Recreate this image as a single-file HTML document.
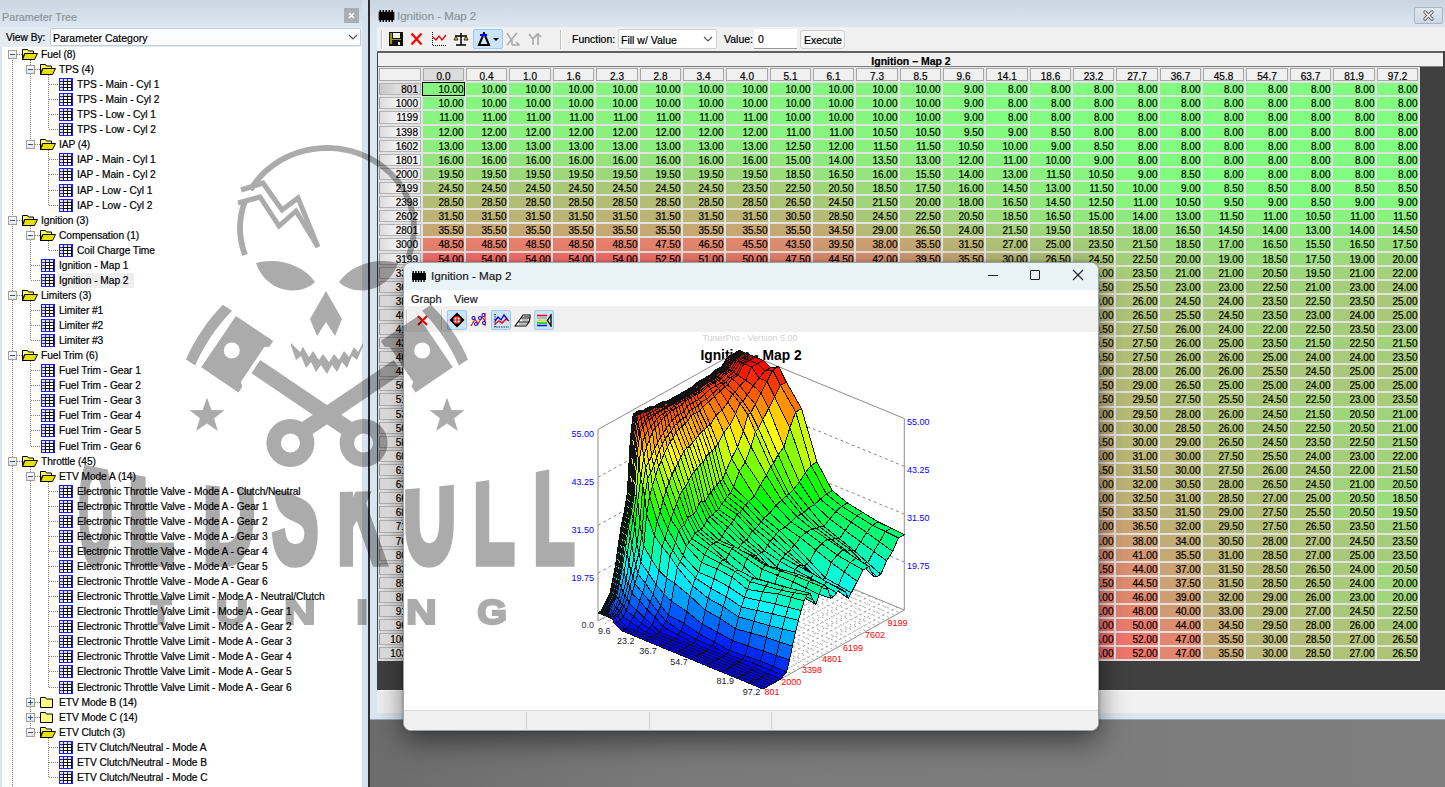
<!DOCTYPE html><html><head><meta charset="utf-8"><style>
*{margin:0;padding:0;box-sizing:border-box}
html,body{width:1445px;height:787px;overflow:hidden;background:#fff}
body{position:relative;font-family:"Liberation Sans",sans-serif;font-size:11px;color:#000}
.a{position:absolute}
.t{position:absolute;white-space:nowrap;line-height:1;-webkit-text-stroke:0.2px currentColor}
</style></head><body><div class="a" style="left:0;top:0;width:362px;height:787px;background:#fff"></div><div class="a" style="left:0;top:0;width:362px;height:27px;background:linear-gradient(#c9d5e1,#dde7f1)"></div><div class="t" style="left:2px;top:12px;font-size:10.8px;color:#8d949b">Parameter Tree</div><div class="a" style="left:344px;top:8px;width:15px;height:15px;background:#a6aeb6"></div><svg class="a" style="left:344px;top:8px" width="15" height="15"><path d="M5 5L10 10M10 5L5 10" stroke="#fff" stroke-width="1.6"/></svg><div class="a" style="left:0;top:27px;width:362px;height:20px;background:#e3ebf3"></div><div class="t" style="left:6px;top:33px;font-size:10.2px">View By:</div><div class="a" style="left:50px;top:28px;width:311px;height:18px;background:#fbfcfd;border:1px solid #c0cedc;border-radius:2px"></div><div class="t" style="left:53px;top:33px;font-size:10.5px">Parameter Category</div><svg class="a" style="left:348px;top:33px" width="10" height="8"><path d="M1 2L5 6L9 2" stroke="#555" stroke-width="1.2" fill="none"/></svg><div class="a" style="left:0;top:47px;width:2px;height:740px;background:#d9e4ef"></div><div class="a" style="left:30px;top:60px;width:1px;height:84px;background-image:linear-gradient(#000 50%,transparent 50%);background-size:1px 2px;opacity:.5"></div><div class="a" style="left:48px;top:75px;width:1px;height:54px;background-image:linear-gradient(#000 50%,transparent 50%);background-size:1px 2px;opacity:.5"></div><div class="a" style="left:48px;top:150px;width:1px;height:55px;background-image:linear-gradient(#000 50%,transparent 50%);background-size:1px 2px;opacity:.5"></div><div class="a" style="left:30px;top:226px;width:1px;height:54px;background-image:linear-gradient(#000 50%,transparent 50%);background-size:1px 2px;opacity:.5"></div><div class="a" style="left:48px;top:241px;width:1px;height:9px;background-image:linear-gradient(#000 50%,transparent 50%);background-size:1px 2px;opacity:.5"></div><div class="a" style="left:30px;top:301px;width:1px;height:39px;background-image:linear-gradient(#000 50%,transparent 50%);background-size:1px 2px;opacity:.5"></div><div class="a" style="left:30px;top:361px;width:1px;height:85px;background-image:linear-gradient(#000 50%,transparent 50%);background-size:1px 2px;opacity:.5"></div><div class="a" style="left:30px;top:467px;width:1px;height:265px;background-image:linear-gradient(#000 50%,transparent 50%);background-size:1px 2px;opacity:.5"></div><div class="a" style="left:48px;top:482px;width:1px;height:205px;background-image:linear-gradient(#000 50%,transparent 50%);background-size:1px 2px;opacity:.5"></div><div class="a" style="left:48px;top:738px;width:1px;height:39px;background-image:linear-gradient(#000 50%,transparent 50%);background-size:1px 2px;opacity:.5"></div><div class="a" style="left:12px;top:54px;width:1px;height:733px;background-image:linear-gradient(#000 50%,transparent 50%);background-size:1px 2px;opacity:.5"></div><div class="a" style="left:17px;top:54px;width:5px;height:1px;background-image:linear-gradient(90deg,#000 50%,transparent 50%);background-size:2px 1px;opacity:.5"></div><div class="a" style="left:8px;top:50px;width:9px;height:9px;border:1px solid #a0a0a0;background:linear-gradient(#fff,#e4e4e4)"></div><div class="a" style="left:10px;top:54px;width:5px;height:1px;background:#3050a0"></div><svg class="a" style="left:22px;top:49px" width="16" height="11" viewBox="0 0 16 11"><path d="M0.5 0.5h5l1 1.5h5v2.5h-9L0.5 10.5z" fill="#ffff60" stroke="#000" stroke-width="1"/><path d="M0.5 10.5L3 4.5h12.5l-3 6z" fill="#e8e000" stroke="#000" stroke-width="1"/></svg><div class="t" style="left:41px;top:50px;font-size:10.2px;letter-spacing:-0.05px">Fuel (8)</div><div class="a" style="left:35px;top:69px;width:5px;height:1px;background-image:linear-gradient(90deg,#000 50%,transparent 50%);background-size:2px 1px;opacity:.5"></div><div class="a" style="left:26px;top:65px;width:9px;height:9px;border:1px solid #a0a0a0;background:linear-gradient(#fff,#e4e4e4)"></div><div class="a" style="left:28px;top:69px;width:5px;height:1px;background:#3050a0"></div><svg class="a" style="left:40px;top:64px" width="16" height="11" viewBox="0 0 16 11"><path d="M0.5 0.5h5l1 1.5h5v2.5h-9L0.5 10.5z" fill="#ffff60" stroke="#000" stroke-width="1"/><path d="M0.5 10.5L3 4.5h12.5l-3 6z" fill="#e8e000" stroke="#000" stroke-width="1"/></svg><div class="t" style="left:59px;top:65px;font-size:10.2px;letter-spacing:-0.05px">TPS (4)</div><div class="a" style="left:49px;top:84px;width:10px;height:1px;background-image:linear-gradient(90deg,#000 50%,transparent 50%);background-size:2px 1px;opacity:.5"></div><svg class="a" style="left:59px;top:78px" width="14" height="13" viewBox="0 0 14 13" shape-rendering="crispEdges"><rect x="0" y="0" width="14" height="13" fill="#1a1aff"/><rect x="4" y="3" width="9" height="9" fill="#111"/><rect x="1" y="1" width="3" height="2" fill="#e6e6a8"/><rect x="5" y="1" width="3" height="2" fill="#e6e6a8"/><rect x="9" y="1" width="3" height="2" fill="#e6e6a8"/><rect x="1" y="4" width="3" height="2" fill="#e6e6a8"/><rect x="5" y="4" width="3" height="2" fill="#fff"/><rect x="9" y="4" width="3" height="2" fill="#fff"/><rect x="1" y="7" width="3" height="2" fill="#e6e6a8"/><rect x="5" y="7" width="3" height="2" fill="#fff"/><rect x="9" y="7" width="3" height="2" fill="#fff"/><rect x="1" y="10" width="3" height="2" fill="#e6e6a8"/><rect x="5" y="10" width="3" height="2" fill="#fff"/><rect x="9" y="10" width="3" height="2" fill="#fff"/></svg><div class="t" style="left:77px;top:80px;font-size:10.2px;letter-spacing:-0.05px">TPS - Main - Cyl 1</div><div class="a" style="left:49px;top:99px;width:10px;height:1px;background-image:linear-gradient(90deg,#000 50%,transparent 50%);background-size:2px 1px;opacity:.5"></div><svg class="a" style="left:59px;top:93px" width="14" height="13" viewBox="0 0 14 13" shape-rendering="crispEdges"><rect x="0" y="0" width="14" height="13" fill="#1a1aff"/><rect x="4" y="3" width="9" height="9" fill="#111"/><rect x="1" y="1" width="3" height="2" fill="#e6e6a8"/><rect x="5" y="1" width="3" height="2" fill="#e6e6a8"/><rect x="9" y="1" width="3" height="2" fill="#e6e6a8"/><rect x="1" y="4" width="3" height="2" fill="#e6e6a8"/><rect x="5" y="4" width="3" height="2" fill="#fff"/><rect x="9" y="4" width="3" height="2" fill="#fff"/><rect x="1" y="7" width="3" height="2" fill="#e6e6a8"/><rect x="5" y="7" width="3" height="2" fill="#fff"/><rect x="9" y="7" width="3" height="2" fill="#fff"/><rect x="1" y="10" width="3" height="2" fill="#e6e6a8"/><rect x="5" y="10" width="3" height="2" fill="#fff"/><rect x="9" y="10" width="3" height="2" fill="#fff"/></svg><div class="t" style="left:77px;top:95px;font-size:10.2px;letter-spacing:-0.05px">TPS - Main - Cyl 2</div><div class="a" style="left:49px;top:114px;width:10px;height:1px;background-image:linear-gradient(90deg,#000 50%,transparent 50%);background-size:2px 1px;opacity:.5"></div><svg class="a" style="left:59px;top:108px" width="14" height="13" viewBox="0 0 14 13" shape-rendering="crispEdges"><rect x="0" y="0" width="14" height="13" fill="#1a1aff"/><rect x="4" y="3" width="9" height="9" fill="#111"/><rect x="1" y="1" width="3" height="2" fill="#e6e6a8"/><rect x="5" y="1" width="3" height="2" fill="#e6e6a8"/><rect x="9" y="1" width="3" height="2" fill="#e6e6a8"/><rect x="1" y="4" width="3" height="2" fill="#e6e6a8"/><rect x="5" y="4" width="3" height="2" fill="#fff"/><rect x="9" y="4" width="3" height="2" fill="#fff"/><rect x="1" y="7" width="3" height="2" fill="#e6e6a8"/><rect x="5" y="7" width="3" height="2" fill="#fff"/><rect x="9" y="7" width="3" height="2" fill="#fff"/><rect x="1" y="10" width="3" height="2" fill="#e6e6a8"/><rect x="5" y="10" width="3" height="2" fill="#fff"/><rect x="9" y="10" width="3" height="2" fill="#fff"/></svg><div class="t" style="left:77px;top:110px;font-size:10.2px;letter-spacing:-0.05px">TPS - Low - Cyl 1</div><div class="a" style="left:49px;top:129px;width:10px;height:1px;background-image:linear-gradient(90deg,#000 50%,transparent 50%);background-size:2px 1px;opacity:.5"></div><svg class="a" style="left:59px;top:123px" width="14" height="13" viewBox="0 0 14 13" shape-rendering="crispEdges"><rect x="0" y="0" width="14" height="13" fill="#1a1aff"/><rect x="4" y="3" width="9" height="9" fill="#111"/><rect x="1" y="1" width="3" height="2" fill="#e6e6a8"/><rect x="5" y="1" width="3" height="2" fill="#e6e6a8"/><rect x="9" y="1" width="3" height="2" fill="#e6e6a8"/><rect x="1" y="4" width="3" height="2" fill="#e6e6a8"/><rect x="5" y="4" width="3" height="2" fill="#fff"/><rect x="9" y="4" width="3" height="2" fill="#fff"/><rect x="1" y="7" width="3" height="2" fill="#e6e6a8"/><rect x="5" y="7" width="3" height="2" fill="#fff"/><rect x="9" y="7" width="3" height="2" fill="#fff"/><rect x="1" y="10" width="3" height="2" fill="#e6e6a8"/><rect x="5" y="10" width="3" height="2" fill="#fff"/><rect x="9" y="10" width="3" height="2" fill="#fff"/></svg><div class="t" style="left:77px;top:125px;font-size:10.2px;letter-spacing:-0.05px">TPS - Low - Cyl 2</div><div class="a" style="left:35px;top:144px;width:5px;height:1px;background-image:linear-gradient(90deg,#000 50%,transparent 50%);background-size:2px 1px;opacity:.5"></div><div class="a" style="left:26px;top:140px;width:9px;height:9px;border:1px solid #a0a0a0;background:linear-gradient(#fff,#e4e4e4)"></div><div class="a" style="left:28px;top:144px;width:5px;height:1px;background:#3050a0"></div><svg class="a" style="left:40px;top:139px" width="16" height="11" viewBox="0 0 16 11"><path d="M0.5 0.5h5l1 1.5h5v2.5h-9L0.5 10.5z" fill="#ffff60" stroke="#000" stroke-width="1"/><path d="M0.5 10.5L3 4.5h12.5l-3 6z" fill="#e8e000" stroke="#000" stroke-width="1"/></svg><div class="t" style="left:59px;top:140px;font-size:10.2px;letter-spacing:-0.05px">IAP (4)</div><div class="a" style="left:49px;top:159px;width:10px;height:1px;background-image:linear-gradient(90deg,#000 50%,transparent 50%);background-size:2px 1px;opacity:.5"></div><svg class="a" style="left:59px;top:153px" width="14" height="13" viewBox="0 0 14 13" shape-rendering="crispEdges"><rect x="0" y="0" width="14" height="13" fill="#1a1aff"/><rect x="4" y="3" width="9" height="9" fill="#111"/><rect x="1" y="1" width="3" height="2" fill="#e6e6a8"/><rect x="5" y="1" width="3" height="2" fill="#e6e6a8"/><rect x="9" y="1" width="3" height="2" fill="#e6e6a8"/><rect x="1" y="4" width="3" height="2" fill="#e6e6a8"/><rect x="5" y="4" width="3" height="2" fill="#fff"/><rect x="9" y="4" width="3" height="2" fill="#fff"/><rect x="1" y="7" width="3" height="2" fill="#e6e6a8"/><rect x="5" y="7" width="3" height="2" fill="#fff"/><rect x="9" y="7" width="3" height="2" fill="#fff"/><rect x="1" y="10" width="3" height="2" fill="#e6e6a8"/><rect x="5" y="10" width="3" height="2" fill="#fff"/><rect x="9" y="10" width="3" height="2" fill="#fff"/></svg><div class="t" style="left:77px;top:155px;font-size:10.2px;letter-spacing:-0.05px">IAP - Main - Cyl 1</div><div class="a" style="left:49px;top:174px;width:10px;height:1px;background-image:linear-gradient(90deg,#000 50%,transparent 50%);background-size:2px 1px;opacity:.5"></div><svg class="a" style="left:59px;top:168px" width="14" height="13" viewBox="0 0 14 13" shape-rendering="crispEdges"><rect x="0" y="0" width="14" height="13" fill="#1a1aff"/><rect x="4" y="3" width="9" height="9" fill="#111"/><rect x="1" y="1" width="3" height="2" fill="#e6e6a8"/><rect x="5" y="1" width="3" height="2" fill="#e6e6a8"/><rect x="9" y="1" width="3" height="2" fill="#e6e6a8"/><rect x="1" y="4" width="3" height="2" fill="#e6e6a8"/><rect x="5" y="4" width="3" height="2" fill="#fff"/><rect x="9" y="4" width="3" height="2" fill="#fff"/><rect x="1" y="7" width="3" height="2" fill="#e6e6a8"/><rect x="5" y="7" width="3" height="2" fill="#fff"/><rect x="9" y="7" width="3" height="2" fill="#fff"/><rect x="1" y="10" width="3" height="2" fill="#e6e6a8"/><rect x="5" y="10" width="3" height="2" fill="#fff"/><rect x="9" y="10" width="3" height="2" fill="#fff"/></svg><div class="t" style="left:77px;top:170px;font-size:10.2px;letter-spacing:-0.05px">IAP - Main - Cyl 2</div><div class="a" style="left:49px;top:190px;width:10px;height:1px;background-image:linear-gradient(90deg,#000 50%,transparent 50%);background-size:2px 1px;opacity:.5"></div><svg class="a" style="left:59px;top:184px" width="14" height="13" viewBox="0 0 14 13" shape-rendering="crispEdges"><rect x="0" y="0" width="14" height="13" fill="#1a1aff"/><rect x="4" y="3" width="9" height="9" fill="#111"/><rect x="1" y="1" width="3" height="2" fill="#e6e6a8"/><rect x="5" y="1" width="3" height="2" fill="#e6e6a8"/><rect x="9" y="1" width="3" height="2" fill="#e6e6a8"/><rect x="1" y="4" width="3" height="2" fill="#e6e6a8"/><rect x="5" y="4" width="3" height="2" fill="#fff"/><rect x="9" y="4" width="3" height="2" fill="#fff"/><rect x="1" y="7" width="3" height="2" fill="#e6e6a8"/><rect x="5" y="7" width="3" height="2" fill="#fff"/><rect x="9" y="7" width="3" height="2" fill="#fff"/><rect x="1" y="10" width="3" height="2" fill="#e6e6a8"/><rect x="5" y="10" width="3" height="2" fill="#fff"/><rect x="9" y="10" width="3" height="2" fill="#fff"/></svg><div class="t" style="left:77px;top:186px;font-size:10.2px;letter-spacing:-0.05px">IAP - Low - Cyl 1</div><div class="a" style="left:49px;top:205px;width:10px;height:1px;background-image:linear-gradient(90deg,#000 50%,transparent 50%);background-size:2px 1px;opacity:.5"></div><svg class="a" style="left:59px;top:199px" width="14" height="13" viewBox="0 0 14 13" shape-rendering="crispEdges"><rect x="0" y="0" width="14" height="13" fill="#1a1aff"/><rect x="4" y="3" width="9" height="9" fill="#111"/><rect x="1" y="1" width="3" height="2" fill="#e6e6a8"/><rect x="5" y="1" width="3" height="2" fill="#e6e6a8"/><rect x="9" y="1" width="3" height="2" fill="#e6e6a8"/><rect x="1" y="4" width="3" height="2" fill="#e6e6a8"/><rect x="5" y="4" width="3" height="2" fill="#fff"/><rect x="9" y="4" width="3" height="2" fill="#fff"/><rect x="1" y="7" width="3" height="2" fill="#e6e6a8"/><rect x="5" y="7" width="3" height="2" fill="#fff"/><rect x="9" y="7" width="3" height="2" fill="#fff"/><rect x="1" y="10" width="3" height="2" fill="#e6e6a8"/><rect x="5" y="10" width="3" height="2" fill="#fff"/><rect x="9" y="10" width="3" height="2" fill="#fff"/></svg><div class="t" style="left:77px;top:201px;font-size:10.2px;letter-spacing:-0.05px">IAP - Low - Cyl 2</div><div class="a" style="left:17px;top:220px;width:5px;height:1px;background-image:linear-gradient(90deg,#000 50%,transparent 50%);background-size:2px 1px;opacity:.5"></div><div class="a" style="left:8px;top:216px;width:9px;height:9px;border:1px solid #a0a0a0;background:linear-gradient(#fff,#e4e4e4)"></div><div class="a" style="left:10px;top:220px;width:5px;height:1px;background:#3050a0"></div><svg class="a" style="left:22px;top:215px" width="16" height="11" viewBox="0 0 16 11"><path d="M0.5 0.5h5l1 1.5h5v2.5h-9L0.5 10.5z" fill="#ffff60" stroke="#000" stroke-width="1"/><path d="M0.5 10.5L3 4.5h12.5l-3 6z" fill="#e8e000" stroke="#000" stroke-width="1"/></svg><div class="t" style="left:41px;top:216px;font-size:10.2px;letter-spacing:-0.05px">Ignition (3)</div><div class="a" style="left:35px;top:235px;width:5px;height:1px;background-image:linear-gradient(90deg,#000 50%,transparent 50%);background-size:2px 1px;opacity:.5"></div><div class="a" style="left:26px;top:231px;width:9px;height:9px;border:1px solid #a0a0a0;background:linear-gradient(#fff,#e4e4e4)"></div><div class="a" style="left:28px;top:235px;width:5px;height:1px;background:#3050a0"></div><svg class="a" style="left:40px;top:230px" width="16" height="11" viewBox="0 0 16 11"><path d="M0.5 0.5h5l1 1.5h5v2.5h-9L0.5 10.5z" fill="#ffff60" stroke="#000" stroke-width="1"/><path d="M0.5 10.5L3 4.5h12.5l-3 6z" fill="#e8e000" stroke="#000" stroke-width="1"/></svg><div class="t" style="left:59px;top:231px;font-size:10.2px;letter-spacing:-0.05px">Compensation (1)</div><div class="a" style="left:49px;top:250px;width:10px;height:1px;background-image:linear-gradient(90deg,#000 50%,transparent 50%);background-size:2px 1px;opacity:.5"></div><svg class="a" style="left:59px;top:244px" width="14" height="13" viewBox="0 0 14 13" shape-rendering="crispEdges"><rect x="0" y="0" width="14" height="13" fill="#1a1aff"/><rect x="4" y="3" width="9" height="9" fill="#111"/><rect x="1" y="1" width="3" height="2" fill="#e6e6a8"/><rect x="5" y="1" width="3" height="2" fill="#e6e6a8"/><rect x="9" y="1" width="3" height="2" fill="#e6e6a8"/><rect x="1" y="4" width="3" height="2" fill="#e6e6a8"/><rect x="5" y="4" width="3" height="2" fill="#fff"/><rect x="9" y="4" width="3" height="2" fill="#fff"/><rect x="1" y="7" width="3" height="2" fill="#e6e6a8"/><rect x="5" y="7" width="3" height="2" fill="#fff"/><rect x="9" y="7" width="3" height="2" fill="#fff"/><rect x="1" y="10" width="3" height="2" fill="#e6e6a8"/><rect x="5" y="10" width="3" height="2" fill="#fff"/><rect x="9" y="10" width="3" height="2" fill="#fff"/></svg><div class="t" style="left:77px;top:246px;font-size:10.2px;letter-spacing:-0.05px">Coil Charge Time</div><div class="a" style="left:31px;top:265px;width:10px;height:1px;background-image:linear-gradient(90deg,#000 50%,transparent 50%);background-size:2px 1px;opacity:.5"></div><svg class="a" style="left:41px;top:259px" width="14" height="13" viewBox="0 0 14 13" shape-rendering="crispEdges"><rect x="0" y="0" width="14" height="13" fill="#1a1aff"/><rect x="4" y="3" width="9" height="9" fill="#111"/><rect x="1" y="1" width="3" height="2" fill="#e6e6a8"/><rect x="5" y="1" width="3" height="2" fill="#e6e6a8"/><rect x="9" y="1" width="3" height="2" fill="#e6e6a8"/><rect x="1" y="4" width="3" height="2" fill="#e6e6a8"/><rect x="5" y="4" width="3" height="2" fill="#fff"/><rect x="9" y="4" width="3" height="2" fill="#fff"/><rect x="1" y="7" width="3" height="2" fill="#e6e6a8"/><rect x="5" y="7" width="3" height="2" fill="#fff"/><rect x="9" y="7" width="3" height="2" fill="#fff"/><rect x="1" y="10" width="3" height="2" fill="#e6e6a8"/><rect x="5" y="10" width="3" height="2" fill="#fff"/><rect x="9" y="10" width="3" height="2" fill="#fff"/></svg><div class="t" style="left:59px;top:261px;font-size:10.2px;letter-spacing:-0.05px">Ignition - Map 1</div><div class="a" style="left:31px;top:280px;width:10px;height:1px;background-image:linear-gradient(90deg,#000 50%,transparent 50%);background-size:2px 1px;opacity:.5"></div><svg class="a" style="left:41px;top:274px" width="14" height="13" viewBox="0 0 14 13" shape-rendering="crispEdges"><rect x="0" y="0" width="14" height="13" fill="#1a1aff"/><rect x="4" y="3" width="9" height="9" fill="#111"/><rect x="1" y="1" width="3" height="2" fill="#e6e6a8"/><rect x="5" y="1" width="3" height="2" fill="#e6e6a8"/><rect x="9" y="1" width="3" height="2" fill="#e6e6a8"/><rect x="1" y="4" width="3" height="2" fill="#e6e6a8"/><rect x="5" y="4" width="3" height="2" fill="#fff"/><rect x="9" y="4" width="3" height="2" fill="#fff"/><rect x="1" y="7" width="3" height="2" fill="#e6e6a8"/><rect x="5" y="7" width="3" height="2" fill="#fff"/><rect x="9" y="7" width="3" height="2" fill="#fff"/><rect x="1" y="10" width="3" height="2" fill="#e6e6a8"/><rect x="5" y="10" width="3" height="2" fill="#fff"/><rect x="9" y="10" width="3" height="2" fill="#fff"/></svg><div class="a" style="left:58px;top:273px;width:76px;height:15px;background:#eeeeee"></div><div class="t" style="left:59px;top:276px;font-size:10.2px;letter-spacing:-0.05px">Ignition - Map 2</div><div class="a" style="left:17px;top:295px;width:5px;height:1px;background-image:linear-gradient(90deg,#000 50%,transparent 50%);background-size:2px 1px;opacity:.5"></div><div class="a" style="left:8px;top:291px;width:9px;height:9px;border:1px solid #a0a0a0;background:linear-gradient(#fff,#e4e4e4)"></div><div class="a" style="left:10px;top:295px;width:5px;height:1px;background:#3050a0"></div><svg class="a" style="left:22px;top:290px" width="16" height="11" viewBox="0 0 16 11"><path d="M0.5 0.5h5l1 1.5h5v2.5h-9L0.5 10.5z" fill="#ffff60" stroke="#000" stroke-width="1"/><path d="M0.5 10.5L3 4.5h12.5l-3 6z" fill="#e8e000" stroke="#000" stroke-width="1"/></svg><div class="t" style="left:41px;top:291px;font-size:10.2px;letter-spacing:-0.05px">Limiters (3)</div><div class="a" style="left:31px;top:310px;width:10px;height:1px;background-image:linear-gradient(90deg,#000 50%,transparent 50%);background-size:2px 1px;opacity:.5"></div><svg class="a" style="left:41px;top:304px" width="14" height="13" viewBox="0 0 14 13" shape-rendering="crispEdges"><rect x="0" y="0" width="14" height="13" fill="#1a1aff"/><rect x="4" y="3" width="9" height="9" fill="#111"/><rect x="1" y="1" width="3" height="2" fill="#e6e6a8"/><rect x="5" y="1" width="3" height="2" fill="#e6e6a8"/><rect x="9" y="1" width="3" height="2" fill="#e6e6a8"/><rect x="1" y="4" width="3" height="2" fill="#e6e6a8"/><rect x="5" y="4" width="3" height="2" fill="#fff"/><rect x="9" y="4" width="3" height="2" fill="#fff"/><rect x="1" y="7" width="3" height="2" fill="#e6e6a8"/><rect x="5" y="7" width="3" height="2" fill="#fff"/><rect x="9" y="7" width="3" height="2" fill="#fff"/><rect x="1" y="10" width="3" height="2" fill="#e6e6a8"/><rect x="5" y="10" width="3" height="2" fill="#fff"/><rect x="9" y="10" width="3" height="2" fill="#fff"/></svg><div class="t" style="left:59px;top:306px;font-size:10.2px;letter-spacing:-0.05px">Limiter #1</div><div class="a" style="left:31px;top:325px;width:10px;height:1px;background-image:linear-gradient(90deg,#000 50%,transparent 50%);background-size:2px 1px;opacity:.5"></div><svg class="a" style="left:41px;top:319px" width="14" height="13" viewBox="0 0 14 13" shape-rendering="crispEdges"><rect x="0" y="0" width="14" height="13" fill="#1a1aff"/><rect x="4" y="3" width="9" height="9" fill="#111"/><rect x="1" y="1" width="3" height="2" fill="#e6e6a8"/><rect x="5" y="1" width="3" height="2" fill="#e6e6a8"/><rect x="9" y="1" width="3" height="2" fill="#e6e6a8"/><rect x="1" y="4" width="3" height="2" fill="#e6e6a8"/><rect x="5" y="4" width="3" height="2" fill="#fff"/><rect x="9" y="4" width="3" height="2" fill="#fff"/><rect x="1" y="7" width="3" height="2" fill="#e6e6a8"/><rect x="5" y="7" width="3" height="2" fill="#fff"/><rect x="9" y="7" width="3" height="2" fill="#fff"/><rect x="1" y="10" width="3" height="2" fill="#e6e6a8"/><rect x="5" y="10" width="3" height="2" fill="#fff"/><rect x="9" y="10" width="3" height="2" fill="#fff"/></svg><div class="t" style="left:59px;top:321px;font-size:10.2px;letter-spacing:-0.05px">Limiter #2</div><div class="a" style="left:31px;top:340px;width:10px;height:1px;background-image:linear-gradient(90deg,#000 50%,transparent 50%);background-size:2px 1px;opacity:.5"></div><svg class="a" style="left:41px;top:334px" width="14" height="13" viewBox="0 0 14 13" shape-rendering="crispEdges"><rect x="0" y="0" width="14" height="13" fill="#1a1aff"/><rect x="4" y="3" width="9" height="9" fill="#111"/><rect x="1" y="1" width="3" height="2" fill="#e6e6a8"/><rect x="5" y="1" width="3" height="2" fill="#e6e6a8"/><rect x="9" y="1" width="3" height="2" fill="#e6e6a8"/><rect x="1" y="4" width="3" height="2" fill="#e6e6a8"/><rect x="5" y="4" width="3" height="2" fill="#fff"/><rect x="9" y="4" width="3" height="2" fill="#fff"/><rect x="1" y="7" width="3" height="2" fill="#e6e6a8"/><rect x="5" y="7" width="3" height="2" fill="#fff"/><rect x="9" y="7" width="3" height="2" fill="#fff"/><rect x="1" y="10" width="3" height="2" fill="#e6e6a8"/><rect x="5" y="10" width="3" height="2" fill="#fff"/><rect x="9" y="10" width="3" height="2" fill="#fff"/></svg><div class="t" style="left:59px;top:336px;font-size:10.2px;letter-spacing:-0.05px">Limiter #3</div><div class="a" style="left:17px;top:355px;width:5px;height:1px;background-image:linear-gradient(90deg,#000 50%,transparent 50%);background-size:2px 1px;opacity:.5"></div><div class="a" style="left:8px;top:351px;width:9px;height:9px;border:1px solid #a0a0a0;background:linear-gradient(#fff,#e4e4e4)"></div><div class="a" style="left:10px;top:355px;width:5px;height:1px;background:#3050a0"></div><svg class="a" style="left:22px;top:350px" width="16" height="11" viewBox="0 0 16 11"><path d="M0.5 0.5h5l1 1.5h5v2.5h-9L0.5 10.5z" fill="#ffff60" stroke="#000" stroke-width="1"/><path d="M0.5 10.5L3 4.5h12.5l-3 6z" fill="#e8e000" stroke="#000" stroke-width="1"/></svg><div class="t" style="left:41px;top:351px;font-size:10.2px;letter-spacing:-0.05px">Fuel Trim (6)</div><div class="a" style="left:31px;top:370px;width:10px;height:1px;background-image:linear-gradient(90deg,#000 50%,transparent 50%);background-size:2px 1px;opacity:.5"></div><svg class="a" style="left:41px;top:364px" width="14" height="13" viewBox="0 0 14 13" shape-rendering="crispEdges"><rect x="0" y="0" width="14" height="13" fill="#1a1aff"/><rect x="4" y="3" width="9" height="9" fill="#111"/><rect x="1" y="1" width="3" height="2" fill="#e6e6a8"/><rect x="5" y="1" width="3" height="2" fill="#e6e6a8"/><rect x="9" y="1" width="3" height="2" fill="#e6e6a8"/><rect x="1" y="4" width="3" height="2" fill="#e6e6a8"/><rect x="5" y="4" width="3" height="2" fill="#fff"/><rect x="9" y="4" width="3" height="2" fill="#fff"/><rect x="1" y="7" width="3" height="2" fill="#e6e6a8"/><rect x="5" y="7" width="3" height="2" fill="#fff"/><rect x="9" y="7" width="3" height="2" fill="#fff"/><rect x="1" y="10" width="3" height="2" fill="#e6e6a8"/><rect x="5" y="10" width="3" height="2" fill="#fff"/><rect x="9" y="10" width="3" height="2" fill="#fff"/></svg><div class="t" style="left:59px;top:366px;font-size:10.2px;letter-spacing:-0.05px">Fuel Trim - Gear 1</div><div class="a" style="left:31px;top:385px;width:10px;height:1px;background-image:linear-gradient(90deg,#000 50%,transparent 50%);background-size:2px 1px;opacity:.5"></div><svg class="a" style="left:41px;top:379px" width="14" height="13" viewBox="0 0 14 13" shape-rendering="crispEdges"><rect x="0" y="0" width="14" height="13" fill="#1a1aff"/><rect x="4" y="3" width="9" height="9" fill="#111"/><rect x="1" y="1" width="3" height="2" fill="#e6e6a8"/><rect x="5" y="1" width="3" height="2" fill="#e6e6a8"/><rect x="9" y="1" width="3" height="2" fill="#e6e6a8"/><rect x="1" y="4" width="3" height="2" fill="#e6e6a8"/><rect x="5" y="4" width="3" height="2" fill="#fff"/><rect x="9" y="4" width="3" height="2" fill="#fff"/><rect x="1" y="7" width="3" height="2" fill="#e6e6a8"/><rect x="5" y="7" width="3" height="2" fill="#fff"/><rect x="9" y="7" width="3" height="2" fill="#fff"/><rect x="1" y="10" width="3" height="2" fill="#e6e6a8"/><rect x="5" y="10" width="3" height="2" fill="#fff"/><rect x="9" y="10" width="3" height="2" fill="#fff"/></svg><div class="t" style="left:59px;top:381px;font-size:10.2px;letter-spacing:-0.05px">Fuel Trim - Gear 2</div><div class="a" style="left:31px;top:400px;width:10px;height:1px;background-image:linear-gradient(90deg,#000 50%,transparent 50%);background-size:2px 1px;opacity:.5"></div><svg class="a" style="left:41px;top:394px" width="14" height="13" viewBox="0 0 14 13" shape-rendering="crispEdges"><rect x="0" y="0" width="14" height="13" fill="#1a1aff"/><rect x="4" y="3" width="9" height="9" fill="#111"/><rect x="1" y="1" width="3" height="2" fill="#e6e6a8"/><rect x="5" y="1" width="3" height="2" fill="#e6e6a8"/><rect x="9" y="1" width="3" height="2" fill="#e6e6a8"/><rect x="1" y="4" width="3" height="2" fill="#e6e6a8"/><rect x="5" y="4" width="3" height="2" fill="#fff"/><rect x="9" y="4" width="3" height="2" fill="#fff"/><rect x="1" y="7" width="3" height="2" fill="#e6e6a8"/><rect x="5" y="7" width="3" height="2" fill="#fff"/><rect x="9" y="7" width="3" height="2" fill="#fff"/><rect x="1" y="10" width="3" height="2" fill="#e6e6a8"/><rect x="5" y="10" width="3" height="2" fill="#fff"/><rect x="9" y="10" width="3" height="2" fill="#fff"/></svg><div class="t" style="left:59px;top:396px;font-size:10.2px;letter-spacing:-0.05px">Fuel Trim - Gear 3</div><div class="a" style="left:31px;top:415px;width:10px;height:1px;background-image:linear-gradient(90deg,#000 50%,transparent 50%);background-size:2px 1px;opacity:.5"></div><svg class="a" style="left:41px;top:409px" width="14" height="13" viewBox="0 0 14 13" shape-rendering="crispEdges"><rect x="0" y="0" width="14" height="13" fill="#1a1aff"/><rect x="4" y="3" width="9" height="9" fill="#111"/><rect x="1" y="1" width="3" height="2" fill="#e6e6a8"/><rect x="5" y="1" width="3" height="2" fill="#e6e6a8"/><rect x="9" y="1" width="3" height="2" fill="#e6e6a8"/><rect x="1" y="4" width="3" height="2" fill="#e6e6a8"/><rect x="5" y="4" width="3" height="2" fill="#fff"/><rect x="9" y="4" width="3" height="2" fill="#fff"/><rect x="1" y="7" width="3" height="2" fill="#e6e6a8"/><rect x="5" y="7" width="3" height="2" fill="#fff"/><rect x="9" y="7" width="3" height="2" fill="#fff"/><rect x="1" y="10" width="3" height="2" fill="#e6e6a8"/><rect x="5" y="10" width="3" height="2" fill="#fff"/><rect x="9" y="10" width="3" height="2" fill="#fff"/></svg><div class="t" style="left:59px;top:411px;font-size:10.2px;letter-spacing:-0.05px">Fuel Trim - Gear 4</div><div class="a" style="left:31px;top:430px;width:10px;height:1px;background-image:linear-gradient(90deg,#000 50%,transparent 50%);background-size:2px 1px;opacity:.5"></div><svg class="a" style="left:41px;top:424px" width="14" height="13" viewBox="0 0 14 13" shape-rendering="crispEdges"><rect x="0" y="0" width="14" height="13" fill="#1a1aff"/><rect x="4" y="3" width="9" height="9" fill="#111"/><rect x="1" y="1" width="3" height="2" fill="#e6e6a8"/><rect x="5" y="1" width="3" height="2" fill="#e6e6a8"/><rect x="9" y="1" width="3" height="2" fill="#e6e6a8"/><rect x="1" y="4" width="3" height="2" fill="#e6e6a8"/><rect x="5" y="4" width="3" height="2" fill="#fff"/><rect x="9" y="4" width="3" height="2" fill="#fff"/><rect x="1" y="7" width="3" height="2" fill="#e6e6a8"/><rect x="5" y="7" width="3" height="2" fill="#fff"/><rect x="9" y="7" width="3" height="2" fill="#fff"/><rect x="1" y="10" width="3" height="2" fill="#e6e6a8"/><rect x="5" y="10" width="3" height="2" fill="#fff"/><rect x="9" y="10" width="3" height="2" fill="#fff"/></svg><div class="t" style="left:59px;top:426px;font-size:10.2px;letter-spacing:-0.05px">Fuel Trim - Gear 5</div><div class="a" style="left:31px;top:446px;width:10px;height:1px;background-image:linear-gradient(90deg,#000 50%,transparent 50%);background-size:2px 1px;opacity:.5"></div><svg class="a" style="left:41px;top:440px" width="14" height="13" viewBox="0 0 14 13" shape-rendering="crispEdges"><rect x="0" y="0" width="14" height="13" fill="#1a1aff"/><rect x="4" y="3" width="9" height="9" fill="#111"/><rect x="1" y="1" width="3" height="2" fill="#e6e6a8"/><rect x="5" y="1" width="3" height="2" fill="#e6e6a8"/><rect x="9" y="1" width="3" height="2" fill="#e6e6a8"/><rect x="1" y="4" width="3" height="2" fill="#e6e6a8"/><rect x="5" y="4" width="3" height="2" fill="#fff"/><rect x="9" y="4" width="3" height="2" fill="#fff"/><rect x="1" y="7" width="3" height="2" fill="#e6e6a8"/><rect x="5" y="7" width="3" height="2" fill="#fff"/><rect x="9" y="7" width="3" height="2" fill="#fff"/><rect x="1" y="10" width="3" height="2" fill="#e6e6a8"/><rect x="5" y="10" width="3" height="2" fill="#fff"/><rect x="9" y="10" width="3" height="2" fill="#fff"/></svg><div class="t" style="left:59px;top:442px;font-size:10.2px;letter-spacing:-0.05px">Fuel Trim - Gear 6</div><div class="a" style="left:17px;top:461px;width:5px;height:1px;background-image:linear-gradient(90deg,#000 50%,transparent 50%);background-size:2px 1px;opacity:.5"></div><div class="a" style="left:8px;top:457px;width:9px;height:9px;border:1px solid #a0a0a0;background:linear-gradient(#fff,#e4e4e4)"></div><div class="a" style="left:10px;top:461px;width:5px;height:1px;background:#3050a0"></div><svg class="a" style="left:22px;top:456px" width="16" height="11" viewBox="0 0 16 11"><path d="M0.5 0.5h5l1 1.5h5v2.5h-9L0.5 10.5z" fill="#ffff60" stroke="#000" stroke-width="1"/><path d="M0.5 10.5L3 4.5h12.5l-3 6z" fill="#e8e000" stroke="#000" stroke-width="1"/></svg><div class="t" style="left:41px;top:457px;font-size:10.2px;letter-spacing:-0.05px">Throttle (45)</div><div class="a" style="left:35px;top:476px;width:5px;height:1px;background-image:linear-gradient(90deg,#000 50%,transparent 50%);background-size:2px 1px;opacity:.5"></div><div class="a" style="left:26px;top:472px;width:9px;height:9px;border:1px solid #a0a0a0;background:linear-gradient(#fff,#e4e4e4)"></div><div class="a" style="left:28px;top:476px;width:5px;height:1px;background:#3050a0"></div><svg class="a" style="left:40px;top:471px" width="16" height="11" viewBox="0 0 16 11"><path d="M0.5 0.5h5l1 1.5h5v2.5h-9L0.5 10.5z" fill="#ffff60" stroke="#000" stroke-width="1"/><path d="M0.5 10.5L3 4.5h12.5l-3 6z" fill="#e8e000" stroke="#000" stroke-width="1"/></svg><div class="t" style="left:59px;top:472px;font-size:10.2px;letter-spacing:-0.05px">ETV Mode A (14)</div><div class="a" style="left:49px;top:491px;width:10px;height:1px;background-image:linear-gradient(90deg,#000 50%,transparent 50%);background-size:2px 1px;opacity:.5"></div><svg class="a" style="left:59px;top:485px" width="14" height="13" viewBox="0 0 14 13" shape-rendering="crispEdges"><rect x="0" y="0" width="14" height="13" fill="#1a1aff"/><rect x="4" y="3" width="9" height="9" fill="#111"/><rect x="1" y="1" width="3" height="2" fill="#e6e6a8"/><rect x="5" y="1" width="3" height="2" fill="#e6e6a8"/><rect x="9" y="1" width="3" height="2" fill="#e6e6a8"/><rect x="1" y="4" width="3" height="2" fill="#e6e6a8"/><rect x="5" y="4" width="3" height="2" fill="#fff"/><rect x="9" y="4" width="3" height="2" fill="#fff"/><rect x="1" y="7" width="3" height="2" fill="#e6e6a8"/><rect x="5" y="7" width="3" height="2" fill="#fff"/><rect x="9" y="7" width="3" height="2" fill="#fff"/><rect x="1" y="10" width="3" height="2" fill="#e6e6a8"/><rect x="5" y="10" width="3" height="2" fill="#fff"/><rect x="9" y="10" width="3" height="2" fill="#fff"/></svg><div class="t" style="left:77px;top:487px;font-size:10.2px;letter-spacing:-0.05px">Electronic Throttle Valve - Mode A - Clutch/Neutral</div><div class="a" style="left:49px;top:506px;width:10px;height:1px;background-image:linear-gradient(90deg,#000 50%,transparent 50%);background-size:2px 1px;opacity:.5"></div><svg class="a" style="left:59px;top:500px" width="14" height="13" viewBox="0 0 14 13" shape-rendering="crispEdges"><rect x="0" y="0" width="14" height="13" fill="#1a1aff"/><rect x="4" y="3" width="9" height="9" fill="#111"/><rect x="1" y="1" width="3" height="2" fill="#e6e6a8"/><rect x="5" y="1" width="3" height="2" fill="#e6e6a8"/><rect x="9" y="1" width="3" height="2" fill="#e6e6a8"/><rect x="1" y="4" width="3" height="2" fill="#e6e6a8"/><rect x="5" y="4" width="3" height="2" fill="#fff"/><rect x="9" y="4" width="3" height="2" fill="#fff"/><rect x="1" y="7" width="3" height="2" fill="#e6e6a8"/><rect x="5" y="7" width="3" height="2" fill="#fff"/><rect x="9" y="7" width="3" height="2" fill="#fff"/><rect x="1" y="10" width="3" height="2" fill="#e6e6a8"/><rect x="5" y="10" width="3" height="2" fill="#fff"/><rect x="9" y="10" width="3" height="2" fill="#fff"/></svg><div class="t" style="left:77px;top:502px;font-size:10.2px;letter-spacing:-0.05px">Electronic Throttle Valve - Mode A - Gear 1</div><div class="a" style="left:49px;top:521px;width:10px;height:1px;background-image:linear-gradient(90deg,#000 50%,transparent 50%);background-size:2px 1px;opacity:.5"></div><svg class="a" style="left:59px;top:515px" width="14" height="13" viewBox="0 0 14 13" shape-rendering="crispEdges"><rect x="0" y="0" width="14" height="13" fill="#1a1aff"/><rect x="4" y="3" width="9" height="9" fill="#111"/><rect x="1" y="1" width="3" height="2" fill="#e6e6a8"/><rect x="5" y="1" width="3" height="2" fill="#e6e6a8"/><rect x="9" y="1" width="3" height="2" fill="#e6e6a8"/><rect x="1" y="4" width="3" height="2" fill="#e6e6a8"/><rect x="5" y="4" width="3" height="2" fill="#fff"/><rect x="9" y="4" width="3" height="2" fill="#fff"/><rect x="1" y="7" width="3" height="2" fill="#e6e6a8"/><rect x="5" y="7" width="3" height="2" fill="#fff"/><rect x="9" y="7" width="3" height="2" fill="#fff"/><rect x="1" y="10" width="3" height="2" fill="#e6e6a8"/><rect x="5" y="10" width="3" height="2" fill="#fff"/><rect x="9" y="10" width="3" height="2" fill="#fff"/></svg><div class="t" style="left:77px;top:517px;font-size:10.2px;letter-spacing:-0.05px">Electronic Throttle Valve - Mode A - Gear 2</div><div class="a" style="left:49px;top:536px;width:10px;height:1px;background-image:linear-gradient(90deg,#000 50%,transparent 50%);background-size:2px 1px;opacity:.5"></div><svg class="a" style="left:59px;top:530px" width="14" height="13" viewBox="0 0 14 13" shape-rendering="crispEdges"><rect x="0" y="0" width="14" height="13" fill="#1a1aff"/><rect x="4" y="3" width="9" height="9" fill="#111"/><rect x="1" y="1" width="3" height="2" fill="#e6e6a8"/><rect x="5" y="1" width="3" height="2" fill="#e6e6a8"/><rect x="9" y="1" width="3" height="2" fill="#e6e6a8"/><rect x="1" y="4" width="3" height="2" fill="#e6e6a8"/><rect x="5" y="4" width="3" height="2" fill="#fff"/><rect x="9" y="4" width="3" height="2" fill="#fff"/><rect x="1" y="7" width="3" height="2" fill="#e6e6a8"/><rect x="5" y="7" width="3" height="2" fill="#fff"/><rect x="9" y="7" width="3" height="2" fill="#fff"/><rect x="1" y="10" width="3" height="2" fill="#e6e6a8"/><rect x="5" y="10" width="3" height="2" fill="#fff"/><rect x="9" y="10" width="3" height="2" fill="#fff"/></svg><div class="t" style="left:77px;top:532px;font-size:10.2px;letter-spacing:-0.05px">Electronic Throttle Valve - Mode A - Gear 3</div><div class="a" style="left:49px;top:551px;width:10px;height:1px;background-image:linear-gradient(90deg,#000 50%,transparent 50%);background-size:2px 1px;opacity:.5"></div><svg class="a" style="left:59px;top:545px" width="14" height="13" viewBox="0 0 14 13" shape-rendering="crispEdges"><rect x="0" y="0" width="14" height="13" fill="#1a1aff"/><rect x="4" y="3" width="9" height="9" fill="#111"/><rect x="1" y="1" width="3" height="2" fill="#e6e6a8"/><rect x="5" y="1" width="3" height="2" fill="#e6e6a8"/><rect x="9" y="1" width="3" height="2" fill="#e6e6a8"/><rect x="1" y="4" width="3" height="2" fill="#e6e6a8"/><rect x="5" y="4" width="3" height="2" fill="#fff"/><rect x="9" y="4" width="3" height="2" fill="#fff"/><rect x="1" y="7" width="3" height="2" fill="#e6e6a8"/><rect x="5" y="7" width="3" height="2" fill="#fff"/><rect x="9" y="7" width="3" height="2" fill="#fff"/><rect x="1" y="10" width="3" height="2" fill="#e6e6a8"/><rect x="5" y="10" width="3" height="2" fill="#fff"/><rect x="9" y="10" width="3" height="2" fill="#fff"/></svg><div class="t" style="left:77px;top:547px;font-size:10.2px;letter-spacing:-0.05px">Electronic Throttle Valve - Mode A - Gear 4</div><div class="a" style="left:49px;top:566px;width:10px;height:1px;background-image:linear-gradient(90deg,#000 50%,transparent 50%);background-size:2px 1px;opacity:.5"></div><svg class="a" style="left:59px;top:560px" width="14" height="13" viewBox="0 0 14 13" shape-rendering="crispEdges"><rect x="0" y="0" width="14" height="13" fill="#1a1aff"/><rect x="4" y="3" width="9" height="9" fill="#111"/><rect x="1" y="1" width="3" height="2" fill="#e6e6a8"/><rect x="5" y="1" width="3" height="2" fill="#e6e6a8"/><rect x="9" y="1" width="3" height="2" fill="#e6e6a8"/><rect x="1" y="4" width="3" height="2" fill="#e6e6a8"/><rect x="5" y="4" width="3" height="2" fill="#fff"/><rect x="9" y="4" width="3" height="2" fill="#fff"/><rect x="1" y="7" width="3" height="2" fill="#e6e6a8"/><rect x="5" y="7" width="3" height="2" fill="#fff"/><rect x="9" y="7" width="3" height="2" fill="#fff"/><rect x="1" y="10" width="3" height="2" fill="#e6e6a8"/><rect x="5" y="10" width="3" height="2" fill="#fff"/><rect x="9" y="10" width="3" height="2" fill="#fff"/></svg><div class="t" style="left:77px;top:562px;font-size:10.2px;letter-spacing:-0.05px">Electronic Throttle Valve - Mode A - Gear 5</div><div class="a" style="left:49px;top:581px;width:10px;height:1px;background-image:linear-gradient(90deg,#000 50%,transparent 50%);background-size:2px 1px;opacity:.5"></div><svg class="a" style="left:59px;top:575px" width="14" height="13" viewBox="0 0 14 13" shape-rendering="crispEdges"><rect x="0" y="0" width="14" height="13" fill="#1a1aff"/><rect x="4" y="3" width="9" height="9" fill="#111"/><rect x="1" y="1" width="3" height="2" fill="#e6e6a8"/><rect x="5" y="1" width="3" height="2" fill="#e6e6a8"/><rect x="9" y="1" width="3" height="2" fill="#e6e6a8"/><rect x="1" y="4" width="3" height="2" fill="#e6e6a8"/><rect x="5" y="4" width="3" height="2" fill="#fff"/><rect x="9" y="4" width="3" height="2" fill="#fff"/><rect x="1" y="7" width="3" height="2" fill="#e6e6a8"/><rect x="5" y="7" width="3" height="2" fill="#fff"/><rect x="9" y="7" width="3" height="2" fill="#fff"/><rect x="1" y="10" width="3" height="2" fill="#e6e6a8"/><rect x="5" y="10" width="3" height="2" fill="#fff"/><rect x="9" y="10" width="3" height="2" fill="#fff"/></svg><div class="t" style="left:77px;top:577px;font-size:10.2px;letter-spacing:-0.05px">Electronic Throttle Valve - Mode A - Gear 6</div><div class="a" style="left:49px;top:596px;width:10px;height:1px;background-image:linear-gradient(90deg,#000 50%,transparent 50%);background-size:2px 1px;opacity:.5"></div><svg class="a" style="left:59px;top:590px" width="14" height="13" viewBox="0 0 14 13" shape-rendering="crispEdges"><rect x="0" y="0" width="14" height="13" fill="#1a1aff"/><rect x="4" y="3" width="9" height="9" fill="#111"/><rect x="1" y="1" width="3" height="2" fill="#e6e6a8"/><rect x="5" y="1" width="3" height="2" fill="#e6e6a8"/><rect x="9" y="1" width="3" height="2" fill="#e6e6a8"/><rect x="1" y="4" width="3" height="2" fill="#e6e6a8"/><rect x="5" y="4" width="3" height="2" fill="#fff"/><rect x="9" y="4" width="3" height="2" fill="#fff"/><rect x="1" y="7" width="3" height="2" fill="#e6e6a8"/><rect x="5" y="7" width="3" height="2" fill="#fff"/><rect x="9" y="7" width="3" height="2" fill="#fff"/><rect x="1" y="10" width="3" height="2" fill="#e6e6a8"/><rect x="5" y="10" width="3" height="2" fill="#fff"/><rect x="9" y="10" width="3" height="2" fill="#fff"/></svg><div class="t" style="left:77px;top:592px;font-size:10.2px;letter-spacing:-0.05px">Electronic Throttle Valve Limit - Mode A - Neutral/Clutch</div><div class="a" style="left:49px;top:611px;width:10px;height:1px;background-image:linear-gradient(90deg,#000 50%,transparent 50%);background-size:2px 1px;opacity:.5"></div><svg class="a" style="left:59px;top:605px" width="14" height="13" viewBox="0 0 14 13" shape-rendering="crispEdges"><rect x="0" y="0" width="14" height="13" fill="#1a1aff"/><rect x="4" y="3" width="9" height="9" fill="#111"/><rect x="1" y="1" width="3" height="2" fill="#e6e6a8"/><rect x="5" y="1" width="3" height="2" fill="#e6e6a8"/><rect x="9" y="1" width="3" height="2" fill="#e6e6a8"/><rect x="1" y="4" width="3" height="2" fill="#e6e6a8"/><rect x="5" y="4" width="3" height="2" fill="#fff"/><rect x="9" y="4" width="3" height="2" fill="#fff"/><rect x="1" y="7" width="3" height="2" fill="#e6e6a8"/><rect x="5" y="7" width="3" height="2" fill="#fff"/><rect x="9" y="7" width="3" height="2" fill="#fff"/><rect x="1" y="10" width="3" height="2" fill="#e6e6a8"/><rect x="5" y="10" width="3" height="2" fill="#fff"/><rect x="9" y="10" width="3" height="2" fill="#fff"/></svg><div class="t" style="left:77px;top:607px;font-size:10.2px;letter-spacing:-0.05px">Electronic Throttle Valve Limit - Mode A - Gear 1</div><div class="a" style="left:49px;top:626px;width:10px;height:1px;background-image:linear-gradient(90deg,#000 50%,transparent 50%);background-size:2px 1px;opacity:.5"></div><svg class="a" style="left:59px;top:620px" width="14" height="13" viewBox="0 0 14 13" shape-rendering="crispEdges"><rect x="0" y="0" width="14" height="13" fill="#1a1aff"/><rect x="4" y="3" width="9" height="9" fill="#111"/><rect x="1" y="1" width="3" height="2" fill="#e6e6a8"/><rect x="5" y="1" width="3" height="2" fill="#e6e6a8"/><rect x="9" y="1" width="3" height="2" fill="#e6e6a8"/><rect x="1" y="4" width="3" height="2" fill="#e6e6a8"/><rect x="5" y="4" width="3" height="2" fill="#fff"/><rect x="9" y="4" width="3" height="2" fill="#fff"/><rect x="1" y="7" width="3" height="2" fill="#e6e6a8"/><rect x="5" y="7" width="3" height="2" fill="#fff"/><rect x="9" y="7" width="3" height="2" fill="#fff"/><rect x="1" y="10" width="3" height="2" fill="#e6e6a8"/><rect x="5" y="10" width="3" height="2" fill="#fff"/><rect x="9" y="10" width="3" height="2" fill="#fff"/></svg><div class="t" style="left:77px;top:622px;font-size:10.2px;letter-spacing:-0.05px">Electronic Throttle Valve Limit - Mode A - Gear 2</div><div class="a" style="left:49px;top:641px;width:10px;height:1px;background-image:linear-gradient(90deg,#000 50%,transparent 50%);background-size:2px 1px;opacity:.5"></div><svg class="a" style="left:59px;top:635px" width="14" height="13" viewBox="0 0 14 13" shape-rendering="crispEdges"><rect x="0" y="0" width="14" height="13" fill="#1a1aff"/><rect x="4" y="3" width="9" height="9" fill="#111"/><rect x="1" y="1" width="3" height="2" fill="#e6e6a8"/><rect x="5" y="1" width="3" height="2" fill="#e6e6a8"/><rect x="9" y="1" width="3" height="2" fill="#e6e6a8"/><rect x="1" y="4" width="3" height="2" fill="#e6e6a8"/><rect x="5" y="4" width="3" height="2" fill="#fff"/><rect x="9" y="4" width="3" height="2" fill="#fff"/><rect x="1" y="7" width="3" height="2" fill="#e6e6a8"/><rect x="5" y="7" width="3" height="2" fill="#fff"/><rect x="9" y="7" width="3" height="2" fill="#fff"/><rect x="1" y="10" width="3" height="2" fill="#e6e6a8"/><rect x="5" y="10" width="3" height="2" fill="#fff"/><rect x="9" y="10" width="3" height="2" fill="#fff"/></svg><div class="t" style="left:77px;top:637px;font-size:10.2px;letter-spacing:-0.05px">Electronic Throttle Valve Limit - Mode A - Gear 3</div><div class="a" style="left:49px;top:656px;width:10px;height:1px;background-image:linear-gradient(90deg,#000 50%,transparent 50%);background-size:2px 1px;opacity:.5"></div><svg class="a" style="left:59px;top:650px" width="14" height="13" viewBox="0 0 14 13" shape-rendering="crispEdges"><rect x="0" y="0" width="14" height="13" fill="#1a1aff"/><rect x="4" y="3" width="9" height="9" fill="#111"/><rect x="1" y="1" width="3" height="2" fill="#e6e6a8"/><rect x="5" y="1" width="3" height="2" fill="#e6e6a8"/><rect x="9" y="1" width="3" height="2" fill="#e6e6a8"/><rect x="1" y="4" width="3" height="2" fill="#e6e6a8"/><rect x="5" y="4" width="3" height="2" fill="#fff"/><rect x="9" y="4" width="3" height="2" fill="#fff"/><rect x="1" y="7" width="3" height="2" fill="#e6e6a8"/><rect x="5" y="7" width="3" height="2" fill="#fff"/><rect x="9" y="7" width="3" height="2" fill="#fff"/><rect x="1" y="10" width="3" height="2" fill="#e6e6a8"/><rect x="5" y="10" width="3" height="2" fill="#fff"/><rect x="9" y="10" width="3" height="2" fill="#fff"/></svg><div class="t" style="left:77px;top:652px;font-size:10.2px;letter-spacing:-0.05px">Electronic Throttle Valve Limit - Mode A - Gear 4</div><div class="a" style="left:49px;top:671px;width:10px;height:1px;background-image:linear-gradient(90deg,#000 50%,transparent 50%);background-size:2px 1px;opacity:.5"></div><svg class="a" style="left:59px;top:665px" width="14" height="13" viewBox="0 0 14 13" shape-rendering="crispEdges"><rect x="0" y="0" width="14" height="13" fill="#1a1aff"/><rect x="4" y="3" width="9" height="9" fill="#111"/><rect x="1" y="1" width="3" height="2" fill="#e6e6a8"/><rect x="5" y="1" width="3" height="2" fill="#e6e6a8"/><rect x="9" y="1" width="3" height="2" fill="#e6e6a8"/><rect x="1" y="4" width="3" height="2" fill="#e6e6a8"/><rect x="5" y="4" width="3" height="2" fill="#fff"/><rect x="9" y="4" width="3" height="2" fill="#fff"/><rect x="1" y="7" width="3" height="2" fill="#e6e6a8"/><rect x="5" y="7" width="3" height="2" fill="#fff"/><rect x="9" y="7" width="3" height="2" fill="#fff"/><rect x="1" y="10" width="3" height="2" fill="#e6e6a8"/><rect x="5" y="10" width="3" height="2" fill="#fff"/><rect x="9" y="10" width="3" height="2" fill="#fff"/></svg><div class="t" style="left:77px;top:667px;font-size:10.2px;letter-spacing:-0.05px">Electronic Throttle Valve Limit - Mode A - Gear 5</div><div class="a" style="left:49px;top:687px;width:10px;height:1px;background-image:linear-gradient(90deg,#000 50%,transparent 50%);background-size:2px 1px;opacity:.5"></div><svg class="a" style="left:59px;top:681px" width="14" height="13" viewBox="0 0 14 13" shape-rendering="crispEdges"><rect x="0" y="0" width="14" height="13" fill="#1a1aff"/><rect x="4" y="3" width="9" height="9" fill="#111"/><rect x="1" y="1" width="3" height="2" fill="#e6e6a8"/><rect x="5" y="1" width="3" height="2" fill="#e6e6a8"/><rect x="9" y="1" width="3" height="2" fill="#e6e6a8"/><rect x="1" y="4" width="3" height="2" fill="#e6e6a8"/><rect x="5" y="4" width="3" height="2" fill="#fff"/><rect x="9" y="4" width="3" height="2" fill="#fff"/><rect x="1" y="7" width="3" height="2" fill="#e6e6a8"/><rect x="5" y="7" width="3" height="2" fill="#fff"/><rect x="9" y="7" width="3" height="2" fill="#fff"/><rect x="1" y="10" width="3" height="2" fill="#e6e6a8"/><rect x="5" y="10" width="3" height="2" fill="#fff"/><rect x="9" y="10" width="3" height="2" fill="#fff"/></svg><div class="t" style="left:77px;top:683px;font-size:10.2px;letter-spacing:-0.05px">Electronic Throttle Valve Limit - Mode A - Gear 6</div><div class="a" style="left:35px;top:702px;width:5px;height:1px;background-image:linear-gradient(90deg,#000 50%,transparent 50%);background-size:2px 1px;opacity:.5"></div><div class="a" style="left:26px;top:698px;width:9px;height:9px;border:1px solid #a0a0a0;background:linear-gradient(#fff,#e4e4e4)"></div><div class="a" style="left:28px;top:702px;width:5px;height:1px;background:#3050a0"></div><div class="a" style="left:30px;top:700px;width:1px;height:5px;background:#3050a0"></div><svg class="a" style="left:40px;top:696px" width="14" height="12" viewBox="0 0 14 12"><path d="M0.5 1.5h5l1 1.5h6v8.5h-12z" fill="#ffff80" stroke="#000" stroke-width="1"/></svg><div class="t" style="left:59px;top:698px;font-size:10.2px;letter-spacing:-0.05px">ETV Mode B (14)</div><div class="a" style="left:35px;top:717px;width:5px;height:1px;background-image:linear-gradient(90deg,#000 50%,transparent 50%);background-size:2px 1px;opacity:.5"></div><div class="a" style="left:26px;top:713px;width:9px;height:9px;border:1px solid #a0a0a0;background:linear-gradient(#fff,#e4e4e4)"></div><div class="a" style="left:28px;top:717px;width:5px;height:1px;background:#3050a0"></div><div class="a" style="left:30px;top:715px;width:1px;height:5px;background:#3050a0"></div><svg class="a" style="left:40px;top:711px" width="14" height="12" viewBox="0 0 14 12"><path d="M0.5 1.5h5l1 1.5h6v8.5h-12z" fill="#ffff80" stroke="#000" stroke-width="1"/></svg><div class="t" style="left:59px;top:713px;font-size:10.2px;letter-spacing:-0.05px">ETV Mode C (14)</div><div class="a" style="left:35px;top:732px;width:5px;height:1px;background-image:linear-gradient(90deg,#000 50%,transparent 50%);background-size:2px 1px;opacity:.5"></div><div class="a" style="left:26px;top:728px;width:9px;height:9px;border:1px solid #a0a0a0;background:linear-gradient(#fff,#e4e4e4)"></div><div class="a" style="left:28px;top:732px;width:5px;height:1px;background:#3050a0"></div><svg class="a" style="left:40px;top:727px" width="16" height="11" viewBox="0 0 16 11"><path d="M0.5 0.5h5l1 1.5h5v2.5h-9L0.5 10.5z" fill="#ffff60" stroke="#000" stroke-width="1"/><path d="M0.5 10.5L3 4.5h12.5l-3 6z" fill="#e8e000" stroke="#000" stroke-width="1"/></svg><div class="t" style="left:59px;top:728px;font-size:10.2px;letter-spacing:-0.05px">ETV Clutch (3)</div><div class="a" style="left:49px;top:747px;width:10px;height:1px;background-image:linear-gradient(90deg,#000 50%,transparent 50%);background-size:2px 1px;opacity:.5"></div><svg class="a" style="left:59px;top:741px" width="14" height="13" viewBox="0 0 14 13" shape-rendering="crispEdges"><rect x="0" y="0" width="14" height="13" fill="#1a1aff"/><rect x="4" y="3" width="9" height="9" fill="#111"/><rect x="1" y="1" width="3" height="2" fill="#e6e6a8"/><rect x="5" y="1" width="3" height="2" fill="#e6e6a8"/><rect x="9" y="1" width="3" height="2" fill="#e6e6a8"/><rect x="1" y="4" width="3" height="2" fill="#e6e6a8"/><rect x="5" y="4" width="3" height="2" fill="#fff"/><rect x="9" y="4" width="3" height="2" fill="#fff"/><rect x="1" y="7" width="3" height="2" fill="#e6e6a8"/><rect x="5" y="7" width="3" height="2" fill="#fff"/><rect x="9" y="7" width="3" height="2" fill="#fff"/><rect x="1" y="10" width="3" height="2" fill="#e6e6a8"/><rect x="5" y="10" width="3" height="2" fill="#fff"/><rect x="9" y="10" width="3" height="2" fill="#fff"/></svg><div class="t" style="left:77px;top:743px;font-size:10.2px;letter-spacing:-0.05px">ETV Clutch/Neutral - Mode A</div><div class="a" style="left:49px;top:762px;width:10px;height:1px;background-image:linear-gradient(90deg,#000 50%,transparent 50%);background-size:2px 1px;opacity:.5"></div><svg class="a" style="left:59px;top:756px" width="14" height="13" viewBox="0 0 14 13" shape-rendering="crispEdges"><rect x="0" y="0" width="14" height="13" fill="#1a1aff"/><rect x="4" y="3" width="9" height="9" fill="#111"/><rect x="1" y="1" width="3" height="2" fill="#e6e6a8"/><rect x="5" y="1" width="3" height="2" fill="#e6e6a8"/><rect x="9" y="1" width="3" height="2" fill="#e6e6a8"/><rect x="1" y="4" width="3" height="2" fill="#e6e6a8"/><rect x="5" y="4" width="3" height="2" fill="#fff"/><rect x="9" y="4" width="3" height="2" fill="#fff"/><rect x="1" y="7" width="3" height="2" fill="#e6e6a8"/><rect x="5" y="7" width="3" height="2" fill="#fff"/><rect x="9" y="7" width="3" height="2" fill="#fff"/><rect x="1" y="10" width="3" height="2" fill="#e6e6a8"/><rect x="5" y="10" width="3" height="2" fill="#fff"/><rect x="9" y="10" width="3" height="2" fill="#fff"/></svg><div class="t" style="left:77px;top:758px;font-size:10.2px;letter-spacing:-0.05px">ETV Clutch/Neutral - Mode B</div><div class="a" style="left:49px;top:777px;width:10px;height:1px;background-image:linear-gradient(90deg,#000 50%,transparent 50%);background-size:2px 1px;opacity:.5"></div><svg class="a" style="left:59px;top:771px" width="14" height="13" viewBox="0 0 14 13" shape-rendering="crispEdges"><rect x="0" y="0" width="14" height="13" fill="#1a1aff"/><rect x="4" y="3" width="9" height="9" fill="#111"/><rect x="1" y="1" width="3" height="2" fill="#e6e6a8"/><rect x="5" y="1" width="3" height="2" fill="#e6e6a8"/><rect x="9" y="1" width="3" height="2" fill="#e6e6a8"/><rect x="1" y="4" width="3" height="2" fill="#e6e6a8"/><rect x="5" y="4" width="3" height="2" fill="#fff"/><rect x="9" y="4" width="3" height="2" fill="#fff"/><rect x="1" y="7" width="3" height="2" fill="#e6e6a8"/><rect x="5" y="7" width="3" height="2" fill="#fff"/><rect x="9" y="7" width="3" height="2" fill="#fff"/><rect x="1" y="10" width="3" height="2" fill="#e6e6a8"/><rect x="5" y="10" width="3" height="2" fill="#fff"/><rect x="9" y="10" width="3" height="2" fill="#fff"/></svg><div class="t" style="left:77px;top:773px;font-size:10.2px;letter-spacing:-0.05px">ETV Clutch/Neutral - Mode C</div><div class="a" style="left:362px;top:0;width:6px;height:787px;background:#d5e1ed"></div><div class="a" style="left:368px;top:0;width:2px;height:787px;background:#2e2e2e"></div><div class="a" style="left:370px;top:720px;width:1075px;height:67px;background:linear-gradient(90deg,#6c6c6c,#7a7a7a 30%,#7e7e7e)"></div><div class="a" style="left:370px;top:0;width:1075px;height:720px;background:#dae6f2"></div><div class="a" style="left:370px;top:0;width:1075px;height:27px;background:linear-gradient(#c8d4e0,#dce7f1)"></div><div class="a" style="left:370px;top:719px;width:1075px;height:1px;background:#9aa6b2"></div><svg class="a" style="left:378px;top:10px" width="17" height="12" viewBox="0 0 17 13"><rect x="0" y="2" width="17" height="9" fill="#000"/><rect x="1.0" y="0" width="1.6" height="13" fill="#000"/><rect x="4.2" y="0" width="1.6" height="13" fill="#000"/><rect x="7.4" y="0" width="1.6" height="13" fill="#000"/><rect x="10.6" y="0" width="1.6" height="13" fill="#000"/><rect x="13.8" y="0" width="1.6" height="13" fill="#000"/></svg><div class="t" style="left:397px;top:11px;font-size:11.5px;color:#8d949b">Ignition - Map 2</div><div class="a" style="left:1414px;top:7px;width:29px;height:17px;border:1px solid #a8b4c4;border-radius:2px;background:linear-gradient(#dfe7ef,#cdd8e4)"></div><svg class="a" style="left:1421px;top:9px" width="15" height="13"><path d="M4 3L11 10M11 3L4 10" stroke="#555" stroke-width="3.2" stroke-linecap="round"/><path d="M4 3L11 10M11 3L4 10" stroke="#fff" stroke-width="1.6" stroke-linecap="round"/></svg><div class="a" style="left:377px;top:27px;width:1068px;height:24px;background:#f0f0f0"></div><div class="a" style="left:381px;top:30px;width:2px;height:19px;border-left:1px solid #c0c0c0;border-right:1px solid #fff"></div><svg class="a" style="left:389px;top:32px" width="14" height="14" viewBox="0 0 14 14" shape-rendering="crispEdges"><rect x="0" y="0" width="14" height="14" fill="#111"/><rect x="1" y="1" width="2" height="11" fill="#9a9a00"/><rect x="3" y="7" width="9" height="1" fill="#9a9a00"/><rect x="4" y="1" width="7" height="5" fill="#f4f4f4"/><rect x="9" y="10" width="2" height="3" fill="#eee"/></svg><svg class="a" style="left:410px;top:32px" width="13" height="14"><path d="M1.5 1.5L11.5 12.5M11.5 1.5L1.5 12.5" stroke="#f00" stroke-width="2.2"/></svg><svg class="a" style="left:432px;top:32px" width="15" height="14"><path d="M0.5 0v13.5h14" stroke="#000" stroke-dasharray="1 1" fill="none"/><path d="M1 5L4 8L7 4L10 8L14 3" stroke="#e00" stroke-width="1.3" fill="none"/></svg><svg class="a" style="left:453px;top:32px" width="16" height="14"><path d="M8 1V13M3 13H13M2 4H14" stroke="#000" stroke-width="1.5"/><path d="M1 8L3 4L5 8Z M11 8L13 4L15 8Z" fill="#dd0" stroke="#000" stroke-width=".8"/></svg><div class="a" style="left:473px;top:29px;width:30px;height:20px;background:#cce4f7;border:1px solid #99c9ef;border-radius:2px"></div><svg class="a" style="left:477px;top:32px" width="24" height="14"><path d="M2 13L7 1L12 13Z" fill="none" stroke="#000" stroke-width="2"/><rect x="3" y="2" width="7" height="2" fill="#00f"/><path d="M16 6h6l-3 3z" fill="#000"/></svg><svg class="a" style="left:505px;top:32px" width="15" height="14"><path d="M2 1L7 9V13M12 1L2 13M7 13H14L11 10" stroke="#aaa" stroke-width="1.6" fill="none"/></svg><svg class="a" style="left:527px;top:32px" width="15" height="14"><path d="M2 2L6 7V13M10 2L6 7M11 13V2M8 5L11 2L14 5" stroke="#aaa" stroke-width="1.6" fill="none"/></svg><div class="a" style="left:560px;top:30px;width:2px;height:19px;border-left:1px solid #c0c0c0;border-right:1px solid #fff"></div><div class="t" style="left:572px;top:34px;font-size:10.5px">Function:</div><div class="a" style="left:618px;top:29px;width:99px;height:20px;background:#fff;border:1px solid #d0d0d0;border-radius:2px"></div><div class="t" style="left:621px;top:35px;font-size:10.5px">Fill w/ Value</div><svg class="a" style="left:703px;top:36px" width="10" height="7"><path d="M1 1L5 5L9 1" stroke="#555" stroke-width="1.1" fill="none"/></svg><div class="t" style="left:724px;top:34px;font-size:10.5px">Value:</div><div class="a" style="left:754px;top:29px;width:43px;height:20px;background:#fff;border-bottom:1px solid #999"></div><div class="t" style="left:758px;top:34px;font-size:10.5px">0</div><div class="a" style="left:800px;top:30px;width:45px;height:19px;background:#f7f7f7;border:1px solid #d0d0d0;border-radius:3px"></div><div class="t" style="left:804px;top:35px;font-size:10.5px">Execute</div><div class="a" style="left:377px;top:51px;width:1068px;height:639px;background:#404040"></div><div class="a" style="left:377px;top:51px;width:1066px;height:2px;background:#606060"></div><div class="a" style="left:378px;top:53px;width:1065px;height:14px;background:#f0f0f0;border-bottom:1px solid #808080"></div><div class="t" style="left:0;top:56px;width:1822px;text-align:center;font-size:10.5px;font-weight:bold">Ignition &ndash; Map 2</div><div class="a" style="left:378px;top:67px;width:1042px;height:15px;background:#e6e6e6"></div><div class="a" style="left:379px;top:68px;width:42px;height:13px;background:#f0f0f0;border:1px solid #a8a8a8"></div><div class="a" style="left:423px;top:68px;width:41px;height:13px;background:#dcdcdc;border:1px solid #a8a8a8"></div><div class="t" style="left:422px;top:72px;width:43px;text-align:center;font-size:10px">0.0</div><div class="a" style="left:466px;top:68px;width:41px;height:13px;background:#f0f0f0;border:1px solid #a8a8a8"></div><div class="t" style="left:465px;top:72px;width:43px;text-align:center;font-size:10px">0.4</div><div class="a" style="left:509px;top:68px;width:42px;height:13px;background:#f0f0f0;border:1px solid #a8a8a8"></div><div class="t" style="left:508px;top:72px;width:44px;text-align:center;font-size:10px">1.0</div><div class="a" style="left:553px;top:68px;width:41px;height:13px;background:#f0f0f0;border:1px solid #a8a8a8"></div><div class="t" style="left:552px;top:72px;width:43px;text-align:center;font-size:10px">1.6</div><div class="a" style="left:596px;top:68px;width:42px;height:13px;background:#f0f0f0;border:1px solid #a8a8a8"></div><div class="t" style="left:595px;top:72px;width:44px;text-align:center;font-size:10px">2.3</div><div class="a" style="left:640px;top:68px;width:41px;height:13px;background:#f0f0f0;border:1px solid #a8a8a8"></div><div class="t" style="left:639px;top:72px;width:43px;text-align:center;font-size:10px">2.8</div><div class="a" style="left:683px;top:68px;width:41px;height:13px;background:#f0f0f0;border:1px solid #a8a8a8"></div><div class="t" style="left:682px;top:72px;width:43px;text-align:center;font-size:10px">3.4</div><div class="a" style="left:726px;top:68px;width:42px;height:13px;background:#f0f0f0;border:1px solid #a8a8a8"></div><div class="t" style="left:725px;top:72px;width:44px;text-align:center;font-size:10px">4.0</div><div class="a" style="left:770px;top:68px;width:41px;height:13px;background:#f0f0f0;border:1px solid #a8a8a8"></div><div class="t" style="left:769px;top:72px;width:43px;text-align:center;font-size:10px">5.1</div><div class="a" style="left:813px;top:68px;width:41px;height:13px;background:#f0f0f0;border:1px solid #a8a8a8"></div><div class="t" style="left:812px;top:72px;width:43px;text-align:center;font-size:10px">6.1</div><div class="a" style="left:856px;top:68px;width:42px;height:13px;background:#f0f0f0;border:1px solid #a8a8a8"></div><div class="t" style="left:855px;top:72px;width:44px;text-align:center;font-size:10px">7.3</div><div class="a" style="left:900px;top:68px;width:41px;height:13px;background:#f0f0f0;border:1px solid #a8a8a8"></div><div class="t" style="left:899px;top:72px;width:43px;text-align:center;font-size:10px">8.5</div><div class="a" style="left:943px;top:68px;width:41px;height:13px;background:#f0f0f0;border:1px solid #a8a8a8"></div><div class="t" style="left:942px;top:72px;width:43px;text-align:center;font-size:10px">9.6</div><div class="a" style="left:986px;top:68px;width:42px;height:13px;background:#f0f0f0;border:1px solid #a8a8a8"></div><div class="t" style="left:985px;top:72px;width:44px;text-align:center;font-size:10px">14.1</div><div class="a" style="left:1030px;top:68px;width:41px;height:13px;background:#f0f0f0;border:1px solid #a8a8a8"></div><div class="t" style="left:1029px;top:72px;width:43px;text-align:center;font-size:10px">18.6</div><div class="a" style="left:1073px;top:68px;width:41px;height:13px;background:#f0f0f0;border:1px solid #a8a8a8"></div><div class="t" style="left:1072px;top:72px;width:43px;text-align:center;font-size:10px">23.2</div><div class="a" style="left:1116px;top:68px;width:42px;height:13px;background:#f0f0f0;border:1px solid #a8a8a8"></div><div class="t" style="left:1115px;top:72px;width:44px;text-align:center;font-size:10px">27.7</div><div class="a" style="left:1160px;top:68px;width:41px;height:13px;background:#f0f0f0;border:1px solid #a8a8a8"></div><div class="t" style="left:1159px;top:72px;width:43px;text-align:center;font-size:10px">36.7</div><div class="a" style="left:1203px;top:68px;width:41px;height:13px;background:#f0f0f0;border:1px solid #a8a8a8"></div><div class="t" style="left:1202px;top:72px;width:43px;text-align:center;font-size:10px">45.8</div><div class="a" style="left:1246px;top:68px;width:42px;height:13px;background:#f0f0f0;border:1px solid #a8a8a8"></div><div class="t" style="left:1245px;top:72px;width:44px;text-align:center;font-size:10px">54.7</div><div class="a" style="left:1290px;top:68px;width:41px;height:13px;background:#f0f0f0;border:1px solid #a8a8a8"></div><div class="t" style="left:1289px;top:72px;width:43px;text-align:center;font-size:10px">63.7</div><div class="a" style="left:1333px;top:68px;width:42px;height:13px;background:#f0f0f0;border:1px solid #a8a8a8"></div><div class="t" style="left:1332px;top:72px;width:44px;text-align:center;font-size:10px">81.9</div><div class="a" style="left:1377px;top:68px;width:41px;height:13px;background:#f0f0f0;border:1px solid #a8a8a8"></div><div class="t" style="left:1376px;top:72px;width:43px;text-align:center;font-size:10px">97.2</div><div class="a" style="left:378px;top:82px;width:1042px;height:579px;background:#e2e2e2"></div><div class="a" style="left:379px;top:83px;width:42px;height:12px;background:linear-gradient(90deg,#c8c8c8,#dcdcdc 40%,#d8d8d8);border:1px solid #b4b4b4;border-left-color:#9a9a9a"></div><div class="t" style="left:379px;top:85px;width:39px;text-align:right;font-size:10px">801</div><div class="a" style="left:422px;top:82px;width:43px;height:14px;background:#85f67f;border:1px solid #000"></div><div class="t" style="left:422px;top:85px;width:41.5px;text-align:right;font-size:10px">10.00</div><div class="a" style="left:466px;top:83px;width:41px;height:12px;background:#85f67f"></div><div class="t" style="left:465px;top:85px;width:41.5px;text-align:right;font-size:10px">10.00</div><div class="a" style="left:509px;top:83px;width:42px;height:12px;background:#85f67f"></div><div class="t" style="left:508px;top:85px;width:42.5px;text-align:right;font-size:10px">10.00</div><div class="a" style="left:553px;top:83px;width:41px;height:12px;background:#85f67f"></div><div class="t" style="left:552px;top:85px;width:41.5px;text-align:right;font-size:10px">10.00</div><div class="a" style="left:596px;top:83px;width:42px;height:12px;background:#85f67f"></div><div class="t" style="left:595px;top:85px;width:42.5px;text-align:right;font-size:10px">10.00</div><div class="a" style="left:640px;top:83px;width:41px;height:12px;background:#85f67f"></div><div class="t" style="left:639px;top:85px;width:41.5px;text-align:right;font-size:10px">10.00</div><div class="a" style="left:683px;top:83px;width:41px;height:12px;background:#85f67f"></div><div class="t" style="left:682px;top:85px;width:41.5px;text-align:right;font-size:10px">10.00</div><div class="a" style="left:726px;top:83px;width:42px;height:12px;background:#85f67f"></div><div class="t" style="left:725px;top:85px;width:42.5px;text-align:right;font-size:10px">10.00</div><div class="a" style="left:770px;top:83px;width:41px;height:12px;background:#85f67f"></div><div class="t" style="left:769px;top:85px;width:41.5px;text-align:right;font-size:10px">10.00</div><div class="a" style="left:813px;top:83px;width:41px;height:12px;background:#85f67f"></div><div class="t" style="left:812px;top:85px;width:41.5px;text-align:right;font-size:10px">10.00</div><div class="a" style="left:856px;top:83px;width:42px;height:12px;background:#85f67f"></div><div class="t" style="left:855px;top:85px;width:42.5px;text-align:right;font-size:10px">10.00</div><div class="a" style="left:900px;top:83px;width:41px;height:12px;background:#85f67f"></div><div class="t" style="left:899px;top:85px;width:41.5px;text-align:right;font-size:10px">10.00</div><div class="a" style="left:943px;top:83px;width:41px;height:12px;background:#83f980"></div><div class="t" style="left:942px;top:85px;width:41.5px;text-align:right;font-size:10px">9.00</div><div class="a" style="left:986px;top:83px;width:42px;height:12px;background:#80fc80"></div><div class="t" style="left:985px;top:85px;width:42.5px;text-align:right;font-size:10px">8.00</div><div class="a" style="left:1030px;top:83px;width:41px;height:12px;background:#80fc80"></div><div class="t" style="left:1029px;top:85px;width:41.5px;text-align:right;font-size:10px">8.00</div><div class="a" style="left:1073px;top:83px;width:41px;height:12px;background:#80fc80"></div><div class="t" style="left:1072px;top:85px;width:41.5px;text-align:right;font-size:10px">8.00</div><div class="a" style="left:1116px;top:83px;width:42px;height:12px;background:#80fc80"></div><div class="t" style="left:1115px;top:85px;width:42.5px;text-align:right;font-size:10px">8.00</div><div class="a" style="left:1160px;top:83px;width:41px;height:12px;background:#80fc80"></div><div class="t" style="left:1159px;top:85px;width:41.5px;text-align:right;font-size:10px">8.00</div><div class="a" style="left:1203px;top:83px;width:41px;height:12px;background:#80fc80"></div><div class="t" style="left:1202px;top:85px;width:41.5px;text-align:right;font-size:10px">8.00</div><div class="a" style="left:1246px;top:83px;width:42px;height:12px;background:#80fc80"></div><div class="t" style="left:1245px;top:85px;width:42.5px;text-align:right;font-size:10px">8.00</div><div class="a" style="left:1290px;top:83px;width:41px;height:12px;background:#80fc80"></div><div class="t" style="left:1289px;top:85px;width:41.5px;text-align:right;font-size:10px">8.00</div><div class="a" style="left:1333px;top:83px;width:42px;height:12px;background:#80fc80"></div><div class="t" style="left:1332px;top:85px;width:42.5px;text-align:right;font-size:10px">8.00</div><div class="a" style="left:1377px;top:83px;width:41px;height:12px;background:#80fc80"></div><div class="t" style="left:1376px;top:85px;width:41.5px;text-align:right;font-size:10px">8.00</div><div class="a" style="left:379px;top:97px;width:42px;height:12px;background:linear-gradient(90deg,#dcdcdc,#f2f2f2 40%,#f0f0f0);border:1px solid #b4b4b4;border-left-color:#9a9a9a"></div><div class="t" style="left:379px;top:99px;width:39px;text-align:right;font-size:10px">1000</div><div class="a" style="left:423px;top:97px;width:41px;height:12px;background:#85f67f"></div><div class="t" style="left:422px;top:99px;width:41.5px;text-align:right;font-size:10px">10.00</div><div class="a" style="left:466px;top:97px;width:41px;height:12px;background:#85f67f"></div><div class="t" style="left:465px;top:99px;width:41.5px;text-align:right;font-size:10px">10.00</div><div class="a" style="left:509px;top:97px;width:42px;height:12px;background:#85f67f"></div><div class="t" style="left:508px;top:99px;width:42.5px;text-align:right;font-size:10px">10.00</div><div class="a" style="left:553px;top:97px;width:41px;height:12px;background:#85f67f"></div><div class="t" style="left:552px;top:99px;width:41.5px;text-align:right;font-size:10px">10.00</div><div class="a" style="left:596px;top:97px;width:42px;height:12px;background:#85f67f"></div><div class="t" style="left:595px;top:99px;width:42.5px;text-align:right;font-size:10px">10.00</div><div class="a" style="left:640px;top:97px;width:41px;height:12px;background:#85f67f"></div><div class="t" style="left:639px;top:99px;width:41.5px;text-align:right;font-size:10px">10.00</div><div class="a" style="left:683px;top:97px;width:41px;height:12px;background:#85f67f"></div><div class="t" style="left:682px;top:99px;width:41.5px;text-align:right;font-size:10px">10.00</div><div class="a" style="left:726px;top:97px;width:42px;height:12px;background:#85f67f"></div><div class="t" style="left:725px;top:99px;width:42.5px;text-align:right;font-size:10px">10.00</div><div class="a" style="left:770px;top:97px;width:41px;height:12px;background:#85f67f"></div><div class="t" style="left:769px;top:99px;width:41.5px;text-align:right;font-size:10px">10.00</div><div class="a" style="left:813px;top:97px;width:41px;height:12px;background:#85f67f"></div><div class="t" style="left:812px;top:99px;width:41.5px;text-align:right;font-size:10px">10.00</div><div class="a" style="left:856px;top:97px;width:42px;height:12px;background:#85f67f"></div><div class="t" style="left:855px;top:99px;width:42.5px;text-align:right;font-size:10px">10.00</div><div class="a" style="left:900px;top:97px;width:41px;height:12px;background:#85f67f"></div><div class="t" style="left:899px;top:99px;width:41.5px;text-align:right;font-size:10px">10.00</div><div class="a" style="left:943px;top:97px;width:41px;height:12px;background:#83f980"></div><div class="t" style="left:942px;top:99px;width:41.5px;text-align:right;font-size:10px">9.00</div><div class="a" style="left:986px;top:97px;width:42px;height:12px;background:#80fc80"></div><div class="t" style="left:985px;top:99px;width:42.5px;text-align:right;font-size:10px">8.00</div><div class="a" style="left:1030px;top:97px;width:41px;height:12px;background:#80fc80"></div><div class="t" style="left:1029px;top:99px;width:41.5px;text-align:right;font-size:10px">8.00</div><div class="a" style="left:1073px;top:97px;width:41px;height:12px;background:#80fc80"></div><div class="t" style="left:1072px;top:99px;width:41.5px;text-align:right;font-size:10px">8.00</div><div class="a" style="left:1116px;top:97px;width:42px;height:12px;background:#80fc80"></div><div class="t" style="left:1115px;top:99px;width:42.5px;text-align:right;font-size:10px">8.00</div><div class="a" style="left:1160px;top:97px;width:41px;height:12px;background:#80fc80"></div><div class="t" style="left:1159px;top:99px;width:41.5px;text-align:right;font-size:10px">8.00</div><div class="a" style="left:1203px;top:97px;width:41px;height:12px;background:#80fc80"></div><div class="t" style="left:1202px;top:99px;width:41.5px;text-align:right;font-size:10px">8.00</div><div class="a" style="left:1246px;top:97px;width:42px;height:12px;background:#80fc80"></div><div class="t" style="left:1245px;top:99px;width:42.5px;text-align:right;font-size:10px">8.00</div><div class="a" style="left:1290px;top:97px;width:41px;height:12px;background:#80fc80"></div><div class="t" style="left:1289px;top:99px;width:41.5px;text-align:right;font-size:10px">8.00</div><div class="a" style="left:1333px;top:97px;width:42px;height:12px;background:#80fc80"></div><div class="t" style="left:1332px;top:99px;width:42.5px;text-align:right;font-size:10px">8.00</div><div class="a" style="left:1377px;top:97px;width:41px;height:12px;background:#80fc80"></div><div class="t" style="left:1376px;top:99px;width:41.5px;text-align:right;font-size:10px">8.00</div><div class="a" style="left:379px;top:111px;width:42px;height:13px;background:linear-gradient(90deg,#dcdcdc,#f2f2f2 40%,#f0f0f0);border:1px solid #b4b4b4;border-left-color:#9a9a9a"></div><div class="t" style="left:379px;top:113px;width:39px;text-align:right;font-size:10px">1199</div><div class="a" style="left:423px;top:111px;width:41px;height:13px;background:#88f37f"></div><div class="t" style="left:422px;top:113px;width:41.5px;text-align:right;font-size:10px">11.00</div><div class="a" style="left:466px;top:111px;width:41px;height:13px;background:#88f37f"></div><div class="t" style="left:465px;top:113px;width:41.5px;text-align:right;font-size:10px">11.00</div><div class="a" style="left:509px;top:111px;width:42px;height:13px;background:#88f37f"></div><div class="t" style="left:508px;top:113px;width:42.5px;text-align:right;font-size:10px">11.00</div><div class="a" style="left:553px;top:111px;width:41px;height:13px;background:#88f37f"></div><div class="t" style="left:552px;top:113px;width:41.5px;text-align:right;font-size:10px">11.00</div><div class="a" style="left:596px;top:111px;width:42px;height:13px;background:#88f37f"></div><div class="t" style="left:595px;top:113px;width:42.5px;text-align:right;font-size:10px">11.00</div><div class="a" style="left:640px;top:111px;width:41px;height:13px;background:#88f37f"></div><div class="t" style="left:639px;top:113px;width:41.5px;text-align:right;font-size:10px">11.00</div><div class="a" style="left:683px;top:111px;width:41px;height:13px;background:#88f37f"></div><div class="t" style="left:682px;top:113px;width:41.5px;text-align:right;font-size:10px">11.00</div><div class="a" style="left:726px;top:111px;width:42px;height:13px;background:#88f37f"></div><div class="t" style="left:725px;top:113px;width:42.5px;text-align:right;font-size:10px">11.00</div><div class="a" style="left:770px;top:111px;width:41px;height:13px;background:#85f67f"></div><div class="t" style="left:769px;top:113px;width:41.5px;text-align:right;font-size:10px">10.00</div><div class="a" style="left:813px;top:111px;width:41px;height:13px;background:#85f67f"></div><div class="t" style="left:812px;top:113px;width:41.5px;text-align:right;font-size:10px">10.00</div><div class="a" style="left:856px;top:111px;width:42px;height:13px;background:#85f67f"></div><div class="t" style="left:855px;top:113px;width:42.5px;text-align:right;font-size:10px">10.00</div><div class="a" style="left:900px;top:111px;width:41px;height:13px;background:#85f67f"></div><div class="t" style="left:899px;top:113px;width:41.5px;text-align:right;font-size:10px">10.00</div><div class="a" style="left:943px;top:111px;width:41px;height:13px;background:#83f980"></div><div class="t" style="left:942px;top:113px;width:41.5px;text-align:right;font-size:10px">9.00</div><div class="a" style="left:986px;top:111px;width:42px;height:13px;background:#80fc80"></div><div class="t" style="left:985px;top:113px;width:42.5px;text-align:right;font-size:10px">8.00</div><div class="a" style="left:1030px;top:111px;width:41px;height:13px;background:#80fc80"></div><div class="t" style="left:1029px;top:113px;width:41.5px;text-align:right;font-size:10px">8.00</div><div class="a" style="left:1073px;top:111px;width:41px;height:13px;background:#80fc80"></div><div class="t" style="left:1072px;top:113px;width:41.5px;text-align:right;font-size:10px">8.00</div><div class="a" style="left:1116px;top:111px;width:42px;height:13px;background:#80fc80"></div><div class="t" style="left:1115px;top:113px;width:42.5px;text-align:right;font-size:10px">8.00</div><div class="a" style="left:1160px;top:111px;width:41px;height:13px;background:#80fc80"></div><div class="t" style="left:1159px;top:113px;width:41.5px;text-align:right;font-size:10px">8.00</div><div class="a" style="left:1203px;top:111px;width:41px;height:13px;background:#80fc80"></div><div class="t" style="left:1202px;top:113px;width:41.5px;text-align:right;font-size:10px">8.00</div><div class="a" style="left:1246px;top:111px;width:42px;height:13px;background:#80fc80"></div><div class="t" style="left:1245px;top:113px;width:42.5px;text-align:right;font-size:10px">8.00</div><div class="a" style="left:1290px;top:111px;width:41px;height:13px;background:#80fc80"></div><div class="t" style="left:1289px;top:113px;width:41.5px;text-align:right;font-size:10px">8.00</div><div class="a" style="left:1333px;top:111px;width:42px;height:13px;background:#80fc80"></div><div class="t" style="left:1332px;top:113px;width:42.5px;text-align:right;font-size:10px">8.00</div><div class="a" style="left:1377px;top:111px;width:41px;height:13px;background:#80fc80"></div><div class="t" style="left:1376px;top:113px;width:41.5px;text-align:right;font-size:10px">8.00</div><div class="a" style="left:379px;top:126px;width:42px;height:12px;background:linear-gradient(90deg,#dcdcdc,#f2f2f2 40%,#f0f0f0);border:1px solid #b4b4b4;border-left-color:#9a9a9a"></div><div class="t" style="left:379px;top:128px;width:39px;text-align:right;font-size:10px">1398</div><div class="a" style="left:423px;top:126px;width:41px;height:12px;background:#8af07e"></div><div class="t" style="left:422px;top:128px;width:41.5px;text-align:right;font-size:10px">12.00</div><div class="a" style="left:466px;top:126px;width:41px;height:12px;background:#8af07e"></div><div class="t" style="left:465px;top:128px;width:41.5px;text-align:right;font-size:10px">12.00</div><div class="a" style="left:509px;top:126px;width:42px;height:12px;background:#8af07e"></div><div class="t" style="left:508px;top:128px;width:42.5px;text-align:right;font-size:10px">12.00</div><div class="a" style="left:553px;top:126px;width:41px;height:12px;background:#8af07e"></div><div class="t" style="left:552px;top:128px;width:41.5px;text-align:right;font-size:10px">12.00</div><div class="a" style="left:596px;top:126px;width:42px;height:12px;background:#8af07e"></div><div class="t" style="left:595px;top:128px;width:42.5px;text-align:right;font-size:10px">12.00</div><div class="a" style="left:640px;top:126px;width:41px;height:12px;background:#8af07e"></div><div class="t" style="left:639px;top:128px;width:41.5px;text-align:right;font-size:10px">12.00</div><div class="a" style="left:683px;top:126px;width:41px;height:12px;background:#8af07e"></div><div class="t" style="left:682px;top:128px;width:41.5px;text-align:right;font-size:10px">12.00</div><div class="a" style="left:726px;top:126px;width:42px;height:12px;background:#8af07e"></div><div class="t" style="left:725px;top:128px;width:42.5px;text-align:right;font-size:10px">12.00</div><div class="a" style="left:770px;top:126px;width:41px;height:12px;background:#88f37f"></div><div class="t" style="left:769px;top:128px;width:41.5px;text-align:right;font-size:10px">11.00</div><div class="a" style="left:813px;top:126px;width:41px;height:12px;background:#88f37f"></div><div class="t" style="left:812px;top:128px;width:41.5px;text-align:right;font-size:10px">11.00</div><div class="a" style="left:856px;top:126px;width:42px;height:12px;background:#86f47f"></div><div class="t" style="left:855px;top:128px;width:42.5px;text-align:right;font-size:10px">10.50</div><div class="a" style="left:900px;top:126px;width:41px;height:12px;background:#86f47f"></div><div class="t" style="left:899px;top:128px;width:41.5px;text-align:right;font-size:10px">10.50</div><div class="a" style="left:943px;top:126px;width:41px;height:12px;background:#84f77f"></div><div class="t" style="left:942px;top:128px;width:41.5px;text-align:right;font-size:10px">9.50</div><div class="a" style="left:986px;top:126px;width:42px;height:12px;background:#83f980"></div><div class="t" style="left:985px;top:128px;width:42.5px;text-align:right;font-size:10px">9.00</div><div class="a" style="left:1030px;top:126px;width:41px;height:12px;background:#81fa80"></div><div class="t" style="left:1029px;top:128px;width:41.5px;text-align:right;font-size:10px">8.50</div><div class="a" style="left:1073px;top:126px;width:41px;height:12px;background:#80fc80"></div><div class="t" style="left:1072px;top:128px;width:41.5px;text-align:right;font-size:10px">8.00</div><div class="a" style="left:1116px;top:126px;width:42px;height:12px;background:#80fc80"></div><div class="t" style="left:1115px;top:128px;width:42.5px;text-align:right;font-size:10px">8.00</div><div class="a" style="left:1160px;top:126px;width:41px;height:12px;background:#80fc80"></div><div class="t" style="left:1159px;top:128px;width:41.5px;text-align:right;font-size:10px">8.00</div><div class="a" style="left:1203px;top:126px;width:41px;height:12px;background:#80fc80"></div><div class="t" style="left:1202px;top:128px;width:41.5px;text-align:right;font-size:10px">8.00</div><div class="a" style="left:1246px;top:126px;width:42px;height:12px;background:#80fc80"></div><div class="t" style="left:1245px;top:128px;width:42.5px;text-align:right;font-size:10px">8.00</div><div class="a" style="left:1290px;top:126px;width:41px;height:12px;background:#80fc80"></div><div class="t" style="left:1289px;top:128px;width:41.5px;text-align:right;font-size:10px">8.00</div><div class="a" style="left:1333px;top:126px;width:42px;height:12px;background:#80fc80"></div><div class="t" style="left:1332px;top:128px;width:42.5px;text-align:right;font-size:10px">8.00</div><div class="a" style="left:1377px;top:126px;width:41px;height:12px;background:#80fc80"></div><div class="t" style="left:1376px;top:128px;width:41.5px;text-align:right;font-size:10px">8.00</div><div class="a" style="left:379px;top:140px;width:42px;height:12px;background:linear-gradient(90deg,#dcdcdc,#f2f2f2 40%,#f0f0f0);border:1px solid #b4b4b4;border-left-color:#9a9a9a"></div><div class="t" style="left:379px;top:142px;width:39px;text-align:right;font-size:10px">1602</div><div class="a" style="left:423px;top:140px;width:41px;height:12px;background:#8ded7e"></div><div class="t" style="left:422px;top:142px;width:41.5px;text-align:right;font-size:10px">13.00</div><div class="a" style="left:466px;top:140px;width:41px;height:12px;background:#8ded7e"></div><div class="t" style="left:465px;top:142px;width:41.5px;text-align:right;font-size:10px">13.00</div><div class="a" style="left:509px;top:140px;width:42px;height:12px;background:#8ded7e"></div><div class="t" style="left:508px;top:142px;width:42.5px;text-align:right;font-size:10px">13.00</div><div class="a" style="left:553px;top:140px;width:41px;height:12px;background:#8ded7e"></div><div class="t" style="left:552px;top:142px;width:41.5px;text-align:right;font-size:10px">13.00</div><div class="a" style="left:596px;top:140px;width:42px;height:12px;background:#8ded7e"></div><div class="t" style="left:595px;top:142px;width:42.5px;text-align:right;font-size:10px">13.00</div><div class="a" style="left:640px;top:140px;width:41px;height:12px;background:#8ded7e"></div><div class="t" style="left:639px;top:142px;width:41.5px;text-align:right;font-size:10px">13.00</div><div class="a" style="left:683px;top:140px;width:41px;height:12px;background:#8ded7e"></div><div class="t" style="left:682px;top:142px;width:41.5px;text-align:right;font-size:10px">13.00</div><div class="a" style="left:726px;top:140px;width:42px;height:12px;background:#8ded7e"></div><div class="t" style="left:725px;top:142px;width:42.5px;text-align:right;font-size:10px">13.00</div><div class="a" style="left:770px;top:140px;width:41px;height:12px;background:#8bee7e"></div><div class="t" style="left:769px;top:142px;width:41.5px;text-align:right;font-size:10px">12.50</div><div class="a" style="left:813px;top:140px;width:41px;height:12px;background:#8af07e"></div><div class="t" style="left:812px;top:142px;width:41.5px;text-align:right;font-size:10px">12.00</div><div class="a" style="left:856px;top:140px;width:42px;height:12px;background:#89f17e"></div><div class="t" style="left:855px;top:142px;width:42.5px;text-align:right;font-size:10px">11.50</div><div class="a" style="left:900px;top:140px;width:41px;height:12px;background:#89f17e"></div><div class="t" style="left:899px;top:142px;width:41.5px;text-align:right;font-size:10px">11.50</div><div class="a" style="left:943px;top:140px;width:41px;height:12px;background:#86f47f"></div><div class="t" style="left:942px;top:142px;width:41.5px;text-align:right;font-size:10px">10.50</div><div class="a" style="left:986px;top:140px;width:42px;height:12px;background:#85f67f"></div><div class="t" style="left:985px;top:142px;width:42.5px;text-align:right;font-size:10px">10.00</div><div class="a" style="left:1030px;top:140px;width:41px;height:12px;background:#83f980"></div><div class="t" style="left:1029px;top:142px;width:41.5px;text-align:right;font-size:10px">9.00</div><div class="a" style="left:1073px;top:140px;width:41px;height:12px;background:#81fa80"></div><div class="t" style="left:1072px;top:142px;width:41.5px;text-align:right;font-size:10px">8.50</div><div class="a" style="left:1116px;top:140px;width:42px;height:12px;background:#80fc80"></div><div class="t" style="left:1115px;top:142px;width:42.5px;text-align:right;font-size:10px">8.00</div><div class="a" style="left:1160px;top:140px;width:41px;height:12px;background:#80fc80"></div><div class="t" style="left:1159px;top:142px;width:41.5px;text-align:right;font-size:10px">8.00</div><div class="a" style="left:1203px;top:140px;width:41px;height:12px;background:#80fc80"></div><div class="t" style="left:1202px;top:142px;width:41.5px;text-align:right;font-size:10px">8.00</div><div class="a" style="left:1246px;top:140px;width:42px;height:12px;background:#80fc80"></div><div class="t" style="left:1245px;top:142px;width:42.5px;text-align:right;font-size:10px">8.00</div><div class="a" style="left:1290px;top:140px;width:41px;height:12px;background:#80fc80"></div><div class="t" style="left:1289px;top:142px;width:41.5px;text-align:right;font-size:10px">8.00</div><div class="a" style="left:1333px;top:140px;width:42px;height:12px;background:#80fc80"></div><div class="t" style="left:1332px;top:142px;width:42.5px;text-align:right;font-size:10px">8.00</div><div class="a" style="left:1377px;top:140px;width:41px;height:12px;background:#80fc80"></div><div class="t" style="left:1376px;top:142px;width:41.5px;text-align:right;font-size:10px">8.00</div><div class="a" style="left:379px;top:154px;width:42px;height:12px;background:linear-gradient(90deg,#dcdcdc,#f2f2f2 40%,#f0f0f0);border:1px solid #b4b4b4;border-left-color:#9a9a9a"></div><div class="t" style="left:379px;top:156px;width:39px;text-align:right;font-size:10px">1801</div><div class="a" style="left:423px;top:154px;width:41px;height:12px;background:#94e37c"></div><div class="t" style="left:422px;top:156px;width:41.5px;text-align:right;font-size:10px">16.00</div><div class="a" style="left:466px;top:154px;width:41px;height:12px;background:#94e37c"></div><div class="t" style="left:465px;top:156px;width:41.5px;text-align:right;font-size:10px">16.00</div><div class="a" style="left:509px;top:154px;width:42px;height:12px;background:#94e37c"></div><div class="t" style="left:508px;top:156px;width:42.5px;text-align:right;font-size:10px">16.00</div><div class="a" style="left:553px;top:154px;width:41px;height:12px;background:#94e37c"></div><div class="t" style="left:552px;top:156px;width:41.5px;text-align:right;font-size:10px">16.00</div><div class="a" style="left:596px;top:154px;width:42px;height:12px;background:#94e37c"></div><div class="t" style="left:595px;top:156px;width:42.5px;text-align:right;font-size:10px">16.00</div><div class="a" style="left:640px;top:154px;width:41px;height:12px;background:#94e37c"></div><div class="t" style="left:639px;top:156px;width:41.5px;text-align:right;font-size:10px">16.00</div><div class="a" style="left:683px;top:154px;width:41px;height:12px;background:#94e37c"></div><div class="t" style="left:682px;top:156px;width:41.5px;text-align:right;font-size:10px">16.00</div><div class="a" style="left:726px;top:154px;width:42px;height:12px;background:#94e37c"></div><div class="t" style="left:725px;top:156px;width:42.5px;text-align:right;font-size:10px">16.00</div><div class="a" style="left:770px;top:154px;width:41px;height:12px;background:#92e77d"></div><div class="t" style="left:769px;top:156px;width:41.5px;text-align:right;font-size:10px">15.00</div><div class="a" style="left:813px;top:154px;width:41px;height:12px;background:#8fea7d"></div><div class="t" style="left:812px;top:156px;width:41.5px;text-align:right;font-size:10px">14.00</div><div class="a" style="left:856px;top:154px;width:42px;height:12px;background:#8eeb7d"></div><div class="t" style="left:855px;top:156px;width:42.5px;text-align:right;font-size:10px">13.50</div><div class="a" style="left:900px;top:154px;width:41px;height:12px;background:#8ded7e"></div><div class="t" style="left:899px;top:156px;width:41.5px;text-align:right;font-size:10px">13.00</div><div class="a" style="left:943px;top:154px;width:41px;height:12px;background:#8af07e"></div><div class="t" style="left:942px;top:156px;width:41.5px;text-align:right;font-size:10px">12.00</div><div class="a" style="left:986px;top:154px;width:42px;height:12px;background:#88f37f"></div><div class="t" style="left:985px;top:156px;width:42.5px;text-align:right;font-size:10px">11.00</div><div class="a" style="left:1030px;top:154px;width:41px;height:12px;background:#85f67f"></div><div class="t" style="left:1029px;top:156px;width:41.5px;text-align:right;font-size:10px">10.00</div><div class="a" style="left:1073px;top:154px;width:41px;height:12px;background:#83f980"></div><div class="t" style="left:1072px;top:156px;width:41.5px;text-align:right;font-size:10px">9.00</div><div class="a" style="left:1116px;top:154px;width:42px;height:12px;background:#80fc80"></div><div class="t" style="left:1115px;top:156px;width:42.5px;text-align:right;font-size:10px">8.00</div><div class="a" style="left:1160px;top:154px;width:41px;height:12px;background:#80fc80"></div><div class="t" style="left:1159px;top:156px;width:41.5px;text-align:right;font-size:10px">8.00</div><div class="a" style="left:1203px;top:154px;width:41px;height:12px;background:#80fc80"></div><div class="t" style="left:1202px;top:156px;width:41.5px;text-align:right;font-size:10px">8.00</div><div class="a" style="left:1246px;top:154px;width:42px;height:12px;background:#80fc80"></div><div class="t" style="left:1245px;top:156px;width:42.5px;text-align:right;font-size:10px">8.00</div><div class="a" style="left:1290px;top:154px;width:41px;height:12px;background:#80fc80"></div><div class="t" style="left:1289px;top:156px;width:41.5px;text-align:right;font-size:10px">8.00</div><div class="a" style="left:1333px;top:154px;width:42px;height:12px;background:#80fc80"></div><div class="t" style="left:1332px;top:156px;width:42.5px;text-align:right;font-size:10px">8.00</div><div class="a" style="left:1377px;top:154px;width:41px;height:12px;background:#80fc80"></div><div class="t" style="left:1376px;top:156px;width:41.5px;text-align:right;font-size:10px">8.00</div><div class="a" style="left:379px;top:168px;width:42px;height:12px;background:linear-gradient(90deg,#dcdcdc,#f2f2f2 40%,#f0f0f0);border:1px solid #b4b4b4;border-left-color:#9a9a9a"></div><div class="t" style="left:379px;top:170px;width:39px;text-align:right;font-size:10px">2000</div><div class="a" style="left:423px;top:168px;width:41px;height:12px;background:#9dd97b"></div><div class="t" style="left:422px;top:170px;width:41.5px;text-align:right;font-size:10px">19.50</div><div class="a" style="left:466px;top:168px;width:41px;height:12px;background:#9dd97b"></div><div class="t" style="left:465px;top:170px;width:41.5px;text-align:right;font-size:10px">19.50</div><div class="a" style="left:509px;top:168px;width:42px;height:12px;background:#9dd97b"></div><div class="t" style="left:508px;top:170px;width:42.5px;text-align:right;font-size:10px">19.50</div><div class="a" style="left:553px;top:168px;width:41px;height:12px;background:#9dd97b"></div><div class="t" style="left:552px;top:170px;width:41.5px;text-align:right;font-size:10px">19.50</div><div class="a" style="left:596px;top:168px;width:42px;height:12px;background:#9dd97b"></div><div class="t" style="left:595px;top:170px;width:42.5px;text-align:right;font-size:10px">19.50</div><div class="a" style="left:640px;top:168px;width:41px;height:12px;background:#9dd97b"></div><div class="t" style="left:639px;top:170px;width:41.5px;text-align:right;font-size:10px">19.50</div><div class="a" style="left:683px;top:168px;width:41px;height:12px;background:#9dd97b"></div><div class="t" style="left:682px;top:170px;width:41.5px;text-align:right;font-size:10px">19.50</div><div class="a" style="left:726px;top:168px;width:42px;height:12px;background:#9dd97b"></div><div class="t" style="left:725px;top:170px;width:42.5px;text-align:right;font-size:10px">19.50</div><div class="a" style="left:770px;top:168px;width:41px;height:12px;background:#9bdc7b"></div><div class="t" style="left:769px;top:170px;width:41.5px;text-align:right;font-size:10px">18.50</div><div class="a" style="left:813px;top:168px;width:41px;height:12px;background:#96e27c"></div><div class="t" style="left:812px;top:170px;width:41.5px;text-align:right;font-size:10px">16.50</div><div class="a" style="left:856px;top:168px;width:42px;height:12px;background:#94e37c"></div><div class="t" style="left:855px;top:170px;width:42.5px;text-align:right;font-size:10px">16.00</div><div class="a" style="left:900px;top:168px;width:41px;height:12px;background:#93e57c"></div><div class="t" style="left:899px;top:170px;width:41.5px;text-align:right;font-size:10px">15.50</div><div class="a" style="left:943px;top:168px;width:41px;height:12px;background:#8fea7d"></div><div class="t" style="left:942px;top:170px;width:41.5px;text-align:right;font-size:10px">14.00</div><div class="a" style="left:986px;top:168px;width:42px;height:12px;background:#8ded7e"></div><div class="t" style="left:985px;top:170px;width:42.5px;text-align:right;font-size:10px">13.00</div><div class="a" style="left:1030px;top:168px;width:41px;height:12px;background:#89f17e"></div><div class="t" style="left:1029px;top:170px;width:41.5px;text-align:right;font-size:10px">11.50</div><div class="a" style="left:1073px;top:168px;width:41px;height:12px;background:#86f47f"></div><div class="t" style="left:1072px;top:170px;width:41.5px;text-align:right;font-size:10px">10.50</div><div class="a" style="left:1116px;top:168px;width:42px;height:12px;background:#83f980"></div><div class="t" style="left:1115px;top:170px;width:42.5px;text-align:right;font-size:10px">9.00</div><div class="a" style="left:1160px;top:168px;width:41px;height:12px;background:#81fa80"></div><div class="t" style="left:1159px;top:170px;width:41.5px;text-align:right;font-size:10px">8.50</div><div class="a" style="left:1203px;top:168px;width:41px;height:12px;background:#80fc80"></div><div class="t" style="left:1202px;top:170px;width:41.5px;text-align:right;font-size:10px">8.00</div><div class="a" style="left:1246px;top:168px;width:42px;height:12px;background:#80fc80"></div><div class="t" style="left:1245px;top:170px;width:42.5px;text-align:right;font-size:10px">8.00</div><div class="a" style="left:1290px;top:168px;width:41px;height:12px;background:#80fc80"></div><div class="t" style="left:1289px;top:170px;width:41.5px;text-align:right;font-size:10px">8.00</div><div class="a" style="left:1333px;top:168px;width:42px;height:12px;background:#80fc80"></div><div class="t" style="left:1332px;top:170px;width:42.5px;text-align:right;font-size:10px">8.00</div><div class="a" style="left:1377px;top:168px;width:41px;height:12px;background:#80fc80"></div><div class="t" style="left:1376px;top:170px;width:41.5px;text-align:right;font-size:10px">8.00</div><div class="a" style="left:379px;top:182px;width:42px;height:12px;background:linear-gradient(90deg,#dcdcdc,#f2f2f2 40%,#f0f0f0);border:1px solid #b4b4b4;border-left-color:#9a9a9a"></div><div class="t" style="left:379px;top:184px;width:39px;text-align:right;font-size:10px">2199</div><div class="a" style="left:423px;top:182px;width:41px;height:12px;background:#aac978"></div><div class="t" style="left:422px;top:184px;width:41.5px;text-align:right;font-size:10px">24.50</div><div class="a" style="left:466px;top:182px;width:41px;height:12px;background:#aac978"></div><div class="t" style="left:465px;top:184px;width:41.5px;text-align:right;font-size:10px">24.50</div><div class="a" style="left:509px;top:182px;width:42px;height:12px;background:#aac978"></div><div class="t" style="left:508px;top:184px;width:42.5px;text-align:right;font-size:10px">24.50</div><div class="a" style="left:553px;top:182px;width:41px;height:12px;background:#aac978"></div><div class="t" style="left:552px;top:184px;width:41.5px;text-align:right;font-size:10px">24.50</div><div class="a" style="left:596px;top:182px;width:42px;height:12px;background:#aac978"></div><div class="t" style="left:595px;top:184px;width:42.5px;text-align:right;font-size:10px">24.50</div><div class="a" style="left:640px;top:182px;width:41px;height:12px;background:#aac978"></div><div class="t" style="left:639px;top:184px;width:41.5px;text-align:right;font-size:10px">24.50</div><div class="a" style="left:683px;top:182px;width:41px;height:12px;background:#aac978"></div><div class="t" style="left:682px;top:184px;width:41.5px;text-align:right;font-size:10px">24.50</div><div class="a" style="left:726px;top:182px;width:42px;height:12px;background:#a8cd79"></div><div class="t" style="left:725px;top:184px;width:42.5px;text-align:right;font-size:10px">23.50</div><div class="a" style="left:770px;top:182px;width:41px;height:12px;background:#a5d079"></div><div class="t" style="left:769px;top:184px;width:41.5px;text-align:right;font-size:10px">22.50</div><div class="a" style="left:813px;top:182px;width:41px;height:12px;background:#a0d67a"></div><div class="t" style="left:812px;top:184px;width:41.5px;text-align:right;font-size:10px">20.50</div><div class="a" style="left:856px;top:182px;width:42px;height:12px;background:#9bdc7b"></div><div class="t" style="left:855px;top:184px;width:42.5px;text-align:right;font-size:10px">18.50</div><div class="a" style="left:900px;top:182px;width:41px;height:12px;background:#98df7c"></div><div class="t" style="left:899px;top:184px;width:41.5px;text-align:right;font-size:10px">17.50</div><div class="a" style="left:943px;top:182px;width:41px;height:12px;background:#94e37c"></div><div class="t" style="left:942px;top:184px;width:41.5px;text-align:right;font-size:10px">16.00</div><div class="a" style="left:986px;top:182px;width:42px;height:12px;background:#91e87d"></div><div class="t" style="left:985px;top:184px;width:42.5px;text-align:right;font-size:10px">14.50</div><div class="a" style="left:1030px;top:182px;width:41px;height:12px;background:#8ded7e"></div><div class="t" style="left:1029px;top:184px;width:41.5px;text-align:right;font-size:10px">13.00</div><div class="a" style="left:1073px;top:182px;width:41px;height:12px;background:#89f17e"></div><div class="t" style="left:1072px;top:184px;width:41.5px;text-align:right;font-size:10px">11.50</div><div class="a" style="left:1116px;top:182px;width:42px;height:12px;background:#85f67f"></div><div class="t" style="left:1115px;top:184px;width:42.5px;text-align:right;font-size:10px">10.00</div><div class="a" style="left:1160px;top:182px;width:41px;height:12px;background:#83f980"></div><div class="t" style="left:1159px;top:184px;width:41.5px;text-align:right;font-size:10px">9.00</div><div class="a" style="left:1203px;top:182px;width:41px;height:12px;background:#81fa80"></div><div class="t" style="left:1202px;top:184px;width:41.5px;text-align:right;font-size:10px">8.50</div><div class="a" style="left:1246px;top:182px;width:42px;height:12px;background:#81fa80"></div><div class="t" style="left:1245px;top:184px;width:42.5px;text-align:right;font-size:10px">8.50</div><div class="a" style="left:1290px;top:182px;width:41px;height:12px;background:#80fc80"></div><div class="t" style="left:1289px;top:184px;width:41.5px;text-align:right;font-size:10px">8.00</div><div class="a" style="left:1333px;top:182px;width:42px;height:12px;background:#81fa80"></div><div class="t" style="left:1332px;top:184px;width:42.5px;text-align:right;font-size:10px">8.50</div><div class="a" style="left:1377px;top:182px;width:41px;height:12px;background:#81fa80"></div><div class="t" style="left:1376px;top:184px;width:41.5px;text-align:right;font-size:10px">8.50</div><div class="a" style="left:379px;top:196px;width:42px;height:12px;background:linear-gradient(90deg,#dcdcdc,#f2f2f2 40%,#f0f0f0);border:1px solid #b4b4b4;border-left-color:#9a9a9a"></div><div class="t" style="left:379px;top:198px;width:39px;text-align:right;font-size:10px">2398</div><div class="a" style="left:423px;top:196px;width:41px;height:12px;background:#b4bd76"></div><div class="t" style="left:422px;top:198px;width:41.5px;text-align:right;font-size:10px">28.50</div><div class="a" style="left:466px;top:196px;width:41px;height:12px;background:#b4bd76"></div><div class="t" style="left:465px;top:198px;width:41.5px;text-align:right;font-size:10px">28.50</div><div class="a" style="left:509px;top:196px;width:42px;height:12px;background:#b4bd76"></div><div class="t" style="left:508px;top:198px;width:42.5px;text-align:right;font-size:10px">28.50</div><div class="a" style="left:553px;top:196px;width:41px;height:12px;background:#b4bd76"></div><div class="t" style="left:552px;top:198px;width:41.5px;text-align:right;font-size:10px">28.50</div><div class="a" style="left:596px;top:196px;width:42px;height:12px;background:#b4bd76"></div><div class="t" style="left:595px;top:198px;width:42.5px;text-align:right;font-size:10px">28.50</div><div class="a" style="left:640px;top:196px;width:41px;height:12px;background:#b4bd76"></div><div class="t" style="left:639px;top:198px;width:41.5px;text-align:right;font-size:10px">28.50</div><div class="a" style="left:683px;top:196px;width:41px;height:12px;background:#b4bd76"></div><div class="t" style="left:682px;top:198px;width:41.5px;text-align:right;font-size:10px">28.50</div><div class="a" style="left:726px;top:196px;width:42px;height:12px;background:#b4bd76"></div><div class="t" style="left:725px;top:198px;width:42.5px;text-align:right;font-size:10px">28.50</div><div class="a" style="left:770px;top:196px;width:41px;height:12px;background:#afc377"></div><div class="t" style="left:769px;top:198px;width:41.5px;text-align:right;font-size:10px">26.50</div><div class="a" style="left:813px;top:196px;width:41px;height:12px;background:#aac978"></div><div class="t" style="left:812px;top:198px;width:41.5px;text-align:right;font-size:10px">24.50</div><div class="a" style="left:856px;top:196px;width:42px;height:12px;background:#a2d37a"></div><div class="t" style="left:855px;top:198px;width:42.5px;text-align:right;font-size:10px">21.50</div><div class="a" style="left:900px;top:196px;width:41px;height:12px;background:#9fd77a"></div><div class="t" style="left:899px;top:198px;width:41.5px;text-align:right;font-size:10px">20.00</div><div class="a" style="left:943px;top:196px;width:41px;height:12px;background:#9add7b"></div><div class="t" style="left:942px;top:198px;width:41.5px;text-align:right;font-size:10px">18.00</div><div class="a" style="left:986px;top:196px;width:42px;height:12px;background:#96e27c"></div><div class="t" style="left:985px;top:198px;width:42.5px;text-align:right;font-size:10px">16.50</div><div class="a" style="left:1030px;top:196px;width:41px;height:12px;background:#91e87d"></div><div class="t" style="left:1029px;top:198px;width:41.5px;text-align:right;font-size:10px">14.50</div><div class="a" style="left:1073px;top:196px;width:41px;height:12px;background:#8bee7e"></div><div class="t" style="left:1072px;top:198px;width:41.5px;text-align:right;font-size:10px">12.50</div><div class="a" style="left:1116px;top:196px;width:42px;height:12px;background:#88f37f"></div><div class="t" style="left:1115px;top:198px;width:42.5px;text-align:right;font-size:10px">11.00</div><div class="a" style="left:1160px;top:196px;width:41px;height:12px;background:#86f47f"></div><div class="t" style="left:1159px;top:198px;width:41.5px;text-align:right;font-size:10px">10.50</div><div class="a" style="left:1203px;top:196px;width:41px;height:12px;background:#84f77f"></div><div class="t" style="left:1202px;top:198px;width:41.5px;text-align:right;font-size:10px">9.50</div><div class="a" style="left:1246px;top:196px;width:42px;height:12px;background:#83f980"></div><div class="t" style="left:1245px;top:198px;width:42.5px;text-align:right;font-size:10px">9.00</div><div class="a" style="left:1290px;top:196px;width:41px;height:12px;background:#81fa80"></div><div class="t" style="left:1289px;top:198px;width:41.5px;text-align:right;font-size:10px">8.50</div><div class="a" style="left:1333px;top:196px;width:42px;height:12px;background:#83f980"></div><div class="t" style="left:1332px;top:198px;width:42.5px;text-align:right;font-size:10px">9.00</div><div class="a" style="left:1377px;top:196px;width:41px;height:12px;background:#83f980"></div><div class="t" style="left:1376px;top:198px;width:41.5px;text-align:right;font-size:10px">9.00</div><div class="a" style="left:379px;top:210px;width:42px;height:12px;background:linear-gradient(90deg,#dcdcdc,#f2f2f2 40%,#f0f0f0);border:1px solid #b4b4b4;border-left-color:#9a9a9a"></div><div class="t" style="left:379px;top:212px;width:39px;text-align:right;font-size:10px">2602</div><div class="a" style="left:423px;top:210px;width:41px;height:12px;background:#bcb475"></div><div class="t" style="left:422px;top:212px;width:41.5px;text-align:right;font-size:10px">31.50</div><div class="a" style="left:466px;top:210px;width:41px;height:12px;background:#bcb475"></div><div class="t" style="left:465px;top:212px;width:41.5px;text-align:right;font-size:10px">31.50</div><div class="a" style="left:509px;top:210px;width:42px;height:12px;background:#bcb475"></div><div class="t" style="left:508px;top:212px;width:42.5px;text-align:right;font-size:10px">31.50</div><div class="a" style="left:553px;top:210px;width:41px;height:12px;background:#bcb475"></div><div class="t" style="left:552px;top:212px;width:41.5px;text-align:right;font-size:10px">31.50</div><div class="a" style="left:596px;top:210px;width:42px;height:12px;background:#bcb475"></div><div class="t" style="left:595px;top:212px;width:42.5px;text-align:right;font-size:10px">31.50</div><div class="a" style="left:640px;top:210px;width:41px;height:12px;background:#bcb475"></div><div class="t" style="left:639px;top:212px;width:41.5px;text-align:right;font-size:10px">31.50</div><div class="a" style="left:683px;top:210px;width:41px;height:12px;background:#bcb475"></div><div class="t" style="left:682px;top:212px;width:41.5px;text-align:right;font-size:10px">31.50</div><div class="a" style="left:726px;top:210px;width:42px;height:12px;background:#bcb475"></div><div class="t" style="left:725px;top:212px;width:42.5px;text-align:right;font-size:10px">31.50</div><div class="a" style="left:770px;top:210px;width:41px;height:12px;background:#b9b775"></div><div class="t" style="left:769px;top:212px;width:41.5px;text-align:right;font-size:10px">30.50</div><div class="a" style="left:813px;top:210px;width:41px;height:12px;background:#b4bd76"></div><div class="t" style="left:812px;top:212px;width:41.5px;text-align:right;font-size:10px">28.50</div><div class="a" style="left:856px;top:210px;width:42px;height:12px;background:#aac978"></div><div class="t" style="left:855px;top:212px;width:42.5px;text-align:right;font-size:10px">24.50</div><div class="a" style="left:900px;top:210px;width:41px;height:12px;background:#a5d079"></div><div class="t" style="left:899px;top:212px;width:41.5px;text-align:right;font-size:10px">22.50</div><div class="a" style="left:943px;top:210px;width:41px;height:12px;background:#a0d67a"></div><div class="t" style="left:942px;top:212px;width:41.5px;text-align:right;font-size:10px">20.50</div><div class="a" style="left:986px;top:210px;width:42px;height:12px;background:#9bdc7b"></div><div class="t" style="left:985px;top:212px;width:42.5px;text-align:right;font-size:10px">18.50</div><div class="a" style="left:1030px;top:210px;width:41px;height:12px;background:#96e27c"></div><div class="t" style="left:1029px;top:212px;width:41.5px;text-align:right;font-size:10px">16.50</div><div class="a" style="left:1073px;top:210px;width:41px;height:12px;background:#92e77d"></div><div class="t" style="left:1072px;top:212px;width:41.5px;text-align:right;font-size:10px">15.00</div><div class="a" style="left:1116px;top:210px;width:42px;height:12px;background:#8fea7d"></div><div class="t" style="left:1115px;top:212px;width:42.5px;text-align:right;font-size:10px">14.00</div><div class="a" style="left:1160px;top:210px;width:41px;height:12px;background:#8ded7e"></div><div class="t" style="left:1159px;top:212px;width:41.5px;text-align:right;font-size:10px">13.00</div><div class="a" style="left:1203px;top:210px;width:41px;height:12px;background:#89f17e"></div><div class="t" style="left:1202px;top:212px;width:41.5px;text-align:right;font-size:10px">11.50</div><div class="a" style="left:1246px;top:210px;width:42px;height:12px;background:#88f37f"></div><div class="t" style="left:1245px;top:212px;width:42.5px;text-align:right;font-size:10px">11.00</div><div class="a" style="left:1290px;top:210px;width:41px;height:12px;background:#86f47f"></div><div class="t" style="left:1289px;top:212px;width:41.5px;text-align:right;font-size:10px">10.50</div><div class="a" style="left:1333px;top:210px;width:42px;height:12px;background:#88f37f"></div><div class="t" style="left:1332px;top:212px;width:42.5px;text-align:right;font-size:10px">11.00</div><div class="a" style="left:1377px;top:210px;width:41px;height:12px;background:#89f17e"></div><div class="t" style="left:1376px;top:212px;width:41.5px;text-align:right;font-size:10px">11.50</div><div class="a" style="left:379px;top:224px;width:42px;height:12px;background:linear-gradient(90deg,#dcdcdc,#f2f2f2 40%,#f0f0f0);border:1px solid #b4b4b4;border-left-color:#9a9a9a"></div><div class="t" style="left:379px;top:226px;width:39px;text-align:right;font-size:10px">2801</div><div class="a" style="left:423px;top:224px;width:41px;height:12px;background:#c6a873"></div><div class="t" style="left:422px;top:226px;width:41.5px;text-align:right;font-size:10px">35.50</div><div class="a" style="left:466px;top:224px;width:41px;height:12px;background:#c6a873"></div><div class="t" style="left:465px;top:226px;width:41.5px;text-align:right;font-size:10px">35.50</div><div class="a" style="left:509px;top:224px;width:42px;height:12px;background:#c6a873"></div><div class="t" style="left:508px;top:226px;width:42.5px;text-align:right;font-size:10px">35.50</div><div class="a" style="left:553px;top:224px;width:41px;height:12px;background:#c6a873"></div><div class="t" style="left:552px;top:226px;width:41.5px;text-align:right;font-size:10px">35.50</div><div class="a" style="left:596px;top:224px;width:42px;height:12px;background:#c6a873"></div><div class="t" style="left:595px;top:226px;width:42.5px;text-align:right;font-size:10px">35.50</div><div class="a" style="left:640px;top:224px;width:41px;height:12px;background:#c6a873"></div><div class="t" style="left:639px;top:226px;width:41.5px;text-align:right;font-size:10px">35.50</div><div class="a" style="left:683px;top:224px;width:41px;height:12px;background:#c6a873"></div><div class="t" style="left:682px;top:226px;width:41.5px;text-align:right;font-size:10px">35.50</div><div class="a" style="left:726px;top:224px;width:42px;height:12px;background:#c6a873"></div><div class="t" style="left:725px;top:226px;width:42.5px;text-align:right;font-size:10px">35.50</div><div class="a" style="left:770px;top:224px;width:41px;height:12px;background:#c6a873"></div><div class="t" style="left:769px;top:226px;width:41.5px;text-align:right;font-size:10px">35.50</div><div class="a" style="left:813px;top:224px;width:41px;height:12px;background:#c4ab74"></div><div class="t" style="left:812px;top:226px;width:41.5px;text-align:right;font-size:10px">34.50</div><div class="a" style="left:856px;top:224px;width:42px;height:12px;background:#b6bc76"></div><div class="t" style="left:855px;top:226px;width:42.5px;text-align:right;font-size:10px">29.00</div><div class="a" style="left:900px;top:224px;width:41px;height:12px;background:#afc377"></div><div class="t" style="left:899px;top:226px;width:41.5px;text-align:right;font-size:10px">26.50</div><div class="a" style="left:943px;top:224px;width:41px;height:12px;background:#a9cb79"></div><div class="t" style="left:942px;top:226px;width:41.5px;text-align:right;font-size:10px">24.00</div><div class="a" style="left:986px;top:224px;width:42px;height:12px;background:#a2d37a"></div><div class="t" style="left:985px;top:226px;width:42.5px;text-align:right;font-size:10px">21.50</div><div class="a" style="left:1030px;top:224px;width:41px;height:12px;background:#9dd97b"></div><div class="t" style="left:1029px;top:226px;width:41.5px;text-align:right;font-size:10px">19.50</div><div class="a" style="left:1073px;top:224px;width:41px;height:12px;background:#9bdc7b"></div><div class="t" style="left:1072px;top:226px;width:41.5px;text-align:right;font-size:10px">18.50</div><div class="a" style="left:1116px;top:224px;width:42px;height:12px;background:#9add7b"></div><div class="t" style="left:1115px;top:226px;width:42.5px;text-align:right;font-size:10px">18.00</div><div class="a" style="left:1160px;top:224px;width:41px;height:12px;background:#96e27c"></div><div class="t" style="left:1159px;top:226px;width:41.5px;text-align:right;font-size:10px">16.50</div><div class="a" style="left:1203px;top:224px;width:41px;height:12px;background:#91e87d"></div><div class="t" style="left:1202px;top:226px;width:41.5px;text-align:right;font-size:10px">14.50</div><div class="a" style="left:1246px;top:224px;width:42px;height:12px;background:#8fea7d"></div><div class="t" style="left:1245px;top:226px;width:42.5px;text-align:right;font-size:10px">14.00</div><div class="a" style="left:1290px;top:224px;width:41px;height:12px;background:#8ded7e"></div><div class="t" style="left:1289px;top:226px;width:41.5px;text-align:right;font-size:10px">13.00</div><div class="a" style="left:1333px;top:224px;width:42px;height:12px;background:#8fea7d"></div><div class="t" style="left:1332px;top:226px;width:42.5px;text-align:right;font-size:10px">14.00</div><div class="a" style="left:1377px;top:224px;width:41px;height:12px;background:#91e87d"></div><div class="t" style="left:1376px;top:226px;width:41.5px;text-align:right;font-size:10px">14.50</div><div class="a" style="left:379px;top:238px;width:42px;height:13px;background:linear-gradient(90deg,#dcdcdc,#f2f2f2 40%,#f0f0f0);border:1px solid #b4b4b4;border-left-color:#9a9a9a"></div><div class="t" style="left:379px;top:240px;width:39px;text-align:right;font-size:10px">3000</div><div class="a" style="left:423px;top:238px;width:41px;height:13px;background:#e7806d"></div><div class="t" style="left:422px;top:240px;width:41.5px;text-align:right;font-size:10px">48.50</div><div class="a" style="left:466px;top:238px;width:41px;height:13px;background:#e7806d"></div><div class="t" style="left:465px;top:240px;width:41.5px;text-align:right;font-size:10px">48.50</div><div class="a" style="left:509px;top:238px;width:42px;height:13px;background:#e7806d"></div><div class="t" style="left:508px;top:240px;width:42.5px;text-align:right;font-size:10px">48.50</div><div class="a" style="left:553px;top:238px;width:41px;height:13px;background:#e7806d"></div><div class="t" style="left:552px;top:240px;width:41.5px;text-align:right;font-size:10px">48.50</div><div class="a" style="left:596px;top:238px;width:42px;height:13px;background:#e7806d"></div><div class="t" style="left:595px;top:240px;width:42.5px;text-align:right;font-size:10px">48.50</div><div class="a" style="left:640px;top:238px;width:41px;height:13px;background:#e5836e"></div><div class="t" style="left:639px;top:240px;width:41.5px;text-align:right;font-size:10px">47.50</div><div class="a" style="left:683px;top:238px;width:41px;height:13px;background:#e2866e"></div><div class="t" style="left:682px;top:240px;width:41.5px;text-align:right;font-size:10px">46.50</div><div class="a" style="left:726px;top:238px;width:42px;height:13px;background:#e0896e"></div><div class="t" style="left:725px;top:240px;width:42.5px;text-align:right;font-size:10px">45.50</div><div class="a" style="left:770px;top:238px;width:41px;height:13px;background:#db8f6f"></div><div class="t" style="left:769px;top:240px;width:41.5px;text-align:right;font-size:10px">43.50</div><div class="a" style="left:813px;top:238px;width:41px;height:13px;background:#d09b71"></div><div class="t" style="left:812px;top:240px;width:41.5px;text-align:right;font-size:10px">39.50</div><div class="a" style="left:856px;top:238px;width:42px;height:13px;background:#cda072"></div><div class="t" style="left:855px;top:240px;width:42.5px;text-align:right;font-size:10px">38.00</div><div class="a" style="left:900px;top:238px;width:41px;height:13px;background:#c6a873"></div><div class="t" style="left:899px;top:240px;width:41.5px;text-align:right;font-size:10px">35.50</div><div class="a" style="left:943px;top:238px;width:41px;height:13px;background:#bcb475"></div><div class="t" style="left:942px;top:240px;width:41.5px;text-align:right;font-size:10px">31.50</div><div class="a" style="left:986px;top:238px;width:42px;height:13px;background:#b1c277"></div><div class="t" style="left:985px;top:240px;width:42.5px;text-align:right;font-size:10px">27.00</div><div class="a" style="left:1030px;top:238px;width:41px;height:13px;background:#abc878"></div><div class="t" style="left:1029px;top:240px;width:41.5px;text-align:right;font-size:10px">25.00</div><div class="a" style="left:1073px;top:238px;width:41px;height:13px;background:#a8cd79"></div><div class="t" style="left:1072px;top:240px;width:41.5px;text-align:right;font-size:10px">23.50</div><div class="a" style="left:1116px;top:238px;width:42px;height:13px;background:#a2d37a"></div><div class="t" style="left:1115px;top:240px;width:42.5px;text-align:right;font-size:10px">21.50</div><div class="a" style="left:1160px;top:238px;width:41px;height:13px;background:#9bdc7b"></div><div class="t" style="left:1159px;top:240px;width:41.5px;text-align:right;font-size:10px">18.50</div><div class="a" style="left:1203px;top:238px;width:41px;height:13px;background:#97e07c"></div><div class="t" style="left:1202px;top:240px;width:41.5px;text-align:right;font-size:10px">17.00</div><div class="a" style="left:1246px;top:238px;width:42px;height:13px;background:#96e27c"></div><div class="t" style="left:1245px;top:240px;width:42.5px;text-align:right;font-size:10px">16.50</div><div class="a" style="left:1290px;top:238px;width:41px;height:13px;background:#93e57c"></div><div class="t" style="left:1289px;top:240px;width:41.5px;text-align:right;font-size:10px">15.50</div><div class="a" style="left:1333px;top:238px;width:42px;height:13px;background:#96e27c"></div><div class="t" style="left:1332px;top:240px;width:42.5px;text-align:right;font-size:10px">16.50</div><div class="a" style="left:1377px;top:238px;width:41px;height:13px;background:#98df7c"></div><div class="t" style="left:1376px;top:240px;width:41.5px;text-align:right;font-size:10px">17.50</div><div class="a" style="left:379px;top:253px;width:42px;height:12px;background:linear-gradient(90deg,#dcdcdc,#f2f2f2 40%,#f0f0f0);border:1px solid #b4b4b4;border-left-color:#9a9a9a"></div><div class="t" style="left:379px;top:255px;width:39px;text-align:right;font-size:10px">3199</div><div class="a" style="left:423px;top:253px;width:41px;height:12px;background:#f56f6a"></div><div class="t" style="left:422px;top:255px;width:41.5px;text-align:right;font-size:10px">54.00</div><div class="a" style="left:466px;top:253px;width:41px;height:12px;background:#f56f6a"></div><div class="t" style="left:465px;top:255px;width:41.5px;text-align:right;font-size:10px">54.00</div><div class="a" style="left:509px;top:253px;width:42px;height:12px;background:#f56f6a"></div><div class="t" style="left:508px;top:255px;width:42.5px;text-align:right;font-size:10px">54.00</div><div class="a" style="left:553px;top:253px;width:41px;height:12px;background:#f56f6a"></div><div class="t" style="left:552px;top:255px;width:41.5px;text-align:right;font-size:10px">54.00</div><div class="a" style="left:596px;top:253px;width:42px;height:12px;background:#f56f6a"></div><div class="t" style="left:595px;top:255px;width:42.5px;text-align:right;font-size:10px">54.00</div><div class="a" style="left:640px;top:253px;width:41px;height:12px;background:#f2746b"></div><div class="t" style="left:639px;top:255px;width:41.5px;text-align:right;font-size:10px">52.50</div><div class="a" style="left:683px;top:253px;width:41px;height:12px;background:#ee786c"></div><div class="t" style="left:682px;top:255px;width:41.5px;text-align:right;font-size:10px">51.00</div><div class="a" style="left:726px;top:253px;width:42px;height:12px;background:#eb7b6c"></div><div class="t" style="left:725px;top:255px;width:42.5px;text-align:right;font-size:10px">50.00</div><div class="a" style="left:770px;top:253px;width:41px;height:12px;background:#e5836e"></div><div class="t" style="left:769px;top:255px;width:41.5px;text-align:right;font-size:10px">47.50</div><div class="a" style="left:813px;top:253px;width:41px;height:12px;background:#dd8c6f"></div><div class="t" style="left:812px;top:255px;width:41.5px;text-align:right;font-size:10px">44.50</div><div class="a" style="left:856px;top:253px;width:42px;height:12px;background:#d79470"></div><div class="t" style="left:855px;top:255px;width:42.5px;text-align:right;font-size:10px">42.00</div><div class="a" style="left:900px;top:253px;width:41px;height:12px;background:#d09b71"></div><div class="t" style="left:899px;top:255px;width:41.5px;text-align:right;font-size:10px">39.50</div><div class="a" style="left:943px;top:253px;width:41px;height:12px;background:#c6a873"></div><div class="t" style="left:942px;top:255px;width:41.5px;text-align:right;font-size:10px">35.50</div><div class="a" style="left:986px;top:253px;width:42px;height:12px;background:#b8b976"></div><div class="t" style="left:985px;top:255px;width:42.5px;text-align:right;font-size:10px">30.00</div><div class="a" style="left:1030px;top:253px;width:41px;height:12px;background:#afc377"></div><div class="t" style="left:1029px;top:255px;width:41.5px;text-align:right;font-size:10px">26.50</div><div class="a" style="left:1073px;top:253px;width:41px;height:12px;background:#aac978"></div><div class="t" style="left:1072px;top:255px;width:41.5px;text-align:right;font-size:10px">24.50</div><div class="a" style="left:1116px;top:253px;width:42px;height:12px;background:#a5d079"></div><div class="t" style="left:1115px;top:255px;width:42.5px;text-align:right;font-size:10px">22.50</div><div class="a" style="left:1160px;top:253px;width:41px;height:12px;background:#9fd77a"></div><div class="t" style="left:1159px;top:255px;width:41.5px;text-align:right;font-size:10px">20.00</div><div class="a" style="left:1203px;top:253px;width:41px;height:12px;background:#9cda7b"></div><div class="t" style="left:1202px;top:255px;width:41.5px;text-align:right;font-size:10px">19.00</div><div class="a" style="left:1246px;top:253px;width:42px;height:12px;background:#9bdc7b"></div><div class="t" style="left:1245px;top:255px;width:42.5px;text-align:right;font-size:10px">18.50</div><div class="a" style="left:1290px;top:253px;width:41px;height:12px;background:#98df7c"></div><div class="t" style="left:1289px;top:255px;width:41.5px;text-align:right;font-size:10px">17.50</div><div class="a" style="left:1333px;top:253px;width:42px;height:12px;background:#9cda7b"></div><div class="t" style="left:1332px;top:255px;width:42.5px;text-align:right;font-size:10px">19.00</div><div class="a" style="left:1377px;top:253px;width:41px;height:12px;background:#9fd77a"></div><div class="t" style="left:1376px;top:255px;width:41.5px;text-align:right;font-size:10px">20.00</div><div class="a" style="left:379px;top:267px;width:42px;height:12px;background:linear-gradient(90deg,#dcdcdc,#f2f2f2 40%,#f0f0f0);border:1px solid #b4b4b4;border-left-color:#9a9a9a"></div><div class="t" style="left:379px;top:269px;width:39px;text-align:right;font-size:10px">3398</div><div class="a" style="left:423px;top:267px;width:41px;height:12px;background:#f56f6a"></div><div class="t" style="left:422px;top:269px;width:41.5px;text-align:right;font-size:10px">54.00</div><div class="a" style="left:466px;top:267px;width:41px;height:12px;background:#f56f6a"></div><div class="t" style="left:465px;top:269px;width:41.5px;text-align:right;font-size:10px">54.00</div><div class="a" style="left:509px;top:267px;width:42px;height:12px;background:#f56f6a"></div><div class="t" style="left:508px;top:269px;width:42.5px;text-align:right;font-size:10px">54.00</div><div class="a" style="left:553px;top:267px;width:41px;height:12px;background:#f56f6a"></div><div class="t" style="left:552px;top:269px;width:41.5px;text-align:right;font-size:10px">54.00</div><div class="a" style="left:596px;top:267px;width:42px;height:12px;background:#f56f6a"></div><div class="t" style="left:595px;top:269px;width:42.5px;text-align:right;font-size:10px">54.00</div><div class="a" style="left:640px;top:267px;width:41px;height:12px;background:#f3726b"></div><div class="t" style="left:639px;top:269px;width:41.5px;text-align:right;font-size:10px">53.00</div><div class="a" style="left:683px;top:267px;width:41px;height:12px;background:#ef776c"></div><div class="t" style="left:682px;top:269px;width:41.5px;text-align:right;font-size:10px">51.50</div><div class="a" style="left:726px;top:267px;width:42px;height:12px;background:#ee786c"></div><div class="t" style="left:725px;top:269px;width:42.5px;text-align:right;font-size:10px">51.00</div><div class="a" style="left:770px;top:267px;width:41px;height:12px;background:#e97e6d"></div><div class="t" style="left:769px;top:269px;width:41.5px;text-align:right;font-size:10px">49.00</div><div class="a" style="left:813px;top:267px;width:41px;height:12px;background:#e2866e"></div><div class="t" style="left:812px;top:269px;width:41.5px;text-align:right;font-size:10px">46.50</div><div class="a" style="left:856px;top:267px;width:42px;height:12px;background:#d99170"></div><div class="t" style="left:855px;top:269px;width:42.5px;text-align:right;font-size:10px">43.00</div><div class="a" style="left:900px;top:267px;width:41px;height:12px;background:#d39871"></div><div class="t" style="left:899px;top:269px;width:41.5px;text-align:right;font-size:10px">40.50</div><div class="a" style="left:943px;top:267px;width:41px;height:12px;background:#cba272"></div><div class="t" style="left:942px;top:269px;width:41.5px;text-align:right;font-size:10px">37.50</div><div class="a" style="left:986px;top:267px;width:42px;height:12px;background:#bdb275"></div><div class="t" style="left:985px;top:269px;width:42.5px;text-align:right;font-size:10px">32.00</div><div class="a" style="left:1030px;top:267px;width:41px;height:12px;background:#b4bd76"></div><div class="t" style="left:1029px;top:269px;width:41.5px;text-align:right;font-size:10px">28.50</div><div class="a" style="left:1073px;top:267px;width:41px;height:12px;background:#aec578"></div><div class="t" style="left:1072px;top:269px;width:41.5px;text-align:right;font-size:10px">26.00</div><div class="a" style="left:1116px;top:267px;width:42px;height:12px;background:#a8cd79"></div><div class="t" style="left:1115px;top:269px;width:42.5px;text-align:right;font-size:10px">23.50</div><div class="a" style="left:1160px;top:267px;width:41px;height:12px;background:#a1d47a"></div><div class="t" style="left:1159px;top:269px;width:41.5px;text-align:right;font-size:10px">21.00</div><div class="a" style="left:1203px;top:267px;width:41px;height:12px;background:#a1d47a"></div><div class="t" style="left:1202px;top:269px;width:41.5px;text-align:right;font-size:10px">21.00</div><div class="a" style="left:1246px;top:267px;width:42px;height:12px;background:#a0d67a"></div><div class="t" style="left:1245px;top:269px;width:42.5px;text-align:right;font-size:10px">20.50</div><div class="a" style="left:1290px;top:267px;width:41px;height:12px;background:#9dd97b"></div><div class="t" style="left:1289px;top:269px;width:41.5px;text-align:right;font-size:10px">19.50</div><div class="a" style="left:1333px;top:267px;width:42px;height:12px;background:#a1d47a"></div><div class="t" style="left:1332px;top:269px;width:42.5px;text-align:right;font-size:10px">21.00</div><div class="a" style="left:1377px;top:267px;width:41px;height:12px;background:#a4d179"></div><div class="t" style="left:1376px;top:269px;width:41.5px;text-align:right;font-size:10px">22.00</div><div class="a" style="left:379px;top:281px;width:42px;height:12px;background:linear-gradient(90deg,#dcdcdc,#f2f2f2 40%,#f0f0f0);border:1px solid #b4b4b4;border-left-color:#9a9a9a"></div><div class="t" style="left:379px;top:283px;width:39px;text-align:right;font-size:10px">3602</div><div class="a" style="left:423px;top:281px;width:41px;height:12px;background:#f56f6a"></div><div class="t" style="left:422px;top:283px;width:41.5px;text-align:right;font-size:10px">54.00</div><div class="a" style="left:466px;top:281px;width:41px;height:12px;background:#f56f6a"></div><div class="t" style="left:465px;top:283px;width:41.5px;text-align:right;font-size:10px">54.00</div><div class="a" style="left:509px;top:281px;width:42px;height:12px;background:#f56f6a"></div><div class="t" style="left:508px;top:283px;width:42.5px;text-align:right;font-size:10px">54.00</div><div class="a" style="left:553px;top:281px;width:41px;height:12px;background:#f56f6a"></div><div class="t" style="left:552px;top:283px;width:41.5px;text-align:right;font-size:10px">54.00</div><div class="a" style="left:596px;top:281px;width:42px;height:12px;background:#f56f6a"></div><div class="t" style="left:595px;top:283px;width:42.5px;text-align:right;font-size:10px">54.00</div><div class="a" style="left:640px;top:281px;width:41px;height:12px;background:#f3726b"></div><div class="t" style="left:639px;top:283px;width:41.5px;text-align:right;font-size:10px">53.00</div><div class="a" style="left:683px;top:281px;width:41px;height:12px;background:#f0756b"></div><div class="t" style="left:682px;top:283px;width:41.5px;text-align:right;font-size:10px">52.00</div><div class="a" style="left:726px;top:281px;width:42px;height:12px;background:#ef776c"></div><div class="t" style="left:725px;top:283px;width:42.5px;text-align:right;font-size:10px">51.50</div><div class="a" style="left:770px;top:281px;width:41px;height:12px;background:#eb7b6c"></div><div class="t" style="left:769px;top:283px;width:41.5px;text-align:right;font-size:10px">50.00</div><div class="a" style="left:813px;top:281px;width:41px;height:12px;background:#e6816d"></div><div class="t" style="left:812px;top:283px;width:41.5px;text-align:right;font-size:10px">48.00</div><div class="a" style="left:856px;top:281px;width:42px;height:12px;background:#dc8e6f"></div><div class="t" style="left:855px;top:283px;width:42.5px;text-align:right;font-size:10px">44.00</div><div class="a" style="left:900px;top:281px;width:41px;height:12px;background:#d79470"></div><div class="t" style="left:899px;top:283px;width:41.5px;text-align:right;font-size:10px">42.00</div><div class="a" style="left:943px;top:281px;width:41px;height:12px;background:#d09b71"></div><div class="t" style="left:942px;top:283px;width:41.5px;text-align:right;font-size:10px">39.50</div><div class="a" style="left:986px;top:281px;width:42px;height:12px;background:#c4ab74"></div><div class="t" style="left:985px;top:283px;width:42.5px;text-align:right;font-size:10px">34.50</div><div class="a" style="left:1030px;top:281px;width:41px;height:12px;background:#b9b775"></div><div class="t" style="left:1029px;top:283px;width:41.5px;text-align:right;font-size:10px">30.50</div><div class="a" style="left:1073px;top:281px;width:41px;height:12px;background:#b4bd76"></div><div class="t" style="left:1072px;top:283px;width:41.5px;text-align:right;font-size:10px">28.50</div><div class="a" style="left:1116px;top:281px;width:42px;height:12px;background:#adc678"></div><div class="t" style="left:1115px;top:283px;width:42.5px;text-align:right;font-size:10px">25.50</div><div class="a" style="left:1160px;top:281px;width:41px;height:12px;background:#a6ce79"></div><div class="t" style="left:1159px;top:283px;width:41.5px;text-align:right;font-size:10px">23.00</div><div class="a" style="left:1203px;top:281px;width:41px;height:12px;background:#a6ce79"></div><div class="t" style="left:1202px;top:283px;width:41.5px;text-align:right;font-size:10px">23.00</div><div class="a" style="left:1246px;top:281px;width:42px;height:12px;background:#a5d079"></div><div class="t" style="left:1245px;top:283px;width:42.5px;text-align:right;font-size:10px">22.50</div><div class="a" style="left:1290px;top:281px;width:41px;height:12px;background:#a1d47a"></div><div class="t" style="left:1289px;top:283px;width:41.5px;text-align:right;font-size:10px">21.00</div><div class="a" style="left:1333px;top:281px;width:42px;height:12px;background:#a6ce79"></div><div class="t" style="left:1332px;top:283px;width:42.5px;text-align:right;font-size:10px">23.00</div><div class="a" style="left:1377px;top:281px;width:41px;height:12px;background:#a9cb79"></div><div class="t" style="left:1376px;top:283px;width:41.5px;text-align:right;font-size:10px">24.00</div><div class="a" style="left:379px;top:295px;width:42px;height:12px;background:linear-gradient(90deg,#dcdcdc,#f2f2f2 40%,#f0f0f0);border:1px solid #b4b4b4;border-left-color:#9a9a9a"></div><div class="t" style="left:379px;top:297px;width:39px;text-align:right;font-size:10px">3801</div><div class="a" style="left:423px;top:295px;width:41px;height:12px;background:#f4716b"></div><div class="t" style="left:422px;top:297px;width:41.5px;text-align:right;font-size:10px">53.50</div><div class="a" style="left:466px;top:295px;width:41px;height:12px;background:#f4716b"></div><div class="t" style="left:465px;top:297px;width:41.5px;text-align:right;font-size:10px">53.50</div><div class="a" style="left:509px;top:295px;width:42px;height:12px;background:#f4716b"></div><div class="t" style="left:508px;top:297px;width:42.5px;text-align:right;font-size:10px">53.50</div><div class="a" style="left:553px;top:295px;width:41px;height:12px;background:#f4716b"></div><div class="t" style="left:552px;top:297px;width:41.5px;text-align:right;font-size:10px">53.50</div><div class="a" style="left:596px;top:295px;width:42px;height:12px;background:#f4716b"></div><div class="t" style="left:595px;top:297px;width:42.5px;text-align:right;font-size:10px">53.50</div><div class="a" style="left:640px;top:295px;width:41px;height:12px;background:#f3726b"></div><div class="t" style="left:639px;top:297px;width:41.5px;text-align:right;font-size:10px">53.00</div><div class="a" style="left:683px;top:295px;width:41px;height:12px;background:#f2746b"></div><div class="t" style="left:682px;top:297px;width:41.5px;text-align:right;font-size:10px">52.50</div><div class="a" style="left:726px;top:295px;width:42px;height:12px;background:#f0756b"></div><div class="t" style="left:725px;top:297px;width:42.5px;text-align:right;font-size:10px">52.00</div><div class="a" style="left:770px;top:295px;width:41px;height:12px;background:#ed7a6c"></div><div class="t" style="left:769px;top:297px;width:41.5px;text-align:right;font-size:10px">50.50</div><div class="a" style="left:813px;top:295px;width:41px;height:12px;background:#ea7d6d"></div><div class="t" style="left:812px;top:297px;width:41.5px;text-align:right;font-size:10px">49.50</div><div class="a" style="left:856px;top:295px;width:42px;height:12px;background:#e0896e"></div><div class="t" style="left:855px;top:297px;width:42.5px;text-align:right;font-size:10px">45.50</div><div class="a" style="left:900px;top:295px;width:41px;height:12px;background:#db8f6f"></div><div class="t" style="left:899px;top:297px;width:41.5px;text-align:right;font-size:10px">43.50</div><div class="a" style="left:943px;top:295px;width:41px;height:12px;background:#d69570"></div><div class="t" style="left:942px;top:297px;width:41.5px;text-align:right;font-size:10px">41.50</div><div class="a" style="left:986px;top:295px;width:42px;height:12px;background:#c9a573"></div><div class="t" style="left:985px;top:297px;width:42.5px;text-align:right;font-size:10px">36.50</div><div class="a" style="left:1030px;top:295px;width:41px;height:12px;background:#bdb275"></div><div class="t" style="left:1029px;top:297px;width:41.5px;text-align:right;font-size:10px">32.00</div><div class="a" style="left:1073px;top:295px;width:41px;height:12px;background:#b6bc76"></div><div class="t" style="left:1072px;top:297px;width:41.5px;text-align:right;font-size:10px">29.00</div><div class="a" style="left:1116px;top:295px;width:42px;height:12px;background:#aec578"></div><div class="t" style="left:1115px;top:297px;width:42.5px;text-align:right;font-size:10px">26.00</div><div class="a" style="left:1160px;top:295px;width:41px;height:12px;background:#aac978"></div><div class="t" style="left:1159px;top:297px;width:41.5px;text-align:right;font-size:10px">24.50</div><div class="a" style="left:1203px;top:295px;width:41px;height:12px;background:#a9cb79"></div><div class="t" style="left:1202px;top:297px;width:41.5px;text-align:right;font-size:10px">24.00</div><div class="a" style="left:1246px;top:295px;width:42px;height:12px;background:#a8cd79"></div><div class="t" style="left:1245px;top:297px;width:42.5px;text-align:right;font-size:10px">23.50</div><div class="a" style="left:1290px;top:295px;width:41px;height:12px;background:#a5d079"></div><div class="t" style="left:1289px;top:297px;width:41.5px;text-align:right;font-size:10px">22.50</div><div class="a" style="left:1333px;top:295px;width:42px;height:12px;background:#a8cd79"></div><div class="t" style="left:1332px;top:297px;width:42.5px;text-align:right;font-size:10px">23.50</div><div class="a" style="left:1377px;top:295px;width:41px;height:12px;background:#abc878"></div><div class="t" style="left:1376px;top:297px;width:41.5px;text-align:right;font-size:10px">25.00</div><div class="a" style="left:379px;top:309px;width:42px;height:12px;background:linear-gradient(90deg,#dcdcdc,#f2f2f2 40%,#f0f0f0);border:1px solid #b4b4b4;border-left-color:#9a9a9a"></div><div class="t" style="left:379px;top:311px;width:39px;text-align:right;font-size:10px">4000</div><div class="a" style="left:423px;top:309px;width:41px;height:12px;background:#f4716b"></div><div class="t" style="left:422px;top:311px;width:41.5px;text-align:right;font-size:10px">53.50</div><div class="a" style="left:466px;top:309px;width:41px;height:12px;background:#f4716b"></div><div class="t" style="left:465px;top:311px;width:41.5px;text-align:right;font-size:10px">53.50</div><div class="a" style="left:509px;top:309px;width:42px;height:12px;background:#f4716b"></div><div class="t" style="left:508px;top:311px;width:42.5px;text-align:right;font-size:10px">53.50</div><div class="a" style="left:553px;top:309px;width:41px;height:12px;background:#f4716b"></div><div class="t" style="left:552px;top:311px;width:41.5px;text-align:right;font-size:10px">53.50</div><div class="a" style="left:596px;top:309px;width:42px;height:12px;background:#f4716b"></div><div class="t" style="left:595px;top:311px;width:42.5px;text-align:right;font-size:10px">53.50</div><div class="a" style="left:640px;top:309px;width:41px;height:12px;background:#f3726b"></div><div class="t" style="left:639px;top:311px;width:41.5px;text-align:right;font-size:10px">53.00</div><div class="a" style="left:683px;top:309px;width:41px;height:12px;background:#f2746b"></div><div class="t" style="left:682px;top:311px;width:41.5px;text-align:right;font-size:10px">52.50</div><div class="a" style="left:726px;top:309px;width:42px;height:12px;background:#f0756b"></div><div class="t" style="left:725px;top:311px;width:42.5px;text-align:right;font-size:10px">52.00</div><div class="a" style="left:770px;top:309px;width:41px;height:12px;background:#ee786c"></div><div class="t" style="left:769px;top:311px;width:41.5px;text-align:right;font-size:10px">51.00</div><div class="a" style="left:813px;top:309px;width:41px;height:12px;background:#eb7b6c"></div><div class="t" style="left:812px;top:311px;width:41.5px;text-align:right;font-size:10px">50.00</div><div class="a" style="left:856px;top:309px;width:42px;height:12px;background:#e2866e"></div><div class="t" style="left:855px;top:311px;width:42.5px;text-align:right;font-size:10px">46.50</div><div class="a" style="left:900px;top:309px;width:41px;height:12px;background:#de8b6f"></div><div class="t" style="left:899px;top:311px;width:41.5px;text-align:right;font-size:10px">45.00</div><div class="a" style="left:943px;top:309px;width:41px;height:12px;background:#d89270"></div><div class="t" style="left:942px;top:311px;width:41.5px;text-align:right;font-size:10px">42.50</div><div class="a" style="left:986px;top:309px;width:42px;height:12px;background:#cda072"></div><div class="t" style="left:985px;top:311px;width:42.5px;text-align:right;font-size:10px">38.00</div><div class="a" style="left:1030px;top:309px;width:41px;height:12px;background:#c1ae74"></div><div class="t" style="left:1029px;top:311px;width:41.5px;text-align:right;font-size:10px">33.50</div><div class="a" style="left:1073px;top:309px;width:41px;height:12px;background:#b6bc76"></div><div class="t" style="left:1072px;top:311px;width:41.5px;text-align:right;font-size:10px">29.00</div><div class="a" style="left:1116px;top:309px;width:42px;height:12px;background:#afc377"></div><div class="t" style="left:1115px;top:311px;width:42.5px;text-align:right;font-size:10px">26.50</div><div class="a" style="left:1160px;top:309px;width:41px;height:12px;background:#adc678"></div><div class="t" style="left:1159px;top:311px;width:41.5px;text-align:right;font-size:10px">25.50</div><div class="a" style="left:1203px;top:309px;width:41px;height:12px;background:#aac978"></div><div class="t" style="left:1202px;top:311px;width:41.5px;text-align:right;font-size:10px">24.50</div><div class="a" style="left:1246px;top:309px;width:42px;height:12px;background:#a8cd79"></div><div class="t" style="left:1245px;top:311px;width:42.5px;text-align:right;font-size:10px">23.50</div><div class="a" style="left:1290px;top:309px;width:41px;height:12px;background:#a6ce79"></div><div class="t" style="left:1289px;top:311px;width:41.5px;text-align:right;font-size:10px">23.00</div><div class="a" style="left:1333px;top:309px;width:42px;height:12px;background:#a9cb79"></div><div class="t" style="left:1332px;top:311px;width:42.5px;text-align:right;font-size:10px">24.00</div><div class="a" style="left:1377px;top:309px;width:41px;height:12px;background:#abc878"></div><div class="t" style="left:1376px;top:311px;width:41.5px;text-align:right;font-size:10px">25.00</div><div class="a" style="left:379px;top:323px;width:42px;height:12px;background:linear-gradient(90deg,#dcdcdc,#f2f2f2 40%,#f0f0f0);border:1px solid #b4b4b4;border-left-color:#9a9a9a"></div><div class="t" style="left:379px;top:325px;width:39px;text-align:right;font-size:10px">4199</div><div class="a" style="left:423px;top:323px;width:41px;height:12px;background:#f4716b"></div><div class="t" style="left:422px;top:325px;width:41.5px;text-align:right;font-size:10px">53.50</div><div class="a" style="left:466px;top:323px;width:41px;height:12px;background:#f4716b"></div><div class="t" style="left:465px;top:325px;width:41.5px;text-align:right;font-size:10px">53.50</div><div class="a" style="left:509px;top:323px;width:42px;height:12px;background:#f4716b"></div><div class="t" style="left:508px;top:325px;width:42.5px;text-align:right;font-size:10px">53.50</div><div class="a" style="left:553px;top:323px;width:41px;height:12px;background:#f4716b"></div><div class="t" style="left:552px;top:325px;width:41.5px;text-align:right;font-size:10px">53.50</div><div class="a" style="left:596px;top:323px;width:42px;height:12px;background:#f4716b"></div><div class="t" style="left:595px;top:325px;width:42.5px;text-align:right;font-size:10px">53.50</div><div class="a" style="left:640px;top:323px;width:41px;height:12px;background:#f3726b"></div><div class="t" style="left:639px;top:325px;width:41.5px;text-align:right;font-size:10px">53.00</div><div class="a" style="left:683px;top:323px;width:41px;height:12px;background:#f2746b"></div><div class="t" style="left:682px;top:325px;width:41.5px;text-align:right;font-size:10px">52.50</div><div class="a" style="left:726px;top:323px;width:42px;height:12px;background:#f2746b"></div><div class="t" style="left:725px;top:325px;width:42.5px;text-align:right;font-size:10px">52.50</div><div class="a" style="left:770px;top:323px;width:41px;height:12px;background:#ef776c"></div><div class="t" style="left:769px;top:325px;width:41.5px;text-align:right;font-size:10px">51.50</div><div class="a" style="left:813px;top:323px;width:41px;height:12px;background:#ed7a6c"></div><div class="t" style="left:812px;top:325px;width:41.5px;text-align:right;font-size:10px">50.50</div><div class="a" style="left:856px;top:323px;width:42px;height:12px;background:#e5836e"></div><div class="t" style="left:855px;top:325px;width:42.5px;text-align:right;font-size:10px">47.50</div><div class="a" style="left:900px;top:323px;width:41px;height:12px;background:#e1886e"></div><div class="t" style="left:899px;top:325px;width:41.5px;text-align:right;font-size:10px">46.00</div><div class="a" style="left:943px;top:323px;width:41px;height:12px;background:#dc8e6f"></div><div class="t" style="left:942px;top:325px;width:41.5px;text-align:right;font-size:10px">44.00</div><div class="a" style="left:986px;top:323px;width:42px;height:12px;background:#d09b71"></div><div class="t" style="left:985px;top:325px;width:42.5px;text-align:right;font-size:10px">39.50</div><div class="a" style="left:1030px;top:323px;width:41px;height:12px;background:#c5a973"></div><div class="t" style="left:1029px;top:325px;width:41.5px;text-align:right;font-size:10px">35.00</div><div class="a" style="left:1073px;top:323px;width:41px;height:12px;background:#b9b775"></div><div class="t" style="left:1072px;top:325px;width:41.5px;text-align:right;font-size:10px">30.50</div><div class="a" style="left:1116px;top:323px;width:42px;height:12px;background:#b2c077"></div><div class="t" style="left:1115px;top:325px;width:42.5px;text-align:right;font-size:10px">27.50</div><div class="a" style="left:1160px;top:323px;width:41px;height:12px;background:#aec578"></div><div class="t" style="left:1159px;top:325px;width:41.5px;text-align:right;font-size:10px">26.00</div><div class="a" style="left:1203px;top:323px;width:41px;height:12px;background:#a9cb79"></div><div class="t" style="left:1202px;top:325px;width:41.5px;text-align:right;font-size:10px">24.00</div><div class="a" style="left:1246px;top:323px;width:42px;height:12px;background:#a4d179"></div><div class="t" style="left:1245px;top:325px;width:42.5px;text-align:right;font-size:10px">22.00</div><div class="a" style="left:1290px;top:323px;width:41px;height:12px;background:#a5d079"></div><div class="t" style="left:1289px;top:325px;width:41.5px;text-align:right;font-size:10px">22.50</div><div class="a" style="left:1333px;top:323px;width:42px;height:12px;background:#a8cd79"></div><div class="t" style="left:1332px;top:325px;width:42.5px;text-align:right;font-size:10px">23.50</div><div class="a" style="left:1377px;top:323px;width:41px;height:12px;background:#a6ce79"></div><div class="t" style="left:1376px;top:325px;width:41.5px;text-align:right;font-size:10px">23.00</div><div class="a" style="left:379px;top:337px;width:42px;height:12px;background:linear-gradient(90deg,#dcdcdc,#f2f2f2 40%,#f0f0f0);border:1px solid #b4b4b4;border-left-color:#9a9a9a"></div><div class="t" style="left:379px;top:339px;width:39px;text-align:right;font-size:10px">4398</div><div class="a" style="left:423px;top:337px;width:41px;height:12px;background:#f4716b"></div><div class="t" style="left:422px;top:339px;width:41.5px;text-align:right;font-size:10px">53.50</div><div class="a" style="left:466px;top:337px;width:41px;height:12px;background:#f4716b"></div><div class="t" style="left:465px;top:339px;width:41.5px;text-align:right;font-size:10px">53.50</div><div class="a" style="left:509px;top:337px;width:42px;height:12px;background:#f4716b"></div><div class="t" style="left:508px;top:339px;width:42.5px;text-align:right;font-size:10px">53.50</div><div class="a" style="left:553px;top:337px;width:41px;height:12px;background:#f4716b"></div><div class="t" style="left:552px;top:339px;width:41.5px;text-align:right;font-size:10px">53.50</div><div class="a" style="left:596px;top:337px;width:42px;height:12px;background:#f4716b"></div><div class="t" style="left:595px;top:339px;width:42.5px;text-align:right;font-size:10px">53.50</div><div class="a" style="left:640px;top:337px;width:41px;height:12px;background:#f3726b"></div><div class="t" style="left:639px;top:339px;width:41.5px;text-align:right;font-size:10px">53.00</div><div class="a" style="left:683px;top:337px;width:41px;height:12px;background:#f2746b"></div><div class="t" style="left:682px;top:339px;width:41.5px;text-align:right;font-size:10px">52.50</div><div class="a" style="left:726px;top:337px;width:42px;height:12px;background:#f2746b"></div><div class="t" style="left:725px;top:339px;width:42.5px;text-align:right;font-size:10px">52.50</div><div class="a" style="left:770px;top:337px;width:41px;height:12px;background:#f0756b"></div><div class="t" style="left:769px;top:339px;width:41.5px;text-align:right;font-size:10px">52.00</div><div class="a" style="left:813px;top:337px;width:41px;height:12px;background:#ee786c"></div><div class="t" style="left:812px;top:339px;width:41.5px;text-align:right;font-size:10px">51.00</div><div class="a" style="left:856px;top:337px;width:42px;height:12px;background:#e6816d"></div><div class="t" style="left:855px;top:339px;width:42.5px;text-align:right;font-size:10px">48.00</div><div class="a" style="left:900px;top:337px;width:41px;height:12px;background:#e4856e"></div><div class="t" style="left:899px;top:339px;width:41.5px;text-align:right;font-size:10px">47.00</div><div class="a" style="left:943px;top:337px;width:41px;height:12px;background:#de8b6f"></div><div class="t" style="left:942px;top:339px;width:41.5px;text-align:right;font-size:10px">45.00</div><div class="a" style="left:986px;top:337px;width:42px;height:12px;background:#d39871"></div><div class="t" style="left:985px;top:339px;width:42.5px;text-align:right;font-size:10px">40.50</div><div class="a" style="left:1030px;top:337px;width:41px;height:12px;background:#c7a673"></div><div class="t" style="left:1029px;top:339px;width:41.5px;text-align:right;font-size:10px">36.00</div><div class="a" style="left:1073px;top:337px;width:41px;height:12px;background:#b9b775"></div><div class="t" style="left:1072px;top:339px;width:41.5px;text-align:right;font-size:10px">30.50</div><div class="a" style="left:1116px;top:337px;width:42px;height:12px;background:#b2c077"></div><div class="t" style="left:1115px;top:339px;width:42.5px;text-align:right;font-size:10px">27.50</div><div class="a" style="left:1160px;top:337px;width:41px;height:12px;background:#aec578"></div><div class="t" style="left:1159px;top:339px;width:41.5px;text-align:right;font-size:10px">26.00</div><div class="a" style="left:1203px;top:337px;width:41px;height:12px;background:#abc878"></div><div class="t" style="left:1202px;top:339px;width:41.5px;text-align:right;font-size:10px">25.00</div><div class="a" style="left:1246px;top:337px;width:42px;height:12px;background:#a8cd79"></div><div class="t" style="left:1245px;top:339px;width:42.5px;text-align:right;font-size:10px">23.50</div><div class="a" style="left:1290px;top:337px;width:41px;height:12px;background:#a2d37a"></div><div class="t" style="left:1289px;top:339px;width:41.5px;text-align:right;font-size:10px">21.50</div><div class="a" style="left:1333px;top:337px;width:42px;height:12px;background:#a5d079"></div><div class="t" style="left:1332px;top:339px;width:42.5px;text-align:right;font-size:10px">22.50</div><div class="a" style="left:1377px;top:337px;width:41px;height:12px;background:#a2d37a"></div><div class="t" style="left:1376px;top:339px;width:41.5px;text-align:right;font-size:10px">21.50</div><div class="a" style="left:379px;top:351px;width:42px;height:12px;background:linear-gradient(90deg,#dcdcdc,#f2f2f2 40%,#f0f0f0);border:1px solid #b4b4b4;border-left-color:#9a9a9a"></div><div class="t" style="left:379px;top:353px;width:39px;text-align:right;font-size:10px">4602</div><div class="a" style="left:423px;top:351px;width:41px;height:12px;background:#f3726b"></div><div class="t" style="left:422px;top:353px;width:41.5px;text-align:right;font-size:10px">53.00</div><div class="a" style="left:466px;top:351px;width:41px;height:12px;background:#f3726b"></div><div class="t" style="left:465px;top:353px;width:41.5px;text-align:right;font-size:10px">53.00</div><div class="a" style="left:509px;top:351px;width:42px;height:12px;background:#f3726b"></div><div class="t" style="left:508px;top:353px;width:42.5px;text-align:right;font-size:10px">53.00</div><div class="a" style="left:553px;top:351px;width:41px;height:12px;background:#f3726b"></div><div class="t" style="left:552px;top:353px;width:41.5px;text-align:right;font-size:10px">53.00</div><div class="a" style="left:596px;top:351px;width:42px;height:12px;background:#f3726b"></div><div class="t" style="left:595px;top:353px;width:42.5px;text-align:right;font-size:10px">53.00</div><div class="a" style="left:640px;top:351px;width:41px;height:12px;background:#f3726b"></div><div class="t" style="left:639px;top:353px;width:41.5px;text-align:right;font-size:10px">53.00</div><div class="a" style="left:683px;top:351px;width:41px;height:12px;background:#f2746b"></div><div class="t" style="left:682px;top:353px;width:41.5px;text-align:right;font-size:10px">52.50</div><div class="a" style="left:726px;top:351px;width:42px;height:12px;background:#f2746b"></div><div class="t" style="left:725px;top:353px;width:42.5px;text-align:right;font-size:10px">52.50</div><div class="a" style="left:770px;top:351px;width:41px;height:12px;background:#f0756b"></div><div class="t" style="left:769px;top:353px;width:41.5px;text-align:right;font-size:10px">52.00</div><div class="a" style="left:813px;top:351px;width:41px;height:12px;background:#ef776c"></div><div class="t" style="left:812px;top:353px;width:41.5px;text-align:right;font-size:10px">51.50</div><div class="a" style="left:856px;top:351px;width:42px;height:12px;background:#e97e6d"></div><div class="t" style="left:855px;top:353px;width:42.5px;text-align:right;font-size:10px">49.00</div><div class="a" style="left:900px;top:351px;width:41px;height:12px;background:#e5836e"></div><div class="t" style="left:899px;top:353px;width:41.5px;text-align:right;font-size:10px">47.50</div><div class="a" style="left:943px;top:351px;width:41px;height:12px;background:#e1886e"></div><div class="t" style="left:942px;top:353px;width:41.5px;text-align:right;font-size:10px">46.00</div><div class="a" style="left:986px;top:351px;width:42px;height:12px;background:#d69570"></div><div class="t" style="left:985px;top:353px;width:42.5px;text-align:right;font-size:10px">41.50</div><div class="a" style="left:1030px;top:351px;width:41px;height:12px;background:#c9a573"></div><div class="t" style="left:1029px;top:353px;width:41.5px;text-align:right;font-size:10px">36.50</div><div class="a" style="left:1073px;top:351px;width:41px;height:12px;background:#b9b775"></div><div class="t" style="left:1072px;top:353px;width:41.5px;text-align:right;font-size:10px">30.50</div><div class="a" style="left:1116px;top:351px;width:42px;height:12px;background:#b2c077"></div><div class="t" style="left:1115px;top:353px;width:42.5px;text-align:right;font-size:10px">27.50</div><div class="a" style="left:1160px;top:351px;width:41px;height:12px;background:#aec578"></div><div class="t" style="left:1159px;top:353px;width:41.5px;text-align:right;font-size:10px">26.00</div><div class="a" style="left:1203px;top:351px;width:41px;height:12px;background:#aec578"></div><div class="t" style="left:1202px;top:353px;width:41.5px;text-align:right;font-size:10px">26.00</div><div class="a" style="left:1246px;top:351px;width:42px;height:12px;background:#abc878"></div><div class="t" style="left:1245px;top:353px;width:42.5px;text-align:right;font-size:10px">25.00</div><div class="a" style="left:1290px;top:351px;width:41px;height:12px;background:#a9cb79"></div><div class="t" style="left:1289px;top:353px;width:41.5px;text-align:right;font-size:10px">24.00</div><div class="a" style="left:1333px;top:351px;width:42px;height:12px;background:#a9cb79"></div><div class="t" style="left:1332px;top:353px;width:42.5px;text-align:right;font-size:10px">24.00</div><div class="a" style="left:1377px;top:351px;width:41px;height:12px;background:#a8cd79"></div><div class="t" style="left:1376px;top:353px;width:41.5px;text-align:right;font-size:10px">23.50</div><div class="a" style="left:379px;top:365px;width:42px;height:12px;background:linear-gradient(90deg,#dcdcdc,#f2f2f2 40%,#f0f0f0);border:1px solid #b4b4b4;border-left-color:#9a9a9a"></div><div class="t" style="left:379px;top:367px;width:39px;text-align:right;font-size:10px">4801</div><div class="a" style="left:423px;top:365px;width:41px;height:12px;background:#f3726b"></div><div class="t" style="left:422px;top:367px;width:41.5px;text-align:right;font-size:10px">53.00</div><div class="a" style="left:466px;top:365px;width:41px;height:12px;background:#f3726b"></div><div class="t" style="left:465px;top:367px;width:41.5px;text-align:right;font-size:10px">53.00</div><div class="a" style="left:509px;top:365px;width:42px;height:12px;background:#f3726b"></div><div class="t" style="left:508px;top:367px;width:42.5px;text-align:right;font-size:10px">53.00</div><div class="a" style="left:553px;top:365px;width:41px;height:12px;background:#f3726b"></div><div class="t" style="left:552px;top:367px;width:41.5px;text-align:right;font-size:10px">53.00</div><div class="a" style="left:596px;top:365px;width:42px;height:12px;background:#f3726b"></div><div class="t" style="left:595px;top:367px;width:42.5px;text-align:right;font-size:10px">53.00</div><div class="a" style="left:640px;top:365px;width:41px;height:12px;background:#f3726b"></div><div class="t" style="left:639px;top:367px;width:41.5px;text-align:right;font-size:10px">53.00</div><div class="a" style="left:683px;top:365px;width:41px;height:12px;background:#f2746b"></div><div class="t" style="left:682px;top:367px;width:41.5px;text-align:right;font-size:10px">52.50</div><div class="a" style="left:726px;top:365px;width:42px;height:12px;background:#f2746b"></div><div class="t" style="left:725px;top:367px;width:42.5px;text-align:right;font-size:10px">52.50</div><div class="a" style="left:770px;top:365px;width:41px;height:12px;background:#f0756b"></div><div class="t" style="left:769px;top:367px;width:41.5px;text-align:right;font-size:10px">52.00</div><div class="a" style="left:813px;top:365px;width:41px;height:12px;background:#ef776c"></div><div class="t" style="left:812px;top:367px;width:41.5px;text-align:right;font-size:10px">51.50</div><div class="a" style="left:856px;top:365px;width:42px;height:12px;background:#ea7d6d"></div><div class="t" style="left:855px;top:367px;width:42.5px;text-align:right;font-size:10px">49.50</div><div class="a" style="left:900px;top:365px;width:41px;height:12px;background:#e6816d"></div><div class="t" style="left:899px;top:367px;width:41.5px;text-align:right;font-size:10px">48.00</div><div class="a" style="left:943px;top:365px;width:41px;height:12px;background:#e2866e"></div><div class="t" style="left:942px;top:367px;width:41.5px;text-align:right;font-size:10px">46.50</div><div class="a" style="left:986px;top:365px;width:42px;height:12px;background:#d89270"></div><div class="t" style="left:985px;top:367px;width:42.5px;text-align:right;font-size:10px">42.50</div><div class="a" style="left:1030px;top:365px;width:41px;height:12px;background:#cba272"></div><div class="t" style="left:1029px;top:367px;width:41.5px;text-align:right;font-size:10px">37.50</div><div class="a" style="left:1073px;top:365px;width:41px;height:12px;background:#bbb675"></div><div class="t" style="left:1072px;top:367px;width:41.5px;text-align:right;font-size:10px">31.00</div><div class="a" style="left:1116px;top:365px;width:42px;height:12px;background:#b3bf77"></div><div class="t" style="left:1115px;top:367px;width:42.5px;text-align:right;font-size:10px">28.00</div><div class="a" style="left:1160px;top:365px;width:41px;height:12px;background:#aec578"></div><div class="t" style="left:1159px;top:367px;width:41.5px;text-align:right;font-size:10px">26.00</div><div class="a" style="left:1203px;top:365px;width:41px;height:12px;background:#aec578"></div><div class="t" style="left:1202px;top:367px;width:41.5px;text-align:right;font-size:10px">26.00</div><div class="a" style="left:1246px;top:365px;width:42px;height:12px;background:#adc678"></div><div class="t" style="left:1245px;top:367px;width:42.5px;text-align:right;font-size:10px">25.50</div><div class="a" style="left:1290px;top:365px;width:41px;height:12px;background:#aac978"></div><div class="t" style="left:1289px;top:367px;width:41.5px;text-align:right;font-size:10px">24.50</div><div class="a" style="left:1333px;top:365px;width:42px;height:12px;background:#abc878"></div><div class="t" style="left:1332px;top:367px;width:42.5px;text-align:right;font-size:10px">25.00</div><div class="a" style="left:1377px;top:365px;width:41px;height:12px;background:#abc878"></div><div class="t" style="left:1376px;top:367px;width:41.5px;text-align:right;font-size:10px">25.00</div><div class="a" style="left:379px;top:379px;width:42px;height:12px;background:linear-gradient(90deg,#dcdcdc,#f2f2f2 40%,#f0f0f0);border:1px solid #b4b4b4;border-left-color:#9a9a9a"></div><div class="t" style="left:379px;top:381px;width:39px;text-align:right;font-size:10px">5000</div><div class="a" style="left:423px;top:379px;width:41px;height:12px;background:#f3726b"></div><div class="t" style="left:422px;top:381px;width:41.5px;text-align:right;font-size:10px">53.00</div><div class="a" style="left:466px;top:379px;width:41px;height:12px;background:#f3726b"></div><div class="t" style="left:465px;top:381px;width:41.5px;text-align:right;font-size:10px">53.00</div><div class="a" style="left:509px;top:379px;width:42px;height:12px;background:#f3726b"></div><div class="t" style="left:508px;top:381px;width:42.5px;text-align:right;font-size:10px">53.00</div><div class="a" style="left:553px;top:379px;width:41px;height:12px;background:#f3726b"></div><div class="t" style="left:552px;top:381px;width:41.5px;text-align:right;font-size:10px">53.00</div><div class="a" style="left:596px;top:379px;width:42px;height:12px;background:#f3726b"></div><div class="t" style="left:595px;top:381px;width:42.5px;text-align:right;font-size:10px">53.00</div><div class="a" style="left:640px;top:379px;width:41px;height:12px;background:#f2746b"></div><div class="t" style="left:639px;top:381px;width:41.5px;text-align:right;font-size:10px">52.50</div><div class="a" style="left:683px;top:379px;width:41px;height:12px;background:#f2746b"></div><div class="t" style="left:682px;top:381px;width:41.5px;text-align:right;font-size:10px">52.50</div><div class="a" style="left:726px;top:379px;width:42px;height:12px;background:#f2746b"></div><div class="t" style="left:725px;top:381px;width:42.5px;text-align:right;font-size:10px">52.50</div><div class="a" style="left:770px;top:379px;width:41px;height:12px;background:#f0756b"></div><div class="t" style="left:769px;top:381px;width:41.5px;text-align:right;font-size:10px">52.00</div><div class="a" style="left:813px;top:379px;width:41px;height:12px;background:#f0756b"></div><div class="t" style="left:812px;top:381px;width:41.5px;text-align:right;font-size:10px">52.00</div><div class="a" style="left:856px;top:379px;width:42px;height:12px;background:#eb7b6c"></div><div class="t" style="left:855px;top:381px;width:42.5px;text-align:right;font-size:10px">50.00</div><div class="a" style="left:900px;top:379px;width:41px;height:12px;background:#e97e6d"></div><div class="t" style="left:899px;top:381px;width:41.5px;text-align:right;font-size:10px">49.00</div><div class="a" style="left:943px;top:379px;width:41px;height:12px;background:#e5836e"></div><div class="t" style="left:942px;top:381px;width:41.5px;text-align:right;font-size:10px">47.50</div><div class="a" style="left:986px;top:379px;width:42px;height:12px;background:#db8f6f"></div><div class="t" style="left:985px;top:381px;width:42.5px;text-align:right;font-size:10px">43.50</div><div class="a" style="left:1030px;top:379px;width:41px;height:12px;background:#ce9f72"></div><div class="t" style="left:1029px;top:381px;width:41.5px;text-align:right;font-size:10px">38.50</div><div class="a" style="left:1073px;top:379px;width:41px;height:12px;background:#bfb175"></div><div class="t" style="left:1072px;top:381px;width:41.5px;text-align:right;font-size:10px">32.50</div><div class="a" style="left:1116px;top:379px;width:42px;height:12px;background:#b6bc76"></div><div class="t" style="left:1115px;top:381px;width:42.5px;text-align:right;font-size:10px">29.00</div><div class="a" style="left:1160px;top:379px;width:41px;height:12px;background:#afc377"></div><div class="t" style="left:1159px;top:381px;width:41.5px;text-align:right;font-size:10px">26.50</div><div class="a" style="left:1203px;top:379px;width:41px;height:12px;background:#abc878"></div><div class="t" style="left:1202px;top:381px;width:41.5px;text-align:right;font-size:10px">25.00</div><div class="a" style="left:1246px;top:379px;width:42px;height:12px;background:#abc878"></div><div class="t" style="left:1245px;top:381px;width:42.5px;text-align:right;font-size:10px">25.00</div><div class="a" style="left:1290px;top:379px;width:41px;height:12px;background:#a9cb79"></div><div class="t" style="left:1289px;top:381px;width:41.5px;text-align:right;font-size:10px">24.00</div><div class="a" style="left:1333px;top:379px;width:42px;height:12px;background:#abc878"></div><div class="t" style="left:1332px;top:381px;width:42.5px;text-align:right;font-size:10px">25.00</div><div class="a" style="left:1377px;top:379px;width:41px;height:12px;background:#abc878"></div><div class="t" style="left:1376px;top:381px;width:41.5px;text-align:right;font-size:10px">25.00</div><div class="a" style="left:379px;top:393px;width:42px;height:13px;background:linear-gradient(90deg,#dcdcdc,#f2f2f2 40%,#f0f0f0);border:1px solid #b4b4b4;border-left-color:#9a9a9a"></div><div class="t" style="left:379px;top:395px;width:39px;text-align:right;font-size:10px">5199</div><div class="a" style="left:423px;top:393px;width:41px;height:13px;background:#f3726b"></div><div class="t" style="left:422px;top:395px;width:41.5px;text-align:right;font-size:10px">53.00</div><div class="a" style="left:466px;top:393px;width:41px;height:13px;background:#f3726b"></div><div class="t" style="left:465px;top:395px;width:41.5px;text-align:right;font-size:10px">53.00</div><div class="a" style="left:509px;top:393px;width:42px;height:13px;background:#f3726b"></div><div class="t" style="left:508px;top:395px;width:42.5px;text-align:right;font-size:10px">53.00</div><div class="a" style="left:553px;top:393px;width:41px;height:13px;background:#f3726b"></div><div class="t" style="left:552px;top:395px;width:41.5px;text-align:right;font-size:10px">53.00</div><div class="a" style="left:596px;top:393px;width:42px;height:13px;background:#f3726b"></div><div class="t" style="left:595px;top:395px;width:42.5px;text-align:right;font-size:10px">53.00</div><div class="a" style="left:640px;top:393px;width:41px;height:13px;background:#f2746b"></div><div class="t" style="left:639px;top:395px;width:41.5px;text-align:right;font-size:10px">52.50</div><div class="a" style="left:683px;top:393px;width:41px;height:13px;background:#f2746b"></div><div class="t" style="left:682px;top:395px;width:41.5px;text-align:right;font-size:10px">52.50</div><div class="a" style="left:726px;top:393px;width:42px;height:13px;background:#f2746b"></div><div class="t" style="left:725px;top:395px;width:42.5px;text-align:right;font-size:10px">52.50</div><div class="a" style="left:770px;top:393px;width:41px;height:13px;background:#f0756b"></div><div class="t" style="left:769px;top:395px;width:41.5px;text-align:right;font-size:10px">52.00</div><div class="a" style="left:813px;top:393px;width:41px;height:13px;background:#f0756b"></div><div class="t" style="left:812px;top:395px;width:41.5px;text-align:right;font-size:10px">52.00</div><div class="a" style="left:856px;top:393px;width:42px;height:13px;background:#ed7a6c"></div><div class="t" style="left:855px;top:395px;width:42.5px;text-align:right;font-size:10px">50.50</div><div class="a" style="left:900px;top:393px;width:41px;height:13px;background:#e97e6d"></div><div class="t" style="left:899px;top:395px;width:41.5px;text-align:right;font-size:10px">49.00</div><div class="a" style="left:943px;top:393px;width:41px;height:13px;background:#e6816d"></div><div class="t" style="left:942px;top:395px;width:41.5px;text-align:right;font-size:10px">48.00</div><div class="a" style="left:986px;top:393px;width:42px;height:13px;background:#dc8e6f"></div><div class="t" style="left:985px;top:395px;width:42.5px;text-align:right;font-size:10px">44.00</div><div class="a" style="left:1030px;top:393px;width:41px;height:13px;background:#cf9d71"></div><div class="t" style="left:1029px;top:395px;width:41.5px;text-align:right;font-size:10px">39.00</div><div class="a" style="left:1073px;top:393px;width:41px;height:13px;background:#bfb175"></div><div class="t" style="left:1072px;top:395px;width:41.5px;text-align:right;font-size:10px">32.50</div><div class="a" style="left:1116px;top:393px;width:42px;height:13px;background:#b7ba76"></div><div class="t" style="left:1115px;top:395px;width:42.5px;text-align:right;font-size:10px">29.50</div><div class="a" style="left:1160px;top:393px;width:41px;height:13px;background:#b2c077"></div><div class="t" style="left:1159px;top:395px;width:41.5px;text-align:right;font-size:10px">27.50</div><div class="a" style="left:1203px;top:393px;width:41px;height:13px;background:#adc678"></div><div class="t" style="left:1202px;top:395px;width:41.5px;text-align:right;font-size:10px">25.50</div><div class="a" style="left:1246px;top:393px;width:42px;height:13px;background:#aac978"></div><div class="t" style="left:1245px;top:395px;width:42.5px;text-align:right;font-size:10px">24.50</div><div class="a" style="left:1290px;top:393px;width:41px;height:13px;background:#a5d079"></div><div class="t" style="left:1289px;top:395px;width:41.5px;text-align:right;font-size:10px">22.50</div><div class="a" style="left:1333px;top:393px;width:42px;height:13px;background:#a6ce79"></div><div class="t" style="left:1332px;top:395px;width:42.5px;text-align:right;font-size:10px">23.00</div><div class="a" style="left:1377px;top:393px;width:41px;height:13px;background:#a8cd79"></div><div class="t" style="left:1376px;top:395px;width:41.5px;text-align:right;font-size:10px">23.50</div><div class="a" style="left:379px;top:408px;width:42px;height:12px;background:linear-gradient(90deg,#dcdcdc,#f2f2f2 40%,#f0f0f0);border:1px solid #b4b4b4;border-left-color:#9a9a9a"></div><div class="t" style="left:379px;top:410px;width:39px;text-align:right;font-size:10px">5398</div><div class="a" style="left:423px;top:408px;width:41px;height:12px;background:#f2746b"></div><div class="t" style="left:422px;top:410px;width:41.5px;text-align:right;font-size:10px">52.50</div><div class="a" style="left:466px;top:408px;width:41px;height:12px;background:#f2746b"></div><div class="t" style="left:465px;top:410px;width:41.5px;text-align:right;font-size:10px">52.50</div><div class="a" style="left:509px;top:408px;width:42px;height:12px;background:#f2746b"></div><div class="t" style="left:508px;top:410px;width:42.5px;text-align:right;font-size:10px">52.50</div><div class="a" style="left:553px;top:408px;width:41px;height:12px;background:#f2746b"></div><div class="t" style="left:552px;top:410px;width:41.5px;text-align:right;font-size:10px">52.50</div><div class="a" style="left:596px;top:408px;width:42px;height:12px;background:#f2746b"></div><div class="t" style="left:595px;top:410px;width:42.5px;text-align:right;font-size:10px">52.50</div><div class="a" style="left:640px;top:408px;width:41px;height:12px;background:#f2746b"></div><div class="t" style="left:639px;top:410px;width:41.5px;text-align:right;font-size:10px">52.50</div><div class="a" style="left:683px;top:408px;width:41px;height:12px;background:#f2746b"></div><div class="t" style="left:682px;top:410px;width:41.5px;text-align:right;font-size:10px">52.50</div><div class="a" style="left:726px;top:408px;width:42px;height:12px;background:#f2746b"></div><div class="t" style="left:725px;top:410px;width:42.5px;text-align:right;font-size:10px">52.50</div><div class="a" style="left:770px;top:408px;width:41px;height:12px;background:#f2746b"></div><div class="t" style="left:769px;top:410px;width:41.5px;text-align:right;font-size:10px">52.50</div><div class="a" style="left:813px;top:408px;width:41px;height:12px;background:#f0756b"></div><div class="t" style="left:812px;top:410px;width:41.5px;text-align:right;font-size:10px">52.00</div><div class="a" style="left:856px;top:408px;width:42px;height:12px;background:#ed7a6c"></div><div class="t" style="left:855px;top:410px;width:42.5px;text-align:right;font-size:10px">50.50</div><div class="a" style="left:900px;top:408px;width:41px;height:12px;background:#ea7d6d"></div><div class="t" style="left:899px;top:410px;width:41.5px;text-align:right;font-size:10px">49.50</div><div class="a" style="left:943px;top:408px;width:41px;height:12px;background:#e6816d"></div><div class="t" style="left:942px;top:410px;width:41.5px;text-align:right;font-size:10px">48.00</div><div class="a" style="left:986px;top:408px;width:42px;height:12px;background:#dc8e6f"></div><div class="t" style="left:985px;top:410px;width:42.5px;text-align:right;font-size:10px">44.00</div><div class="a" style="left:1030px;top:408px;width:41px;height:12px;background:#d09b71"></div><div class="t" style="left:1029px;top:410px;width:41.5px;text-align:right;font-size:10px">39.50</div><div class="a" style="left:1073px;top:408px;width:41px;height:12px;background:#bdb275"></div><div class="t" style="left:1072px;top:410px;width:41.5px;text-align:right;font-size:10px">32.00</div><div class="a" style="left:1116px;top:408px;width:42px;height:12px;background:#b7ba76"></div><div class="t" style="left:1115px;top:410px;width:42.5px;text-align:right;font-size:10px">29.50</div><div class="a" style="left:1160px;top:408px;width:41px;height:12px;background:#b3bf77"></div><div class="t" style="left:1159px;top:410px;width:41.5px;text-align:right;font-size:10px">28.00</div><div class="a" style="left:1203px;top:408px;width:41px;height:12px;background:#aec578"></div><div class="t" style="left:1202px;top:410px;width:41.5px;text-align:right;font-size:10px">26.00</div><div class="a" style="left:1246px;top:408px;width:42px;height:12px;background:#aac978"></div><div class="t" style="left:1245px;top:410px;width:42.5px;text-align:right;font-size:10px">24.50</div><div class="a" style="left:1290px;top:408px;width:41px;height:12px;background:#a2d37a"></div><div class="t" style="left:1289px;top:410px;width:41.5px;text-align:right;font-size:10px">21.50</div><div class="a" style="left:1333px;top:408px;width:42px;height:12px;background:#a0d67a"></div><div class="t" style="left:1332px;top:410px;width:42.5px;text-align:right;font-size:10px">20.50</div><div class="a" style="left:1377px;top:408px;width:41px;height:12px;background:#a1d47a"></div><div class="t" style="left:1376px;top:410px;width:41.5px;text-align:right;font-size:10px">21.00</div><div class="a" style="left:379px;top:422px;width:42px;height:12px;background:linear-gradient(90deg,#dcdcdc,#f2f2f2 40%,#f0f0f0);border:1px solid #b4b4b4;border-left-color:#9a9a9a"></div><div class="t" style="left:379px;top:424px;width:39px;text-align:right;font-size:10px">5602</div><div class="a" style="left:423px;top:422px;width:41px;height:12px;background:#f2746b"></div><div class="t" style="left:422px;top:424px;width:41.5px;text-align:right;font-size:10px">52.50</div><div class="a" style="left:466px;top:422px;width:41px;height:12px;background:#f2746b"></div><div class="t" style="left:465px;top:424px;width:41.5px;text-align:right;font-size:10px">52.50</div><div class="a" style="left:509px;top:422px;width:42px;height:12px;background:#f2746b"></div><div class="t" style="left:508px;top:424px;width:42.5px;text-align:right;font-size:10px">52.50</div><div class="a" style="left:553px;top:422px;width:41px;height:12px;background:#f2746b"></div><div class="t" style="left:552px;top:424px;width:41.5px;text-align:right;font-size:10px">52.50</div><div class="a" style="left:596px;top:422px;width:42px;height:12px;background:#f2746b"></div><div class="t" style="left:595px;top:424px;width:42.5px;text-align:right;font-size:10px">52.50</div><div class="a" style="left:640px;top:422px;width:41px;height:12px;background:#f2746b"></div><div class="t" style="left:639px;top:424px;width:41.5px;text-align:right;font-size:10px">52.50</div><div class="a" style="left:683px;top:422px;width:41px;height:12px;background:#f2746b"></div><div class="t" style="left:682px;top:424px;width:41.5px;text-align:right;font-size:10px">52.50</div><div class="a" style="left:726px;top:422px;width:42px;height:12px;background:#f2746b"></div><div class="t" style="left:725px;top:424px;width:42.5px;text-align:right;font-size:10px">52.50</div><div class="a" style="left:770px;top:422px;width:41px;height:12px;background:#f2746b"></div><div class="t" style="left:769px;top:424px;width:41.5px;text-align:right;font-size:10px">52.50</div><div class="a" style="left:813px;top:422px;width:41px;height:12px;background:#f0756b"></div><div class="t" style="left:812px;top:424px;width:41.5px;text-align:right;font-size:10px">52.00</div><div class="a" style="left:856px;top:422px;width:42px;height:12px;background:#ed7a6c"></div><div class="t" style="left:855px;top:424px;width:42.5px;text-align:right;font-size:10px">50.50</div><div class="a" style="left:900px;top:422px;width:41px;height:12px;background:#ea7d6d"></div><div class="t" style="left:899px;top:424px;width:41.5px;text-align:right;font-size:10px">49.50</div><div class="a" style="left:943px;top:422px;width:41px;height:12px;background:#e7806d"></div><div class="t" style="left:942px;top:424px;width:41.5px;text-align:right;font-size:10px">48.50</div><div class="a" style="left:986px;top:422px;width:42px;height:12px;background:#dd8c6f"></div><div class="t" style="left:985px;top:424px;width:42.5px;text-align:right;font-size:10px">44.50</div><div class="a" style="left:1030px;top:422px;width:41px;height:12px;background:#d29a71"></div><div class="t" style="left:1029px;top:424px;width:41.5px;text-align:right;font-size:10px">40.00</div><div class="a" style="left:1073px;top:422px;width:41px;height:12px;background:#c0af74"></div><div class="t" style="left:1072px;top:424px;width:41.5px;text-align:right;font-size:10px">33.00</div><div class="a" style="left:1116px;top:422px;width:42px;height:12px;background:#b8b976"></div><div class="t" style="left:1115px;top:424px;width:42.5px;text-align:right;font-size:10px">30.00</div><div class="a" style="left:1160px;top:422px;width:41px;height:12px;background:#b4bd76"></div><div class="t" style="left:1159px;top:424px;width:41.5px;text-align:right;font-size:10px">28.50</div><div class="a" style="left:1203px;top:422px;width:41px;height:12px;background:#aec578"></div><div class="t" style="left:1202px;top:424px;width:41.5px;text-align:right;font-size:10px">26.00</div><div class="a" style="left:1246px;top:422px;width:42px;height:12px;background:#aac978"></div><div class="t" style="left:1245px;top:424px;width:42.5px;text-align:right;font-size:10px">24.50</div><div class="a" style="left:1290px;top:422px;width:41px;height:12px;background:#a5d079"></div><div class="t" style="left:1289px;top:424px;width:41.5px;text-align:right;font-size:10px">22.50</div><div class="a" style="left:1333px;top:422px;width:42px;height:12px;background:#a0d67a"></div><div class="t" style="left:1332px;top:424px;width:42.5px;text-align:right;font-size:10px">20.50</div><div class="a" style="left:1377px;top:422px;width:41px;height:12px;background:#a1d47a"></div><div class="t" style="left:1376px;top:424px;width:41.5px;text-align:right;font-size:10px">21.00</div><div class="a" style="left:379px;top:436px;width:42px;height:12px;background:linear-gradient(90deg,#dcdcdc,#f2f2f2 40%,#f0f0f0);border:1px solid #b4b4b4;border-left-color:#9a9a9a"></div><div class="t" style="left:379px;top:438px;width:39px;text-align:right;font-size:10px">5801</div><div class="a" style="left:423px;top:436px;width:41px;height:12px;background:#f2746b"></div><div class="t" style="left:422px;top:438px;width:41.5px;text-align:right;font-size:10px">52.50</div><div class="a" style="left:466px;top:436px;width:41px;height:12px;background:#f2746b"></div><div class="t" style="left:465px;top:438px;width:41.5px;text-align:right;font-size:10px">52.50</div><div class="a" style="left:509px;top:436px;width:42px;height:12px;background:#f2746b"></div><div class="t" style="left:508px;top:438px;width:42.5px;text-align:right;font-size:10px">52.50</div><div class="a" style="left:553px;top:436px;width:41px;height:12px;background:#f2746b"></div><div class="t" style="left:552px;top:438px;width:41.5px;text-align:right;font-size:10px">52.50</div><div class="a" style="left:596px;top:436px;width:42px;height:12px;background:#f2746b"></div><div class="t" style="left:595px;top:438px;width:42.5px;text-align:right;font-size:10px">52.50</div><div class="a" style="left:640px;top:436px;width:41px;height:12px;background:#f2746b"></div><div class="t" style="left:639px;top:438px;width:41.5px;text-align:right;font-size:10px">52.50</div><div class="a" style="left:683px;top:436px;width:41px;height:12px;background:#f2746b"></div><div class="t" style="left:682px;top:438px;width:41.5px;text-align:right;font-size:10px">52.50</div><div class="a" style="left:726px;top:436px;width:42px;height:12px;background:#f2746b"></div><div class="t" style="left:725px;top:438px;width:42.5px;text-align:right;font-size:10px">52.50</div><div class="a" style="left:770px;top:436px;width:41px;height:12px;background:#f2746b"></div><div class="t" style="left:769px;top:438px;width:41.5px;text-align:right;font-size:10px">52.50</div><div class="a" style="left:813px;top:436px;width:41px;height:12px;background:#f0756b"></div><div class="t" style="left:812px;top:438px;width:41.5px;text-align:right;font-size:10px">52.00</div><div class="a" style="left:856px;top:436px;width:42px;height:12px;background:#ed7a6c"></div><div class="t" style="left:855px;top:438px;width:42.5px;text-align:right;font-size:10px">50.50</div><div class="a" style="left:900px;top:436px;width:41px;height:12px;background:#ea7d6d"></div><div class="t" style="left:899px;top:438px;width:41.5px;text-align:right;font-size:10px">49.50</div><div class="a" style="left:943px;top:436px;width:41px;height:12px;background:#e7806d"></div><div class="t" style="left:942px;top:438px;width:41.5px;text-align:right;font-size:10px">48.50</div><div class="a" style="left:986px;top:436px;width:42px;height:12px;background:#de8b6f"></div><div class="t" style="left:985px;top:438px;width:42.5px;text-align:right;font-size:10px">45.00</div><div class="a" style="left:1030px;top:436px;width:41px;height:12px;background:#d29a71"></div><div class="t" style="left:1029px;top:438px;width:41.5px;text-align:right;font-size:10px">40.00</div><div class="a" style="left:1073px;top:436px;width:41px;height:12px;background:#c1ae74"></div><div class="t" style="left:1072px;top:438px;width:41.5px;text-align:right;font-size:10px">33.50</div><div class="a" style="left:1116px;top:436px;width:42px;height:12px;background:#b8b976"></div><div class="t" style="left:1115px;top:438px;width:42.5px;text-align:right;font-size:10px">30.00</div><div class="a" style="left:1160px;top:436px;width:41px;height:12px;background:#b6bc76"></div><div class="t" style="left:1159px;top:438px;width:41.5px;text-align:right;font-size:10px">29.00</div><div class="a" style="left:1203px;top:436px;width:41px;height:12px;background:#afc377"></div><div class="t" style="left:1202px;top:438px;width:41.5px;text-align:right;font-size:10px">26.50</div><div class="a" style="left:1246px;top:436px;width:42px;height:12px;background:#aac978"></div><div class="t" style="left:1245px;top:438px;width:42.5px;text-align:right;font-size:10px">24.50</div><div class="a" style="left:1290px;top:436px;width:41px;height:12px;background:#a8cd79"></div><div class="t" style="left:1289px;top:438px;width:41.5px;text-align:right;font-size:10px">23.50</div><div class="a" style="left:1333px;top:436px;width:42px;height:12px;background:#a5d079"></div><div class="t" style="left:1332px;top:438px;width:42.5px;text-align:right;font-size:10px">22.50</div><div class="a" style="left:1377px;top:436px;width:41px;height:12px;background:#a2d37a"></div><div class="t" style="left:1376px;top:438px;width:41.5px;text-align:right;font-size:10px">21.50</div><div class="a" style="left:379px;top:450px;width:42px;height:12px;background:linear-gradient(90deg,#dcdcdc,#f2f2f2 40%,#f0f0f0);border:1px solid #b4b4b4;border-left-color:#9a9a9a"></div><div class="t" style="left:379px;top:452px;width:39px;text-align:right;font-size:10px">6000</div><div class="a" style="left:423px;top:450px;width:41px;height:12px;background:#f2746b"></div><div class="t" style="left:422px;top:452px;width:41.5px;text-align:right;font-size:10px">52.50</div><div class="a" style="left:466px;top:450px;width:41px;height:12px;background:#f2746b"></div><div class="t" style="left:465px;top:452px;width:41.5px;text-align:right;font-size:10px">52.50</div><div class="a" style="left:509px;top:450px;width:42px;height:12px;background:#f2746b"></div><div class="t" style="left:508px;top:452px;width:42.5px;text-align:right;font-size:10px">52.50</div><div class="a" style="left:553px;top:450px;width:41px;height:12px;background:#f2746b"></div><div class="t" style="left:552px;top:452px;width:41.5px;text-align:right;font-size:10px">52.50</div><div class="a" style="left:596px;top:450px;width:42px;height:12px;background:#f2746b"></div><div class="t" style="left:595px;top:452px;width:42.5px;text-align:right;font-size:10px">52.50</div><div class="a" style="left:640px;top:450px;width:41px;height:12px;background:#f2746b"></div><div class="t" style="left:639px;top:452px;width:41.5px;text-align:right;font-size:10px">52.50</div><div class="a" style="left:683px;top:450px;width:41px;height:12px;background:#f2746b"></div><div class="t" style="left:682px;top:452px;width:41.5px;text-align:right;font-size:10px">52.50</div><div class="a" style="left:726px;top:450px;width:42px;height:12px;background:#f2746b"></div><div class="t" style="left:725px;top:452px;width:42.5px;text-align:right;font-size:10px">52.50</div><div class="a" style="left:770px;top:450px;width:41px;height:12px;background:#f2746b"></div><div class="t" style="left:769px;top:452px;width:41.5px;text-align:right;font-size:10px">52.50</div><div class="a" style="left:813px;top:450px;width:41px;height:12px;background:#f2746b"></div><div class="t" style="left:812px;top:452px;width:41.5px;text-align:right;font-size:10px">52.50</div><div class="a" style="left:856px;top:450px;width:42px;height:12px;background:#ef776c"></div><div class="t" style="left:855px;top:452px;width:42.5px;text-align:right;font-size:10px">51.50</div><div class="a" style="left:900px;top:450px;width:41px;height:12px;background:#ed7a6c"></div><div class="t" style="left:899px;top:452px;width:41.5px;text-align:right;font-size:10px">50.50</div><div class="a" style="left:943px;top:450px;width:41px;height:12px;background:#ea7d6d"></div><div class="t" style="left:942px;top:452px;width:41.5px;text-align:right;font-size:10px">49.50</div><div class="a" style="left:986px;top:450px;width:42px;height:12px;background:#e0896e"></div><div class="t" style="left:985px;top:452px;width:42.5px;text-align:right;font-size:10px">45.50</div><div class="a" style="left:1030px;top:450px;width:41px;height:12px;background:#d49771"></div><div class="t" style="left:1029px;top:452px;width:41.5px;text-align:right;font-size:10px">41.00</div><div class="a" style="left:1073px;top:450px;width:41px;height:12px;background:#c2ac74"></div><div class="t" style="left:1072px;top:452px;width:41.5px;text-align:right;font-size:10px">34.00</div><div class="a" style="left:1116px;top:450px;width:42px;height:12px;background:#bbb675"></div><div class="t" style="left:1115px;top:452px;width:42.5px;text-align:right;font-size:10px">31.00</div><div class="a" style="left:1160px;top:450px;width:41px;height:12px;background:#b8b976"></div><div class="t" style="left:1159px;top:452px;width:41.5px;text-align:right;font-size:10px">30.00</div><div class="a" style="left:1203px;top:450px;width:41px;height:12px;background:#b2c077"></div><div class="t" style="left:1202px;top:452px;width:41.5px;text-align:right;font-size:10px">27.50</div><div class="a" style="left:1246px;top:450px;width:42px;height:12px;background:#adc678"></div><div class="t" style="left:1245px;top:452px;width:42.5px;text-align:right;font-size:10px">25.50</div><div class="a" style="left:1290px;top:450px;width:41px;height:12px;background:#a9cb79"></div><div class="t" style="left:1289px;top:452px;width:41.5px;text-align:right;font-size:10px">24.00</div><div class="a" style="left:1333px;top:450px;width:42px;height:12px;background:#a6ce79"></div><div class="t" style="left:1332px;top:452px;width:42.5px;text-align:right;font-size:10px">23.00</div><div class="a" style="left:1377px;top:450px;width:41px;height:12px;background:#a4d179"></div><div class="t" style="left:1376px;top:452px;width:41.5px;text-align:right;font-size:10px">22.00</div><div class="a" style="left:379px;top:464px;width:42px;height:12px;background:linear-gradient(90deg,#dcdcdc,#f2f2f2 40%,#f0f0f0);border:1px solid #b4b4b4;border-left-color:#9a9a9a"></div><div class="t" style="left:379px;top:466px;width:39px;text-align:right;font-size:10px">6199</div><div class="a" style="left:423px;top:464px;width:41px;height:12px;background:#f2746b"></div><div class="t" style="left:422px;top:466px;width:41.5px;text-align:right;font-size:10px">52.50</div><div class="a" style="left:466px;top:464px;width:41px;height:12px;background:#f2746b"></div><div class="t" style="left:465px;top:466px;width:41.5px;text-align:right;font-size:10px">52.50</div><div class="a" style="left:509px;top:464px;width:42px;height:12px;background:#f2746b"></div><div class="t" style="left:508px;top:466px;width:42.5px;text-align:right;font-size:10px">52.50</div><div class="a" style="left:553px;top:464px;width:41px;height:12px;background:#f2746b"></div><div class="t" style="left:552px;top:466px;width:41.5px;text-align:right;font-size:10px">52.50</div><div class="a" style="left:596px;top:464px;width:42px;height:12px;background:#f2746b"></div><div class="t" style="left:595px;top:466px;width:42.5px;text-align:right;font-size:10px">52.50</div><div class="a" style="left:640px;top:464px;width:41px;height:12px;background:#f2746b"></div><div class="t" style="left:639px;top:466px;width:41.5px;text-align:right;font-size:10px">52.50</div><div class="a" style="left:683px;top:464px;width:41px;height:12px;background:#f2746b"></div><div class="t" style="left:682px;top:466px;width:41.5px;text-align:right;font-size:10px">52.50</div><div class="a" style="left:726px;top:464px;width:42px;height:12px;background:#f2746b"></div><div class="t" style="left:725px;top:466px;width:42.5px;text-align:right;font-size:10px">52.50</div><div class="a" style="left:770px;top:464px;width:41px;height:12px;background:#f2746b"></div><div class="t" style="left:769px;top:466px;width:41.5px;text-align:right;font-size:10px">52.50</div><div class="a" style="left:813px;top:464px;width:41px;height:12px;background:#f2746b"></div><div class="t" style="left:812px;top:466px;width:41.5px;text-align:right;font-size:10px">52.50</div><div class="a" style="left:856px;top:464px;width:42px;height:12px;background:#ef776c"></div><div class="t" style="left:855px;top:466px;width:42.5px;text-align:right;font-size:10px">51.50</div><div class="a" style="left:900px;top:464px;width:41px;height:12px;background:#ed7a6c"></div><div class="t" style="left:899px;top:466px;width:41.5px;text-align:right;font-size:10px">50.50</div><div class="a" style="left:943px;top:464px;width:41px;height:12px;background:#ea7d6d"></div><div class="t" style="left:942px;top:466px;width:41.5px;text-align:right;font-size:10px">49.50</div><div class="a" style="left:986px;top:464px;width:42px;height:12px;background:#e1886e"></div><div class="t" style="left:985px;top:466px;width:42.5px;text-align:right;font-size:10px">46.00</div><div class="a" style="left:1030px;top:464px;width:41px;height:12px;background:#d69570"></div><div class="t" style="left:1029px;top:466px;width:41.5px;text-align:right;font-size:10px">41.50</div><div class="a" style="left:1073px;top:464px;width:41px;height:12px;background:#c4ab74"></div><div class="t" style="left:1072px;top:466px;width:41.5px;text-align:right;font-size:10px">34.50</div><div class="a" style="left:1116px;top:464px;width:42px;height:12px;background:#bcb475"></div><div class="t" style="left:1115px;top:466px;width:42.5px;text-align:right;font-size:10px">31.50</div><div class="a" style="left:1160px;top:464px;width:41px;height:12px;background:#b8b976"></div><div class="t" style="left:1159px;top:466px;width:41.5px;text-align:right;font-size:10px">30.00</div><div class="a" style="left:1203px;top:464px;width:41px;height:12px;background:#b2c077"></div><div class="t" style="left:1202px;top:466px;width:41.5px;text-align:right;font-size:10px">27.50</div><div class="a" style="left:1246px;top:464px;width:42px;height:12px;background:#aec578"></div><div class="t" style="left:1245px;top:466px;width:42.5px;text-align:right;font-size:10px">26.00</div><div class="a" style="left:1290px;top:464px;width:41px;height:12px;background:#aac978"></div><div class="t" style="left:1289px;top:466px;width:41.5px;text-align:right;font-size:10px">24.50</div><div class="a" style="left:1333px;top:464px;width:42px;height:12px;background:#a4d179"></div><div class="t" style="left:1332px;top:466px;width:42.5px;text-align:right;font-size:10px">22.00</div><div class="a" style="left:1377px;top:464px;width:41px;height:12px;background:#a2d37a"></div><div class="t" style="left:1376px;top:466px;width:41.5px;text-align:right;font-size:10px">21.50</div><div class="a" style="left:379px;top:478px;width:42px;height:12px;background:linear-gradient(90deg,#dcdcdc,#f2f2f2 40%,#f0f0f0);border:1px solid #b4b4b4;border-left-color:#9a9a9a"></div><div class="t" style="left:379px;top:480px;width:39px;text-align:right;font-size:10px">6398</div><div class="a" style="left:423px;top:478px;width:41px;height:12px;background:#f2746b"></div><div class="t" style="left:422px;top:480px;width:41.5px;text-align:right;font-size:10px">52.50</div><div class="a" style="left:466px;top:478px;width:41px;height:12px;background:#f2746b"></div><div class="t" style="left:465px;top:480px;width:41.5px;text-align:right;font-size:10px">52.50</div><div class="a" style="left:509px;top:478px;width:42px;height:12px;background:#f2746b"></div><div class="t" style="left:508px;top:480px;width:42.5px;text-align:right;font-size:10px">52.50</div><div class="a" style="left:553px;top:478px;width:41px;height:12px;background:#f2746b"></div><div class="t" style="left:552px;top:480px;width:41.5px;text-align:right;font-size:10px">52.50</div><div class="a" style="left:596px;top:478px;width:42px;height:12px;background:#f2746b"></div><div class="t" style="left:595px;top:480px;width:42.5px;text-align:right;font-size:10px">52.50</div><div class="a" style="left:640px;top:478px;width:41px;height:12px;background:#f2746b"></div><div class="t" style="left:639px;top:480px;width:41.5px;text-align:right;font-size:10px">52.50</div><div class="a" style="left:683px;top:478px;width:41px;height:12px;background:#f2746b"></div><div class="t" style="left:682px;top:480px;width:41.5px;text-align:right;font-size:10px">52.50</div><div class="a" style="left:726px;top:478px;width:42px;height:12px;background:#f2746b"></div><div class="t" style="left:725px;top:480px;width:42.5px;text-align:right;font-size:10px">52.50</div><div class="a" style="left:770px;top:478px;width:41px;height:12px;background:#f2746b"></div><div class="t" style="left:769px;top:480px;width:41.5px;text-align:right;font-size:10px">52.50</div><div class="a" style="left:813px;top:478px;width:41px;height:12px;background:#f2746b"></div><div class="t" style="left:812px;top:480px;width:41.5px;text-align:right;font-size:10px">52.50</div><div class="a" style="left:856px;top:478px;width:42px;height:12px;background:#ef776c"></div><div class="t" style="left:855px;top:480px;width:42.5px;text-align:right;font-size:10px">51.50</div><div class="a" style="left:900px;top:478px;width:41px;height:12px;background:#ed7a6c"></div><div class="t" style="left:899px;top:480px;width:41.5px;text-align:right;font-size:10px">50.50</div><div class="a" style="left:943px;top:478px;width:41px;height:12px;background:#ea7d6d"></div><div class="t" style="left:942px;top:480px;width:41.5px;text-align:right;font-size:10px">49.50</div><div class="a" style="left:986px;top:478px;width:42px;height:12px;background:#e1886e"></div><div class="t" style="left:985px;top:480px;width:42.5px;text-align:right;font-size:10px">46.00</div><div class="a" style="left:1030px;top:478px;width:41px;height:12px;background:#d69570"></div><div class="t" style="left:1029px;top:480px;width:41.5px;text-align:right;font-size:10px">41.50</div><div class="a" style="left:1073px;top:478px;width:41px;height:12px;background:#c5a973"></div><div class="t" style="left:1072px;top:480px;width:41.5px;text-align:right;font-size:10px">35.00</div><div class="a" style="left:1116px;top:478px;width:42px;height:12px;background:#bdb275"></div><div class="t" style="left:1115px;top:480px;width:42.5px;text-align:right;font-size:10px">32.00</div><div class="a" style="left:1160px;top:478px;width:41px;height:12px;background:#b9b775"></div><div class="t" style="left:1159px;top:480px;width:41.5px;text-align:right;font-size:10px">30.50</div><div class="a" style="left:1203px;top:478px;width:41px;height:12px;background:#b3bf77"></div><div class="t" style="left:1202px;top:480px;width:41.5px;text-align:right;font-size:10px">28.00</div><div class="a" style="left:1246px;top:478px;width:42px;height:12px;background:#afc377"></div><div class="t" style="left:1245px;top:480px;width:42.5px;text-align:right;font-size:10px">26.50</div><div class="a" style="left:1290px;top:478px;width:41px;height:12px;background:#aac978"></div><div class="t" style="left:1289px;top:480px;width:41.5px;text-align:right;font-size:10px">24.50</div><div class="a" style="left:1333px;top:478px;width:42px;height:12px;background:#a1d47a"></div><div class="t" style="left:1332px;top:480px;width:42.5px;text-align:right;font-size:10px">21.00</div><div class="a" style="left:1377px;top:478px;width:41px;height:12px;background:#a0d67a"></div><div class="t" style="left:1376px;top:480px;width:41.5px;text-align:right;font-size:10px">20.50</div><div class="a" style="left:379px;top:492px;width:42px;height:12px;background:linear-gradient(90deg,#dcdcdc,#f2f2f2 40%,#f0f0f0);border:1px solid #b4b4b4;border-left-color:#9a9a9a"></div><div class="t" style="left:379px;top:494px;width:39px;text-align:right;font-size:10px">6602</div><div class="a" style="left:423px;top:492px;width:41px;height:12px;background:#f2746b"></div><div class="t" style="left:422px;top:494px;width:41.5px;text-align:right;font-size:10px">52.50</div><div class="a" style="left:466px;top:492px;width:41px;height:12px;background:#f2746b"></div><div class="t" style="left:465px;top:494px;width:41.5px;text-align:right;font-size:10px">52.50</div><div class="a" style="left:509px;top:492px;width:42px;height:12px;background:#f2746b"></div><div class="t" style="left:508px;top:494px;width:42.5px;text-align:right;font-size:10px">52.50</div><div class="a" style="left:553px;top:492px;width:41px;height:12px;background:#f2746b"></div><div class="t" style="left:552px;top:494px;width:41.5px;text-align:right;font-size:10px">52.50</div><div class="a" style="left:596px;top:492px;width:42px;height:12px;background:#f2746b"></div><div class="t" style="left:595px;top:494px;width:42.5px;text-align:right;font-size:10px">52.50</div><div class="a" style="left:640px;top:492px;width:41px;height:12px;background:#f2746b"></div><div class="t" style="left:639px;top:494px;width:41.5px;text-align:right;font-size:10px">52.50</div><div class="a" style="left:683px;top:492px;width:41px;height:12px;background:#f2746b"></div><div class="t" style="left:682px;top:494px;width:41.5px;text-align:right;font-size:10px">52.50</div><div class="a" style="left:726px;top:492px;width:42px;height:12px;background:#f2746b"></div><div class="t" style="left:725px;top:494px;width:42.5px;text-align:right;font-size:10px">52.50</div><div class="a" style="left:770px;top:492px;width:41px;height:12px;background:#f2746b"></div><div class="t" style="left:769px;top:494px;width:41.5px;text-align:right;font-size:10px">52.50</div><div class="a" style="left:813px;top:492px;width:41px;height:12px;background:#f2746b"></div><div class="t" style="left:812px;top:494px;width:41.5px;text-align:right;font-size:10px">52.50</div><div class="a" style="left:856px;top:492px;width:42px;height:12px;background:#ef776c"></div><div class="t" style="left:855px;top:494px;width:42.5px;text-align:right;font-size:10px">51.50</div><div class="a" style="left:900px;top:492px;width:41px;height:12px;background:#ed7a6c"></div><div class="t" style="left:899px;top:494px;width:41.5px;text-align:right;font-size:10px">50.50</div><div class="a" style="left:943px;top:492px;width:41px;height:12px;background:#ea7d6d"></div><div class="t" style="left:942px;top:494px;width:41.5px;text-align:right;font-size:10px">49.50</div><div class="a" style="left:986px;top:492px;width:42px;height:12px;background:#e2866e"></div><div class="t" style="left:985px;top:494px;width:42.5px;text-align:right;font-size:10px">46.50</div><div class="a" style="left:1030px;top:492px;width:41px;height:12px;background:#d79470"></div><div class="t" style="left:1029px;top:494px;width:41.5px;text-align:right;font-size:10px">42.00</div><div class="a" style="left:1073px;top:492px;width:41px;height:12px;background:#c5a973"></div><div class="t" style="left:1072px;top:494px;width:41.5px;text-align:right;font-size:10px">35.00</div><div class="a" style="left:1116px;top:492px;width:42px;height:12px;background:#bfb175"></div><div class="t" style="left:1115px;top:494px;width:42.5px;text-align:right;font-size:10px">32.50</div><div class="a" style="left:1160px;top:492px;width:41px;height:12px;background:#bbb675"></div><div class="t" style="left:1159px;top:494px;width:41.5px;text-align:right;font-size:10px">31.00</div><div class="a" style="left:1203px;top:492px;width:41px;height:12px;background:#b4bd76"></div><div class="t" style="left:1202px;top:494px;width:41.5px;text-align:right;font-size:10px">28.50</div><div class="a" style="left:1246px;top:492px;width:42px;height:12px;background:#b1c277"></div><div class="t" style="left:1245px;top:494px;width:42.5px;text-align:right;font-size:10px">27.00</div><div class="a" style="left:1290px;top:492px;width:41px;height:12px;background:#abc878"></div><div class="t" style="left:1289px;top:494px;width:41.5px;text-align:right;font-size:10px">25.00</div><div class="a" style="left:1333px;top:492px;width:42px;height:12px;background:#a0d67a"></div><div class="t" style="left:1332px;top:494px;width:42.5px;text-align:right;font-size:10px">20.50</div><div class="a" style="left:1377px;top:492px;width:41px;height:12px;background:#9bdc7b"></div><div class="t" style="left:1376px;top:494px;width:41.5px;text-align:right;font-size:10px">18.50</div><div class="a" style="left:379px;top:506px;width:42px;height:12px;background:linear-gradient(90deg,#dcdcdc,#f2f2f2 40%,#f0f0f0);border:1px solid #b4b4b4;border-left-color:#9a9a9a"></div><div class="t" style="left:379px;top:508px;width:39px;text-align:right;font-size:10px">6801</div><div class="a" style="left:423px;top:506px;width:41px;height:12px;background:#f2746b"></div><div class="t" style="left:422px;top:508px;width:41.5px;text-align:right;font-size:10px">52.50</div><div class="a" style="left:466px;top:506px;width:41px;height:12px;background:#f2746b"></div><div class="t" style="left:465px;top:508px;width:41.5px;text-align:right;font-size:10px">52.50</div><div class="a" style="left:509px;top:506px;width:42px;height:12px;background:#f2746b"></div><div class="t" style="left:508px;top:508px;width:42.5px;text-align:right;font-size:10px">52.50</div><div class="a" style="left:553px;top:506px;width:41px;height:12px;background:#f2746b"></div><div class="t" style="left:552px;top:508px;width:41.5px;text-align:right;font-size:10px">52.50</div><div class="a" style="left:596px;top:506px;width:42px;height:12px;background:#f2746b"></div><div class="t" style="left:595px;top:508px;width:42.5px;text-align:right;font-size:10px">52.50</div><div class="a" style="left:640px;top:506px;width:41px;height:12px;background:#f2746b"></div><div class="t" style="left:639px;top:508px;width:41.5px;text-align:right;font-size:10px">52.50</div><div class="a" style="left:683px;top:506px;width:41px;height:12px;background:#f2746b"></div><div class="t" style="left:682px;top:508px;width:41.5px;text-align:right;font-size:10px">52.50</div><div class="a" style="left:726px;top:506px;width:42px;height:12px;background:#f2746b"></div><div class="t" style="left:725px;top:508px;width:42.5px;text-align:right;font-size:10px">52.50</div><div class="a" style="left:770px;top:506px;width:41px;height:12px;background:#f2746b"></div><div class="t" style="left:769px;top:508px;width:41.5px;text-align:right;font-size:10px">52.50</div><div class="a" style="left:813px;top:506px;width:41px;height:12px;background:#f2746b"></div><div class="t" style="left:812px;top:508px;width:41.5px;text-align:right;font-size:10px">52.50</div><div class="a" style="left:856px;top:506px;width:42px;height:12px;background:#ef776c"></div><div class="t" style="left:855px;top:508px;width:42.5px;text-align:right;font-size:10px">51.50</div><div class="a" style="left:900px;top:506px;width:41px;height:12px;background:#ee786c"></div><div class="t" style="left:899px;top:508px;width:41.5px;text-align:right;font-size:10px">51.00</div><div class="a" style="left:943px;top:506px;width:41px;height:12px;background:#eb7b6c"></div><div class="t" style="left:942px;top:508px;width:41.5px;text-align:right;font-size:10px">50.00</div><div class="a" style="left:986px;top:506px;width:42px;height:12px;background:#e2866e"></div><div class="t" style="left:985px;top:508px;width:42.5px;text-align:right;font-size:10px">46.50</div><div class="a" style="left:1030px;top:506px;width:41px;height:12px;background:#d89270"></div><div class="t" style="left:1029px;top:508px;width:41.5px;text-align:right;font-size:10px">42.50</div><div class="a" style="left:1073px;top:506px;width:41px;height:12px;background:#c9a573"></div><div class="t" style="left:1072px;top:508px;width:41.5px;text-align:right;font-size:10px">36.50</div><div class="a" style="left:1116px;top:506px;width:42px;height:12px;background:#c1ae74"></div><div class="t" style="left:1115px;top:508px;width:42.5px;text-align:right;font-size:10px">33.50</div><div class="a" style="left:1160px;top:506px;width:41px;height:12px;background:#bcb475"></div><div class="t" style="left:1159px;top:508px;width:41.5px;text-align:right;font-size:10px">31.50</div><div class="a" style="left:1203px;top:506px;width:41px;height:12px;background:#b6bc76"></div><div class="t" style="left:1202px;top:508px;width:41.5px;text-align:right;font-size:10px">29.00</div><div class="a" style="left:1246px;top:506px;width:42px;height:12px;background:#b2c077"></div><div class="t" style="left:1245px;top:508px;width:42.5px;text-align:right;font-size:10px">27.50</div><div class="a" style="left:1290px;top:506px;width:41px;height:12px;background:#adc678"></div><div class="t" style="left:1289px;top:508px;width:41.5px;text-align:right;font-size:10px">25.50</div><div class="a" style="left:1333px;top:506px;width:42px;height:12px;background:#a0d67a"></div><div class="t" style="left:1332px;top:508px;width:42.5px;text-align:right;font-size:10px">20.50</div><div class="a" style="left:1377px;top:506px;width:41px;height:12px;background:#9dd97b"></div><div class="t" style="left:1376px;top:508px;width:41.5px;text-align:right;font-size:10px">19.50</div><div class="a" style="left:379px;top:520px;width:42px;height:13px;background:linear-gradient(90deg,#dcdcdc,#f2f2f2 40%,#f0f0f0);border:1px solid #b4b4b4;border-left-color:#9a9a9a"></div><div class="t" style="left:379px;top:522px;width:39px;text-align:right;font-size:10px">7199</div><div class="a" style="left:423px;top:520px;width:41px;height:13px;background:#f2746b"></div><div class="t" style="left:422px;top:522px;width:41.5px;text-align:right;font-size:10px">52.50</div><div class="a" style="left:466px;top:520px;width:41px;height:13px;background:#f2746b"></div><div class="t" style="left:465px;top:522px;width:41.5px;text-align:right;font-size:10px">52.50</div><div class="a" style="left:509px;top:520px;width:42px;height:13px;background:#f2746b"></div><div class="t" style="left:508px;top:522px;width:42.5px;text-align:right;font-size:10px">52.50</div><div class="a" style="left:553px;top:520px;width:41px;height:13px;background:#f2746b"></div><div class="t" style="left:552px;top:522px;width:41.5px;text-align:right;font-size:10px">52.50</div><div class="a" style="left:596px;top:520px;width:42px;height:13px;background:#f2746b"></div><div class="t" style="left:595px;top:522px;width:42.5px;text-align:right;font-size:10px">52.50</div><div class="a" style="left:640px;top:520px;width:41px;height:13px;background:#f2746b"></div><div class="t" style="left:639px;top:522px;width:41.5px;text-align:right;font-size:10px">52.50</div><div class="a" style="left:683px;top:520px;width:41px;height:13px;background:#f2746b"></div><div class="t" style="left:682px;top:522px;width:41.5px;text-align:right;font-size:10px">52.50</div><div class="a" style="left:726px;top:520px;width:42px;height:13px;background:#f2746b"></div><div class="t" style="left:725px;top:522px;width:42.5px;text-align:right;font-size:10px">52.50</div><div class="a" style="left:770px;top:520px;width:41px;height:13px;background:#f2746b"></div><div class="t" style="left:769px;top:522px;width:41.5px;text-align:right;font-size:10px">52.50</div><div class="a" style="left:813px;top:520px;width:41px;height:13px;background:#f2746b"></div><div class="t" style="left:812px;top:522px;width:41.5px;text-align:right;font-size:10px">52.50</div><div class="a" style="left:856px;top:520px;width:42px;height:13px;background:#f0756b"></div><div class="t" style="left:855px;top:522px;width:42.5px;text-align:right;font-size:10px">52.00</div><div class="a" style="left:900px;top:520px;width:41px;height:13px;background:#ee786c"></div><div class="t" style="left:899px;top:522px;width:41.5px;text-align:right;font-size:10px">51.00</div><div class="a" style="left:943px;top:520px;width:41px;height:13px;background:#ed7a6c"></div><div class="t" style="left:942px;top:522px;width:41.5px;text-align:right;font-size:10px">50.50</div><div class="a" style="left:986px;top:520px;width:42px;height:13px;background:#e6816d"></div><div class="t" style="left:985px;top:522px;width:42.5px;text-align:right;font-size:10px">48.00</div><div class="a" style="left:1030px;top:520px;width:41px;height:13px;background:#dd8c6f"></div><div class="t" style="left:1029px;top:522px;width:41.5px;text-align:right;font-size:10px">44.50</div><div class="a" style="left:1073px;top:520px;width:41px;height:13px;background:#cf9d71"></div><div class="t" style="left:1072px;top:522px;width:41.5px;text-align:right;font-size:10px">39.00</div><div class="a" style="left:1116px;top:520px;width:42px;height:13px;background:#c9a573"></div><div class="t" style="left:1115px;top:522px;width:42.5px;text-align:right;font-size:10px">36.50</div><div class="a" style="left:1160px;top:520px;width:41px;height:13px;background:#bdb275"></div><div class="t" style="left:1159px;top:522px;width:41.5px;text-align:right;font-size:10px">32.00</div><div class="a" style="left:1203px;top:520px;width:41px;height:13px;background:#b7ba76"></div><div class="t" style="left:1202px;top:522px;width:41.5px;text-align:right;font-size:10px">29.50</div><div class="a" style="left:1246px;top:520px;width:42px;height:13px;background:#b2c077"></div><div class="t" style="left:1245px;top:522px;width:42.5px;text-align:right;font-size:10px">27.50</div><div class="a" style="left:1290px;top:520px;width:41px;height:13px;background:#afc377"></div><div class="t" style="left:1289px;top:522px;width:41.5px;text-align:right;font-size:10px">26.50</div><div class="a" style="left:1333px;top:520px;width:42px;height:13px;background:#a8cd79"></div><div class="t" style="left:1332px;top:522px;width:42.5px;text-align:right;font-size:10px">23.50</div><div class="a" style="left:1377px;top:520px;width:41px;height:13px;background:#a2d37a"></div><div class="t" style="left:1376px;top:522px;width:41.5px;text-align:right;font-size:10px">21.50</div><div class="a" style="left:379px;top:535px;width:42px;height:12px;background:linear-gradient(90deg,#dcdcdc,#f2f2f2 40%,#f0f0f0);border:1px solid #b4b4b4;border-left-color:#9a9a9a"></div><div class="t" style="left:379px;top:537px;width:39px;text-align:right;font-size:10px">7602</div><div class="a" style="left:423px;top:535px;width:41px;height:12px;background:#f3726b"></div><div class="t" style="left:422px;top:537px;width:41.5px;text-align:right;font-size:10px">53.00</div><div class="a" style="left:466px;top:535px;width:41px;height:12px;background:#f3726b"></div><div class="t" style="left:465px;top:537px;width:41.5px;text-align:right;font-size:10px">53.00</div><div class="a" style="left:509px;top:535px;width:42px;height:12px;background:#f3726b"></div><div class="t" style="left:508px;top:537px;width:42.5px;text-align:right;font-size:10px">53.00</div><div class="a" style="left:553px;top:535px;width:41px;height:12px;background:#f3726b"></div><div class="t" style="left:552px;top:537px;width:41.5px;text-align:right;font-size:10px">53.00</div><div class="a" style="left:596px;top:535px;width:42px;height:12px;background:#f3726b"></div><div class="t" style="left:595px;top:537px;width:42.5px;text-align:right;font-size:10px">53.00</div><div class="a" style="left:640px;top:535px;width:41px;height:12px;background:#f3726b"></div><div class="t" style="left:639px;top:537px;width:41.5px;text-align:right;font-size:10px">53.00</div><div class="a" style="left:683px;top:535px;width:41px;height:12px;background:#f3726b"></div><div class="t" style="left:682px;top:537px;width:41.5px;text-align:right;font-size:10px">53.00</div><div class="a" style="left:726px;top:535px;width:42px;height:12px;background:#f3726b"></div><div class="t" style="left:725px;top:537px;width:42.5px;text-align:right;font-size:10px">53.00</div><div class="a" style="left:770px;top:535px;width:41px;height:12px;background:#f3726b"></div><div class="t" style="left:769px;top:537px;width:41.5px;text-align:right;font-size:10px">53.00</div><div class="a" style="left:813px;top:535px;width:41px;height:12px;background:#f3726b"></div><div class="t" style="left:812px;top:537px;width:41.5px;text-align:right;font-size:10px">53.00</div><div class="a" style="left:856px;top:535px;width:42px;height:12px;background:#f2746b"></div><div class="t" style="left:855px;top:537px;width:42.5px;text-align:right;font-size:10px">52.50</div><div class="a" style="left:900px;top:535px;width:41px;height:12px;background:#ef776c"></div><div class="t" style="left:899px;top:537px;width:41.5px;text-align:right;font-size:10px">51.50</div><div class="a" style="left:943px;top:535px;width:41px;height:12px;background:#ee786c"></div><div class="t" style="left:942px;top:537px;width:41.5px;text-align:right;font-size:10px">51.00</div><div class="a" style="left:986px;top:535px;width:42px;height:12px;background:#e7806d"></div><div class="t" style="left:985px;top:537px;width:42.5px;text-align:right;font-size:10px">48.50</div><div class="a" style="left:1030px;top:535px;width:41px;height:12px;background:#e0896e"></div><div class="t" style="left:1029px;top:537px;width:41.5px;text-align:right;font-size:10px">45.50</div><div class="a" style="left:1073px;top:535px;width:41px;height:12px;background:#d49771"></div><div class="t" style="left:1072px;top:537px;width:41.5px;text-align:right;font-size:10px">41.00</div><div class="a" style="left:1116px;top:535px;width:42px;height:12px;background:#cda072"></div><div class="t" style="left:1115px;top:537px;width:42.5px;text-align:right;font-size:10px">38.00</div><div class="a" style="left:1160px;top:535px;width:41px;height:12px;background:#c2ac74"></div><div class="t" style="left:1159px;top:537px;width:41.5px;text-align:right;font-size:10px">34.00</div><div class="a" style="left:1203px;top:535px;width:41px;height:12px;background:#b9b775"></div><div class="t" style="left:1202px;top:537px;width:41.5px;text-align:right;font-size:10px">30.50</div><div class="a" style="left:1246px;top:535px;width:42px;height:12px;background:#b3bf77"></div><div class="t" style="left:1245px;top:537px;width:42.5px;text-align:right;font-size:10px">28.00</div><div class="a" style="left:1290px;top:535px;width:41px;height:12px;background:#b1c277"></div><div class="t" style="left:1289px;top:537px;width:41.5px;text-align:right;font-size:10px">27.00</div><div class="a" style="left:1333px;top:535px;width:42px;height:12px;background:#aac978"></div><div class="t" style="left:1332px;top:537px;width:42.5px;text-align:right;font-size:10px">24.50</div><div class="a" style="left:1377px;top:535px;width:41px;height:12px;background:#a8cd79"></div><div class="t" style="left:1376px;top:537px;width:41.5px;text-align:right;font-size:10px">23.50</div><div class="a" style="left:379px;top:549px;width:42px;height:12px;background:linear-gradient(90deg,#dcdcdc,#f2f2f2 40%,#f0f0f0);border:1px solid #b4b4b4;border-left-color:#9a9a9a"></div><div class="t" style="left:379px;top:551px;width:39px;text-align:right;font-size:10px">8000</div><div class="a" style="left:423px;top:549px;width:41px;height:12px;background:#f3726b"></div><div class="t" style="left:422px;top:551px;width:41.5px;text-align:right;font-size:10px">53.00</div><div class="a" style="left:466px;top:549px;width:41px;height:12px;background:#f3726b"></div><div class="t" style="left:465px;top:551px;width:41.5px;text-align:right;font-size:10px">53.00</div><div class="a" style="left:509px;top:549px;width:42px;height:12px;background:#f3726b"></div><div class="t" style="left:508px;top:551px;width:42.5px;text-align:right;font-size:10px">53.00</div><div class="a" style="left:553px;top:549px;width:41px;height:12px;background:#f3726b"></div><div class="t" style="left:552px;top:551px;width:41.5px;text-align:right;font-size:10px">53.00</div><div class="a" style="left:596px;top:549px;width:42px;height:12px;background:#f3726b"></div><div class="t" style="left:595px;top:551px;width:42.5px;text-align:right;font-size:10px">53.00</div><div class="a" style="left:640px;top:549px;width:41px;height:12px;background:#f3726b"></div><div class="t" style="left:639px;top:551px;width:41.5px;text-align:right;font-size:10px">53.00</div><div class="a" style="left:683px;top:549px;width:41px;height:12px;background:#f3726b"></div><div class="t" style="left:682px;top:551px;width:41.5px;text-align:right;font-size:10px">53.00</div><div class="a" style="left:726px;top:549px;width:42px;height:12px;background:#f3726b"></div><div class="t" style="left:725px;top:551px;width:42.5px;text-align:right;font-size:10px">53.00</div><div class="a" style="left:770px;top:549px;width:41px;height:12px;background:#f3726b"></div><div class="t" style="left:769px;top:551px;width:41.5px;text-align:right;font-size:10px">53.00</div><div class="a" style="left:813px;top:549px;width:41px;height:12px;background:#f3726b"></div><div class="t" style="left:812px;top:551px;width:41.5px;text-align:right;font-size:10px">53.00</div><div class="a" style="left:856px;top:549px;width:42px;height:12px;background:#f2746b"></div><div class="t" style="left:855px;top:551px;width:42.5px;text-align:right;font-size:10px">52.50</div><div class="a" style="left:900px;top:549px;width:41px;height:12px;background:#f0756b"></div><div class="t" style="left:899px;top:551px;width:41.5px;text-align:right;font-size:10px">52.00</div><div class="a" style="left:943px;top:549px;width:41px;height:12px;background:#ef776c"></div><div class="t" style="left:942px;top:551px;width:41.5px;text-align:right;font-size:10px">51.50</div><div class="a" style="left:986px;top:549px;width:42px;height:12px;background:#ea7d6d"></div><div class="t" style="left:985px;top:551px;width:42.5px;text-align:right;font-size:10px">49.50</div><div class="a" style="left:1030px;top:549px;width:41px;height:12px;background:#e5836e"></div><div class="t" style="left:1029px;top:551px;width:41.5px;text-align:right;font-size:10px">47.50</div><div class="a" style="left:1073px;top:549px;width:41px;height:12px;background:#dc8e6f"></div><div class="t" style="left:1072px;top:551px;width:41.5px;text-align:right;font-size:10px">44.00</div><div class="a" style="left:1116px;top:549px;width:42px;height:12px;background:#d49771"></div><div class="t" style="left:1115px;top:551px;width:42.5px;text-align:right;font-size:10px">41.00</div><div class="a" style="left:1160px;top:549px;width:41px;height:12px;background:#c6a873"></div><div class="t" style="left:1159px;top:551px;width:41.5px;text-align:right;font-size:10px">35.50</div><div class="a" style="left:1203px;top:549px;width:41px;height:12px;background:#bbb675"></div><div class="t" style="left:1202px;top:551px;width:41.5px;text-align:right;font-size:10px">31.00</div><div class="a" style="left:1246px;top:549px;width:42px;height:12px;background:#b4bd76"></div><div class="t" style="left:1245px;top:551px;width:42.5px;text-align:right;font-size:10px">28.50</div><div class="a" style="left:1290px;top:549px;width:41px;height:12px;background:#b1c277"></div><div class="t" style="left:1289px;top:551px;width:41.5px;text-align:right;font-size:10px">27.00</div><div class="a" style="left:1333px;top:549px;width:42px;height:12px;background:#abc878"></div><div class="t" style="left:1332px;top:551px;width:42.5px;text-align:right;font-size:10px">25.00</div><div class="a" style="left:1377px;top:549px;width:41px;height:12px;background:#a8cd79"></div><div class="t" style="left:1376px;top:551px;width:41.5px;text-align:right;font-size:10px">23.50</div><div class="a" style="left:379px;top:563px;width:42px;height:12px;background:linear-gradient(90deg,#dcdcdc,#f2f2f2 40%,#f0f0f0);border:1px solid #b4b4b4;border-left-color:#9a9a9a"></div><div class="t" style="left:379px;top:565px;width:39px;text-align:right;font-size:10px">8301</div><div class="a" style="left:423px;top:563px;width:41px;height:12px;background:#f3726b"></div><div class="t" style="left:422px;top:565px;width:41.5px;text-align:right;font-size:10px">53.00</div><div class="a" style="left:466px;top:563px;width:41px;height:12px;background:#f3726b"></div><div class="t" style="left:465px;top:565px;width:41.5px;text-align:right;font-size:10px">53.00</div><div class="a" style="left:509px;top:563px;width:42px;height:12px;background:#f3726b"></div><div class="t" style="left:508px;top:565px;width:42.5px;text-align:right;font-size:10px">53.00</div><div class="a" style="left:553px;top:563px;width:41px;height:12px;background:#f3726b"></div><div class="t" style="left:552px;top:565px;width:41.5px;text-align:right;font-size:10px">53.00</div><div class="a" style="left:596px;top:563px;width:42px;height:12px;background:#f3726b"></div><div class="t" style="left:595px;top:565px;width:42.5px;text-align:right;font-size:10px">53.00</div><div class="a" style="left:640px;top:563px;width:41px;height:12px;background:#f3726b"></div><div class="t" style="left:639px;top:565px;width:41.5px;text-align:right;font-size:10px">53.00</div><div class="a" style="left:683px;top:563px;width:41px;height:12px;background:#f3726b"></div><div class="t" style="left:682px;top:565px;width:41.5px;text-align:right;font-size:10px">53.00</div><div class="a" style="left:726px;top:563px;width:42px;height:12px;background:#f3726b"></div><div class="t" style="left:725px;top:565px;width:42.5px;text-align:right;font-size:10px">53.00</div><div class="a" style="left:770px;top:563px;width:41px;height:12px;background:#f3726b"></div><div class="t" style="left:769px;top:565px;width:41.5px;text-align:right;font-size:10px">53.00</div><div class="a" style="left:813px;top:563px;width:41px;height:12px;background:#f3726b"></div><div class="t" style="left:812px;top:565px;width:41.5px;text-align:right;font-size:10px">53.00</div><div class="a" style="left:856px;top:563px;width:42px;height:12px;background:#f2746b"></div><div class="t" style="left:855px;top:565px;width:42.5px;text-align:right;font-size:10px">52.50</div><div class="a" style="left:900px;top:563px;width:41px;height:12px;background:#f2746b"></div><div class="t" style="left:899px;top:565px;width:41.5px;text-align:right;font-size:10px">52.50</div><div class="a" style="left:943px;top:563px;width:41px;height:12px;background:#f0756b"></div><div class="t" style="left:942px;top:565px;width:41.5px;text-align:right;font-size:10px">52.00</div><div class="a" style="left:986px;top:563px;width:42px;height:12px;background:#ee786c"></div><div class="t" style="left:985px;top:565px;width:42.5px;text-align:right;font-size:10px">51.00</div><div class="a" style="left:1030px;top:563px;width:41px;height:12px;background:#ea7d6d"></div><div class="t" style="left:1029px;top:565px;width:41.5px;text-align:right;font-size:10px">49.50</div><div class="a" style="left:1073px;top:563px;width:41px;height:12px;background:#e5836e"></div><div class="t" style="left:1072px;top:565px;width:41.5px;text-align:right;font-size:10px">47.50</div><div class="a" style="left:1116px;top:563px;width:42px;height:12px;background:#dc8e6f"></div><div class="t" style="left:1115px;top:565px;width:42.5px;text-align:right;font-size:10px">44.00</div><div class="a" style="left:1160px;top:563px;width:41px;height:12px;background:#caa372"></div><div class="t" style="left:1159px;top:565px;width:41.5px;text-align:right;font-size:10px">37.00</div><div class="a" style="left:1203px;top:563px;width:41px;height:12px;background:#bcb475"></div><div class="t" style="left:1202px;top:565px;width:41.5px;text-align:right;font-size:10px">31.50</div><div class="a" style="left:1246px;top:563px;width:42px;height:12px;background:#b4bd76"></div><div class="t" style="left:1245px;top:565px;width:42.5px;text-align:right;font-size:10px">28.50</div><div class="a" style="left:1290px;top:563px;width:41px;height:12px;background:#afc377"></div><div class="t" style="left:1289px;top:565px;width:41.5px;text-align:right;font-size:10px">26.50</div><div class="a" style="left:1333px;top:563px;width:42px;height:12px;background:#a9cb79"></div><div class="t" style="left:1332px;top:565px;width:42.5px;text-align:right;font-size:10px">24.00</div><div class="a" style="left:1377px;top:563px;width:41px;height:12px;background:#a0d67a"></div><div class="t" style="left:1376px;top:565px;width:41.5px;text-align:right;font-size:10px">20.50</div><div class="a" style="left:379px;top:577px;width:42px;height:12px;background:linear-gradient(90deg,#dcdcdc,#f2f2f2 40%,#f0f0f0);border:1px solid #b4b4b4;border-left-color:#9a9a9a"></div><div class="t" style="left:379px;top:579px;width:39px;text-align:right;font-size:10px">8500</div><div class="a" style="left:423px;top:577px;width:41px;height:12px;background:#f3726b"></div><div class="t" style="left:422px;top:579px;width:41.5px;text-align:right;font-size:10px">53.00</div><div class="a" style="left:466px;top:577px;width:41px;height:12px;background:#f3726b"></div><div class="t" style="left:465px;top:579px;width:41.5px;text-align:right;font-size:10px">53.00</div><div class="a" style="left:509px;top:577px;width:42px;height:12px;background:#f3726b"></div><div class="t" style="left:508px;top:579px;width:42.5px;text-align:right;font-size:10px">53.00</div><div class="a" style="left:553px;top:577px;width:41px;height:12px;background:#f3726b"></div><div class="t" style="left:552px;top:579px;width:41.5px;text-align:right;font-size:10px">53.00</div><div class="a" style="left:596px;top:577px;width:42px;height:12px;background:#f3726b"></div><div class="t" style="left:595px;top:579px;width:42.5px;text-align:right;font-size:10px">53.00</div><div class="a" style="left:640px;top:577px;width:41px;height:12px;background:#f3726b"></div><div class="t" style="left:639px;top:579px;width:41.5px;text-align:right;font-size:10px">53.00</div><div class="a" style="left:683px;top:577px;width:41px;height:12px;background:#f3726b"></div><div class="t" style="left:682px;top:579px;width:41.5px;text-align:right;font-size:10px">53.00</div><div class="a" style="left:726px;top:577px;width:42px;height:12px;background:#f3726b"></div><div class="t" style="left:725px;top:579px;width:42.5px;text-align:right;font-size:10px">53.00</div><div class="a" style="left:770px;top:577px;width:41px;height:12px;background:#f3726b"></div><div class="t" style="left:769px;top:579px;width:41.5px;text-align:right;font-size:10px">53.00</div><div class="a" style="left:813px;top:577px;width:41px;height:12px;background:#f3726b"></div><div class="t" style="left:812px;top:579px;width:41.5px;text-align:right;font-size:10px">53.00</div><div class="a" style="left:856px;top:577px;width:42px;height:12px;background:#f2746b"></div><div class="t" style="left:855px;top:579px;width:42.5px;text-align:right;font-size:10px">52.50</div><div class="a" style="left:900px;top:577px;width:41px;height:12px;background:#f2746b"></div><div class="t" style="left:899px;top:579px;width:41.5px;text-align:right;font-size:10px">52.50</div><div class="a" style="left:943px;top:577px;width:41px;height:12px;background:#f0756b"></div><div class="t" style="left:942px;top:579px;width:41.5px;text-align:right;font-size:10px">52.00</div><div class="a" style="left:986px;top:577px;width:42px;height:12px;background:#ee786c"></div><div class="t" style="left:985px;top:579px;width:42.5px;text-align:right;font-size:10px">51.00</div><div class="a" style="left:1030px;top:577px;width:41px;height:12px;background:#ea7d6d"></div><div class="t" style="left:1029px;top:579px;width:41.5px;text-align:right;font-size:10px">49.50</div><div class="a" style="left:1073px;top:577px;width:41px;height:12px;background:#e5836e"></div><div class="t" style="left:1072px;top:579px;width:41.5px;text-align:right;font-size:10px">47.50</div><div class="a" style="left:1116px;top:577px;width:42px;height:12px;background:#dd8c6f"></div><div class="t" style="left:1115px;top:579px;width:42.5px;text-align:right;font-size:10px">44.50</div><div class="a" style="left:1160px;top:577px;width:41px;height:12px;background:#cba272"></div><div class="t" style="left:1159px;top:579px;width:41.5px;text-align:right;font-size:10px">37.50</div><div class="a" style="left:1203px;top:577px;width:41px;height:12px;background:#bcb475"></div><div class="t" style="left:1202px;top:579px;width:41.5px;text-align:right;font-size:10px">31.50</div><div class="a" style="left:1246px;top:577px;width:42px;height:12px;background:#b4bd76"></div><div class="t" style="left:1245px;top:579px;width:42.5px;text-align:right;font-size:10px">28.50</div><div class="a" style="left:1290px;top:577px;width:41px;height:12px;background:#afc377"></div><div class="t" style="left:1289px;top:579px;width:41.5px;text-align:right;font-size:10px">26.50</div><div class="a" style="left:1333px;top:577px;width:42px;height:12px;background:#a9cb79"></div><div class="t" style="left:1332px;top:579px;width:42.5px;text-align:right;font-size:10px">24.00</div><div class="a" style="left:1377px;top:577px;width:41px;height:12px;background:#9fd77a"></div><div class="t" style="left:1376px;top:579px;width:41.5px;text-align:right;font-size:10px">20.00</div><div class="a" style="left:379px;top:591px;width:42px;height:12px;background:linear-gradient(90deg,#dcdcdc,#f2f2f2 40%,#f0f0f0);border:1px solid #b4b4b4;border-left-color:#9a9a9a"></div><div class="t" style="left:379px;top:593px;width:39px;text-align:right;font-size:10px">8801</div><div class="a" style="left:423px;top:591px;width:41px;height:12px;background:#f4716b"></div><div class="t" style="left:422px;top:593px;width:41.5px;text-align:right;font-size:10px">53.50</div><div class="a" style="left:466px;top:591px;width:41px;height:12px;background:#f4716b"></div><div class="t" style="left:465px;top:593px;width:41.5px;text-align:right;font-size:10px">53.50</div><div class="a" style="left:509px;top:591px;width:42px;height:12px;background:#f4716b"></div><div class="t" style="left:508px;top:593px;width:42.5px;text-align:right;font-size:10px">53.50</div><div class="a" style="left:553px;top:591px;width:41px;height:12px;background:#f4716b"></div><div class="t" style="left:552px;top:593px;width:41.5px;text-align:right;font-size:10px">53.50</div><div class="a" style="left:596px;top:591px;width:42px;height:12px;background:#f4716b"></div><div class="t" style="left:595px;top:593px;width:42.5px;text-align:right;font-size:10px">53.50</div><div class="a" style="left:640px;top:591px;width:41px;height:12px;background:#f4716b"></div><div class="t" style="left:639px;top:593px;width:41.5px;text-align:right;font-size:10px">53.50</div><div class="a" style="left:683px;top:591px;width:41px;height:12px;background:#f4716b"></div><div class="t" style="left:682px;top:593px;width:41.5px;text-align:right;font-size:10px">53.50</div><div class="a" style="left:726px;top:591px;width:42px;height:12px;background:#f4716b"></div><div class="t" style="left:725px;top:593px;width:42.5px;text-align:right;font-size:10px">53.50</div><div class="a" style="left:770px;top:591px;width:41px;height:12px;background:#f4716b"></div><div class="t" style="left:769px;top:593px;width:41.5px;text-align:right;font-size:10px">53.50</div><div class="a" style="left:813px;top:591px;width:41px;height:12px;background:#f4716b"></div><div class="t" style="left:812px;top:593px;width:41.5px;text-align:right;font-size:10px">53.50</div><div class="a" style="left:856px;top:591px;width:42px;height:12px;background:#f3726b"></div><div class="t" style="left:855px;top:593px;width:42.5px;text-align:right;font-size:10px">53.00</div><div class="a" style="left:900px;top:591px;width:41px;height:12px;background:#f3726b"></div><div class="t" style="left:899px;top:593px;width:41.5px;text-align:right;font-size:10px">53.00</div><div class="a" style="left:943px;top:591px;width:41px;height:12px;background:#f3726b"></div><div class="t" style="left:942px;top:593px;width:41.5px;text-align:right;font-size:10px">53.00</div><div class="a" style="left:986px;top:591px;width:42px;height:12px;background:#f0756b"></div><div class="t" style="left:985px;top:593px;width:42.5px;text-align:right;font-size:10px">52.00</div><div class="a" style="left:1030px;top:591px;width:41px;height:12px;background:#ed7a6c"></div><div class="t" style="left:1029px;top:593px;width:41.5px;text-align:right;font-size:10px">50.50</div><div class="a" style="left:1073px;top:591px;width:41px;height:12px;background:#e97e6d"></div><div class="t" style="left:1072px;top:593px;width:41.5px;text-align:right;font-size:10px">49.00</div><div class="a" style="left:1116px;top:591px;width:42px;height:12px;background:#e1886e"></div><div class="t" style="left:1115px;top:593px;width:42.5px;text-align:right;font-size:10px">46.00</div><div class="a" style="left:1160px;top:591px;width:41px;height:12px;background:#cf9d71"></div><div class="t" style="left:1159px;top:593px;width:41.5px;text-align:right;font-size:10px">39.00</div><div class="a" style="left:1203px;top:591px;width:41px;height:12px;background:#bdb275"></div><div class="t" style="left:1202px;top:593px;width:41.5px;text-align:right;font-size:10px">32.00</div><div class="a" style="left:1246px;top:591px;width:42px;height:12px;background:#b6bc76"></div><div class="t" style="left:1245px;top:593px;width:42.5px;text-align:right;font-size:10px">29.00</div><div class="a" style="left:1290px;top:591px;width:41px;height:12px;background:#aec578"></div><div class="t" style="left:1289px;top:593px;width:41.5px;text-align:right;font-size:10px">26.00</div><div class="a" style="left:1333px;top:591px;width:42px;height:12px;background:#a6ce79"></div><div class="t" style="left:1332px;top:593px;width:42.5px;text-align:right;font-size:10px">23.00</div><div class="a" style="left:1377px;top:591px;width:41px;height:12px;background:#9fd77a"></div><div class="t" style="left:1376px;top:593px;width:41.5px;text-align:right;font-size:10px">20.00</div><div class="a" style="left:379px;top:605px;width:42px;height:12px;background:linear-gradient(90deg,#dcdcdc,#f2f2f2 40%,#f0f0f0);border:1px solid #b4b4b4;border-left-color:#9a9a9a"></div><div class="t" style="left:379px;top:607px;width:39px;text-align:right;font-size:10px">9199</div><div class="a" style="left:423px;top:605px;width:41px;height:12px;background:#f4716b"></div><div class="t" style="left:422px;top:607px;width:41.5px;text-align:right;font-size:10px">53.50</div><div class="a" style="left:466px;top:605px;width:41px;height:12px;background:#f4716b"></div><div class="t" style="left:465px;top:607px;width:41.5px;text-align:right;font-size:10px">53.50</div><div class="a" style="left:509px;top:605px;width:42px;height:12px;background:#f4716b"></div><div class="t" style="left:508px;top:607px;width:42.5px;text-align:right;font-size:10px">53.50</div><div class="a" style="left:553px;top:605px;width:41px;height:12px;background:#f4716b"></div><div class="t" style="left:552px;top:607px;width:41.5px;text-align:right;font-size:10px">53.50</div><div class="a" style="left:596px;top:605px;width:42px;height:12px;background:#f4716b"></div><div class="t" style="left:595px;top:607px;width:42.5px;text-align:right;font-size:10px">53.50</div><div class="a" style="left:640px;top:605px;width:41px;height:12px;background:#f4716b"></div><div class="t" style="left:639px;top:607px;width:41.5px;text-align:right;font-size:10px">53.50</div><div class="a" style="left:683px;top:605px;width:41px;height:12px;background:#f4716b"></div><div class="t" style="left:682px;top:607px;width:41.5px;text-align:right;font-size:10px">53.50</div><div class="a" style="left:726px;top:605px;width:42px;height:12px;background:#f4716b"></div><div class="t" style="left:725px;top:607px;width:42.5px;text-align:right;font-size:10px">53.50</div><div class="a" style="left:770px;top:605px;width:41px;height:12px;background:#f4716b"></div><div class="t" style="left:769px;top:607px;width:41.5px;text-align:right;font-size:10px">53.50</div><div class="a" style="left:813px;top:605px;width:41px;height:12px;background:#f4716b"></div><div class="t" style="left:812px;top:607px;width:41.5px;text-align:right;font-size:10px">53.50</div><div class="a" style="left:856px;top:605px;width:42px;height:12px;background:#f4716b"></div><div class="t" style="left:855px;top:607px;width:42.5px;text-align:right;font-size:10px">53.50</div><div class="a" style="left:900px;top:605px;width:41px;height:12px;background:#f3726b"></div><div class="t" style="left:899px;top:607px;width:41.5px;text-align:right;font-size:10px">53.00</div><div class="a" style="left:943px;top:605px;width:41px;height:12px;background:#f3726b"></div><div class="t" style="left:942px;top:607px;width:41.5px;text-align:right;font-size:10px">53.00</div><div class="a" style="left:986px;top:605px;width:42px;height:12px;background:#f2746b"></div><div class="t" style="left:985px;top:607px;width:42.5px;text-align:right;font-size:10px">52.50</div><div class="a" style="left:1030px;top:605px;width:41px;height:12px;background:#f0756b"></div><div class="t" style="left:1029px;top:607px;width:41.5px;text-align:right;font-size:10px">52.00</div><div class="a" style="left:1073px;top:605px;width:41px;height:12px;background:#ee786c"></div><div class="t" style="left:1072px;top:607px;width:41.5px;text-align:right;font-size:10px">51.00</div><div class="a" style="left:1116px;top:605px;width:42px;height:12px;background:#e6816d"></div><div class="t" style="left:1115px;top:607px;width:42.5px;text-align:right;font-size:10px">48.00</div><div class="a" style="left:1160px;top:605px;width:41px;height:12px;background:#d29a71"></div><div class="t" style="left:1159px;top:607px;width:41.5px;text-align:right;font-size:10px">40.00</div><div class="a" style="left:1203px;top:605px;width:41px;height:12px;background:#c0af74"></div><div class="t" style="left:1202px;top:607px;width:41.5px;text-align:right;font-size:10px">33.00</div><div class="a" style="left:1246px;top:605px;width:42px;height:12px;background:#b6bc76"></div><div class="t" style="left:1245px;top:607px;width:42.5px;text-align:right;font-size:10px">29.00</div><div class="a" style="left:1290px;top:605px;width:41px;height:12px;background:#b1c277"></div><div class="t" style="left:1289px;top:607px;width:41.5px;text-align:right;font-size:10px">27.00</div><div class="a" style="left:1333px;top:605px;width:42px;height:12px;background:#aac978"></div><div class="t" style="left:1332px;top:607px;width:42.5px;text-align:right;font-size:10px">24.50</div><div class="a" style="left:1377px;top:605px;width:41px;height:12px;background:#a5d079"></div><div class="t" style="left:1376px;top:607px;width:41.5px;text-align:right;font-size:10px">22.50</div><div class="a" style="left:379px;top:619px;width:42px;height:12px;background:linear-gradient(90deg,#dcdcdc,#f2f2f2 40%,#f0f0f0);border:1px solid #b4b4b4;border-left-color:#9a9a9a"></div><div class="t" style="left:379px;top:621px;width:39px;text-align:right;font-size:10px">9602</div><div class="a" style="left:423px;top:619px;width:41px;height:12px;background:#f86c6a"></div><div class="t" style="left:422px;top:621px;width:41.5px;text-align:right;font-size:10px">55.00</div><div class="a" style="left:466px;top:619px;width:41px;height:12px;background:#f86c6a"></div><div class="t" style="left:465px;top:621px;width:41.5px;text-align:right;font-size:10px">55.00</div><div class="a" style="left:509px;top:619px;width:42px;height:12px;background:#f86c6a"></div><div class="t" style="left:508px;top:621px;width:42.5px;text-align:right;font-size:10px">55.00</div><div class="a" style="left:553px;top:619px;width:41px;height:12px;background:#f86c6a"></div><div class="t" style="left:552px;top:621px;width:41.5px;text-align:right;font-size:10px">55.00</div><div class="a" style="left:596px;top:619px;width:42px;height:12px;background:#f86c6a"></div><div class="t" style="left:595px;top:621px;width:42.5px;text-align:right;font-size:10px">55.00</div><div class="a" style="left:640px;top:619px;width:41px;height:12px;background:#f86c6a"></div><div class="t" style="left:639px;top:621px;width:41.5px;text-align:right;font-size:10px">55.00</div><div class="a" style="left:683px;top:619px;width:41px;height:12px;background:#f86c6a"></div><div class="t" style="left:682px;top:621px;width:41.5px;text-align:right;font-size:10px">55.00</div><div class="a" style="left:726px;top:619px;width:42px;height:12px;background:#f86c6a"></div><div class="t" style="left:725px;top:621px;width:42.5px;text-align:right;font-size:10px">55.00</div><div class="a" style="left:770px;top:619px;width:41px;height:12px;background:#f86c6a"></div><div class="t" style="left:769px;top:621px;width:41.5px;text-align:right;font-size:10px">55.00</div><div class="a" style="left:813px;top:619px;width:41px;height:12px;background:#f86c6a"></div><div class="t" style="left:812px;top:621px;width:41.5px;text-align:right;font-size:10px">55.00</div><div class="a" style="left:856px;top:619px;width:42px;height:12px;background:#f86c6a"></div><div class="t" style="left:855px;top:621px;width:42.5px;text-align:right;font-size:10px">55.00</div><div class="a" style="left:900px;top:619px;width:41px;height:12px;background:#f86c6a"></div><div class="t" style="left:899px;top:621px;width:41.5px;text-align:right;font-size:10px">55.00</div><div class="a" style="left:943px;top:619px;width:41px;height:12px;background:#f86c6a"></div><div class="t" style="left:942px;top:621px;width:41.5px;text-align:right;font-size:10px">55.00</div><div class="a" style="left:986px;top:619px;width:42px;height:12px;background:#f86c6a"></div><div class="t" style="left:985px;top:621px;width:42.5px;text-align:right;font-size:10px">55.00</div><div class="a" style="left:1030px;top:619px;width:41px;height:12px;background:#f3726b"></div><div class="t" style="left:1029px;top:621px;width:41.5px;text-align:right;font-size:10px">53.00</div><div class="a" style="left:1073px;top:619px;width:41px;height:12px;background:#f3726b"></div><div class="t" style="left:1072px;top:621px;width:41.5px;text-align:right;font-size:10px">53.00</div><div class="a" style="left:1116px;top:619px;width:42px;height:12px;background:#eb7b6c"></div><div class="t" style="left:1115px;top:621px;width:42.5px;text-align:right;font-size:10px">50.00</div><div class="a" style="left:1160px;top:619px;width:41px;height:12px;background:#dc8e6f"></div><div class="t" style="left:1159px;top:621px;width:41.5px;text-align:right;font-size:10px">44.00</div><div class="a" style="left:1203px;top:619px;width:41px;height:12px;background:#c4ab74"></div><div class="t" style="left:1202px;top:621px;width:41.5px;text-align:right;font-size:10px">34.50</div><div class="a" style="left:1246px;top:619px;width:42px;height:12px;background:#b7ba76"></div><div class="t" style="left:1245px;top:621px;width:42.5px;text-align:right;font-size:10px">29.50</div><div class="a" style="left:1290px;top:619px;width:41px;height:12px;background:#b3bf77"></div><div class="t" style="left:1289px;top:621px;width:41.5px;text-align:right;font-size:10px">28.00</div><div class="a" style="left:1333px;top:619px;width:42px;height:12px;background:#aec578"></div><div class="t" style="left:1332px;top:621px;width:42.5px;text-align:right;font-size:10px">26.00</div><div class="a" style="left:1377px;top:619px;width:41px;height:12px;background:#a9cb79"></div><div class="t" style="left:1376px;top:621px;width:41.5px;text-align:right;font-size:10px">24.00</div><div class="a" style="left:379px;top:633px;width:42px;height:12px;background:linear-gradient(90deg,#dcdcdc,#f2f2f2 40%,#f0f0f0);border:1px solid #b4b4b4;border-left-color:#9a9a9a"></div><div class="t" style="left:379px;top:635px;width:39px;text-align:right;font-size:10px">10000</div><div class="a" style="left:423px;top:633px;width:41px;height:12px;background:#f86c6a"></div><div class="t" style="left:422px;top:635px;width:41.5px;text-align:right;font-size:10px">55.00</div><div class="a" style="left:466px;top:633px;width:41px;height:12px;background:#f86c6a"></div><div class="t" style="left:465px;top:635px;width:41.5px;text-align:right;font-size:10px">55.00</div><div class="a" style="left:509px;top:633px;width:42px;height:12px;background:#f86c6a"></div><div class="t" style="left:508px;top:635px;width:42.5px;text-align:right;font-size:10px">55.00</div><div class="a" style="left:553px;top:633px;width:41px;height:12px;background:#f86c6a"></div><div class="t" style="left:552px;top:635px;width:41.5px;text-align:right;font-size:10px">55.00</div><div class="a" style="left:596px;top:633px;width:42px;height:12px;background:#f86c6a"></div><div class="t" style="left:595px;top:635px;width:42.5px;text-align:right;font-size:10px">55.00</div><div class="a" style="left:640px;top:633px;width:41px;height:12px;background:#f86c6a"></div><div class="t" style="left:639px;top:635px;width:41.5px;text-align:right;font-size:10px">55.00</div><div class="a" style="left:683px;top:633px;width:41px;height:12px;background:#f86c6a"></div><div class="t" style="left:682px;top:635px;width:41.5px;text-align:right;font-size:10px">55.00</div><div class="a" style="left:726px;top:633px;width:42px;height:12px;background:#f86c6a"></div><div class="t" style="left:725px;top:635px;width:42.5px;text-align:right;font-size:10px">55.00</div><div class="a" style="left:770px;top:633px;width:41px;height:12px;background:#f86c6a"></div><div class="t" style="left:769px;top:635px;width:41.5px;text-align:right;font-size:10px">55.00</div><div class="a" style="left:813px;top:633px;width:41px;height:12px;background:#f86c6a"></div><div class="t" style="left:812px;top:635px;width:41.5px;text-align:right;font-size:10px">55.00</div><div class="a" style="left:856px;top:633px;width:42px;height:12px;background:#f86c6a"></div><div class="t" style="left:855px;top:635px;width:42.5px;text-align:right;font-size:10px">55.00</div><div class="a" style="left:900px;top:633px;width:41px;height:12px;background:#f86c6a"></div><div class="t" style="left:899px;top:635px;width:41.5px;text-align:right;font-size:10px">55.00</div><div class="a" style="left:943px;top:633px;width:41px;height:12px;background:#f86c6a"></div><div class="t" style="left:942px;top:635px;width:41.5px;text-align:right;font-size:10px">55.00</div><div class="a" style="left:986px;top:633px;width:42px;height:12px;background:#f86c6a"></div><div class="t" style="left:985px;top:635px;width:42.5px;text-align:right;font-size:10px">55.00</div><div class="a" style="left:1030px;top:633px;width:41px;height:12px;background:#f56f6a"></div><div class="t" style="left:1029px;top:635px;width:41.5px;text-align:right;font-size:10px">54.00</div><div class="a" style="left:1073px;top:633px;width:41px;height:12px;background:#f86c6a"></div><div class="t" style="left:1072px;top:635px;width:41.5px;text-align:right;font-size:10px">55.00</div><div class="a" style="left:1116px;top:633px;width:42px;height:12px;background:#f0756b"></div><div class="t" style="left:1115px;top:635px;width:42.5px;text-align:right;font-size:10px">52.00</div><div class="a" style="left:1160px;top:633px;width:41px;height:12px;background:#e4856e"></div><div class="t" style="left:1159px;top:635px;width:41.5px;text-align:right;font-size:10px">47.00</div><div class="a" style="left:1203px;top:633px;width:41px;height:12px;background:#c6a873"></div><div class="t" style="left:1202px;top:635px;width:41.5px;text-align:right;font-size:10px">35.50</div><div class="a" style="left:1246px;top:633px;width:42px;height:12px;background:#b8b976"></div><div class="t" style="left:1245px;top:635px;width:42.5px;text-align:right;font-size:10px">30.00</div><div class="a" style="left:1290px;top:633px;width:41px;height:12px;background:#b4bd76"></div><div class="t" style="left:1289px;top:635px;width:41.5px;text-align:right;font-size:10px">28.50</div><div class="a" style="left:1333px;top:633px;width:42px;height:12px;background:#b1c277"></div><div class="t" style="left:1332px;top:635px;width:42.5px;text-align:right;font-size:10px">27.00</div><div class="a" style="left:1377px;top:633px;width:41px;height:12px;background:#afc377"></div><div class="t" style="left:1376px;top:635px;width:41.5px;text-align:right;font-size:10px">26.50</div><div class="a" style="left:379px;top:647px;width:42px;height:12px;background:linear-gradient(90deg,#dcdcdc,#f2f2f2 40%,#f0f0f0);border:1px solid #b4b4b4;border-left-color:#9a9a9a"></div><div class="t" style="left:379px;top:649px;width:39px;text-align:right;font-size:10px">10398</div><div class="a" style="left:423px;top:647px;width:41px;height:12px;background:#f86c6a"></div><div class="t" style="left:422px;top:649px;width:41.5px;text-align:right;font-size:10px">55.00</div><div class="a" style="left:466px;top:647px;width:41px;height:12px;background:#f86c6a"></div><div class="t" style="left:465px;top:649px;width:41.5px;text-align:right;font-size:10px">55.00</div><div class="a" style="left:509px;top:647px;width:42px;height:12px;background:#f86c6a"></div><div class="t" style="left:508px;top:649px;width:42.5px;text-align:right;font-size:10px">55.00</div><div class="a" style="left:553px;top:647px;width:41px;height:12px;background:#f86c6a"></div><div class="t" style="left:552px;top:649px;width:41.5px;text-align:right;font-size:10px">55.00</div><div class="a" style="left:596px;top:647px;width:42px;height:12px;background:#f86c6a"></div><div class="t" style="left:595px;top:649px;width:42.5px;text-align:right;font-size:10px">55.00</div><div class="a" style="left:640px;top:647px;width:41px;height:12px;background:#f86c6a"></div><div class="t" style="left:639px;top:649px;width:41.5px;text-align:right;font-size:10px">55.00</div><div class="a" style="left:683px;top:647px;width:41px;height:12px;background:#f86c6a"></div><div class="t" style="left:682px;top:649px;width:41.5px;text-align:right;font-size:10px">55.00</div><div class="a" style="left:726px;top:647px;width:42px;height:12px;background:#f86c6a"></div><div class="t" style="left:725px;top:649px;width:42.5px;text-align:right;font-size:10px">55.00</div><div class="a" style="left:770px;top:647px;width:41px;height:12px;background:#f86c6a"></div><div class="t" style="left:769px;top:649px;width:41.5px;text-align:right;font-size:10px">55.00</div><div class="a" style="left:813px;top:647px;width:41px;height:12px;background:#f86c6a"></div><div class="t" style="left:812px;top:649px;width:41.5px;text-align:right;font-size:10px">55.00</div><div class="a" style="left:856px;top:647px;width:42px;height:12px;background:#f86c6a"></div><div class="t" style="left:855px;top:649px;width:42.5px;text-align:right;font-size:10px">55.00</div><div class="a" style="left:900px;top:647px;width:41px;height:12px;background:#f86c6a"></div><div class="t" style="left:899px;top:649px;width:41.5px;text-align:right;font-size:10px">55.00</div><div class="a" style="left:943px;top:647px;width:41px;height:12px;background:#f86c6a"></div><div class="t" style="left:942px;top:649px;width:41.5px;text-align:right;font-size:10px">55.00</div><div class="a" style="left:986px;top:647px;width:42px;height:12px;background:#f86c6a"></div><div class="t" style="left:985px;top:649px;width:42.5px;text-align:right;font-size:10px">55.00</div><div class="a" style="left:1030px;top:647px;width:41px;height:12px;background:#f56f6a"></div><div class="t" style="left:1029px;top:649px;width:41.5px;text-align:right;font-size:10px">54.00</div><div class="a" style="left:1073px;top:647px;width:41px;height:12px;background:#f86c6a"></div><div class="t" style="left:1072px;top:649px;width:41.5px;text-align:right;font-size:10px">55.00</div><div class="a" style="left:1116px;top:647px;width:42px;height:12px;background:#f0756b"></div><div class="t" style="left:1115px;top:649px;width:42.5px;text-align:right;font-size:10px">52.00</div><div class="a" style="left:1160px;top:647px;width:41px;height:12px;background:#e4856e"></div><div class="t" style="left:1159px;top:649px;width:41.5px;text-align:right;font-size:10px">47.00</div><div class="a" style="left:1203px;top:647px;width:41px;height:12px;background:#c6a873"></div><div class="t" style="left:1202px;top:649px;width:41.5px;text-align:right;font-size:10px">35.50</div><div class="a" style="left:1246px;top:647px;width:42px;height:12px;background:#b8b976"></div><div class="t" style="left:1245px;top:649px;width:42.5px;text-align:right;font-size:10px">30.00</div><div class="a" style="left:1290px;top:647px;width:41px;height:12px;background:#b4bd76"></div><div class="t" style="left:1289px;top:649px;width:41.5px;text-align:right;font-size:10px">28.50</div><div class="a" style="left:1333px;top:647px;width:42px;height:12px;background:#b1c277"></div><div class="t" style="left:1332px;top:649px;width:42.5px;text-align:right;font-size:10px">27.00</div><div class="a" style="left:1377px;top:647px;width:41px;height:12px;background:#afc377"></div><div class="t" style="left:1376px;top:649px;width:41.5px;text-align:right;font-size:10px">26.50</div><div class="a" style="left:377px;top:690px;width:1068px;height:23px;background:#f0f0f0;border-top:1px solid #fff"></div><div class="a" style="left:403px;top:262px;width:696px;height:469px;border-radius:8px;box-shadow:0 10px 28px rgba(0,0,0,.5),0 0 3px rgba(0,0,0,.3)"></div><div class="a" style="left:403px;top:262px;width:696px;height:469px;border-radius:8px;overflow:hidden;background:#fff;border:1px solid #9aa3aa"><div class="a" style="left:0;top:0;width:100%;height:27px;background:#e9f2f6"></div><svg class="a" style="left:8px;top:8px" width="14" height="11" viewBox="0 0 14 11"><rect x="0" y="2" width="14" height="7" fill="#000"/><rect x="0.5" y="0" width="1.4" height="11" fill="#000"/><rect x="3.2" y="0" width="1.4" height="11" fill="#000"/><rect x="5.9" y="0" width="1.4" height="11" fill="#000"/><rect x="8.6" y="0" width="1.4" height="11" fill="#000"/><rect x="11.3" y="0" width="1.4" height="11" fill="#000"/></svg><div class="t" style="left:27px;top:7px;font-size:11.7px;color:#1a1a1a">Ignition - Map 2</div><div class="a" style="left:584px;top:12px;width:10px;height:1px;background:#222"></div><div class="a" style="left:626px;top:7px;width:10px;height:10px;border:1px solid #222;border-radius:1px"></div><svg class="a" style="left:668px;top:6px" width="12" height="12"><path d="M1 1L11 11M11 1L1 11" stroke="#222" stroke-width="1.1"/></svg><div class="t" style="left:7px;top:31px;font-size:11px;color:#1a1a1a">Graph</div><div class="t" style="left:50px;top:31px;font-size:11px;color:#1a1a1a">View</div><div class="a" style="left:0;top:43px;width:100%;height:26px;background:#f0f0f0"></div><div class="a" style="left:2px;top:47px;width:2px;height:20px;border-left:1px solid #c8c8c8;border-right:1px solid #fff"></div><svg class="a" style="left:12px;top:51px" width="13" height="13"><path d="M2 2L11 11M11 2L2 11" stroke="#e00" stroke-width="2"/></svg><div class="a" style="left:37px;top:47px;width:2px;height:20px;border-left:1px solid #c8c8c8;border-right:1px solid #fff"></div><div class="a" style="left:43px;top:47px;width:20px;height:20px;background:#cce4f7;border:1px solid #99c9ef;border-radius:2px"></div><div class="a" style="left:87px;top:47px;width:20px;height:20px;background:#cce4f7;border:1px solid #99c9ef;border-radius:2px"></div><div class="a" style="left:130px;top:47px;width:20px;height:20px;background:#cce4f7;border:1px solid #99c9ef;border-radius:2px"></div><svg class="a" style="left:45px;top:49px" width="16" height="16"><path d="M8 0.5L15.5 8L8 15.5L0.5 8Z" fill="#000"/><circle cx="8" cy="8" r="3.6" fill="#fff"/><path d="M8 4.2V11.8M4.2 8H11.8" stroke="#e00" stroke-width="1.2"/><circle cx="8" cy="8" r="3.4" fill="none" stroke="#e00" stroke-width=".8"/></svg><svg class="a" style="left:66px;top:49px" width="17" height="16"><path d="M1 14L5 7L8 12L12 5L15 9" stroke="#e00" stroke-width="1.1" fill="none"/><path d="M15 1V14" stroke="#e00" stroke-width="1"/><g fill="#fff" stroke="#00d" stroke-width="1.1"><circle cx="3.5" cy="6" r="1.5"/><circle cx="6" cy="12" r="1.5"/><circle cx="10" cy="6" r="1.5"/><circle cx="13.5" cy="3" r="1.5"/><circle cx="14" cy="11" r="1.5"/></g></svg><svg class="a" style="left:89px;top:49px" width="17" height="16"><path d="M2 2V15H16" stroke="#000" stroke-width="1.2" stroke-dasharray="1.2 1.2" fill="none"/><path d="M2 12L6 9L9 11L13 7L16 9" stroke="#e00" stroke-width="1.4" fill="none"/><path d="M2 9L5 5L8 8L11 3L15 8" stroke="#00d" stroke-width="1.3" fill="none"/></svg><svg class="a" style="left:110px;top:50px" width="17" height="14"><path d="M1 13H12L15 9H4Z M4 9L7 5H16L15 9 M7 5L9 2H16V5" stroke="#000" stroke-width="1.1" fill="#fff"/><path d="M5 11H12M8 7H14M10 3.5H15" stroke="#555" stroke-width=".8"/></svg><svg class="a" style="left:132px;top:50px" width="17" height="14"><path d="M1 2.5H11" stroke="#e00" stroke-width="1.5"/><path d="M1 5H11" stroke="#aaa" stroke-width="1.5"/><path d="M1 7.5H11" stroke="#e0e000" stroke-width="1.5"/><path d="M1 10H11" stroke="#0c0" stroke-width="1.5"/><path d="M1 12.5H11" stroke="#00e" stroke-width="1.5"/><path d="M15 1V14M15 2L11.5 7.5L15 13" stroke="#000" stroke-width="1.3" fill="none"/></svg><div class="a" style="left:0;top:447px;width:100%;height:22px;background:#f0f0f0;border-top:1px solid #dadada"></div><div class="a" style="left:122px;top:449px;width:1px;height:17px;background:#d0d0d0"></div><div class="a" style="left:245px;top:449px;width:1px;height:17px;background:#d0d0d0"></div><div class="a" style="left:367px;top:449px;width:1px;height:17px;background:#d0d0d0"></div></div><svg class="a" style="left:0;top:0" width="1445" height="787" viewBox="0 0 1445 787"><text x="750" y="341" text-anchor="middle" font-family="Liberation Sans" font-size="9" fill="#d2d2d2">TunerPro - Version 5.00</text><text x="751" y="360" text-anchor="middle" font-family="Liberation Sans" font-size="13.8" font-weight="bold" fill="#000">Ignition - Map 2</text><path d="M598.0,573.1L739.3,494.1" stroke="#888" stroke-width="1" stroke-dasharray="3 3" fill="none"/><path d="M904.3,562.1L739.3,494.1" stroke="#888" stroke-width="1" stroke-dasharray="3 3" fill="none"/><path d="M598.0,525.2L739.3,446.2" stroke="#888" stroke-width="1" stroke-dasharray="3 3" fill="none"/><path d="M904.3,514.2L739.3,446.2" stroke="#888" stroke-width="1" stroke-dasharray="3 3" fill="none"/><path d="M598.0,477.4L739.3,398.4" stroke="#888" stroke-width="1" stroke-dasharray="3 3" fill="none"/><path d="M904.3,466.4L739.3,398.4" stroke="#888" stroke-width="1" stroke-dasharray="3 3" fill="none"/><path d="M604.9,623.8L746.2,544.8" stroke="#808080" stroke-width=".7" stroke-dasharray="2 3" fill="none"/><path d="M611.8,626.7L753.0,547.7" stroke="#808080" stroke-width=".7" stroke-dasharray="2 3" fill="none"/><path d="M618.6,629.5L759.9,550.5" stroke="#808080" stroke-width=".7" stroke-dasharray="2 3" fill="none"/><path d="M625.5,632.3L766.8,553.3" stroke="#808080" stroke-width=".7" stroke-dasharray="2 3" fill="none"/><path d="M632.4,635.2L773.7,556.2" stroke="#808080" stroke-width=".7" stroke-dasharray="2 3" fill="none"/><path d="M639.2,638.0L780.5,559.0" stroke="#808080" stroke-width=".7" stroke-dasharray="2 3" fill="none"/><path d="M646.1,640.8L787.4,561.8" stroke="#808080" stroke-width=".7" stroke-dasharray="2 3" fill="none"/><path d="M653.0,643.7L794.3,564.7" stroke="#808080" stroke-width=".7" stroke-dasharray="2 3" fill="none"/><path d="M659.9,646.5L801.2,567.5" stroke="#808080" stroke-width=".7" stroke-dasharray="2 3" fill="none"/><path d="M666.8,649.3L808.0,570.3" stroke="#808080" stroke-width=".7" stroke-dasharray="2 3" fill="none"/><path d="M673.6,652.2L814.9,573.2" stroke="#808080" stroke-width=".7" stroke-dasharray="2 3" fill="none"/><path d="M680.5,655.0L821.8,576.0" stroke="#808080" stroke-width=".7" stroke-dasharray="2 3" fill="none"/><path d="M687.4,657.8L828.7,578.8" stroke="#808080" stroke-width=".7" stroke-dasharray="2 3" fill="none"/><path d="M694.2,660.7L835.5,581.7" stroke="#808080" stroke-width=".7" stroke-dasharray="2 3" fill="none"/><path d="M701.1,663.5L842.4,584.5" stroke="#808080" stroke-width=".7" stroke-dasharray="2 3" fill="none"/><path d="M708.0,666.3L849.3,587.3" stroke="#808080" stroke-width=".7" stroke-dasharray="2 3" fill="none"/><path d="M714.9,669.2L856.2,590.2" stroke="#808080" stroke-width=".7" stroke-dasharray="2 3" fill="none"/><path d="M721.8,672.0L863.0,593.0" stroke="#808080" stroke-width=".7" stroke-dasharray="2 3" fill="none"/><path d="M728.6,674.8L869.9,595.8" stroke="#808080" stroke-width=".7" stroke-dasharray="2 3" fill="none"/><path d="M735.5,677.7L876.8,598.7" stroke="#808080" stroke-width=".7" stroke-dasharray="2 3" fill="none"/><path d="M742.4,680.5L883.7,601.5" stroke="#808080" stroke-width=".7" stroke-dasharray="2 3" fill="none"/><path d="M749.2,683.3L890.5,604.3" stroke="#808080" stroke-width=".7" stroke-dasharray="2 3" fill="none"/><path d="M756.1,686.2L897.4,607.2" stroke="#808080" stroke-width=".7" stroke-dasharray="2 3" fill="none"/><path d="M602.7,618.4L767.7,686.4" stroke="#808080" stroke-width=".7" stroke-dasharray="2 3" fill="none"/><path d="M607.4,615.7L772.4,683.7" stroke="#808080" stroke-width=".7" stroke-dasharray="2 3" fill="none"/><path d="M612.1,613.1L777.1,681.1" stroke="#808080" stroke-width=".7" stroke-dasharray="2 3" fill="none"/><path d="M616.8,610.5L781.8,678.5" stroke="#808080" stroke-width=".7" stroke-dasharray="2 3" fill="none"/><path d="M621.5,607.8L786.5,675.8" stroke="#808080" stroke-width=".7" stroke-dasharray="2 3" fill="none"/><path d="M626.3,605.2L791.3,673.2" stroke="#808080" stroke-width=".7" stroke-dasharray="2 3" fill="none"/><path d="M631.0,602.6L796.0,670.6" stroke="#808080" stroke-width=".7" stroke-dasharray="2 3" fill="none"/><path d="M635.7,599.9L800.7,667.9" stroke="#808080" stroke-width=".7" stroke-dasharray="2 3" fill="none"/><path d="M640.4,597.3L805.4,665.3" stroke="#808080" stroke-width=".7" stroke-dasharray="2 3" fill="none"/><path d="M645.1,594.7L810.1,662.7" stroke="#808080" stroke-width=".7" stroke-dasharray="2 3" fill="none"/><path d="M649.8,592.0L814.8,660.0" stroke="#808080" stroke-width=".7" stroke-dasharray="2 3" fill="none"/><path d="M654.5,589.4L819.5,657.4" stroke="#808080" stroke-width=".7" stroke-dasharray="2 3" fill="none"/><path d="M659.2,586.8L824.2,654.8" stroke="#808080" stroke-width=".7" stroke-dasharray="2 3" fill="none"/><path d="M663.9,584.1L828.9,652.1" stroke="#808080" stroke-width=".7" stroke-dasharray="2 3" fill="none"/><path d="M668.6,581.5L833.6,649.5" stroke="#808080" stroke-width=".7" stroke-dasharray="2 3" fill="none"/><path d="M673.4,578.9L838.4,646.9" stroke="#808080" stroke-width=".7" stroke-dasharray="2 3" fill="none"/><path d="M678.1,576.2L843.1,644.2" stroke="#808080" stroke-width=".7" stroke-dasharray="2 3" fill="none"/><path d="M682.8,573.6L847.8,641.6" stroke="#808080" stroke-width=".7" stroke-dasharray="2 3" fill="none"/><path d="M687.5,571.0L852.5,639.0" stroke="#808080" stroke-width=".7" stroke-dasharray="2 3" fill="none"/><path d="M692.2,568.3L857.2,636.3" stroke="#808080" stroke-width=".7" stroke-dasharray="2 3" fill="none"/><path d="M696.9,565.7L861.9,633.7" stroke="#808080" stroke-width=".7" stroke-dasharray="2 3" fill="none"/><path d="M701.6,563.1L866.6,631.1" stroke="#808080" stroke-width=".7" stroke-dasharray="2 3" fill="none"/><path d="M706.3,560.4L871.3,628.4" stroke="#808080" stroke-width=".7" stroke-dasharray="2 3" fill="none"/><path d="M711.0,557.8L876.0,625.8" stroke="#808080" stroke-width=".7" stroke-dasharray="2 3" fill="none"/><path d="M715.8,555.2L880.8,623.2" stroke="#808080" stroke-width=".7" stroke-dasharray="2 3" fill="none"/><path d="M720.5,552.5L885.5,620.5" stroke="#808080" stroke-width=".7" stroke-dasharray="2 3" fill="none"/><path d="M725.2,549.9L890.2,617.9" stroke="#808080" stroke-width=".7" stroke-dasharray="2 3" fill="none"/><path d="M729.9,547.3L894.9,615.3" stroke="#808080" stroke-width=".7" stroke-dasharray="2 3" fill="none"/><path d="M734.6,544.6L899.6,612.6" stroke="#808080" stroke-width=".7" stroke-dasharray="2 3" fill="none"/><path d="M598.0,621.0L598.0,429.5L739.3,350.5L904.3,418.5L904.3,610.0L763.0,689.0M904.3,610.0L739.3,542.0L598.0,621.0" stroke="#8c8c8c" stroke-width="1" fill="none"/><g stroke="#111" stroke-width="1" stroke-linejoin="round" shape-rendering="crispEdges"><path d="M733.4,353.8L734.1,354.1L740.0,350.8L739.3,350.5Z" fill="#ff0000"/><path d="M734.1,354.1L735.1,354.5L741.0,351.2L740.0,350.8Z" fill="#ff0000"/><path d="M735.1,354.5L736.2,354.9L742.0,351.6L741.0,351.2Z" fill="#ff0000"/><path d="M736.2,354.9L737.3,355.4L743.2,352.1L742.0,351.6Z" fill="#ff0000"/><path d="M737.3,355.4L738.2,355.7L744.1,352.5L743.2,352.1Z" fill="#ff0000"/><path d="M738.2,355.7L739.2,356.2L745.1,352.9L744.1,352.5Z" fill="#ff0000"/><path d="M739.2,356.2L740.2,356.6L746.1,353.3L745.1,352.9Z" fill="#ff0000"/><path d="M740.2,356.6L742.1,357.3L748.0,354.1L746.1,353.3Z" fill="#ff0000"/><path d="M742.1,357.3L743.8,358.0L749.7,354.8L748.0,354.1Z" fill="#ff0000"/><path d="M743.8,358.0L745.8,358.9L751.7,355.6L749.7,354.8Z" fill="#ff0000"/><path d="M745.8,358.9L747.9,359.7L753.7,356.4L751.7,355.6Z" fill="#ff0000"/><path d="M747.9,359.7L749.7,360.5L755.6,357.2L753.7,356.4Z" fill="#ff0000"/><path d="M749.7,360.5L757.4,363.6L763.2,360.4L755.6,357.2Z" fill="#ff0000"/><path d="M757.4,363.6L765.0,370.9L770.9,367.6L763.2,360.4Z" fill="#ff0a00"/><path d="M765.0,370.9L772.8,370.0L778.7,366.7L770.9,367.6Z" fill="#ff0a00"/><path d="M772.8,370.0L780.5,385.4L786.3,382.1L778.7,366.7Z" fill="#ff2000"/><path d="M780.5,385.4L795.7,412.0L801.6,408.8L786.3,382.1Z" fill="#ff7700"/><path d="M795.7,412.0L811.2,465.3L817.0,462.0L801.6,408.8Z" fill="#d3ff00"/><path d="M811.2,465.3L826.3,493.9L832.2,490.6L817.0,462.0Z" fill="#1bff00"/><path d="M826.3,493.9L841.6,506.3L847.4,503.0L832.2,490.6Z" fill="#00ff30"/><path d="M841.6,506.3L857.0,515.7L862.9,512.5L847.4,503.0Z" fill="#00ff49"/><path d="M857.0,515.7L872.5,525.2L878.3,521.9L862.9,512.5Z" fill="#00ff59"/><path d="M872.5,525.2L885.5,531.5L891.3,528.3L878.3,521.9Z" fill="#00ff64"/><path d="M885.5,531.5L898.4,537.9L904.3,534.6L891.3,528.3Z" fill="#00ff69"/><path d="M727.6,357.1L728.3,357.3L734.1,354.1L733.4,353.8Z" fill="#ff0000"/><path d="M728.3,357.3L729.3,357.8L735.1,354.5L734.1,354.1Z" fill="#ff0000"/><path d="M729.3,357.8L730.3,358.2L736.2,354.9L735.1,354.5Z" fill="#ff0000"/><path d="M730.3,358.2L731.5,358.7L737.3,355.4L736.2,354.9Z" fill="#ff0000"/><path d="M731.5,358.7L732.3,359.0L738.2,355.7L737.3,355.4Z" fill="#ff0000"/><path d="M732.3,359.0L733.4,359.4L739.2,356.2L738.2,355.7Z" fill="#ff0000"/><path d="M733.4,359.4L734.4,359.9L740.2,356.6L739.2,356.2Z" fill="#ff0000"/><path d="M734.4,359.9L736.2,360.6L742.1,357.3L740.2,356.6Z" fill="#ff0000"/><path d="M736.2,360.6L737.9,361.3L743.8,358.0L742.1,357.3Z" fill="#ff0000"/><path d="M737.9,361.3L740.0,362.2L745.8,358.9L743.8,358.0Z" fill="#ff0000"/><path d="M740.0,362.2L742.0,363.0L747.9,359.7L745.8,358.9Z" fill="#ff0000"/><path d="M742.0,363.0L743.9,363.8L749.7,360.5L747.9,359.7Z" fill="#ff0000"/><path d="M743.9,363.8L751.5,366.9L757.4,363.6L749.7,360.5Z" fill="#ff0000"/><path d="M751.5,366.9L759.2,378.2L765.0,370.9L757.4,363.6Z" fill="#ff1000"/><path d="M759.2,378.2L767.0,381.4L772.8,370.0L765.0,370.9Z" fill="#ff1b00"/><path d="M767.0,381.4L774.6,396.8L780.5,385.4L772.8,370.0Z" fill="#ff3600"/><path d="M774.6,396.8L789.9,427.5L795.7,412.0L780.5,385.4Z" fill="#ff9200"/><path d="M789.9,427.5L805.3,472.6L811.2,465.3L795.7,412.0Z" fill="#bdff00"/><path d="M805.3,472.6L820.4,499.2L826.3,493.9L811.2,465.3Z" fill="#12ff00"/><path d="M820.4,499.2L835.7,511.6L841.6,506.3L826.3,493.9Z" fill="#00ff36"/><path d="M835.7,511.6L851.2,522.1L857.0,515.7L841.6,506.3Z" fill="#00ff50"/><path d="M851.2,522.1L866.6,532.5L872.5,525.2L857.0,515.7Z" fill="#00ff63"/><path d="M866.6,532.5L879.6,541.9L885.5,531.5L872.5,525.2Z" fill="#00ff73"/><path d="M879.6,541.9L892.6,551.4L898.4,537.9L885.5,531.5Z" fill="#00ff80"/><path d="M721.6,366.5L722.3,366.8L728.3,357.3L727.6,357.1Z" fill="#ff1000"/><path d="M722.3,366.8L723.3,367.2L729.3,357.8L728.3,357.3Z" fill="#ff1000"/><path d="M723.3,367.2L724.4,367.6L730.3,358.2L729.3,357.8Z" fill="#ff1000"/><path d="M724.4,367.6L725.6,368.1L731.5,358.7L730.3,358.2Z" fill="#ff1000"/><path d="M725.6,368.1L726.4,368.4L732.3,359.0L731.5,358.7Z" fill="#ff1000"/><path d="M726.4,368.4L727.4,368.9L733.4,359.4L732.3,359.0Z" fill="#ff1000"/><path d="M727.4,368.9L728.4,369.3L734.4,359.9L733.4,359.4Z" fill="#ff1000"/><path d="M728.4,369.3L730.3,370.0L736.2,360.6L734.4,359.9Z" fill="#ff1000"/><path d="M730.3,370.0L732.0,370.7L737.9,361.3L736.2,360.6Z" fill="#ff1000"/><path d="M732.0,370.7L734.0,371.6L740.0,362.2L737.9,361.3Z" fill="#ff1000"/><path d="M734.0,371.6L736.1,374.5L742.0,363.0L740.0,362.2Z" fill="#ff1200"/><path d="M736.1,374.5L737.9,375.2L743.9,363.8L742.0,363.0Z" fill="#ff1500"/><path d="M737.9,375.2L745.6,380.4L751.5,366.9L743.9,363.8Z" fill="#ff1800"/><path d="M745.6,380.4L753.2,385.6L759.2,378.2L751.5,366.9Z" fill="#ff2800"/><path d="M753.2,385.6L761.0,392.9L767.0,381.4L759.2,378.2Z" fill="#ff3b00"/><path d="M761.0,392.9L768.7,408.3L774.6,396.8L767.0,381.4Z" fill="#ff6100"/><path d="M768.7,408.3L783.9,447.2L789.9,427.5L774.6,396.8Z" fill="#ffce00"/><path d="M783.9,447.2L799.4,482.0L805.3,472.6L789.9,427.5Z" fill="#8aff00"/><path d="M799.4,482.0L814.5,504.6L820.4,499.2L805.3,472.6Z" fill="#00ff00"/><path d="M814.5,504.6L829.8,519.0L835.7,511.6L820.4,499.2Z" fill="#00ff43"/><path d="M829.8,519.0L845.2,530.5L851.2,522.1L835.7,511.6Z" fill="#00ff63"/><path d="M845.2,530.5L860.7,541.9L866.6,532.5L851.2,522.1Z" fill="#00ff7b"/><path d="M860.7,541.9L873.7,551.4L879.6,541.9L866.6,532.5Z" fill="#00ff92"/><path d="M873.7,551.4L886.6,560.8L892.6,551.4L879.6,541.9Z" fill="#00ffa8"/><path d="M715.8,369.8L716.5,370.0L722.3,366.8L721.6,366.5Z" fill="#ff2000"/><path d="M716.5,370.0L717.5,370.5L723.3,367.2L722.3,366.8Z" fill="#ff2000"/><path d="M717.5,370.5L718.5,370.9L724.4,367.6L723.3,367.2Z" fill="#ff2000"/><path d="M718.5,370.9L719.7,371.4L725.6,368.1L724.4,367.6Z" fill="#ff2000"/><path d="M719.7,371.4L720.5,371.7L726.4,368.4L725.6,368.1Z" fill="#ff2000"/><path d="M720.5,371.7L721.6,372.1L727.4,368.9L726.4,368.4Z" fill="#ff2000"/><path d="M721.6,372.1L722.6,372.6L728.4,369.3L727.4,368.9Z" fill="#ff2000"/><path d="M722.6,372.6L724.4,373.3L730.3,370.0L728.4,369.3Z" fill="#ff2000"/><path d="M724.4,373.3L726.1,374.0L732.0,370.7L730.3,370.0Z" fill="#ff2000"/><path d="M726.1,374.0L728.2,376.9L734.0,371.6L732.0,370.7Z" fill="#ff2300"/><path d="M728.2,376.9L730.2,377.7L736.1,374.5L734.0,371.6Z" fill="#ff2800"/><path d="M730.2,377.7L732.1,378.5L737.9,375.2L736.1,374.5Z" fill="#ff2b00"/><path d="M732.1,378.5L739.7,385.7L745.6,380.4L737.9,375.2Z" fill="#ff3300"/><path d="M739.7,385.7L747.4,395.0L753.2,385.6L745.6,380.4Z" fill="#ff4600"/><path d="M747.4,395.0L755.2,404.3L761.0,392.9L753.2,385.6Z" fill="#ff5e00"/><path d="M755.2,404.3L762.8,419.7L768.7,408.3L761.0,392.9Z" fill="#ff8d00"/><path d="M762.8,419.7L778.1,454.5L783.9,447.2L768.7,408.3Z" fill="#ffff00"/><path d="M778.1,454.5L793.5,489.4L799.4,482.0L783.9,447.2Z" fill="#61ff00"/><path d="M793.5,489.4L808.6,507.8L814.5,504.6L799.4,482.0Z" fill="#00ff10"/><path d="M808.6,507.8L823.9,526.4L829.8,519.0L814.5,504.6Z" fill="#00ff51"/><path d="M823.9,526.4L839.4,538.8L845.2,530.5L829.8,519.0Z" fill="#00ff7b"/><path d="M839.4,538.8L854.8,551.3L860.7,541.9L845.2,530.5Z" fill="#00ff99"/><path d="M854.8,551.3L867.8,562.8L873.7,551.4L860.7,541.9Z" fill="#00ffb5"/><path d="M867.8,562.8L880.8,574.3L886.6,560.8L873.7,551.4Z" fill="#00ffd0"/><path d="M711.4,374.3L712.0,374.6L716.5,370.0L715.8,369.8Z" fill="#ff2500"/><path d="M712.0,374.6L713.1,375.0L717.5,370.5L716.5,370.0Z" fill="#ff2500"/><path d="M713.1,375.0L714.1,375.4L718.5,370.9L717.5,370.5Z" fill="#ff2500"/><path d="M714.1,375.4L715.3,375.9L719.7,371.4L718.5,370.9Z" fill="#ff2500"/><path d="M715.3,375.9L716.1,376.2L720.5,371.7L719.7,371.4Z" fill="#ff2500"/><path d="M716.1,376.2L717.1,376.7L721.6,372.1L720.5,371.7Z" fill="#ff2500"/><path d="M717.1,376.7L718.1,377.1L722.6,372.6L721.6,372.1Z" fill="#ff2500"/><path d="M718.1,377.1L720.0,377.8L724.4,373.3L722.6,372.6Z" fill="#ff2500"/><path d="M720.0,377.8L721.7,378.5L726.1,374.0L724.4,373.3Z" fill="#ff2500"/><path d="M721.7,378.5L723.7,381.4L728.2,376.9L726.1,374.0Z" fill="#ff2b00"/><path d="M723.7,381.4L725.8,382.3L730.2,377.7L728.2,376.9Z" fill="#ff3000"/><path d="M725.8,382.3L727.7,385.1L732.1,378.5L730.2,377.7Z" fill="#ff3300"/><path d="M727.7,385.1L735.3,392.3L739.7,385.7L732.1,378.5Z" fill="#ff4100"/><path d="M735.3,392.3L742.9,401.5L747.4,395.0L739.7,385.7Z" fill="#ff5c00"/><path d="M742.9,401.5L750.7,412.9L755.2,404.3L747.4,395.0Z" fill="#ff7f00"/><path d="M750.7,412.9L758.4,428.3L762.8,419.7L755.2,404.3Z" fill="#ffb300"/><path d="M758.4,428.3L773.7,463.1L778.1,454.5L762.8,419.7Z" fill="#deff00"/><path d="M773.7,463.1L789.1,493.9L793.5,489.4L778.1,454.5Z" fill="#4bff00"/><path d="M789.1,493.9L804.2,512.4L808.6,507.8L793.5,489.4Z" fill="#00ff1b"/><path d="M804.2,512.4L819.5,526.8L823.9,526.4L808.6,507.8Z" fill="#00ff56"/><path d="M819.5,526.8L834.9,538.3L839.4,538.8L823.9,526.4Z" fill="#00ff80"/><path d="M834.9,538.3L850.4,549.7L854.8,551.3L839.4,538.8Z" fill="#00ff9e"/><path d="M850.4,549.7L863.4,563.2L867.8,562.8L854.8,551.3Z" fill="#00ffc0"/><path d="M863.4,563.2L876.4,576.7L880.8,574.3L867.8,562.8Z" fill="#00ffe6"/><path d="M708.4,375.9L709.1,376.2L712.0,374.6L711.4,374.3Z" fill="#ff2b00"/><path d="M709.1,376.2L710.1,376.6L713.1,375.0L712.0,374.6Z" fill="#ff2b00"/><path d="M710.1,376.6L711.1,377.0L714.1,375.4L713.1,375.0Z" fill="#ff2b00"/><path d="M711.1,377.0L712.3,377.5L715.3,375.9L714.1,375.4Z" fill="#ff2b00"/><path d="M712.3,377.5L713.2,377.9L716.1,376.2L715.3,375.9Z" fill="#ff2b00"/><path d="M713.2,377.9L714.2,378.3L717.1,376.7L716.1,376.2Z" fill="#ff2b00"/><path d="M714.2,378.3L715.2,378.7L718.1,377.1L717.1,376.7Z" fill="#ff2b00"/><path d="M715.2,378.7L717.1,379.5L720.0,377.8L718.1,377.1Z" fill="#ff2b00"/><path d="M717.1,379.5L718.8,380.2L721.7,378.5L720.0,377.8Z" fill="#ff2b00"/><path d="M718.8,380.2L720.8,383.1L723.7,381.4L721.7,378.5Z" fill="#ff3000"/><path d="M720.8,383.1L722.9,383.9L725.8,382.3L723.7,381.4Z" fill="#ff3600"/><path d="M722.9,383.9L724.7,386.7L727.7,385.1L725.8,382.3Z" fill="#ff3b00"/><path d="M724.7,386.7L732.4,393.9L735.3,392.3L727.7,385.1Z" fill="#ff4b00"/><path d="M732.4,393.9L740.0,403.2L742.9,401.5L735.3,392.3Z" fill="#ff6700"/><path d="M740.0,403.2L747.8,414.6L750.7,412.9L742.9,401.5Z" fill="#ff8d00"/><path d="M747.8,414.6L755.4,432.0L758.4,428.3L750.7,412.9Z" fill="#ffc600"/><path d="M755.4,432.0L770.7,466.8L773.7,463.1L758.4,428.3Z" fill="#c8ff00"/><path d="M770.7,466.8L786.2,495.6L789.1,493.9L773.7,463.1Z" fill="#3eff00"/><path d="M786.2,495.6L801.3,514.0L804.2,512.4L789.1,493.9Z" fill="#00ff20"/><path d="M801.3,514.0L816.6,528.4L819.5,526.8L804.2,512.4Z" fill="#00ff56"/><path d="M816.6,528.4L832.0,539.9L834.9,538.3L819.5,526.8Z" fill="#00ff7a"/><path d="M832.0,539.9L847.5,551.4L850.4,549.7L834.9,538.3Z" fill="#00ff95"/><path d="M847.5,551.4L860.4,563.8L863.4,563.2L850.4,549.7Z" fill="#00ffb7"/><path d="M860.4,563.8L873.4,576.3L876.4,576.7L863.4,563.2Z" fill="#00ffdf"/><path d="M704.0,378.4L704.7,378.7L709.1,376.2L708.4,375.9Z" fill="#ff2b00"/><path d="M704.7,378.7L705.7,379.1L710.1,376.6L709.1,376.2Z" fill="#ff2b00"/><path d="M705.7,379.1L706.7,379.5L711.1,377.0L710.1,376.6Z" fill="#ff2b00"/><path d="M706.7,379.5L707.9,380.0L712.3,377.5L711.1,377.0Z" fill="#ff2b00"/><path d="M707.9,380.0L708.7,380.3L713.2,377.9L712.3,377.5Z" fill="#ff2b00"/><path d="M708.7,380.3L709.8,380.8L714.2,378.3L713.2,377.9Z" fill="#ff2b00"/><path d="M709.8,380.8L710.8,381.2L715.2,378.7L714.2,378.3Z" fill="#ff2b00"/><path d="M710.8,381.2L712.7,382.0L717.1,379.5L715.2,378.7Z" fill="#ff2b00"/><path d="M712.7,382.0L714.3,382.7L718.8,380.2L717.1,379.5Z" fill="#ff2b00"/><path d="M714.3,382.7L716.4,385.5L720.8,383.1L718.8,380.2Z" fill="#ff3000"/><path d="M716.4,385.5L718.4,388.4L722.9,383.9L720.8,383.1Z" fill="#ff3800"/><path d="M718.4,388.4L720.3,391.2L724.7,386.7L722.9,383.9Z" fill="#ff4100"/><path d="M720.3,391.2L727.9,402.5L732.4,393.9L724.7,386.7Z" fill="#ff5600"/><path d="M727.9,402.5L735.6,413.8L740.0,403.2L732.4,393.9Z" fill="#ff7a00"/><path d="M735.6,413.8L743.4,431.3L747.8,414.6L740.0,403.2Z" fill="#ffaa00"/><path d="M743.4,431.3L751.0,446.7L755.4,432.0L747.8,414.6Z" fill="#ffec00"/><path d="M751.0,446.7L766.3,475.4L770.7,466.8L755.4,432.0Z" fill="#aaff00"/><path d="M766.3,475.4L781.7,500.1L786.2,495.6L770.7,466.8Z" fill="#30ff00"/><path d="M781.7,500.1L796.8,516.5L801.3,514.0L786.2,495.6Z" fill="#00ff23"/><path d="M796.8,516.5L812.1,528.9L816.6,528.4L801.3,514.0Z" fill="#00ff54"/><path d="M812.1,528.9L827.6,539.3L832.0,539.9L816.6,528.4Z" fill="#00ff73"/><path d="M827.6,539.3L843.0,549.8L847.5,551.4L832.0,539.9Z" fill="#00ff8b"/><path d="M843.0,549.8L856.0,558.2L860.4,563.8L847.5,551.4Z" fill="#00ffa5"/><path d="M856.0,558.2L869.0,566.6L873.4,576.3L860.4,563.8Z" fill="#00ffc0"/><path d="M698.1,381.7L698.8,381.9L704.7,378.7L704.0,378.4Z" fill="#ff2b00"/><path d="M698.8,381.9L699.8,382.4L705.7,379.1L704.7,378.7Z" fill="#ff2b00"/><path d="M699.8,382.4L700.8,382.8L706.7,379.5L705.7,379.1Z" fill="#ff2b00"/><path d="M700.8,382.8L702.0,383.3L707.9,380.0L706.7,379.5Z" fill="#ff2b00"/><path d="M702.0,383.3L702.9,383.6L708.7,380.3L707.9,380.0Z" fill="#ff2b00"/><path d="M702.9,383.6L703.9,384.0L709.8,380.8L708.7,380.3Z" fill="#ff2b00"/><path d="M703.9,384.0L704.9,384.5L710.8,381.2L709.8,380.8Z" fill="#ff2b00"/><path d="M704.9,384.5L706.8,385.2L712.7,382.0L710.8,381.2Z" fill="#ff2b00"/><path d="M706.8,385.2L708.5,385.9L714.3,382.7L712.7,382.0Z" fill="#ff2b00"/><path d="M708.5,385.9L710.5,388.8L716.4,385.5L714.3,382.7Z" fill="#ff3000"/><path d="M710.5,388.8L712.6,393.7L718.4,388.4L716.4,385.5Z" fill="#ff3e00"/><path d="M712.6,393.7L714.4,396.5L720.3,391.2L718.4,388.4Z" fill="#ff4b00"/><path d="M714.4,396.5L722.1,409.9L727.9,402.5L720.3,391.2Z" fill="#ff6900"/><path d="M722.1,409.9L729.7,425.2L735.6,413.8L727.9,402.5Z" fill="#ff9d00"/><path d="M729.7,425.2L737.5,446.8L743.4,431.3L735.6,413.8Z" fill="#ffe300"/><path d="M737.5,446.8L745.2,462.2L751.0,446.7L743.4,431.3Z" fill="#ceff00"/><path d="M745.2,462.2L760.4,484.8L766.3,475.4L751.0,446.7Z" fill="#7aff00"/><path d="M760.4,484.8L775.9,505.4L781.7,500.1L766.3,475.4Z" fill="#1bff00"/><path d="M775.9,505.4L791.0,521.8L796.8,516.5L781.7,500.1Z" fill="#00ff2b"/><path d="M791.0,521.8L806.3,532.2L812.1,528.9L796.8,516.5Z" fill="#00ff54"/><path d="M806.3,532.2L821.7,543.6L827.6,539.3L812.1,528.9Z" fill="#00ff6d"/><path d="M821.7,543.6L837.2,555.1L843.0,549.8L827.6,539.3Z" fill="#00ff86"/><path d="M837.2,555.1L850.1,562.5L856.0,558.2L843.0,549.8Z" fill="#00ff99"/><path d="M850.1,562.5L863.1,569.9L869.0,566.6L856.0,558.2Z" fill="#00ffa6"/><path d="M692.2,387.0L692.9,387.3L698.8,381.9L698.1,381.7Z" fill="#ff3000"/><path d="M692.9,387.3L693.9,387.7L699.8,382.4L698.8,381.9Z" fill="#ff3000"/><path d="M693.9,387.7L694.9,388.1L700.8,382.8L699.8,382.4Z" fill="#ff3000"/><path d="M694.9,388.1L696.1,388.6L702.0,383.3L700.8,382.8Z" fill="#ff3000"/><path d="M696.1,388.6L697.0,389.0L702.9,383.6L702.0,383.3Z" fill="#ff3000"/><path d="M697.0,389.0L698.0,389.4L703.9,384.0L702.9,383.6Z" fill="#ff3000"/><path d="M698.0,389.4L699.0,389.8L704.9,384.5L703.9,384.0Z" fill="#ff3000"/><path d="M699.0,389.8L700.9,390.6L706.8,385.2L704.9,384.5Z" fill="#ff3000"/><path d="M700.9,390.6L702.6,391.3L708.5,385.9L706.8,385.2Z" fill="#ff3000"/><path d="M702.6,391.3L704.6,394.2L710.5,388.8L708.5,385.9Z" fill="#ff3600"/><path d="M704.6,394.2L706.6,399.1L712.6,393.7L710.5,388.8Z" fill="#ff4600"/><path d="M706.6,399.1L708.5,401.9L714.4,396.5L712.6,393.7Z" fill="#ff5600"/><path d="M708.5,401.9L716.1,415.2L722.1,409.9L714.4,396.5Z" fill="#ff7700"/><path d="M716.1,415.2L723.8,432.6L729.7,425.2L722.1,409.9Z" fill="#ffb500"/><path d="M723.8,432.6L731.6,458.3L737.5,446.8L729.7,425.2Z" fill="#eeff00"/><path d="M731.6,458.3L739.2,471.6L745.2,462.2L737.5,446.8Z" fill="#9aff00"/><path d="M739.2,471.6L754.5,496.2L760.4,484.8L745.2,462.2Z" fill="#4eff00"/><path d="M754.5,496.2L769.9,512.8L775.9,505.4L760.4,484.8Z" fill="#00ff00"/><path d="M769.9,512.8L785.1,527.1L791.0,521.8L775.9,505.4Z" fill="#00ff38"/><path d="M785.1,527.1L800.3,537.5L806.3,532.2L791.0,521.8Z" fill="#00ff5c"/><path d="M800.3,537.5L815.8,550.0L821.7,543.6L806.3,532.2Z" fill="#00ff76"/><path d="M815.8,550.0L831.2,562.5L837.2,555.1L821.7,543.6Z" fill="#00ff93"/><path d="M831.2,562.5L844.2,571.9L850.1,562.5L837.2,555.1Z" fill="#00ffaa"/><path d="M844.2,571.9L857.2,581.3L863.1,569.9L850.1,562.5Z" fill="#00ffbb"/><path d="M686.3,390.3L687.0,390.6L692.9,387.3L692.2,387.0Z" fill="#ff3600"/><path d="M687.0,390.6L688.0,391.0L693.9,387.7L692.9,387.3Z" fill="#ff3600"/><path d="M688.0,391.0L689.1,391.4L694.9,388.1L693.9,387.7Z" fill="#ff3600"/><path d="M689.1,391.4L690.2,391.9L696.1,388.6L694.9,388.1Z" fill="#ff3600"/><path d="M690.2,391.9L691.1,392.3L697.0,389.0L696.1,388.6Z" fill="#ff3600"/><path d="M691.1,392.3L692.1,392.7L698.0,389.4L697.0,389.0Z" fill="#ff3600"/><path d="M692.1,392.7L693.1,393.1L699.0,389.8L698.0,389.4Z" fill="#ff3600"/><path d="M693.1,393.1L695.0,393.9L700.9,390.6L699.0,389.8Z" fill="#ff3600"/><path d="M695.0,393.9L696.7,394.6L702.6,391.3L700.9,390.6Z" fill="#ff3600"/><path d="M696.7,394.6L698.7,399.5L704.6,394.2L702.6,391.3Z" fill="#ff3e00"/><path d="M698.7,399.5L700.8,402.4L706.6,399.1L704.6,394.2Z" fill="#ff4e00"/><path d="M700.8,402.4L702.6,407.2L708.5,401.9L706.6,399.1Z" fill="#ff5e00"/><path d="M702.6,407.2L710.3,424.6L716.1,415.2L708.5,401.9Z" fill="#ff8700"/><path d="M710.3,424.6L717.9,444.1L723.8,432.6L716.1,415.2Z" fill="#ffd000"/><path d="M717.9,444.1L725.7,471.7L731.6,458.3L723.8,432.6Z" fill="#c6ff00"/><path d="M725.7,471.7L733.4,487.1L739.2,471.6L731.6,458.3Z" fill="#69ff00"/><path d="M733.4,487.1L748.6,501.5L754.5,496.2L739.2,471.6Z" fill="#28ff00"/><path d="M748.6,501.5L764.1,518.1L769.9,512.8L754.5,496.2Z" fill="#00ff15"/><path d="M764.1,518.1L779.2,530.4L785.1,527.1L769.9,512.8Z" fill="#00ff43"/><path d="M779.2,530.4L794.5,544.9L800.3,537.5L785.1,527.1Z" fill="#00ff67"/><path d="M794.5,544.9L809.9,561.4L815.8,550.0L800.3,537.5Z" fill="#00ff8d"/><path d="M809.9,561.4L825.4,578.0L831.2,562.5L815.8,550.0Z" fill="#00ffb8"/><path d="M825.4,578.0L838.4,585.4L844.2,571.9L831.2,562.5Z" fill="#00ffd6"/><path d="M838.4,585.4L851.3,592.8L857.2,581.3L844.2,571.9Z" fill="#00ffe6"/><path d="M683.4,391.9L684.1,392.2L687.0,390.6L686.3,390.3Z" fill="#ff3600"/><path d="M684.1,392.2L685.1,392.6L688.0,391.0L687.0,390.6Z" fill="#ff3600"/><path d="M685.1,392.6L686.1,393.1L689.1,391.4L688.0,391.0Z" fill="#ff3600"/><path d="M686.1,393.1L687.3,393.5L690.2,391.9L689.1,391.4Z" fill="#ff3600"/><path d="M687.3,393.5L688.2,393.9L691.1,392.3L690.2,391.9Z" fill="#ff3600"/><path d="M688.2,393.9L689.2,394.3L692.1,392.7L691.1,392.3Z" fill="#ff3600"/><path d="M689.2,394.3L690.2,394.7L693.1,393.1L692.1,392.7Z" fill="#ff3600"/><path d="M690.2,394.7L692.1,395.5L695.0,393.9L693.1,393.1Z" fill="#ff3600"/><path d="M692.1,395.5L693.8,396.2L696.7,394.6L695.0,393.9Z" fill="#ff3600"/><path d="M693.8,396.2L695.8,401.1L698.7,399.5L696.7,394.6Z" fill="#ff4100"/><path d="M695.8,401.1L697.8,406.0L700.8,402.4L698.7,399.5Z" fill="#ff5400"/><path d="M697.8,406.0L699.7,410.9L702.6,407.2L700.8,402.4Z" fill="#ff6700"/><path d="M699.7,410.9L707.3,426.2L710.3,424.6L702.6,407.2Z" fill="#ff9500"/><path d="M707.3,426.2L715.0,447.7L717.9,444.1L710.3,424.6Z" fill="#ffe600"/><path d="M715.0,447.7L722.8,479.5L725.7,471.7L717.9,444.1Z" fill="#a2ff00"/><path d="M722.8,479.5L730.4,492.8L733.4,487.1L725.7,471.7Z" fill="#3eff00"/><path d="M730.4,492.8L745.7,505.2L748.6,501.5L733.4,487.1Z" fill="#0dff00"/><path d="M745.7,505.2L761.2,521.8L764.1,518.1L748.6,501.5Z" fill="#00ff20"/><path d="M761.2,521.8L776.3,534.1L779.2,530.4L764.1,518.1Z" fill="#00ff4b"/><path d="M776.3,534.1L791.5,548.5L794.5,544.9L779.2,530.4Z" fill="#00ff71"/><path d="M791.5,548.5L807.0,564.1L809.9,561.4L794.5,544.9Z" fill="#00ffa1"/><path d="M807.0,564.1L822.4,579.6L825.4,578.0L809.9,561.4Z" fill="#00ffd4"/><path d="M822.4,579.6L835.4,589.0L838.4,585.4L825.4,578.0Z" fill="#00fff6"/><path d="M835.4,589.0L848.4,598.5L851.3,592.8L838.4,585.4Z" fill="#00f6ff"/><path d="M680.4,393.6L681.1,393.9L684.1,392.2L683.4,391.9Z" fill="#ff3600"/><path d="M681.1,393.9L682.1,394.3L685.1,392.6L684.1,392.2Z" fill="#ff3600"/><path d="M682.1,394.3L683.1,394.7L686.1,393.1L685.1,392.6Z" fill="#ff3600"/><path d="M683.1,394.7L684.3,395.2L687.3,393.5L686.1,393.1Z" fill="#ff3600"/><path d="M684.3,395.2L685.2,395.6L688.2,393.9L687.3,393.5Z" fill="#ff3600"/><path d="M685.2,395.6L686.2,396.0L689.2,394.3L688.2,393.9Z" fill="#ff3600"/><path d="M686.2,396.0L687.2,396.4L690.2,394.7L689.2,394.3Z" fill="#ff3600"/><path d="M687.2,396.4L689.1,397.2L692.1,395.5L690.2,394.7Z" fill="#ff3600"/><path d="M689.1,397.2L690.8,397.9L693.8,396.2L692.1,395.5Z" fill="#ff3600"/><path d="M690.8,397.9L692.8,402.8L695.8,401.1L693.8,396.2Z" fill="#ff4100"/><path d="M692.8,402.8L694.8,407.7L697.8,406.0L695.8,401.1Z" fill="#ff5600"/><path d="M694.8,407.7L696.7,412.6L699.7,410.9L697.8,406.0Z" fill="#ff6c00"/><path d="M696.7,412.6L704.3,430.0L707.3,426.2L699.7,410.9Z" fill="#ff9a00"/><path d="M704.3,430.0L712.0,451.4L715.0,447.7L707.3,426.2Z" fill="#ffee00"/><path d="M712.0,451.4L719.8,481.1L722.8,479.5L715.0,447.7Z" fill="#95ff00"/><path d="M719.8,481.1L727.4,496.5L730.4,492.8L722.8,479.5Z" fill="#2eff00"/><path d="M727.4,496.5L742.7,508.9L745.7,505.2L730.4,492.8Z" fill="#00ff00"/><path d="M742.7,508.9L758.2,525.5L761.2,521.8L745.7,505.2Z" fill="#00ff2b"/><path d="M758.2,525.5L773.3,537.8L776.3,534.1L761.2,521.8Z" fill="#00ff56"/><path d="M773.3,537.8L788.5,552.3L791.5,548.5L776.3,534.1Z" fill="#00ff7c"/><path d="M788.5,552.3L804.0,565.8L807.0,564.1L791.5,548.5Z" fill="#00ffa8"/><path d="M804.0,565.8L819.4,579.3L822.4,579.6L807.0,564.1Z" fill="#00ffd3"/><path d="M819.4,579.3L832.4,585.6L835.4,589.0L822.4,579.6Z" fill="#00fff0"/><path d="M832.4,585.6L845.4,592.0L848.4,598.5L835.4,589.0Z" fill="#00fffd"/><path d="M677.5,395.3L678.2,395.5L681.1,393.9L680.4,393.6Z" fill="#ff3600"/><path d="M678.2,395.5L679.2,396.0L682.1,394.3L681.1,393.9Z" fill="#ff3600"/><path d="M679.2,396.0L680.2,396.4L683.1,394.7L682.1,394.3Z" fill="#ff3600"/><path d="M680.2,396.4L681.4,396.9L684.3,395.2L683.1,394.7Z" fill="#ff3600"/><path d="M681.4,396.9L682.2,397.2L685.2,395.6L684.3,395.2Z" fill="#ff3600"/><path d="M682.2,397.2L683.2,397.6L686.2,396.0L685.2,395.6Z" fill="#ff3600"/><path d="M683.2,397.6L684.3,398.0L687.2,396.4L686.2,396.0Z" fill="#ff3600"/><path d="M684.3,398.0L686.1,398.8L689.1,397.2L687.2,396.4Z" fill="#ff3600"/><path d="M686.1,398.8L687.8,399.5L690.8,397.9L689.1,397.2Z" fill="#ff3600"/><path d="M687.8,399.5L689.9,404.4L692.8,402.8L690.8,397.9Z" fill="#ff4100"/><path d="M689.9,404.4L691.9,409.3L694.8,407.7L692.8,402.8Z" fill="#ff5600"/><path d="M691.9,409.3L693.8,414.2L696.7,412.6L694.8,407.7Z" fill="#ff6c00"/><path d="M693.8,414.2L701.4,431.6L704.3,430.0L696.7,412.6Z" fill="#ff9d00"/><path d="M701.4,431.6L709.1,453.1L712.0,451.4L704.3,430.0Z" fill="#fff400"/><path d="M709.1,453.1L716.9,484.8L719.8,481.1L712.0,451.4Z" fill="#8fff00"/><path d="M716.9,484.8L724.5,500.2L727.4,496.5L719.8,481.1Z" fill="#25ff00"/><path d="M724.5,500.2L739.8,512.6L742.7,508.9L727.4,496.5Z" fill="#00ff0a"/><path d="M739.8,512.6L755.2,529.2L758.2,525.5L742.7,508.9Z" fill="#00ff36"/><path d="M755.2,529.2L770.3,541.5L773.3,537.8L758.2,525.5Z" fill="#00ff61"/><path d="M770.3,541.5L785.6,553.9L788.5,552.3L773.3,537.8Z" fill="#00ff84"/><path d="M785.6,553.9L801.1,565.4L804.0,565.8L788.5,552.3Z" fill="#00ffa8"/><path d="M801.1,565.4L816.5,576.8L819.4,579.3L804.0,565.8Z" fill="#00ffc8"/><path d="M816.5,576.8L829.5,583.2L832.4,585.6L819.4,579.3Z" fill="#00ffdb"/><path d="M829.5,583.2L842.5,589.6L845.4,592.0L832.4,585.6Z" fill="#00ffe1"/><path d="M674.5,396.9L675.2,397.2L678.2,395.5L677.5,395.3Z" fill="#ff3600"/><path d="M675.2,397.2L676.2,397.6L679.2,396.0L678.2,395.5Z" fill="#ff3600"/><path d="M676.2,397.6L677.3,398.0L680.2,396.4L679.2,396.0Z" fill="#ff3600"/><path d="M677.3,398.0L678.5,398.5L681.4,396.9L680.2,396.4Z" fill="#ff3600"/><path d="M678.5,398.5L679.3,398.8L682.2,397.2L681.4,396.9Z" fill="#ff3600"/><path d="M679.3,398.8L680.3,399.3L683.2,397.6L682.2,397.2Z" fill="#ff3600"/><path d="M680.3,399.3L681.3,399.7L684.3,398.0L683.2,397.6Z" fill="#ff3600"/><path d="M681.3,399.7L683.2,400.5L686.1,398.8L684.3,398.0Z" fill="#ff3600"/><path d="M683.2,400.5L684.9,401.2L687.8,399.5L686.1,398.8Z" fill="#ff3600"/><path d="M684.9,401.2L686.9,406.1L689.9,404.4L687.8,399.5Z" fill="#ff4100"/><path d="M686.9,406.1L689.0,411.0L691.9,409.3L689.9,404.4Z" fill="#ff5600"/><path d="M689.0,411.0L690.8,415.8L693.8,414.2L691.9,409.3Z" fill="#ff6c00"/><path d="M690.8,415.8L698.5,435.3L701.4,431.6L693.8,414.2Z" fill="#ffa000"/><path d="M698.5,435.3L706.1,456.8L709.1,453.1L701.4,431.6Z" fill="#fff900"/><path d="M706.1,456.8L713.9,488.5L716.9,484.8L709.1,453.1Z" fill="#87ff00"/><path d="M713.9,488.5L721.6,503.9L724.5,500.2L716.9,484.8Z" fill="#1bff00"/><path d="M721.6,503.9L736.8,514.2L739.8,512.6L724.5,500.2Z" fill="#00ff12"/><path d="M736.8,514.2L752.3,530.8L755.2,529.2L739.8,512.6Z" fill="#00ff3b"/><path d="M752.3,530.8L767.4,545.2L770.3,541.5L755.2,529.2Z" fill="#00ff69"/><path d="M767.4,545.2L782.7,557.6L785.6,553.9L770.3,541.5Z" fill="#00ff8d"/><path d="M782.7,557.6L798.1,566.0L801.1,565.4L785.6,553.9Z" fill="#00ffa6"/><path d="M798.1,566.0L813.6,574.4L816.5,576.8L801.1,565.4Z" fill="#00ffb9"/><path d="M813.6,574.4L826.6,581.8L829.5,583.2L816.5,576.8Z" fill="#00ffc7"/><path d="M826.6,581.8L839.5,589.2L842.5,589.6L829.5,583.2Z" fill="#00ffcf"/><path d="M671.6,398.5L672.3,398.8L675.2,397.2L674.5,396.9Z" fill="#ff3600"/><path d="M672.3,398.8L673.3,399.2L676.2,397.6L675.2,397.2Z" fill="#ff3600"/><path d="M673.3,399.2L674.3,399.6L677.3,398.0L676.2,397.6Z" fill="#ff3600"/><path d="M674.3,399.6L675.5,400.1L678.5,398.5L677.3,398.0Z" fill="#ff3600"/><path d="M675.5,400.1L676.4,400.5L679.3,398.8L678.5,398.5Z" fill="#ff3600"/><path d="M676.4,400.5L677.4,400.9L680.3,399.3L679.3,398.8Z" fill="#ff3600"/><path d="M677.4,400.9L678.4,401.3L681.3,399.7L680.3,399.3Z" fill="#ff3600"/><path d="M678.4,401.3L680.3,402.1L683.2,400.5L681.3,399.7Z" fill="#ff3600"/><path d="M680.3,402.1L682.0,404.8L684.9,401.2L683.2,400.5Z" fill="#ff3800"/><path d="M682.0,404.8L684.0,411.8L686.9,406.1L684.9,401.2Z" fill="#ff4900"/><path d="M684.0,411.8L686.0,416.7L689.0,411.0L686.9,406.1Z" fill="#ff6100"/><path d="M686.0,416.7L687.9,421.5L690.8,415.8L689.0,411.0Z" fill="#ff7700"/><path d="M687.9,421.5L695.6,439.0L698.5,435.3L690.8,415.8Z" fill="#ffaa00"/><path d="M695.6,439.0L703.2,462.5L706.1,456.8L698.5,435.3Z" fill="#f6ff00"/><path d="M703.2,462.5L711.0,492.2L713.9,488.5L706.1,456.8Z" fill="#7aff00"/><path d="M711.0,492.2L718.6,509.6L721.6,503.9L713.9,488.5Z" fill="#0dff00"/><path d="M718.6,509.6L733.9,520.0L736.8,514.2L721.6,503.9Z" fill="#00ff20"/><path d="M733.9,520.0L749.4,536.5L752.3,530.8L736.8,514.2Z" fill="#00ff46"/><path d="M749.4,536.5L764.5,550.9L767.4,545.2L752.3,530.8Z" fill="#00ff77"/><path d="M764.5,550.9L779.7,561.3L782.7,557.6L767.4,545.2Z" fill="#00ff9a"/><path d="M779.7,561.3L795.2,569.7L798.1,566.0L782.7,557.6Z" fill="#00ffad"/><path d="M795.2,569.7L810.6,578.1L813.6,574.4L798.1,566.0Z" fill="#00ffb8"/><path d="M810.6,578.1L823.6,585.4L826.6,581.8L813.6,574.4Z" fill="#00ffc3"/><path d="M823.6,585.4L836.6,592.8L839.5,589.2L826.6,581.8Z" fill="#00ffce"/><path d="M668.7,400.2L669.4,400.4L672.3,398.8L671.6,398.5Z" fill="#ff3600"/><path d="M669.4,400.4L670.4,400.9L673.3,399.2L672.3,398.8Z" fill="#ff3600"/><path d="M670.4,400.9L671.4,401.3L674.3,399.6L673.3,399.2Z" fill="#ff3600"/><path d="M671.4,401.3L672.6,401.8L675.5,400.1L674.3,399.6Z" fill="#ff3600"/><path d="M672.6,401.8L673.4,402.1L676.4,400.5L675.5,400.1Z" fill="#ff3600"/><path d="M673.4,402.1L674.5,402.5L677.4,400.9L676.4,400.5Z" fill="#ff3600"/><path d="M674.5,402.5L675.5,403.0L678.4,401.3L677.4,400.9Z" fill="#ff3600"/><path d="M675.5,403.0L677.3,403.7L680.3,402.1L678.4,401.3Z" fill="#ff3600"/><path d="M677.3,403.7L679.0,406.5L682.0,404.8L680.3,402.1Z" fill="#ff3b00"/><path d="M679.0,406.5L681.1,413.4L684.0,411.8L682.0,404.8Z" fill="#ff5100"/><path d="M681.1,413.4L683.1,418.3L686.0,416.7L684.0,411.8Z" fill="#ff6c00"/><path d="M683.1,418.3L685.0,423.2L687.9,421.5L686.0,416.7Z" fill="#ff8200"/><path d="M685.0,423.2L692.6,442.6L695.6,439.0L687.9,421.5Z" fill="#ffb500"/><path d="M692.6,442.6L700.3,464.1L703.2,462.5L695.6,439.0Z" fill="#ecff00"/><path d="M700.3,464.1L708.1,495.8L711.0,492.2L703.2,462.5Z" fill="#6fff00"/><path d="M708.1,495.8L715.7,511.2L718.6,509.6L711.0,492.2Z" fill="#02ff00"/><path d="M715.7,511.2L731.0,523.6L733.9,520.0L718.6,509.6Z" fill="#00ff2e"/><path d="M731.0,523.6L746.4,540.2L749.4,536.5L733.9,520.0Z" fill="#00ff56"/><path d="M746.4,540.2L761.5,552.5L764.5,550.9L749.4,536.5Z" fill="#00ff84"/><path d="M761.5,552.5L776.8,567.0L779.7,561.3L764.5,550.9Z" fill="#00ffa8"/><path d="M776.8,567.0L792.3,577.4L795.2,569.7L779.7,561.3Z" fill="#00ffc0"/><path d="M792.3,577.4L807.7,587.8L810.6,578.1L795.2,569.7Z" fill="#00ffd0"/><path d="M807.7,587.8L820.7,592.2L823.6,585.4L810.6,578.1Z" fill="#00ffda"/><path d="M820.7,592.2L833.7,596.5L836.6,592.8L823.6,585.4Z" fill="#00ffdd"/><path d="M665.7,401.8L666.4,402.1L669.4,400.4L668.7,400.2Z" fill="#ff3600"/><path d="M666.4,402.1L667.4,402.5L670.4,400.9L669.4,400.4Z" fill="#ff3600"/><path d="M667.4,402.5L668.4,403.0L671.4,401.3L670.4,400.9Z" fill="#ff3600"/><path d="M668.4,403.0L669.6,403.5L672.6,401.8L671.4,401.3Z" fill="#ff3600"/><path d="M669.6,403.5L670.4,403.8L673.4,402.1L672.6,401.8Z" fill="#ff3600"/><path d="M670.4,403.8L671.5,404.2L674.5,402.5L673.4,402.1Z" fill="#ff3600"/><path d="M671.5,404.2L672.5,404.6L675.5,403.0L674.5,402.5Z" fill="#ff3600"/><path d="M672.5,404.6L674.3,405.4L677.3,403.7L675.5,403.0Z" fill="#ff3600"/><path d="M674.3,405.4L676.0,408.1L679.0,406.5L677.3,403.7Z" fill="#ff3b00"/><path d="M676.0,408.1L678.1,415.1L681.1,413.4L679.0,406.5Z" fill="#ff5100"/><path d="M678.1,415.1L680.1,420.0L683.1,418.3L681.1,413.4Z" fill="#ff6c00"/><path d="M680.1,420.0L682.0,426.9L685.0,423.2L683.1,418.3Z" fill="#ff8400"/><path d="M682.0,426.9L689.6,446.3L692.6,442.6L685.0,423.2Z" fill="#ffbd00"/><path d="M689.6,446.3L697.3,467.8L700.3,464.1L692.6,442.6Z" fill="#e3ff00"/><path d="M697.3,467.8L705.1,501.6L708.1,495.8L700.3,464.1Z" fill="#64ff00"/><path d="M705.1,501.6L712.7,514.9L715.7,511.2L708.1,495.8Z" fill="#00ff08"/><path d="M712.7,514.9L728.0,527.3L731.0,523.6L715.7,511.2Z" fill="#00ff36"/><path d="M728.0,527.3L743.4,541.9L746.4,540.2L731.0,523.6Z" fill="#00ff5e"/><path d="M743.4,541.9L758.5,554.2L761.5,552.5L746.4,540.2Z" fill="#00ff87"/><path d="M758.5,554.2L773.8,572.7L776.8,567.0L761.5,552.5Z" fill="#00ffb3"/><path d="M773.8,572.7L789.3,581.1L792.3,577.4L776.8,567.0Z" fill="#00ffd6"/><path d="M789.3,581.1L804.7,589.5L807.7,587.8L792.3,577.4Z" fill="#00ffe6"/><path d="M804.7,589.5L817.7,593.9L820.7,592.2L807.7,587.8Z" fill="#00ffec"/><path d="M817.7,593.9L830.7,598.2L833.7,596.5L820.7,592.2Z" fill="#00ffe6"/><path d="M662.8,401.4L663.4,401.7L666.4,402.1L665.7,401.8Z" fill="#ff3000"/><path d="M663.4,401.7L664.5,402.1L667.4,402.5L666.4,402.1Z" fill="#ff3000"/><path d="M664.5,402.1L665.5,402.6L668.4,403.0L667.4,402.5Z" fill="#ff3000"/><path d="M665.5,402.6L666.7,403.1L669.6,403.5L668.4,403.0Z" fill="#ff3000"/><path d="M666.7,403.1L667.5,405.4L670.4,403.8L669.6,403.5Z" fill="#ff3300"/><path d="M667.5,405.4L668.5,405.9L671.5,404.2L670.4,403.8Z" fill="#ff3600"/><path d="M668.5,405.9L669.5,406.3L672.5,404.6L671.5,404.2Z" fill="#ff3600"/><path d="M669.5,406.3L671.4,409.1L674.3,405.4L672.5,404.6Z" fill="#ff3800"/><path d="M671.4,409.1L673.1,409.8L676.0,408.1L674.3,405.4Z" fill="#ff3e00"/><path d="M673.1,409.8L675.1,416.7L678.1,415.1L676.0,408.1Z" fill="#ff5100"/><path d="M675.1,416.7L677.2,423.7L680.1,420.0L678.1,415.1Z" fill="#ff6f00"/><path d="M677.2,423.7L679.0,428.5L682.0,426.9L680.1,420.0Z" fill="#ff8a00"/><path d="M679.0,428.5L686.7,448.0L689.6,446.3L682.0,426.9Z" fill="#ffc300"/><path d="M686.7,448.0L694.3,471.5L697.3,467.8L689.6,446.3Z" fill="#dbff00"/><path d="M694.3,471.5L702.1,501.2L705.1,501.6L697.3,467.8Z" fill="#5cff00"/><path d="M702.1,501.2L709.8,516.6L712.7,514.9L705.1,501.6Z" fill="#00ff0d"/><path d="M709.8,516.6L725.1,531.0L728.0,527.3L712.7,514.9Z" fill="#00ff3e"/><path d="M725.1,531.0L740.5,545.5L743.4,541.9L728.0,527.3Z" fill="#00ff67"/><path d="M740.5,545.5L755.6,555.8L758.5,554.2L743.4,541.9Z" fill="#00ff8a"/><path d="M755.6,555.8L770.9,570.3L773.8,572.7L758.5,554.2Z" fill="#00ffb3"/><path d="M770.9,570.3L786.3,575.6L789.3,581.1L773.8,572.7Z" fill="#00ffcf"/><path d="M786.3,575.6L801.8,581.0L804.7,589.5L789.3,581.1Z" fill="#00ffd2"/><path d="M801.8,581.0L814.8,585.3L817.7,593.9L804.7,589.5Z" fill="#00ffd0"/><path d="M814.8,585.3L827.8,589.6L830.7,598.2L817.7,593.9Z" fill="#00ffcb"/><path d="M659.8,403.1L660.5,403.4L663.4,401.7L662.8,401.4Z" fill="#ff2b00"/><path d="M660.5,403.4L661.5,403.8L664.5,402.1L663.4,401.7Z" fill="#ff2b00"/><path d="M661.5,403.8L662.5,404.2L665.5,402.6L664.5,402.1Z" fill="#ff2b00"/><path d="M662.5,404.2L663.7,404.7L666.7,403.1L665.5,402.6Z" fill="#ff2b00"/><path d="M663.7,404.7L664.6,407.1L667.5,405.4L666.7,403.1Z" fill="#ff3000"/><path d="M664.6,407.1L665.6,407.5L668.5,405.9L667.5,405.4Z" fill="#ff3600"/><path d="M665.6,407.5L666.6,407.9L669.5,406.3L668.5,405.9Z" fill="#ff3600"/><path d="M666.6,407.9L668.5,410.7L671.4,409.1L669.5,406.3Z" fill="#ff3b00"/><path d="M668.5,410.7L670.2,411.4L673.1,409.8L671.4,409.1Z" fill="#ff4100"/><path d="M670.2,411.4L672.2,420.4L675.1,416.7L673.1,409.8Z" fill="#ff5400"/><path d="M672.2,420.4L674.3,425.3L677.2,423.7L675.1,416.7Z" fill="#ff7400"/><path d="M674.3,425.3L676.1,432.2L679.0,428.5L677.2,423.7Z" fill="#ff8f00"/><path d="M676.1,432.2L683.8,451.7L686.7,448.0L679.0,428.5Z" fill="#ffc800"/><path d="M683.8,451.7L691.4,475.2L694.3,471.5L686.7,448.0Z" fill="#d3ff00"/><path d="M691.4,475.2L699.2,502.8L702.1,501.2L694.3,471.5Z" fill="#59ff00"/><path d="M699.2,502.8L706.8,520.2L709.8,516.6L702.1,501.2Z" fill="#00ff0d"/><path d="M706.8,520.2L722.1,536.7L725.1,531.0L709.8,516.6Z" fill="#00ff49"/><path d="M722.1,536.7L737.6,549.2L740.5,545.5L725.1,531.0Z" fill="#00ff74"/><path d="M737.6,549.2L752.7,555.4L755.6,555.8L740.5,545.5Z" fill="#00ff8d"/><path d="M752.7,555.4L768.0,565.8L770.9,570.3L755.6,555.8Z" fill="#00ffa2"/><path d="M768.0,565.8L783.4,570.1L786.3,575.6L770.9,570.3Z" fill="#00ffae"/><path d="M783.4,570.1L798.9,574.5L801.8,581.0L786.3,575.6Z" fill="#00ffa6"/><path d="M798.9,574.5L811.8,579.8L814.8,585.3L801.8,581.0Z" fill="#00ffa1"/><path d="M811.8,579.8L824.8,585.2L827.8,589.6L814.8,585.3Z" fill="#00ff9e"/><path d="M656.9,404.7L657.6,405.0L660.5,403.4L659.8,403.1Z" fill="#ff2b00"/><path d="M657.6,405.0L658.6,405.4L661.5,403.8L660.5,403.4Z" fill="#ff2b00"/><path d="M658.6,405.4L659.6,405.8L662.5,404.2L661.5,403.8Z" fill="#ff2b00"/><path d="M659.6,405.8L660.8,406.3L663.7,404.7L662.5,404.2Z" fill="#ff2b00"/><path d="M660.8,406.3L661.6,406.7L664.6,407.1L663.7,404.7Z" fill="#ff2e00"/><path d="M661.6,406.7L662.7,409.1L665.6,407.5L664.6,407.1Z" fill="#ff3300"/><path d="M662.7,409.1L663.7,409.6L666.6,407.9L665.6,407.5Z" fill="#ff3600"/><path d="M663.7,409.6L665.6,412.4L668.5,410.7L666.6,407.9Z" fill="#ff3b00"/><path d="M665.6,412.4L667.2,415.1L670.2,411.4L668.5,410.7Z" fill="#ff4300"/><path d="M667.2,415.1L669.3,424.1L672.2,420.4L670.2,411.4Z" fill="#ff5c00"/><path d="M669.3,424.1L671.3,431.0L674.3,425.3L672.2,420.4Z" fill="#ff7f00"/><path d="M671.3,431.0L673.2,437.9L676.1,432.2L674.3,425.3Z" fill="#ff9d00"/><path d="M673.2,437.9L680.8,457.4L683.8,451.7L676.1,432.2Z" fill="#ffd900"/><path d="M680.8,457.4L688.5,480.9L691.4,475.2L683.8,451.7Z" fill="#c3ff00"/><path d="M688.5,480.9L696.3,510.6L699.2,502.8L691.4,475.2Z" fill="#49ff00"/><path d="M696.3,510.6L703.9,526.0L706.8,520.2L699.2,502.8Z" fill="#00ff1d"/><path d="M703.9,526.0L719.2,540.4L722.1,536.7L706.8,520.2Z" fill="#00ff59"/><path d="M719.2,540.4L734.6,546.8L737.6,549.2L722.1,536.7Z" fill="#00ff7a"/><path d="M734.6,546.8L749.7,555.0L752.7,555.4L737.6,549.2Z" fill="#00ff84"/><path d="M749.7,555.0L765.0,565.4L768.0,565.8L752.7,555.4Z" fill="#00ff92"/><path d="M765.0,565.4L780.5,570.8L783.4,570.1L768.0,565.8Z" fill="#00ff99"/><path d="M780.5,570.8L795.9,576.1L798.9,574.5L783.4,570.1Z" fill="#00ff91"/><path d="M795.9,576.1L808.9,581.5L811.8,579.8L798.9,574.5Z" fill="#00ff8d"/><path d="M808.9,581.5L821.9,586.8L824.8,585.2L811.8,579.8Z" fill="#00ff8d"/><path d="M654.0,406.4L654.6,406.6L657.6,405.0L656.9,404.7Z" fill="#ff2b00"/><path d="M654.6,406.6L655.7,407.1L658.6,405.4L657.6,405.0Z" fill="#ff2b00"/><path d="M655.7,407.1L656.7,407.5L659.6,405.8L658.6,405.4Z" fill="#ff2b00"/><path d="M656.7,407.5L657.9,408.0L660.8,406.3L659.6,405.8Z" fill="#ff2b00"/><path d="M657.9,408.0L658.7,408.3L661.6,406.7L660.8,406.3Z" fill="#ff2b00"/><path d="M658.7,408.3L659.7,410.8L662.7,409.1L661.6,406.7Z" fill="#ff3000"/><path d="M659.7,410.8L660.8,411.2L663.7,409.6L662.7,409.1Z" fill="#ff3600"/><path d="M660.8,411.2L662.6,414.0L665.6,412.4L663.7,409.6Z" fill="#ff3b00"/><path d="M662.6,414.0L664.3,416.7L667.2,415.1L665.6,412.4Z" fill="#ff4600"/><path d="M664.3,416.7L666.4,427.8L669.3,424.1L667.2,415.1Z" fill="#ff6400"/><path d="M666.4,427.8L668.4,434.7L671.3,431.0L669.3,424.1Z" fill="#ff8d00"/><path d="M668.4,434.7L670.3,441.6L673.2,437.9L671.3,431.0Z" fill="#ffad00"/><path d="M670.3,441.6L677.9,463.1L680.8,457.4L673.2,437.9Z" fill="#ffec00"/><path d="M677.9,463.1L685.5,486.6L688.5,480.9L680.8,457.4Z" fill="#adff00"/><path d="M685.5,486.6L693.3,514.3L696.3,510.6L688.5,480.9Z" fill="#33ff00"/><path d="M693.3,514.3L701.0,529.6L703.9,526.0L696.3,510.6Z" fill="#00ff30"/><path d="M701.0,529.6L716.3,542.0L719.2,540.4L703.9,526.0Z" fill="#00ff64"/><path d="M716.3,542.0L731.7,548.4L734.6,546.8L719.2,540.4Z" fill="#00ff77"/><path d="M731.7,548.4L746.8,558.7L749.7,555.0L734.6,546.8Z" fill="#00ff7f"/><path d="M746.8,558.7L762.1,569.1L765.0,565.4L749.7,555.0Z" fill="#00ff92"/><path d="M762.1,569.1L777.5,575.4L780.5,570.8L765.0,565.4Z" fill="#00ff9b"/><path d="M777.5,575.4L793.0,581.8L795.9,576.1L780.5,570.8Z" fill="#00ff99"/><path d="M793.0,581.8L806.0,588.2L808.9,581.5L795.9,576.1Z" fill="#00ff99"/><path d="M806.0,588.2L819.0,594.6L821.9,586.8L808.9,581.5Z" fill="#00ff9b"/><path d="M651.0,406.0L651.6,406.3L654.6,406.6L654.0,406.4Z" fill="#ff2500"/><path d="M651.6,406.3L652.7,406.7L655.7,407.1L654.6,406.6Z" fill="#ff2500"/><path d="M652.7,406.7L653.7,407.1L656.7,407.5L655.7,407.1Z" fill="#ff2500"/><path d="M653.7,407.1L654.9,407.6L657.9,408.0L656.7,407.5Z" fill="#ff2500"/><path d="M654.9,407.6L655.7,410.0L658.7,408.3L657.9,408.0Z" fill="#ff2800"/><path d="M655.7,410.0L656.7,412.5L659.7,410.8L658.7,408.3Z" fill="#ff3000"/><path d="M656.7,412.5L657.8,412.9L660.8,411.2L659.7,410.8Z" fill="#ff3600"/><path d="M657.8,412.9L659.6,415.7L662.6,414.0L660.8,411.2Z" fill="#ff3b00"/><path d="M659.6,415.7L661.3,420.5L664.3,416.7L662.6,414.0Z" fill="#ff4900"/><path d="M661.3,420.5L663.4,433.5L666.4,427.8L664.3,416.7Z" fill="#ff6f00"/><path d="M663.4,433.5L665.4,438.4L668.4,434.7L666.4,427.8Z" fill="#ff9a00"/><path d="M665.4,438.4L667.3,447.4L670.3,441.6L668.4,434.7Z" fill="#ffbb00"/><path d="M667.3,447.4L674.9,468.8L677.9,463.1L670.3,441.6Z" fill="#ffff00"/><path d="M674.9,468.8L682.5,490.3L685.5,486.6L677.9,463.1Z" fill="#9aff00"/><path d="M682.5,490.3L690.3,515.9L693.3,514.3L685.5,486.6Z" fill="#28ff00"/><path d="M690.3,515.9L698.0,531.3L701.0,529.6L693.3,514.3Z" fill="#00ff36"/><path d="M698.0,531.3L713.3,543.7L716.3,542.0L701.0,529.6Z" fill="#00ff67"/><path d="M713.3,543.7L728.7,554.2L731.7,548.4L716.3,542.0Z" fill="#00ff7c"/><path d="M728.7,554.2L743.8,566.5L746.8,558.7L731.7,548.4Z" fill="#00ff8f"/><path d="M743.8,566.5L759.1,580.9L762.1,569.1L746.8,558.7Z" fill="#00ffad"/><path d="M759.1,580.9L774.5,585.3L777.5,575.4L762.1,569.1Z" fill="#00ffbb"/><path d="M774.5,585.3L790.0,589.6L793.0,581.8L777.5,575.4Z" fill="#00ffb5"/><path d="M790.0,589.6L803.0,597.0L806.0,588.2L793.0,581.8Z" fill="#00ffb7"/><path d="M803.0,597.0L816.0,604.4L819.0,594.6L806.0,588.2Z" fill="#00ffbf"/><path d="M648.0,407.6L648.7,407.9L651.6,406.3L651.0,406.0Z" fill="#ff2000"/><path d="M648.7,407.9L649.7,408.3L652.7,406.7L651.6,406.3Z" fill="#ff2000"/><path d="M649.7,408.3L650.7,408.8L653.7,407.1L652.7,406.7Z" fill="#ff2000"/><path d="M650.7,408.8L651.9,409.2L654.9,407.6L653.7,407.1Z" fill="#ff2000"/><path d="M651.9,409.2L652.8,411.6L655.7,410.0L654.9,407.6Z" fill="#ff2500"/><path d="M652.8,411.6L653.8,414.1L656.7,412.5L655.7,410.0Z" fill="#ff3000"/><path d="M653.8,414.1L654.8,414.5L657.8,412.9L656.7,412.5Z" fill="#ff3600"/><path d="M654.8,414.5L656.7,419.4L659.6,415.7L657.8,412.9Z" fill="#ff3e00"/><path d="M656.7,419.4L658.4,424.1L661.3,420.5L659.6,415.7Z" fill="#ff5100"/><path d="M658.4,424.1L660.4,437.2L663.4,433.5L661.3,420.5Z" fill="#ff7c00"/><path d="M660.4,437.2L662.5,444.1L665.4,438.4L663.4,433.5Z" fill="#ffaa00"/><path d="M662.5,444.1L664.3,453.1L667.3,447.4L665.4,438.4Z" fill="#ffce00"/><path d="M664.3,453.1L672.0,474.5L674.9,468.8L667.3,447.4Z" fill="#e9ff00"/><path d="M672.0,474.5L679.6,496.0L682.5,490.3L674.9,468.8Z" fill="#87ff00"/><path d="M679.6,496.0L687.4,517.6L690.3,515.9L682.5,490.3Z" fill="#20ff00"/><path d="M687.4,517.6L695.1,533.0L698.0,531.3L690.3,515.9Z" fill="#00ff36"/><path d="M695.1,533.0L710.3,545.4L713.3,543.7L698.0,531.3Z" fill="#00ff67"/><path d="M710.3,545.4L725.8,559.9L728.7,554.2L713.3,543.7Z" fill="#00ff87"/><path d="M725.8,559.9L740.9,574.3L743.8,566.5L728.7,554.2Z" fill="#00ffaa"/><path d="M740.9,574.3L756.2,578.5L759.1,580.9L743.8,566.5Z" fill="#00ffc6"/><path d="M756.2,578.5L771.6,582.8L774.5,585.3L759.1,580.9Z" fill="#00ffc8"/><path d="M771.6,582.8L787.1,587.2L790.0,589.6L774.5,585.3Z" fill="#00ffbd"/><path d="M787.1,587.2L800.0,593.5L803.0,597.0L790.0,589.6Z" fill="#00ffbc"/><path d="M800.0,593.5L813.0,599.9L816.0,604.4L803.0,597.0Z" fill="#00ffc4"/><path d="M645.1,409.3L645.8,409.6L648.7,407.9L648.0,407.6Z" fill="#ff2000"/><path d="M645.8,409.6L646.8,410.0L649.7,408.3L648.7,407.9Z" fill="#ff2000"/><path d="M646.8,410.0L647.8,410.4L650.7,408.8L649.7,408.3Z" fill="#ff2000"/><path d="M647.8,410.4L649.0,410.9L651.9,409.2L650.7,408.8Z" fill="#ff2000"/><path d="M649.0,410.9L649.9,413.3L652.8,411.6L651.9,409.2Z" fill="#ff2500"/><path d="M649.9,413.3L650.9,415.7L653.8,414.1L652.8,411.6Z" fill="#ff3000"/><path d="M650.9,415.7L651.9,418.2L654.8,414.5L653.8,414.1Z" fill="#ff3800"/><path d="M651.9,418.2L653.8,423.0L656.7,419.4L654.8,414.5Z" fill="#ff4600"/><path d="M653.8,423.0L655.5,427.8L658.4,424.1L656.7,419.4Z" fill="#ff5c00"/><path d="M655.5,427.8L657.5,442.9L660.4,437.2L658.4,424.1Z" fill="#ff8a00"/><path d="M657.5,442.9L659.5,449.9L662.5,444.1L660.4,437.2Z" fill="#ffbd00"/><path d="M659.5,449.9L661.4,460.8L664.3,453.1L662.5,444.1Z" fill="#ffe600"/><path d="M661.4,460.8L669.0,482.3L672.0,474.5L664.3,453.1Z" fill="#ceff00"/><path d="M669.0,482.3L676.7,503.8L679.6,496.0L672.0,474.5Z" fill="#6cff00"/><path d="M676.7,503.8L684.5,525.3L687.4,517.6L679.6,496.0Z" fill="#0aff00"/><path d="M684.5,525.3L692.1,538.7L695.1,533.0L687.4,517.6Z" fill="#00ff43"/><path d="M692.1,538.7L707.4,549.0L710.3,545.4L695.1,533.0Z" fill="#00ff6f"/><path d="M707.4,549.0L722.8,559.5L725.8,559.9L710.3,545.4Z" fill="#00ff8d"/><path d="M722.8,559.5L738.0,569.8L740.9,574.3L725.8,559.9Z" fill="#00ffad"/><path d="M738.0,569.8L753.2,578.1L756.2,578.5L740.9,574.3Z" fill="#00ffbd"/><path d="M753.2,578.1L768.7,582.4L771.6,582.8L756.2,578.5Z" fill="#00ffb8"/><path d="M768.7,582.4L784.1,586.8L787.1,587.2L771.6,582.8Z" fill="#00ffad"/><path d="M784.1,586.8L797.1,590.1L800.0,593.5L787.1,587.2Z" fill="#00ffa6"/><path d="M797.1,590.1L810.1,593.4L813.0,599.9L800.0,593.5Z" fill="#00ffa4"/><path d="M642.2,410.9L642.8,411.2L645.8,409.6L645.1,409.3Z" fill="#ff2000"/><path d="M642.8,411.2L643.9,411.6L646.8,410.0L645.8,409.6Z" fill="#ff2000"/><path d="M643.9,411.6L644.9,412.0L647.8,410.4L646.8,410.0Z" fill="#ff2000"/><path d="M644.9,412.0L646.1,412.5L649.0,410.9L647.8,410.4Z" fill="#ff2000"/><path d="M646.1,412.5L646.9,414.9L649.9,413.3L649.0,410.9Z" fill="#ff2500"/><path d="M646.9,414.9L647.9,417.4L650.9,415.7L649.9,413.3Z" fill="#ff3000"/><path d="M647.9,417.4L649.0,419.8L651.9,418.2L650.9,415.7Z" fill="#ff3b00"/><path d="M649.0,419.8L650.8,426.7L653.8,423.0L651.9,418.2Z" fill="#ff4e00"/><path d="M650.8,426.7L652.5,431.5L655.5,427.8L653.8,423.0Z" fill="#ff6700"/><path d="M652.5,431.5L654.6,448.6L657.5,442.9L655.5,427.8Z" fill="#ff9a00"/><path d="M654.6,448.6L656.6,457.6L659.5,449.9L657.5,442.9Z" fill="#ffd600"/><path d="M656.6,457.6L658.5,466.5L661.4,460.8L659.5,449.9Z" fill="#fcff00"/><path d="M658.5,466.5L666.1,490.0L669.0,482.3L661.4,460.8Z" fill="#b0ff00"/><path d="M666.1,490.0L673.7,511.5L676.7,503.8L669.0,482.3Z" fill="#4bff00"/><path d="M673.7,511.5L681.6,527.0L684.5,525.3L676.7,503.8Z" fill="#00ff0d"/><path d="M681.6,527.0L689.2,542.3L692.1,538.7L684.5,525.3Z" fill="#00ff54"/><path d="M689.2,542.3L704.5,554.8L707.4,549.0L692.1,538.7Z" fill="#00ff7f"/><path d="M704.5,554.8L719.9,563.2L722.8,559.5L707.4,549.0Z" fill="#00ff95"/><path d="M719.9,563.2L735.0,571.4L738.0,569.8L722.8,559.5Z" fill="#00ffa5"/><path d="M735.0,571.4L750.3,581.8L753.2,578.1L738.0,569.8Z" fill="#00ffb5"/><path d="M750.3,581.8L765.8,586.1L768.7,582.4L753.2,578.1Z" fill="#00ffb8"/><path d="M765.8,586.1L781.2,590.4L784.1,586.8L768.7,582.4Z" fill="#00ffad"/><path d="M781.2,590.4L794.2,592.7L797.1,590.1L784.1,586.8Z" fill="#00ffa1"/><path d="M794.2,592.7L807.2,595.0L810.1,593.4L797.1,590.1Z" fill="#00ff93"/><path d="M639.2,410.5L639.9,410.8L642.8,411.2L642.2,410.9Z" fill="#ff1b00"/><path d="M639.9,410.8L640.9,411.2L643.9,411.6L642.8,411.2Z" fill="#ff1b00"/><path d="M640.9,411.2L642.0,411.6L644.9,412.0L643.9,411.6Z" fill="#ff1b00"/><path d="M642.0,411.6L643.1,412.1L646.1,412.5L644.9,412.0Z" fill="#ff1b00"/><path d="M643.1,412.1L644.0,416.6L646.9,414.9L646.1,412.5Z" fill="#ff2300"/><path d="M644.0,416.6L645.0,421.0L647.9,417.4L646.9,414.9Z" fill="#ff3300"/><path d="M645.0,421.0L646.0,423.5L649.0,419.8L647.9,417.4Z" fill="#ff4100"/><path d="M646.0,423.5L647.9,430.4L650.8,426.7L649.0,419.8Z" fill="#ff5600"/><path d="M647.9,430.4L649.6,439.2L652.5,431.5L650.8,426.7Z" fill="#ff7700"/><path d="M649.6,439.2L651.6,456.4L654.6,448.6L652.5,431.5Z" fill="#ffb300"/><path d="M651.6,456.4L653.7,465.4L656.6,457.6L654.6,448.6Z" fill="#fff400"/><path d="M653.7,465.4L655.5,476.3L658.5,466.5L656.6,457.6Z" fill="#dbff00"/><path d="M655.5,476.3L663.2,499.8L666.1,490.0L658.5,466.5Z" fill="#8dff00"/><path d="M663.2,499.8L670.8,519.3L673.7,511.5L666.1,490.0Z" fill="#28ff00"/><path d="M670.8,519.3L678.6,530.6L681.6,527.0L673.7,511.5Z" fill="#00ff20"/><path d="M678.6,530.6L686.3,546.0L689.2,542.3L681.6,527.0Z" fill="#00ff5c"/><path d="M686.3,546.0L701.5,562.5L704.5,554.8L689.2,542.3Z" fill="#00ff92"/><path d="M701.5,562.5L717.0,568.9L719.9,563.2L704.5,554.8Z" fill="#00ffaa"/><path d="M717.0,568.9L732.1,577.1L735.0,571.4L719.9,563.2Z" fill="#00ffb3"/><path d="M732.1,577.1L747.4,589.5L750.3,581.8L735.0,571.4Z" fill="#00ffc6"/><path d="M747.4,589.5L762.8,591.8L765.8,586.1L750.3,581.8Z" fill="#00ffcb"/><path d="M762.8,591.8L778.3,594.1L781.2,590.4L765.8,586.1Z" fill="#00ffbb"/><path d="M778.3,594.1L791.3,597.4L794.2,592.7L781.2,590.4Z" fill="#00ffac"/><path d="M791.3,597.4L804.2,600.8L807.2,595.0L794.2,592.7Z" fill="#00ff9e"/><path d="M636.2,412.2L636.9,412.5L639.9,410.8L639.2,410.5Z" fill="#ff1500"/><path d="M636.9,412.5L637.9,412.9L640.9,411.2L639.9,410.8Z" fill="#ff1500"/><path d="M637.9,412.9L639.0,413.3L642.0,411.6L640.9,411.2Z" fill="#ff1500"/><path d="M639.0,413.3L640.1,413.8L643.1,412.1L642.0,411.6Z" fill="#ff1500"/><path d="M640.1,413.8L641.0,418.2L644.0,416.6L643.1,412.1Z" fill="#ff2000"/><path d="M641.0,418.2L642.0,424.8L645.0,421.0L644.0,416.6Z" fill="#ff3800"/><path d="M642.0,424.8L643.0,427.2L646.0,423.5L645.0,421.0Z" fill="#ff4b00"/><path d="M643.0,427.2L644.9,436.1L647.9,430.4L646.0,423.5Z" fill="#ff6400"/><path d="M644.9,436.1L646.6,447.0L649.6,439.2L647.9,430.4Z" fill="#ff8f00"/><path d="M646.6,447.0L648.6,462.1L651.6,456.4L649.6,439.2Z" fill="#ffd000"/><path d="M648.6,462.1L650.7,473.1L653.7,465.4L651.6,456.4Z" fill="#ecff00"/><path d="M650.7,473.1L652.5,486.1L655.5,476.3L653.7,465.4Z" fill="#b5ff00"/><path d="M652.5,486.1L660.2,511.7L663.2,499.8L655.5,476.3Z" fill="#5eff00"/><path d="M660.2,511.7L667.8,529.1L670.8,519.3L663.2,499.8Z" fill="#00ff02"/><path d="M667.8,529.1L675.6,542.5L678.6,530.6L670.8,519.3Z" fill="#00ff43"/><path d="M675.6,542.5L683.3,555.8L686.3,546.0L678.6,530.6Z" fill="#00ff7a"/><path d="M683.3,555.8L698.5,572.3L701.5,562.5L686.3,546.0Z" fill="#00ffb3"/><path d="M698.5,572.3L714.0,578.7L717.0,568.9L701.5,562.5Z" fill="#00ffce"/><path d="M714.0,578.7L729.1,587.0L732.1,577.1L717.0,568.9Z" fill="#00ffd3"/><path d="M729.1,587.0L744.4,597.3L747.4,589.5L732.1,577.1Z" fill="#00ffe6"/><path d="M744.4,597.3L759.8,600.6L762.8,591.8L747.4,589.5Z" fill="#00ffea"/><path d="M759.8,600.6L775.3,604.0L778.3,594.1L762.8,591.8Z" fill="#00ffd7"/><path d="M775.3,604.0L788.3,607.3L791.3,597.4L778.3,594.1Z" fill="#00ffc8"/><path d="M788.3,607.3L801.2,610.6L804.2,600.8L791.3,597.4Z" fill="#00ffbd"/><path d="M633.3,413.8L634.0,414.1L636.9,412.5L636.2,412.2Z" fill="#ff1500"/><path d="M634.0,414.1L635.0,414.5L637.9,412.9L636.9,412.5Z" fill="#ff1500"/><path d="M635.0,414.5L636.0,415.0L639.0,413.3L637.9,412.9Z" fill="#ff1500"/><path d="M636.0,415.0L637.2,415.4L640.1,413.8L639.0,413.3Z" fill="#ff1500"/><path d="M637.2,415.4L638.1,421.9L641.0,418.2L640.1,413.8Z" fill="#ff2300"/><path d="M638.1,421.9L639.1,428.4L642.0,424.8L641.0,418.2Z" fill="#ff4100"/><path d="M639.1,428.4L640.1,432.9L643.0,427.2L642.0,424.8Z" fill="#ff5900"/><path d="M640.1,432.9L642.0,443.9L644.9,436.1L643.0,427.2Z" fill="#ff7a00"/><path d="M642.0,443.9L643.7,456.8L646.6,447.0L644.9,436.1Z" fill="#ffb000"/><path d="M643.7,456.8L645.7,467.8L648.6,462.1L646.6,447.0Z" fill="#ffee00"/><path d="M645.7,467.8L647.7,478.9L650.7,473.1L648.6,462.1Z" fill="#d3ff00"/><path d="M647.7,478.9L649.6,495.9L652.5,486.1L650.7,473.1Z" fill="#92ff00"/><path d="M649.6,495.9L657.2,521.5L660.2,511.7L652.5,486.1Z" fill="#30ff00"/><path d="M657.2,521.5L664.9,538.9L667.8,529.1L660.2,511.7Z" fill="#00ff30"/><path d="M664.9,538.9L672.7,550.3L675.6,542.5L667.8,529.1Z" fill="#00ff6f"/><path d="M672.7,550.3L680.3,561.6L683.3,555.8L675.6,542.5Z" fill="#00ffa0"/><path d="M680.3,561.6L695.6,578.0L698.5,572.3L683.3,555.8Z" fill="#00ffd3"/><path d="M695.6,578.0L711.1,588.5L714.0,578.7L698.5,572.3Z" fill="#00fff4"/><path d="M711.1,588.5L726.2,596.7L729.1,587.0L714.0,578.7Z" fill="#00ffff"/><path d="M726.2,596.7L741.4,607.1L744.4,597.3L729.1,587.0Z" fill="#00eeff"/><path d="M741.4,607.1L756.9,610.4L759.8,600.6L744.4,597.3Z" fill="#00ecff"/><path d="M756.9,610.4L772.3,613.7L775.3,604.0L759.8,600.6Z" fill="#00fcff"/><path d="M772.3,613.7L785.3,617.1L788.3,607.3L775.3,604.0Z" fill="#00fff4"/><path d="M785.3,617.1L798.3,620.4L801.2,610.6L788.3,607.3Z" fill="#00ffe9"/><path d="M630.4,437.9L631.1,438.2L634.0,414.1L633.3,413.8Z" fill="#ff5100"/><path d="M631.1,438.2L632.1,438.6L635.0,414.5L634.0,414.1Z" fill="#ff5100"/><path d="M632.1,438.6L633.1,439.0L636.0,415.0L635.0,414.5Z" fill="#ff5100"/><path d="M633.1,439.0L634.3,439.5L637.2,415.4L636.0,415.0Z" fill="#ff5100"/><path d="M634.3,439.5L635.1,443.9L638.1,421.9L637.2,415.4Z" fill="#ff5e00"/><path d="M635.1,443.9L636.1,448.4L639.1,428.4L638.1,421.9Z" fill="#ff7a00"/><path d="M636.1,448.4L637.2,452.9L640.1,432.9L639.1,428.4Z" fill="#ff9200"/><path d="M637.2,452.9L639.0,461.8L642.0,443.9L640.1,432.9Z" fill="#ffb500"/><path d="M639.0,461.8L640.7,478.8L643.7,456.8L642.0,443.9Z" fill="#fff400"/><path d="M640.7,478.8L642.8,485.8L645.7,467.8L643.7,456.8Z" fill="#ceff00"/><path d="M642.8,485.8L644.8,496.8L647.7,478.9L645.7,467.8Z" fill="#9dff00"/><path d="M644.8,496.8L646.7,513.9L649.6,495.9L647.7,478.9Z" fill="#56ff00"/><path d="M646.7,513.9L654.3,535.3L657.2,521.5L649.6,495.9Z" fill="#00ff0a"/><path d="M654.3,535.3L662.0,546.6L664.9,538.9L657.2,521.5Z" fill="#00ff5e"/><path d="M662.0,546.6L669.8,556.0L672.7,550.3L664.9,538.9Z" fill="#00ff8f"/><path d="M669.8,556.0L677.4,567.3L680.3,561.6L672.7,550.3Z" fill="#00ffb8"/><path d="M677.4,567.3L692.7,585.8L695.6,578.0L680.3,561.6Z" fill="#00ffec"/><path d="M692.7,585.8L708.1,598.3L711.1,588.5L695.6,578.0Z" fill="#00e6ff"/><path d="M708.1,598.3L723.2,606.5L726.2,596.7L711.1,588.5Z" fill="#00d3ff"/><path d="M723.2,606.5L738.5,616.9L741.4,607.1L726.2,596.7Z" fill="#00c3ff"/><path d="M738.5,616.9L754.0,621.2L756.9,610.4L741.4,607.1Z" fill="#00bfff"/><path d="M754.0,621.2L769.4,625.6L772.3,613.7L756.9,610.4Z" fill="#00ccff"/><path d="M769.4,625.6L782.4,628.9L785.3,617.1L772.3,613.7Z" fill="#00d9ff"/><path d="M782.4,628.9L795.4,632.2L798.3,620.4L785.3,617.1Z" fill="#00e3ff"/><path d="M627.4,492.5L628.1,492.8L631.1,438.2L630.4,437.9Z" fill="#e3ff00"/><path d="M628.1,492.8L629.1,493.2L632.1,438.6L631.1,438.2Z" fill="#e3ff00"/><path d="M629.1,493.2L630.2,493.6L633.1,439.0L632.1,438.6Z" fill="#e3ff00"/><path d="M630.2,493.6L631.4,494.1L634.3,439.5L633.1,439.0Z" fill="#e3ff00"/><path d="M631.4,494.1L632.2,494.4L635.1,443.9L634.3,439.5Z" fill="#deff00"/><path d="M632.2,494.4L633.2,494.9L636.1,448.4L635.1,443.9Z" fill="#d3ff00"/><path d="M633.2,494.9L634.2,495.3L637.2,452.9L636.1,448.4Z" fill="#c8ff00"/><path d="M634.2,495.3L636.1,496.1L639.0,461.8L637.2,452.9Z" fill="#b8ff00"/><path d="M636.1,496.1L637.8,500.8L640.7,478.8L639.0,461.8Z" fill="#92ff00"/><path d="M637.8,500.8L639.8,524.1L642.8,485.8L640.7,478.8Z" fill="#51ff00"/><path d="M639.8,524.1L641.9,535.1L644.8,496.8L642.8,485.8Z" fill="#10ff00"/><path d="M641.9,535.1L643.7,546.1L646.7,513.9L644.8,496.8Z" fill="#00ff2e"/><path d="M643.7,546.1L651.4,559.4L654.3,535.3L646.7,513.9Z" fill="#00ff77"/><path d="M651.4,559.4L659.0,570.7L662.0,546.6L654.3,535.3Z" fill="#00ffb3"/><path d="M659.0,570.7L666.8,578.0L669.8,556.0L662.0,546.6Z" fill="#00ffd6"/><path d="M666.8,578.0L674.5,583.2L677.4,567.3L669.8,556.0Z" fill="#00fff1"/><path d="M674.5,583.2L689.7,595.6L692.7,585.8L677.4,567.3Z" fill="#00e6ff"/><path d="M689.7,595.6L705.2,610.1L708.1,598.3L692.7,585.8Z" fill="#00bbff"/><path d="M705.2,610.1L720.3,618.4L723.2,606.5L708.1,598.3Z" fill="#00a2ff"/><path d="M720.3,618.4L735.6,628.7L738.5,616.9L723.2,606.5Z" fill="#0092ff"/><path d="M735.6,628.7L751.0,633.1L754.0,621.2L738.5,616.9Z" fill="#008dff"/><path d="M751.0,633.1L766.5,637.4L769.4,625.6L754.0,621.2Z" fill="#0097ff"/><path d="M766.5,637.4L779.5,641.7L782.4,628.9L769.4,625.6Z" fill="#00a1ff"/><path d="M779.5,641.7L792.4,646.1L795.4,632.2L782.4,628.9Z" fill="#00a9ff"/><path d="M624.5,510.4L625.2,510.7L628.1,492.8L627.4,492.5Z" fill="#2bff00"/><path d="M625.2,510.7L626.2,511.1L629.1,493.2L628.1,492.8Z" fill="#2bff00"/><path d="M626.2,511.1L627.2,511.5L630.2,493.6L629.1,493.2Z" fill="#2bff00"/><path d="M627.2,511.5L628.4,512.0L631.4,494.1L630.2,493.6Z" fill="#2bff00"/><path d="M628.4,512.0L629.3,512.4L632.2,494.4L631.4,494.1Z" fill="#2bff00"/><path d="M629.3,512.4L630.3,512.8L633.2,494.9L632.2,494.4Z" fill="#2bff00"/><path d="M630.3,512.8L631.3,513.2L634.2,495.3L633.2,494.9Z" fill="#2bff00"/><path d="M631.3,513.2L633.2,518.1L636.1,496.1L634.2,495.3Z" fill="#25ff00"/><path d="M633.2,518.1L634.9,526.9L637.8,500.8L636.1,496.1Z" fill="#10ff00"/><path d="M634.9,526.9L636.9,544.1L639.8,524.1L637.8,500.8Z" fill="#00ff33"/><path d="M636.9,544.1L638.9,553.0L641.9,535.1L639.8,524.1Z" fill="#00ff7f"/><path d="M638.9,553.0L640.8,562.0L643.7,546.1L641.9,535.1Z" fill="#00ffb0"/><path d="M640.8,562.0L648.5,573.3L651.4,559.4L643.7,546.1Z" fill="#00ffe1"/><path d="M648.5,573.3L656.1,584.6L659.0,570.7L651.4,559.4Z" fill="#00eeff"/><path d="M656.1,584.6L663.9,593.9L666.8,578.0L659.0,570.7Z" fill="#00cbff"/><path d="M663.9,593.9L671.5,601.1L674.5,583.2L666.8,578.0Z" fill="#00b5ff"/><path d="M671.5,601.1L686.8,611.5L689.7,595.6L674.5,583.2Z" fill="#00a0ff"/><path d="M686.8,611.5L702.3,624.0L705.2,610.1L689.7,595.6Z" fill="#007fff"/><path d="M702.3,624.0L717.4,632.2L720.3,618.4L705.2,610.1Z" fill="#0067ff"/><path d="M717.4,632.2L732.6,640.6L735.6,628.7L720.3,618.4Z" fill="#0059ff"/><path d="M732.6,640.6L748.1,645.9L751.0,633.1L735.6,628.7Z" fill="#0055ff"/><path d="M748.1,645.9L763.5,651.2L766.5,637.4L751.0,633.1Z" fill="#005dff"/><path d="M763.5,651.2L776.5,655.6L779.5,641.7L766.5,637.4Z" fill="#0064ff"/><path d="M776.5,655.6L789.5,659.9L792.4,646.1L779.5,641.7Z" fill="#0069ff"/><path d="M621.5,524.3L622.2,524.6L625.2,510.7L624.5,510.4Z" fill="#00ff20"/><path d="M622.2,524.6L623.2,525.0L626.2,511.1L625.2,510.7Z" fill="#00ff20"/><path d="M623.2,525.0L624.2,525.4L627.2,511.5L626.2,511.1Z" fill="#00ff20"/><path d="M624.2,525.4L625.4,525.9L628.4,512.0L627.2,511.5Z" fill="#00ff20"/><path d="M625.4,525.9L626.3,526.3L629.3,512.4L628.4,512.0Z" fill="#00ff20"/><path d="M626.3,526.3L627.3,526.7L630.3,512.8L629.3,512.4Z" fill="#00ff20"/><path d="M627.3,526.7L628.3,527.1L631.3,513.2L630.3,512.8Z" fill="#00ff20"/><path d="M628.3,527.1L630.2,536.0L633.2,518.1L631.3,513.2Z" fill="#00ff30"/><path d="M630.2,536.0L631.9,544.9L634.9,526.9L633.2,518.1Z" fill="#00ff56"/><path d="M631.9,544.9L633.9,558.0L636.9,544.1L634.9,526.9Z" fill="#00ff92"/><path d="M633.9,558.0L635.9,564.9L638.9,553.0L636.9,544.1Z" fill="#00ffcb"/><path d="M635.9,564.9L637.8,573.8L640.8,562.0L638.9,553.0Z" fill="#00fff4"/><path d="M637.8,573.8L645.4,583.1L648.5,573.3L640.8,562.0Z" fill="#00e1ff"/><path d="M645.4,583.1L653.1,594.4L656.1,584.6L648.5,573.3Z" fill="#00b8ff"/><path d="M653.1,594.4L660.9,605.7L663.9,593.9L656.1,584.6Z" fill="#008fff"/><path d="M660.9,605.7L668.5,615.0L671.5,601.1L663.9,593.9Z" fill="#006fff"/><path d="M668.5,615.0L683.8,623.3L686.8,611.5L671.5,601.1Z" fill="#0059ff"/><path d="M683.8,623.3L699.3,633.8L702.3,624.0L686.8,611.5Z" fill="#0043ff"/><path d="M699.3,633.8L714.4,642.0L717.4,632.2L702.3,624.0Z" fill="#0030ff"/><path d="M714.4,642.0L729.6,650.4L732.6,640.6L717.4,632.2Z" fill="#0025ff"/><path d="M729.6,650.4L745.1,655.7L748.1,645.9L732.6,640.6Z" fill="#0023ff"/><path d="M745.1,655.7L760.5,661.1L763.5,651.2L748.1,645.9Z" fill="#0028ff"/><path d="M760.5,661.1L773.5,666.4L776.5,655.6L763.5,651.2Z" fill="#002cff"/><path d="M773.5,666.4L786.5,671.8L789.5,659.9L776.5,655.6Z" fill="#002fff"/><path d="M618.6,542.3L619.3,542.5L622.2,524.6L621.5,524.3Z" fill="#00ff6c"/><path d="M619.3,542.5L620.3,543.0L623.2,525.0L622.2,524.6Z" fill="#00ff6c"/><path d="M620.3,543.0L621.3,543.4L624.2,525.4L623.2,525.0Z" fill="#00ff6c"/><path d="M621.3,543.4L622.5,543.9L625.4,525.9L624.2,525.4Z" fill="#00ff6c"/><path d="M622.5,543.9L623.3,544.2L626.3,526.3L625.4,525.9Z" fill="#00ff6c"/><path d="M623.3,544.2L624.4,544.6L627.3,526.7L626.3,526.3Z" fill="#00ff6c"/><path d="M624.4,544.6L625.4,549.1L628.3,527.1L627.3,526.7Z" fill="#00ff71"/><path d="M625.4,549.1L627.2,554.0L630.2,536.0L628.3,527.1Z" fill="#00ff87"/><path d="M627.2,554.0L628.9,562.8L631.9,544.9L630.2,536.0Z" fill="#00ffad"/><path d="M628.9,562.8L631.0,571.8L633.9,558.0L631.9,544.9Z" fill="#00ffde"/><path d="M631.0,571.8L633.0,576.7L635.9,564.9L633.9,558.0Z" fill="#00f6ff"/><path d="M633.0,576.7L634.9,583.6L637.8,573.8L635.9,564.9Z" fill="#00d6ff"/><path d="M634.9,583.6L642.5,592.9L645.4,583.1L637.8,573.8Z" fill="#00b3ff"/><path d="M642.5,592.9L650.2,602.1L653.1,594.4L645.4,583.1Z" fill="#008fff"/><path d="M650.2,602.1L658.0,611.5L660.9,605.7L653.1,594.4Z" fill="#0069ff"/><path d="M658.0,611.5L665.6,620.7L668.5,615.0L660.9,605.7Z" fill="#0046ff"/><path d="M665.6,620.7L680.9,631.1L683.8,623.3L668.5,615.0Z" fill="#002eff"/><path d="M680.9,631.1L696.3,639.5L699.3,633.8L683.8,623.3Z" fill="#001dff"/><path d="M696.3,639.5L711.4,645.7L714.4,642.0L699.3,633.8Z" fill="#0012ff"/><path d="M711.4,645.7L726.7,654.1L729.6,650.4L714.4,642.0Z" fill="#000aff"/><path d="M726.7,654.1L742.2,659.4L745.1,655.7L729.6,650.4Z" fill="#0008ff"/><path d="M742.2,659.4L757.6,664.8L760.5,661.1L745.1,655.7Z" fill="#000dff"/><path d="M757.6,664.8L770.6,670.1L773.5,666.4L760.5,661.1Z" fill="#0010ff"/><path d="M770.6,670.1L783.6,675.5L786.5,671.8L773.5,666.4Z" fill="#0010ff"/><path d="M615.7,564.3L616.3,564.6L619.3,542.5L618.6,542.3Z" fill="#00ffce"/><path d="M616.3,564.6L617.4,565.0L620.3,543.0L619.3,542.5Z" fill="#00ffce"/><path d="M617.4,565.0L618.4,565.4L621.3,543.4L620.3,543.0Z" fill="#00ffce"/><path d="M618.4,565.4L619.6,565.9L622.5,543.9L621.3,543.4Z" fill="#00ffce"/><path d="M619.6,565.9L620.4,566.2L623.3,544.2L622.5,543.9Z" fill="#00ffce"/><path d="M620.4,566.2L621.4,566.7L624.4,544.6L623.3,544.2Z" fill="#00ffce"/><path d="M621.4,566.7L622.4,567.1L625.4,549.1L624.4,544.6Z" fill="#00ffd3"/><path d="M622.4,567.1L624.3,571.9L627.2,554.0L625.4,549.1Z" fill="#00ffe3"/><path d="M624.3,571.9L626.0,580.8L628.9,562.8L627.2,554.0Z" fill="#00f9ff"/><path d="M626.0,580.8L628.0,583.6L631.0,571.8L628.9,562.8Z" fill="#00d6ff"/><path d="M628.0,583.6L630.1,586.5L633.0,576.7L631.0,571.8Z" fill="#00c0ff"/><path d="M630.1,586.5L631.9,593.4L634.9,583.6L633.0,576.7Z" fill="#00a8ff"/><path d="M631.9,593.4L639.6,600.6L642.5,592.9L634.9,583.6Z" fill="#008aff"/><path d="M639.6,600.6L647.2,609.9L650.2,602.1L642.5,592.9Z" fill="#006cff"/><path d="M647.2,609.9L655.0,617.2L658.0,611.5L650.2,602.1Z" fill="#004eff"/><path d="M655.0,617.2L662.7,626.4L665.6,620.7L658.0,611.5Z" fill="#0030ff"/><path d="M662.7,626.4L678.0,634.8L680.9,631.1L665.6,620.7Z" fill="#0018ff"/><path d="M678.0,634.8L693.4,643.2L696.3,639.5L680.9,631.1Z" fill="#000aff"/><path d="M693.4,643.2L708.5,649.4L711.4,645.7L696.3,639.5Z" fill="#0005ff"/><path d="M708.5,649.4L723.8,655.7L726.7,654.1L711.4,645.7Z" fill="#0002ff"/><path d="M723.8,655.7L739.2,662.1L742.2,659.4L726.7,654.1Z" fill="#0001ff"/><path d="M739.2,662.1L754.7,668.4L757.6,664.8L742.2,659.4Z" fill="#0004ff"/><path d="M754.7,668.4L767.7,673.8L770.6,670.1L757.6,664.8Z" fill="#0005ff"/><path d="M767.7,673.8L780.7,679.1L783.6,675.5L770.6,670.1Z" fill="#0005ff"/><path d="M612.7,580.2L613.4,580.5L616.3,564.6L615.7,564.3Z" fill="#00d3ff"/><path d="M613.4,580.5L614.4,580.9L617.4,565.0L616.3,564.6Z" fill="#00d3ff"/><path d="M614.4,580.9L615.4,581.3L618.4,565.4L617.4,565.0Z" fill="#00d3ff"/><path d="M615.4,581.3L616.6,581.8L619.6,565.9L618.4,565.4Z" fill="#00d3ff"/><path d="M616.6,581.8L617.5,582.1L620.4,566.2L619.6,565.9Z" fill="#00d3ff"/><path d="M617.5,582.1L618.5,582.6L621.4,566.7L620.4,566.2Z" fill="#00d3ff"/><path d="M618.5,582.6L619.5,583.0L622.4,567.1L621.4,566.7Z" fill="#00d3ff"/><path d="M619.5,583.0L621.4,587.8L624.3,571.9L622.4,567.1Z" fill="#00c8ff"/><path d="M621.4,587.8L623.1,592.6L626.0,580.8L624.3,571.9Z" fill="#00adff"/><path d="M623.1,592.6L625.1,595.5L628.0,583.6L626.0,580.8Z" fill="#0097ff"/><path d="M625.1,595.5L627.2,598.3L630.1,586.5L628.0,583.6Z" fill="#008dff"/><path d="M627.2,598.3L629.0,603.2L631.9,593.4L630.1,586.5Z" fill="#007aff"/><path d="M629.0,603.2L636.7,610.4L639.6,600.6L631.9,593.4Z" fill="#0061ff"/><path d="M636.7,610.4L644.3,617.6L647.2,609.9L639.6,600.6Z" fill="#0049ff"/><path d="M644.3,617.6L652.1,624.9L655.0,617.2L647.2,609.9Z" fill="#0030ff"/><path d="M652.1,624.9L659.7,632.1L662.7,626.4L655.0,617.2Z" fill="#0018ff"/><path d="M659.7,632.1L675.0,638.4L678.0,634.8L662.7,626.4Z" fill="#0008ff"/><path d="M675.0,638.4L690.5,644.8L693.4,643.2L678.0,634.8Z" fill="#0002ff"/><path d="M690.5,644.8L705.6,651.0L708.5,649.4L693.4,643.2Z" fill="#0000ff"/><path d="M705.6,651.0L720.9,657.3L723.8,655.7L708.5,649.4Z" fill="#0000ff"/><path d="M720.9,657.3L736.3,663.7L739.2,662.1L723.8,655.7Z" fill="#0000ff"/><path d="M736.3,663.7L751.8,670.1L754.7,668.4L739.2,662.1Z" fill="#0000ff"/><path d="M751.8,670.1L764.7,675.4L767.7,673.8L754.7,668.4Z" fill="#0000ff"/><path d="M764.7,675.4L777.7,680.8L780.7,679.1L767.7,673.8Z" fill="#0000ff"/><path d="M609.8,594.0L610.5,594.3L613.4,580.5L612.7,580.2Z" fill="#008dff"/><path d="M610.5,594.3L611.5,594.7L614.4,580.9L613.4,580.5Z" fill="#008dff"/><path d="M611.5,594.7L612.5,595.2L615.4,581.3L614.4,580.9Z" fill="#008dff"/><path d="M612.5,595.2L613.7,595.6L616.6,581.8L615.4,581.3Z" fill="#008dff"/><path d="M613.7,595.6L614.5,596.0L617.5,582.1L616.6,581.8Z" fill="#008dff"/><path d="M614.5,596.0L615.6,596.4L618.5,582.6L617.5,582.1Z" fill="#008dff"/><path d="M615.6,596.4L616.6,596.8L619.5,583.0L618.5,582.6Z" fill="#008dff"/><path d="M616.6,596.8L618.5,599.6L621.4,587.8L619.5,583.0Z" fill="#0084ff"/><path d="M618.5,599.6L620.1,602.4L623.1,592.6L621.4,587.8Z" fill="#0074ff"/><path d="M620.1,602.4L622.2,605.3L625.1,595.5L623.1,592.6Z" fill="#0067ff"/><path d="M622.2,605.3L624.2,606.1L627.2,598.3L625.1,595.5Z" fill="#005eff"/><path d="M624.2,606.1L626.1,610.9L629.0,603.2L627.2,598.3Z" fill="#0051ff"/><path d="M626.1,610.9L633.7,616.1L636.7,610.4L629.0,603.2Z" fill="#003eff"/><path d="M633.7,616.1L641.4,623.3L644.3,617.6L636.7,610.4Z" fill="#002bff"/><path d="M641.4,623.3L649.2,628.6L652.1,624.9L644.3,617.6Z" fill="#0018ff"/><path d="M649.2,628.6L656.8,633.8L659.7,632.1L652.1,624.9Z" fill="#0008ff"/><path d="M656.8,633.8L672.1,640.1L675.0,638.4L659.7,632.1Z" fill="#0000ff"/><path d="M672.1,640.1L687.5,646.4L690.5,644.8L675.0,638.4Z" fill="#0000ff"/><path d="M687.5,646.4L702.6,652.7L705.6,651.0L690.5,644.8Z" fill="#0000ff"/><path d="M702.6,652.7L717.9,659.0L720.9,657.3L705.6,651.0Z" fill="#0000ff"/><path d="M717.9,659.0L733.4,665.3L736.3,663.7L720.9,657.3Z" fill="#0000ff"/><path d="M733.4,665.3L748.8,671.7L751.8,670.1L736.3,663.7Z" fill="#0000ff"/><path d="M748.8,671.7L761.8,677.1L764.7,675.4L751.8,670.1Z" fill="#0000ff"/><path d="M761.8,677.1L774.8,682.4L777.7,680.8L764.7,675.4Z" fill="#0000ff"/><path d="M606.8,599.8L607.5,600.1L610.5,594.3L609.8,594.0Z" fill="#0061ff"/><path d="M607.5,600.1L608.5,600.5L611.5,594.7L610.5,594.3Z" fill="#0061ff"/><path d="M608.5,600.5L609.5,600.9L612.5,595.2L611.5,594.7Z" fill="#0061ff"/><path d="M609.5,600.9L610.7,601.4L613.7,595.6L612.5,595.2Z" fill="#0061ff"/><path d="M610.7,601.4L611.5,601.7L614.5,596.0L613.7,595.6Z" fill="#0061ff"/><path d="M611.5,601.7L612.6,602.2L615.6,596.4L614.5,596.0Z" fill="#0061ff"/><path d="M612.6,602.2L613.6,602.6L616.6,596.8L615.6,596.4Z" fill="#0061ff"/><path d="M613.6,602.6L615.4,607.4L618.5,599.6L616.6,596.8Z" fill="#0059ff"/><path d="M615.4,607.4L617.1,608.1L620.1,602.4L618.5,599.6Z" fill="#004eff"/><path d="M617.1,608.1L619.2,611.0L622.2,605.3L620.1,602.4Z" fill="#0046ff"/><path d="M619.2,611.0L621.2,611.8L624.2,606.1L622.2,605.3Z" fill="#0041ff"/><path d="M621.2,611.8L623.1,616.7L626.1,610.9L624.2,606.1Z" fill="#0036ff"/><path d="M623.1,616.7L630.7,621.9L633.7,616.1L626.1,610.9Z" fill="#0025ff"/><path d="M630.7,621.9L638.4,627.1L641.4,623.3L633.7,616.1Z" fill="#0018ff"/><path d="M638.4,627.1L646.2,632.3L649.2,628.6L641.4,623.3Z" fill="#000aff"/><path d="M646.2,632.3L653.8,635.5L656.8,633.8L649.2,628.6Z" fill="#0002ff"/><path d="M653.8,635.5L669.1,641.8L672.1,640.1L656.8,633.8Z" fill="#0000ff"/><path d="M669.1,641.8L684.5,648.1L687.5,646.4L672.1,640.1Z" fill="#0000ff"/><path d="M684.5,648.1L699.6,654.4L702.6,652.7L687.5,646.4Z" fill="#0000ff"/><path d="M699.6,654.4L714.9,660.6L717.9,659.0L702.6,652.7Z" fill="#0000ff"/><path d="M714.9,660.6L730.4,667.0L733.4,665.3L717.9,659.0Z" fill="#0000ff"/><path d="M730.4,667.0L745.8,673.4L748.8,671.7L733.4,665.3Z" fill="#0000ff"/><path d="M745.8,673.4L758.8,678.7L761.8,677.1L748.8,671.7Z" fill="#0000ff"/><path d="M758.8,678.7L771.8,684.1L774.8,682.4L761.8,677.1Z" fill="#0000ff"/><path d="M603.9,605.5L604.5,605.8L607.5,600.1L606.8,599.8Z" fill="#004bff"/><path d="M604.5,605.8L605.6,606.2L608.5,600.5L607.5,600.1Z" fill="#004bff"/><path d="M605.6,606.2L606.6,606.6L609.5,600.9L608.5,600.5Z" fill="#004bff"/><path d="M606.6,606.6L607.8,607.1L610.7,601.4L609.5,600.9Z" fill="#004bff"/><path d="M607.8,607.1L608.6,607.5L611.5,601.7L610.7,601.4Z" fill="#004bff"/><path d="M608.6,607.5L609.6,607.9L612.6,602.2L611.5,601.7Z" fill="#004bff"/><path d="M609.6,607.9L610.7,608.3L613.6,602.6L612.6,602.2Z" fill="#004bff"/><path d="M610.7,608.3L612.5,613.1L615.4,607.4L613.6,602.6Z" fill="#0041ff"/><path d="M612.5,613.1L614.2,613.8L617.1,608.1L615.4,607.4Z" fill="#0036ff"/><path d="M614.2,613.8L616.3,614.7L619.2,611.0L617.1,608.1Z" fill="#0033ff"/><path d="M616.3,614.7L618.3,615.5L621.2,611.8L619.2,611.0Z" fill="#0030ff"/><path d="M618.3,615.5L620.2,620.4L623.1,616.7L621.2,611.8Z" fill="#0025ff"/><path d="M620.2,620.4L627.8,627.6L630.7,621.9L623.1,616.7Z" fill="#0012ff"/><path d="M627.8,627.6L635.4,630.7L638.4,627.1L630.7,621.9Z" fill="#0008ff"/><path d="M635.4,630.7L643.2,634.0L646.2,632.3L638.4,627.1Z" fill="#0002ff"/><path d="M643.2,634.0L650.9,637.1L653.8,635.5L646.2,632.3Z" fill="#0000ff"/><path d="M650.9,637.1L666.2,643.4L669.1,641.8L653.8,635.5Z" fill="#0000ff"/><path d="M666.2,643.4L681.6,649.8L684.5,648.1L669.1,641.8Z" fill="#0000ff"/><path d="M681.6,649.8L696.7,656.0L699.6,654.4L684.5,648.1Z" fill="#0000ff"/><path d="M696.7,656.0L712.0,662.3L714.9,660.6L699.6,654.4Z" fill="#0000ff"/><path d="M712.0,662.3L727.4,668.7L730.4,667.0L714.9,660.6Z" fill="#0000ff"/><path d="M727.4,668.7L742.9,675.0L745.8,673.4L730.4,667.0Z" fill="#0000ff"/><path d="M742.9,675.0L755.9,680.4L758.8,678.7L745.8,673.4Z" fill="#0000ff"/><path d="M755.9,680.4L768.9,685.7L771.8,684.1L758.8,678.7Z" fill="#0000ff"/><path d="M600.9,611.2L601.6,611.5L604.5,605.8L603.9,605.5Z" fill="#0036ff"/><path d="M601.6,611.5L602.6,611.9L605.6,606.2L604.5,605.8Z" fill="#0036ff"/><path d="M602.6,611.9L603.6,612.3L606.6,606.6L605.6,606.2Z" fill="#0036ff"/><path d="M603.6,612.3L604.8,612.8L607.8,607.1L606.6,606.6Z" fill="#0036ff"/><path d="M604.8,612.8L605.7,613.2L608.6,607.5L607.8,607.1Z" fill="#0036ff"/><path d="M605.7,613.2L606.7,613.6L609.6,607.9L608.6,607.5Z" fill="#0036ff"/><path d="M606.7,613.6L607.7,614.0L610.7,608.3L609.6,607.9Z" fill="#0036ff"/><path d="M607.7,614.0L609.6,614.8L612.5,613.1L610.7,608.3Z" fill="#0030ff"/><path d="M609.6,614.8L611.3,615.5L614.2,613.8L612.5,613.1Z" fill="#002bff"/><path d="M611.3,615.5L613.3,616.3L616.3,614.7L614.2,613.8Z" fill="#002bff"/><path d="M613.3,616.3L615.4,617.2L618.3,615.5L616.3,614.7Z" fill="#002bff"/><path d="M615.4,617.2L617.2,622.0L620.2,620.4L618.3,615.5Z" fill="#0020ff"/><path d="M617.2,622.0L624.9,629.2L627.8,627.6L620.2,620.4Z" fill="#000aff"/><path d="M624.9,629.2L632.5,632.4L635.4,630.7L627.8,627.6Z" fill="#0000ff"/><path d="M632.5,632.4L640.3,635.6L643.2,634.0L635.4,630.7Z" fill="#0000ff"/><path d="M640.3,635.6L648.0,638.7L650.9,637.1L643.2,634.0Z" fill="#0000ff"/><path d="M648.0,638.7L663.2,645.0L666.2,643.4L650.9,637.1Z" fill="#0000ff"/><path d="M663.2,645.0L678.7,651.4L681.6,649.8L666.2,643.4Z" fill="#0000ff"/><path d="M678.7,651.4L693.8,657.6L696.7,656.0L681.6,649.8Z" fill="#0000ff"/><path d="M693.8,657.6L709.1,663.9L712.0,662.3L696.7,656.0Z" fill="#0000ff"/><path d="M709.1,663.9L724.5,670.3L727.4,668.7L712.0,662.3Z" fill="#0000ff"/><path d="M724.5,670.3L740.0,676.7L742.9,675.0L727.4,668.7Z" fill="#0000ff"/><path d="M740.0,676.7L752.9,682.0L755.9,680.4L742.9,675.0Z" fill="#0000ff"/><path d="M752.9,682.0L765.9,687.4L768.9,685.7L755.9,680.4Z" fill="#0000ff"/><path d="M598.0,612.9L598.7,613.1L601.6,611.5L600.9,611.2Z" fill="#002bff"/><path d="M598.7,613.1L599.7,613.6L602.6,611.9L601.6,611.5Z" fill="#002bff"/><path d="M599.7,613.6L600.7,614.0L603.6,612.3L602.6,611.9Z" fill="#002bff"/><path d="M600.7,614.0L601.9,614.5L604.8,612.8L603.6,612.3Z" fill="#002bff"/><path d="M601.9,614.5L602.8,614.8L605.7,613.2L604.8,612.8Z" fill="#002bff"/><path d="M602.8,614.8L603.8,615.2L606.7,613.6L605.7,613.2Z" fill="#002bff"/><path d="M603.8,615.2L604.8,615.6L607.7,614.0L606.7,613.6Z" fill="#002bff"/><path d="M604.8,615.6L606.7,616.4L609.6,614.8L607.7,614.0Z" fill="#002bff"/><path d="M606.7,616.4L608.4,617.1L611.3,615.5L609.6,614.8Z" fill="#002bff"/><path d="M608.4,617.1L610.4,618.0L613.3,616.3L611.3,615.5Z" fill="#002bff"/><path d="M610.4,618.0L612.4,618.8L615.4,617.2L613.3,616.3Z" fill="#002bff"/><path d="M612.4,618.8L614.3,623.6L617.2,622.0L615.4,617.2Z" fill="#0020ff"/><path d="M614.3,623.6L621.9,630.9L624.9,629.2L617.2,622.0Z" fill="#000aff"/><path d="M621.9,630.9L629.6,634.0L632.5,632.4L624.9,629.2Z" fill="#0000ff"/><path d="M629.6,634.0L637.4,637.2L640.3,635.6L632.5,632.4Z" fill="#0000ff"/><path d="M637.4,637.2L645.0,640.4L648.0,638.7L640.3,635.6Z" fill="#0000ff"/><path d="M645.0,640.4L660.3,646.7L663.2,645.0L648.0,638.7Z" fill="#0000ff"/><path d="M660.3,646.7L675.7,653.0L678.7,651.4L663.2,645.0Z" fill="#0000ff"/><path d="M675.7,653.0L690.9,659.3L693.8,657.6L678.7,651.4Z" fill="#0000ff"/><path d="M690.9,659.3L706.1,665.6L709.1,663.9L693.8,657.6Z" fill="#0000ff"/><path d="M706.1,665.6L721.6,671.9L724.5,670.3L709.1,663.9Z" fill="#0000ff"/><path d="M721.6,671.9L737.0,678.3L740.0,676.7L724.5,670.3Z" fill="#0000ff"/><path d="M737.0,678.3L750.0,683.6L752.9,682.0L740.0,676.7Z" fill="#0000ff"/><path d="M750.0,683.6L763.0,689.0L765.9,687.4L752.9,682.0Z" fill="#0000ff"/></g><text x="594" y="436.5" text-anchor="end" font-family="Liberation Sans" font-size="9" fill="#00f">55.00</text><text x="907" y="424.5" font-family="Liberation Sans" font-size="9" fill="#00f">55.00</text><text x="594" y="484.5" text-anchor="end" font-family="Liberation Sans" font-size="9" fill="#00f">43.25</text><text x="907" y="472.5" font-family="Liberation Sans" font-size="9" fill="#00f">43.25</text><text x="594" y="532.5" text-anchor="end" font-family="Liberation Sans" font-size="9" fill="#00f">31.50</text><text x="907" y="520.5" font-family="Liberation Sans" font-size="9" fill="#00f">31.50</text><text x="594" y="580.5" text-anchor="end" font-family="Liberation Sans" font-size="9" fill="#00f">19.75</text><text x="907" y="568.5" font-family="Liberation Sans" font-size="9" fill="#00f">19.75</text><text x="594" y="628" text-anchor="end" font-family="Liberation Sans" font-size="9" fill="#333">0.0</text><text x="604.2" y="634.4" text-anchor="middle" font-family="Liberation Sans" font-size="9" fill="#222">9.6</text><text x="625.7" y="644" text-anchor="middle" font-family="Liberation Sans" font-size="9" fill="#222">23.2</text><text x="648" y="653.6" text-anchor="middle" font-family="Liberation Sans" font-size="9" fill="#222">36.7</text><text x="679" y="665.4" text-anchor="middle" font-family="Liberation Sans" font-size="9" fill="#222">54.7</text><text x="725.2" y="684.2" text-anchor="middle" font-family="Liberation Sans" font-size="9" fill="#222">81.9</text><text x="751.4" y="695.3" text-anchor="middle" font-family="Liberation Sans" font-size="9" fill="#222">97.2</text><text x="772.1" y="695.3" text-anchor="middle" font-family="Liberation Sans" font-size="9" fill="#f00">801</text><text x="791.2" y="685" text-anchor="middle" font-family="Liberation Sans" font-size="9" fill="#f00">2000</text><text x="812" y="673" text-anchor="middle" font-family="Liberation Sans" font-size="9" fill="#f00">3398</text><text x="832" y="662" text-anchor="middle" font-family="Liberation Sans" font-size="9" fill="#f00">4801</text><text x="853" y="650.5" text-anchor="middle" font-family="Liberation Sans" font-size="9" fill="#f00">6199</text><text x="875" y="638" text-anchor="middle" font-family="Liberation Sans" font-size="9" fill="#f00">7602</text><text x="897.5" y="626" text-anchor="middle" font-family="Liberation Sans" font-size="9" fill="#f00">9199</text></svg><svg class="a" style="left:0;top:0;pointer-events:none" width="1445" height="787" viewBox="0 0 1445 787"><defs><clipPath id="ban"><path d="M60,459.0 L70,461.4 L80,463.7 L90,465.9 L100,468.1 L110,470.1 L120,472.1 L130,474.0 L140,475.7 L150,477.4 L160,479.0 L170,480.5 L180,481.9 L190,483.2 L200,484.5 L210,485.6 L220,486.6 L230,487.6 L240,488.4 L250,489.2 L260,489.9 L270,490.5 L280,490.9 L290,491.3 L300,491.6 L310,491.9 L320,492.0 L330,492.0 L340,491.9 L350,491.8 L360,491.5 L370,491.2 L380,490.8 L390,490.2 L400,489.6 L410,488.9 L420,488.1 L430,487.2 L440,486.2 L450,485.2 L460,484.0 L470,482.7 L480,481.4 L490,479.9 L500,478.4 L510,476.8 L520,475.0 L530,473.2 L540,471.3 L550,469.3 L560,467.2 L570,465.1 L580,462.8 L590,460.4 L600,458.0 L600,580 L60,580Z"/></clipPath></defs><g opacity="0.33" fill="#000"><path d="M250.4,190.0 L253.8,184.8 L257.6,179.8 L261.7,175.1 L266.3,170.7 L271.2,166.7 L276.4,162.9 L281.9,159.6 L287.6,156.7 L293.6,154.1 L299.8,152.0 L306.1,150.3 L312.6,149.1 L319.1,148.3 L325.7,148.0 L332.3,148.1 L338.8,148.7 L345.3,149.8 L351.7,151.3 L358.0,153.2 L364.0,155.6 L369.9,158.4 L375.5,161.6 L380.8,165.1 L385.8,169.1 L390.5,173.3 L394.8,177.9 L398.8,182.8 L402.3,187.9 L405.4,193.3 L408.0,198.8 L410.2,204.5 L411.9,210.4 L413.1,216.4 L413.8,222.4 L414.0,228.4 L413.7,234.5 L412.9,240.5 L411.7,246.5 L409.9,252.3 L407.7,258.0" fill="none" stroke="#000" stroke-width="5.8"/><path d="M244.7,202.0 L243.0,207.2 L241.7,212.4 L240.7,217.8 L240.2,223.1 L240.0,228.5 L240.2,233.9 L240.9,239.3 L241.9,244.6 L243.3,249.9 L245.1,255.0" fill="none" stroke="#000" stroke-width="5.8"/><path d="M241,190 L263,183 L282,210 L298,198 L318,247" fill="none" stroke="#000" stroke-width="5" stroke-linejoin="miter"/><path d="M238,203 L260,197 L279,226 L296,211 L318,247" fill="none" stroke="#000" stroke-width="5" stroke-linejoin="miter"/><path d="M256,263 C276,257 303,264 315,282 C300,297 266,293 256,263Z"/><path d="M398,263 C378,257 351,264 339,282 C354,297 388,293 398,263Z"/><path d="M326,291 L310,319 L317,336 L326,322 L335,336 L342,319Z"/><path d="M291,343 L300,352 L303,347 L309,357 L313,351 L319,360 L323,354 L329,362 L334,354 L339,360 L344,351 L349,357 L354,347 L358,352 L363,343 L363,346 L357,360 L352,356 L347,368 L342,362 L337,372 L332,365 L327,374 L321,365 L316,372 L311,362 L306,368 L301,356 L296,360 L291,346Z"/><path d="M235.9,315.9 L273.2,341.0 L269.3,346.8 L264.3,347.1 L240.8,381.9 L242.4,386.6 L238.5,392.4 L201.2,367.3Z M239.8,350.5 A8,8 0 1,0 223.8,350.5 A8,8 0 1,0 239.8,350.5Z" fill-rule="evenodd"/><path d="M232.0,310.8 L226.3,316.9 L220.9,323.3 L215.8,329.8 L211.1,336.5 L206.6,343.5 L202.5,350.6 L198.6,358.0 L195.1,365.6 L186.0,359.4 L189.5,351.8 L193.3,344.5 L197.5,337.3 L202.0,330.4 L206.7,323.6 L211.8,317.1 L217.2,310.8 L222.9,304.7Z"/><path d="M260.3,360.1 L360.6,427.7 L351.7,441.0 L251.4,373.3Z"/><path d="M387.6,443.0 A24,24 0 1,0 339.6,443.0 A24,24 0 1,0 387.6,443.0Z M373.1,443.0 A9.5,9.5 0 1,0 354.1,443.0 A9.5,9.5 0 1,0 373.1,443.0Z" fill-rule="evenodd"/><path d="M418.1,315.9 L380.8,341.0 L384.7,346.8 L389.7,347.1 L413.2,381.9 L411.6,386.6 L415.5,392.4 L452.8,367.3Z M430.2,350.5 A8,8 0 1,0 414.2,350.5 A8,8 0 1,0 430.2,350.5Z" fill-rule="evenodd"/><path d="M422.0,310.8 L427.7,316.9 L433.1,323.3 L438.2,329.8 L442.9,336.5 L447.4,343.5 L451.5,350.6 L455.4,358.0 L458.9,365.6 L468.0,359.4 L464.5,351.8 L460.7,344.5 L456.5,337.3 L452.0,330.4 L447.3,323.6 L442.2,317.1 L436.8,310.8 L431.1,304.7Z"/><path d="M393.7,360.1 L293.4,427.7 L302.3,441.0 L402.6,373.3Z"/><path d="M314.4,443.0 A24,24 0 1,0 266.4,443.0 A24,24 0 1,0 314.4,443.0Z M299.9,443.0 A9.5,9.5 0 1,0 280.9,443.0 A9.5,9.5 0 1,0 299.9,443.0Z" fill-rule="evenodd"/><path d="M207.0,397.5 L211.4,409.9 L224.6,410.3 L214.1,418.3 L217.9,431.0 L207.0,423.5 L196.1,431.0 L199.9,418.3 L189.4,410.3 L202.6,409.9Z"/><path d="M447.0,397.5 L451.4,409.9 L464.6,410.3 L454.1,418.3 L457.9,431.0 L447.0,423.5 L436.1,431.0 L439.9,418.3 L429.4,410.3 L442.6,409.9Z"/><g clip-path="url(#ban)" font-family="Liberation Sans" font-weight="bold"><text transform="translate(78.4,563.0) scale(0.437,1.509)" font-size="100" stroke="#000" stroke-width="6.0" vector-effect="non-scaling-stroke" stroke-linejoin="miter">O</text><text transform="translate(127.4,563.0) scale(0.769,1.509)" font-size="100" stroke="#000" stroke-width="6.0" vector-effect="non-scaling-stroke" stroke-linejoin="miter">L</text><text transform="translate(202.6,563.0) scale(0.734,1.509)" font-size="100" stroke="#000" stroke-width="6.0" vector-effect="non-scaling-stroke" stroke-linejoin="miter">D</text><text transform="translate(271.8,563.0) scale(0.705,1.509)" font-size="100" stroke="#000" stroke-width="6.0" vector-effect="non-scaling-stroke" stroke-linejoin="miter">S</text><text transform="translate(336.9,563.0) scale(0.679,1.509)" font-size="100" stroke="#000" stroke-width="6.0" vector-effect="non-scaling-stroke" stroke-linejoin="miter">K</text><text transform="translate(402.5,563.0) scale(0.748,1.509)" font-size="100" stroke="#000" stroke-width="6.0" vector-effect="non-scaling-stroke" stroke-linejoin="miter">U</text><text transform="translate(472.9,563.0) scale(0.687,1.509)" font-size="100" stroke="#000" stroke-width="6.0" vector-effect="non-scaling-stroke" stroke-linejoin="miter">L</text><text transform="translate(532.9,563.0) scale(0.687,1.509)" font-size="100" stroke="#000" stroke-width="6.0" vector-effect="non-scaling-stroke" stroke-linejoin="miter">L</text></g><text transform="translate(150.7,623.8) scale(0.872,0.93)" font-size="38.4" font-family="Liberation Sans" font-weight="bold" stroke="#000" stroke-width="2.4" vector-effect="non-scaling-stroke">T</text><text transform="translate(215.8,623.8) scale(1.174,0.93)" font-size="38.4" font-family="Liberation Sans" font-weight="bold" stroke="#000" stroke-width="2.4" vector-effect="non-scaling-stroke">U</text><text transform="translate(283.9,623.8) scale(1.140,0.93)" font-size="38.4" font-family="Liberation Sans" font-weight="bold" stroke="#000" stroke-width="2.4" vector-effect="non-scaling-stroke">N</text><text transform="translate(355.9,623.8) scale(1.133,0.93)" font-size="38.4" font-family="Liberation Sans" font-weight="bold" stroke="#000" stroke-width="2.4" vector-effect="non-scaling-stroke">I</text><text transform="translate(406.0,623.8) scale(1.107,0.93)" font-size="38.4" font-family="Liberation Sans" font-weight="bold" stroke="#000" stroke-width="2.4" vector-effect="non-scaling-stroke">N</text><text transform="translate(477.3,623.8) scale(0.996,0.93)" font-size="38.4" font-family="Liberation Sans" font-weight="bold" stroke="#000" stroke-width="2.4" vector-effect="non-scaling-stroke">G</text></g></svg></body></html>
